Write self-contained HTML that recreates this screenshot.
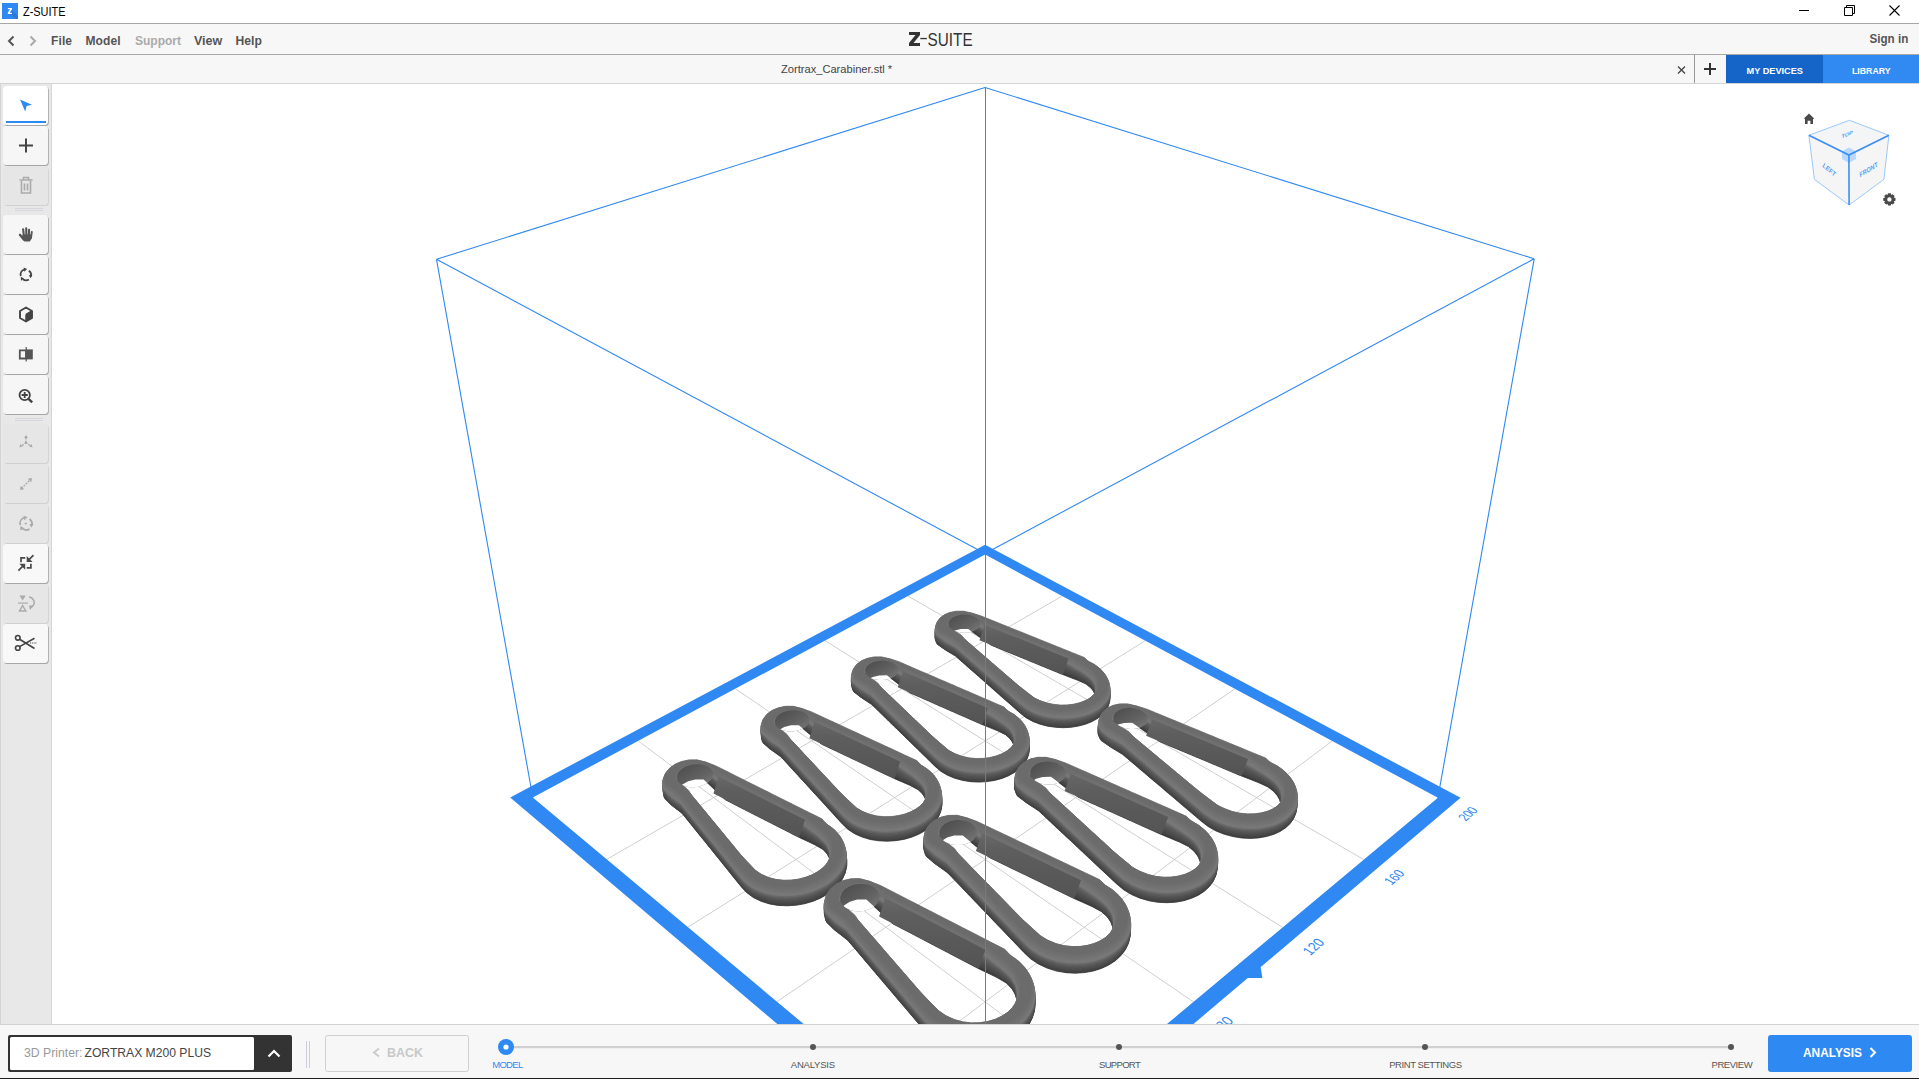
<!DOCTYPE html>
<html><head><meta charset="utf-8"><title>Z-SUITE</title>
<style>
html,body{margin:0;padding:0;width:1919px;height:1079px;overflow:hidden;background:#fff;}
svg{display:block;position:absolute;left:0;top:0;}
text{font-family:"Liberation Sans",sans-serif;}
</style></head><body>
<svg width="1919" height="1079" viewBox="0 0 1919 1079">
<defs>
<linearGradient id="holeg" x1="0" y1="0" x2="1" y2="1"><stop offset="0" stop-color="#4a4a4a"/><stop offset="0.6" stop-color="#626262"/><stop offset="1" stop-color="#7c7c7c"/></linearGradient>
<linearGradient id="gateg" x1="0" y1="0" x2="0" y2="1"><stop offset="0" stop-color="#686868"/><stop offset="0.25" stop-color="#5e5e5e"/><stop offset="1" stop-color="#545454"/></linearGradient>
<clipPath id="vp"><rect x="52" y="84" width="1867" height="940"/></clipPath>
</defs>
<!-- viewport scene -->
<g clip-path="url(#vp)">
<path d="M985,87.5L1534.2,258.8 M1534.2,258.8L985,553.5 M985,553.5L436.5,259.3 M436.5,259.3L985,87.5 M1534.2,258.8L1437.9,797.8 M436.5,259.3L532.8,797.5" stroke="#3088f2" stroke-width="1.1" fill="none"/>
<path d="M1062.2,596L606.8,859.4 M908,596L1363.8,859.6 M1145.3,640.6L687.8,927.2 M825,640.6L1282.6,927.4 M1235,688.8L777,1001.7 M735.4,688.7L1193.4,1001.9 M1332.2,741L875.6,1084.1 M638.3,740.9L1094.7,1084.3" stroke="#cfcfcf" stroke-width="1" fill="none"/>
<path d="M985.1,544.7 1460.6,797.8 985.2,1200.3 510.2,797.5Z M985.1,554.6 532.8,797.5 985.2,1175.8 1437.9,797.8Z" fill="#3088f2" fill-rule="evenodd"/>
<path d="M1246.6,978.1L1262.4,978.1L1260.4,965.8Z" fill="#3088f2"/>
<text transform="matrix(1.7569 -1.5183 2.8362 1.5229 1472.03 816.06)" font-size="4.3" text-anchor="middle" fill="#3088f2">200</text>
<text transform="matrix(1.9223 -1.6611 2.8816 1.6667 1398.44 879.66)" font-size="4.3" text-anchor="middle" fill="#3088f2">160</text>
<text transform="matrix(2.1121 -1.8252 2.9229 1.8318 1317.74 949.39)" font-size="4.3" text-anchor="middle" fill="#3088f2">120</text>
<text transform="matrix(2.3315 -2.0148 2.9579 2.0227 1228.87 1026.19)" font-size="4.3" text-anchor="middle" fill="#3088f2">80</text>
<text transform="matrix(2.5869 -2.2355 2.9839 2.2451 1130.51 1111.19)" font-size="4.3" text-anchor="middle" fill="#3088f2">40</text>
<path d="M1097,718.8 1091.6,721.8 1085.3,724.3 1078.4,726.1 1071.1,727.3 1063.3,727.7 1055.5,727.3 1047.6,726.2 1040,724.2 1032.7,721.4 1026,717.7 1020.1,713 1015.3,708.8 1011.4,705.3 1008.1,702.4 1005.2,699.9 1002.7,697.7 1000.5,695.8 998.5,694 996.7,692.4 995,690.9 993.4,689.5 991.9,688.2 990.5,686.9 989.1,685.7 987.7,684.5 986.4,683.4 985.1,682.2 983.8,681 982.5,679.9 981.2,678.7 979.8,677.5 978.4,676.2 976.9,674.9 975.3,673.5 973.6,672.1 971.8,670.5 969.9,668.8 967.7,666.9 965.3,664.7 962.5,662.3 959.3,659.5 955.5,656.1 946.9,650.9 937.2,644.3 935.5,639.5 936.3,635.3 938.9,631.7 943,628.8 948.2,626.5 954.5,625.1 961.7,624.7 969.8,625.8 980.3,630.7 987.8,633.8 994,636.3 999.1,638.3 1003.5,640.1 1007.3,641.7 1010.7,643.1 1013.8,644.3 1016.6,645.5 1019.1,646.5 1021.6,647.5 1023.8,648.4 1026,649.3 1028.1,650.2 1030.1,651 1032.1,651.8 1034.1,652.6 1036.1,653.4 1038.1,654.2 1040.1,655.1 1042.1,655.9 1044.3,656.8 1046.5,657.7 1048.8,658.6 1051.3,659.6 1054,660.7 1056.9,661.9 1060.1,663.2 1063.7,664.7 1067.7,666.3 1072.4,668.2 1077.9,670.5 1084.6,673.2 1091.6,676.5 1097.8,680.3 1102.6,684.5 1106.1,688.9 1108.3,693.4 1109.3,698.1 1109.1,702.7 1107.7,707.1 1105.2,711.4 1101.6,715.3Z M1090.6,710 1093.4,706.7 1095.2,703.2 1095.9,699.4 1095.4,695.6 1093.8,691.6 1090.7,687.8 1086,684 1078.2,680.4 1070.4,677.5 1064.5,675.2 1060,673.5 1056.5,672 1053.5,670.8 1051,669.7 1048.7,668.8 1046.6,668 1044.8,667.2 1043.1,666.5 1041.5,665.9 1040,665.2 1038.6,664.7 1037.2,664.1 1035.9,663.6 1034.6,663 1033.3,662.5 1032.1,662 1030.8,661.5 1029.5,660.9 1028.2,660.4 1026.9,659.8 1025.5,659.3 1024,658.7 1022.5,658 1020.8,657.4 1019,656.6 1017,655.8 1014.9,654.9 1012.4,653.9 1009.5,652.7 1006.2,651.4 1002.3,649.7 997.4,647.7 991.2,645.2 968.2,629 960.9,629 954.9,630.5 950.2,633 947.3,636.4 946.9,640.8 964.5,651.9 970,656.6 974.1,660.3 977.5,663.2 980.2,665.6 982.5,667.6 984.5,669.4 986.3,670.9 987.8,672.2 989.2,673.5 990.5,674.6 991.7,675.6 992.9,676.6 993.9,677.6 995,678.4 995.9,679.3 996.9,680.1 997.8,681 998.8,681.8 999.7,682.6 1000.7,683.4 1001.6,684.3 1002.6,685.1 1003.6,686 1004.7,687 1005.8,687.9 1007,689 1008.3,690.1 1009.8,691.4 1011.3,692.7 1013.1,694.3 1015.1,696 1017.5,698.1 1020.2,700.5 1023.6,703 1027.6,706.1 1032.8,710.1 1038.8,713.7 1045.3,716.5 1051.9,718.2 1058.6,719.1 1065.1,719.1 1071.4,718.5 1077.2,717.2 1082.4,715.3 1086.9,712.9Z" fill="#343434" stroke="#343434" stroke-width="0.8" fill-rule="evenodd"/>
<path d="M1097.5,717.8 1092,720.9 1085.7,723.3 1078.8,725.2 1071.4,726.4 1063.7,726.8 1055.8,726.5 1047.9,725.4 1040.2,723.4 1032.9,720.7 1026.2,717 1020.2,712.4 1015.3,708.1 1011.3,704.6 1008,701.6 1005.1,699.1 1002.6,696.9 1000.3,694.9 998.3,693.1 996.5,691.5 994.8,690 993.1,688.5 991.6,687.2 990.2,685.9 988.8,684.7 987.4,683.5 986.1,682.3 984.7,681.1 983.4,680 982.1,678.8 980.7,677.6 979.3,676.4 977.9,675.1 976.4,673.8 974.8,672.4 973.1,670.9 971.3,669.3 969.3,667.6 967.1,665.6 964.7,663.5 961.9,661 958.6,658.1 954.8,654.8 943.9,648.9 936.5,642.9 934.9,638.2 935.8,634 938.5,630.4 942.6,627.4 947.9,625.1 954.2,623.7 961.4,623.3 969.4,624.3 979.5,628.6 987.7,632.4 993.9,634.9 999,637 1003.4,638.8 1007.3,640.4 1010.7,641.8 1013.8,643 1016.6,644.2 1019.2,645.2 1021.6,646.2 1023.9,647.1 1026.1,648 1028.2,648.9 1030.2,649.7 1032.2,650.5 1034.2,651.4 1036.2,652.2 1038.2,653 1040.2,653.8 1042.3,654.6 1044.4,655.5 1046.7,656.4 1049,657.4 1051.5,658.4 1054.2,659.5 1057.1,660.7 1060.3,662 1063.9,663.5 1068,665.1 1072.7,667 1078.3,669.3 1085,672 1092.5,675.4 1098.6,679.2 1103.3,683.4 1106.8,687.8 1109,692.4 1109.9,697 1109.7,701.6 1108.3,706.1 1105.7,710.4 1102.1,714.3Z M1090.2,708.6 1093,705.3 1094.8,701.8 1095.4,698.1 1094.9,694.2 1093.2,690.3 1090,686.4 1085.1,682.7 1077.8,679.1 1071,676.3 1065.6,674.1 1061.3,672.3 1057.7,670.8 1054.6,669.5 1051.9,668.4 1049.6,667.5 1047.5,666.6 1045.6,665.8 1043.8,665.1 1042.2,664.4 1040.6,663.8 1039.2,663.2 1037.8,662.6 1036.4,662.1 1035.1,661.5 1033.8,661 1032.5,660.5 1031.2,659.9 1029.9,659.4 1028.5,658.8 1027.1,658.3 1025.7,657.7 1024.2,657 1022.6,656.4 1020.9,655.7 1019,654.9 1017,654.1 1014.7,653.2 1012.2,652.1 1009.3,650.9 1005.8,649.5 1001.8,647.8 996.7,645.8 990.4,643.2 968.2,627.8 960.9,627.9 954.9,629.3 950.3,631.8 947.4,635.3 946.9,639.6 965.5,651.1 970.8,655.8 974.9,659.3 978.2,662.2 980.9,664.5 983.2,666.5 985.1,668.2 986.9,669.7 988.4,671.1 989.8,672.3 991.1,673.4 992.2,674.4 993.3,675.4 994.4,676.3 995.4,677.2 996.4,678 997.3,678.8 998.2,679.6 999.2,680.4 1000.1,681.2 1001,682.1 1001.9,682.9 1002.9,683.7 1003.9,684.6 1005,685.5 1006.1,686.5 1007.3,687.5 1008.5,688.6 1009.9,689.8 1011.5,691.2 1013.2,692.7 1015.2,694.4 1017.5,696.4 1020.2,698.8 1023.5,701.3 1027.5,704.3 1032.5,708.2 1038.5,712 1045,714.8 1051.7,716.6 1058.3,717.5 1064.9,717.6 1071.1,717 1076.9,715.7 1082.1,713.8 1086.5,711.4Z" fill="#434343" stroke="#434343" stroke-width="0.8" fill-rule="evenodd"/>
<path d="M1097.5,716.6 1092,719.6 1085.8,722.1 1078.8,724 1071.4,725.1 1063.7,725.6 1055.8,725.3 1047.9,724.1 1040.2,722.2 1032.9,719.5 1026.2,715.8 1020.2,711.2 1015.3,706.9 1011.4,703.4 1008,700.4 1005.1,697.9 1002.6,695.7 1000.4,693.7 998.3,691.9 996.5,690.3 994.8,688.8 993.1,687.3 991.6,686 990.2,684.7 988.8,683.5 987.4,682.3 986.1,681.1 984.7,680 983.4,678.8 982.1,677.6 980.7,676.4 979.3,675.2 977.9,673.9 976.4,672.6 974.8,671.2 973.1,669.7 971.3,668.1 969.3,666.4 967.1,664.4 964.6,662.3 961.8,659.8 958.6,657 954.8,653.6 943.9,647.7 936.5,641.7 934.9,637 935.8,632.8 938.5,629.2 942.6,626.2 947.9,623.9 954.2,622.5 961.3,622.1 969.4,623.1 979.5,627.4 987.7,631.2 993.9,633.7 999,635.8 1003.4,637.6 1007.3,639.2 1010.7,640.6 1013.8,641.8 1016.6,643 1019.2,644 1021.6,645 1023.9,646 1026.1,646.9 1028.2,647.7 1030.3,648.5 1032.3,649.4 1034.3,650.2 1036.2,651 1038.2,651.8 1040.3,652.6 1042.3,653.5 1044.5,654.3 1046.7,655.2 1049,656.2 1051.5,657.2 1054.2,658.3 1057.2,659.5 1060.4,660.8 1064,662.3 1068.1,663.9 1072.8,665.9 1078.4,668.1 1085.1,670.9 1092.6,674.2 1098.7,678 1103.4,682.2 1106.8,686.6 1109,691.2 1110,695.8 1109.7,700.4 1108.3,704.9 1105.8,709.1 1102.2,713.1Z M1090.3,707.4 1093,704.1 1094.8,700.6 1095.5,696.8 1095,693 1093.2,689.1 1090,685.2 1085.1,681.5 1078.3,678 1071.9,675.2 1066.7,672.9 1062.5,671.1 1058.8,669.6 1055.7,668.3 1052.9,667.1 1050.5,666.1 1048.3,665.3 1046.4,664.4 1044.5,663.7 1042.9,663 1041.3,662.4 1039.8,661.8 1038.3,661.2 1036.9,660.6 1035.6,660 1034.2,659.5 1032.9,658.9 1031.5,658.4 1030.2,657.8 1028.8,657.2 1027.4,656.7 1025.9,656.1 1024.3,655.4 1022.7,654.7 1020.9,654 1019,653.2 1016.9,652.4 1014.6,651.4 1012,650.4 1009,649.1 1005.5,647.7 1001.3,646 996.1,643.8 989.5,641.1 968.2,626.7 960.9,626.7 954.9,628.2 950.2,630.7 947.3,634.1 946.9,638.5 965.5,649.9 970.8,654.6 974.9,658.2 978.2,661 980.9,663.4 983.2,665.3 985.2,667 986.9,668.5 988.4,669.9 989.8,671.1 991.1,672.2 992.2,673.2 993.4,674.2 994.4,675.1 995.4,676 996.4,676.8 997.3,677.6 998.2,678.4 999.2,679.2 1000.1,680 1001,680.8 1002,681.7 1002.9,682.5 1003.9,683.4 1005,684.3 1006.1,685.3 1007.3,686.3 1008.6,687.4 1010,688.6 1011.5,690 1013.2,691.5 1015.2,693.2 1017.5,695.2 1020.3,697.6 1023.5,700.1 1027.5,703.1 1032.5,706.9 1038.5,710.7 1045.1,713.6 1051.7,715.4 1058.4,716.3 1064.9,716.4 1071.1,715.8 1076.9,714.5 1082.1,712.6 1086.6,710.2Z" fill="#484848" stroke="#484848" stroke-width="0.8" fill-rule="evenodd"/>
<path d="M1097.6,715.4 1092.1,718.4 1085.8,720.9 1078.9,722.8 1071.5,723.9 1063.7,724.4 1055.8,724 1047.9,722.9 1040.2,721 1032.9,718.2 1026.2,714.6 1020.2,710 1015.4,705.7 1011.4,702.2 1008,699.2 1005.1,696.7 1002.6,694.5 1000.4,692.5 998.3,690.7 996.5,689.1 994.8,687.6 993.2,686.1 991.6,684.8 990.2,683.5 988.8,682.3 987.4,681.1 986.1,679.9 984.7,678.8 983.4,677.6 982.1,676.4 980.7,675.2 979.3,674 977.9,672.7 976.4,671.4 974.8,670 973.1,668.5 971.3,666.9 969.3,665.2 967.1,663.2 964.6,661.1 961.8,658.6 958.6,655.8 954.8,652.4 943.9,646.5 936.5,640.5 934.9,635.8 935.8,631.6 938.5,628 942.6,625 947.9,622.8 954.2,621.3 961.3,620.9 969.4,621.9 979.5,626.2 987.7,630.1 993.9,632.6 999,634.7 1003.5,636.5 1007.3,638 1010.7,639.4 1013.8,640.7 1016.6,641.8 1019.2,642.9 1021.6,643.8 1023.9,644.8 1026.1,645.7 1028.2,646.5 1030.3,647.4 1032.3,648.2 1034.3,649 1036.3,649.8 1038.3,650.6 1040.3,651.4 1042.4,652.3 1044.5,653.1 1046.7,654 1049.1,655 1051.6,656 1054.3,657.1 1057.2,658.3 1060.4,659.6 1064,661.1 1068.1,662.7 1072.8,664.7 1078.4,666.9 1085.1,669.7 1092.6,673 1098.7,676.8 1103.4,681 1106.9,685.4 1109.1,690 1110,694.6 1109.8,699.2 1108.4,703.7 1105.8,707.9 1102.2,711.9Z M1090.3,706.1 1093.1,702.9 1094.8,699.4 1095.5,695.6 1095,691.8 1093.3,687.9 1090.1,684 1085.2,680.3 1078.8,676.9 1072.7,674 1067.8,671.8 1063.7,669.9 1060,668.3 1056.7,667 1053.9,665.8 1051.4,664.8 1049.2,663.9 1047.1,663.1 1045.3,662.3 1043.5,661.6 1041.9,660.9 1040.4,660.3 1038.9,659.7 1037.4,659.1 1036,658.5 1034.7,658 1033.3,657.4 1031.9,656.8 1030.5,656.3 1029.1,655.7 1027.6,655.1 1026.1,654.4 1024.5,653.8 1022.8,653.1 1021,652.4 1019,651.6 1016.9,650.7 1014.5,649.7 1011.8,648.6 1008.7,647.3 1005.1,645.8 1000.8,644.1 995.5,641.9 988.7,639.1 968.2,625.5 960.9,625.5 954.8,627 950.2,629.5 947.3,632.9 946.9,637.3 965.5,648.7 970.8,653.4 974.9,657 978.2,659.8 980.9,662.2 983.2,664.1 985.2,665.8 986.9,667.3 988.4,668.7 989.8,669.9 991.1,671 992.3,672 993.4,673 994.4,673.9 995.4,674.8 996.4,675.6 997.3,676.4 998.3,677.2 999.2,678 1000.1,678.8 1001,679.6 1002,680.5 1002.9,681.3 1003.9,682.2 1005,683.1 1006.1,684.1 1007.3,685.1 1008.6,686.2 1010,687.4 1011.5,688.8 1013.3,690.3 1015.2,692 1017.5,694 1020.3,696.4 1023.6,698.9 1027.5,701.9 1032.6,705.7 1038.6,709.5 1045.1,712.4 1051.7,714.2 1058.4,715.1 1064.9,715.2 1071.2,714.5 1076.9,713.3 1082.1,711.4 1086.6,709Z" fill="#4d4d4d" stroke="#4d4d4d" stroke-width="0.8" fill-rule="evenodd"/>
<path d="M1097.6,714.2 1092.1,717.2 1085.9,719.7 1078.9,721.5 1071.5,722.7 1063.8,723.1 1055.9,722.8 1048,721.7 1040.3,719.8 1033,717 1026.2,713.4 1020.3,708.7 1015.4,704.5 1011.4,700.9 1008,698 1005.1,695.5 1002.6,693.2 1000.4,691.3 998.3,689.5 996.5,687.9 994.8,686.4 993.2,684.9 991.6,683.6 990.2,682.3 988.8,681.1 987.4,679.9 986.1,678.7 984.7,677.5 983.4,676.4 982.1,675.2 980.7,674 979.3,672.8 977.9,671.5 976.4,670.2 974.8,668.8 973.1,667.3 971.3,665.7 969.3,664 967.1,662 964.6,659.9 961.8,657.4 958.6,654.6 954.7,651.2 943.8,645.3 936.4,639.3 934.9,634.6 935.8,630.5 938.5,626.8 942.6,623.9 947.9,621.6 954.1,620.2 961.3,619.7 969.4,620.7 979.5,625 987.7,628.9 993.9,631.4 999,633.5 1003.5,635.3 1007.3,636.8 1010.7,638.2 1013.8,639.5 1016.6,640.6 1019.2,641.7 1021.7,642.7 1024,643.6 1026.1,644.5 1028.3,645.3 1030.3,646.2 1032.3,647 1034.3,647.8 1036.3,648.6 1038.3,649.4 1040.3,650.2 1042.4,651.1 1044.5,651.9 1046.8,652.9 1049.1,653.8 1051.6,654.8 1054.3,655.9 1057.2,657.1 1060.4,658.4 1064.1,659.9 1068.1,661.5 1072.9,663.5 1078.4,665.7 1085.2,668.5 1092.7,671.8 1098.8,675.6 1103.5,679.8 1106.9,684.2 1109.1,688.7 1110.1,693.4 1109.9,698 1108.4,702.5 1105.9,706.7 1102.3,710.6Z M1090.4,704.9 1093.1,701.7 1094.9,698.2 1095.6,694.4 1095.1,690.6 1093.3,686.7 1090.1,682.8 1085.2,679.1 1079.3,675.7 1073.5,672.9 1068.8,670.6 1064.9,668.7 1061.1,667.1 1057.8,665.7 1054.9,664.5 1052.3,663.5 1050,662.5 1047.9,661.7 1046,660.9 1044.2,660.2 1042.6,659.5 1041,658.8 1039.4,658.2 1038,657.6 1036.5,657 1035.1,656.4 1033.7,655.9 1032.3,655.3 1030.8,654.7 1029.4,654.1 1027.8,653.5 1026.3,652.8 1024.6,652.2 1022.9,651.5 1021,650.7 1019,649.9 1016.8,649 1014.4,648 1011.6,646.8 1008.4,645.5 1004.7,644 1000.3,642.2 994.8,640 987.9,637.1 968.2,624.3 960.8,624.4 954.8,625.8 950.2,628.3 947.3,631.7 946.9,636.1 965.4,647.5 970.8,652.2 974.9,655.8 978.2,658.6 980.9,661 983.2,662.9 985.2,664.7 986.9,666.1 988.4,667.5 989.8,668.7 991.1,669.8 992.3,670.8 993.4,671.8 994.4,672.7 995.4,673.6 996.4,674.4 997.3,675.2 998.3,676 999.2,676.8 1000.1,677.6 1001,678.4 1002,679.3 1002.9,680.1 1004,681 1005,681.9 1006.1,682.9 1007.3,683.9 1008.6,685 1010,686.2 1011.5,687.6 1013.3,689.1 1015.2,690.8 1017.6,692.8 1020.3,695.2 1023.6,697.7 1027.6,700.7 1032.6,704.5 1038.6,708.3 1045.1,711.2 1051.8,713 1058.4,713.9 1065,714 1071.2,713.3 1077,712 1082.2,710.2 1086.7,707.8Z" fill="#525252" stroke="#525252" stroke-width="0.8" fill-rule="evenodd"/>
<path d="M1097.7,712.9 1092.2,716 1085.9,718.5 1079,720.3 1071.6,721.5 1063.8,721.9 1055.9,721.6 1048,720.5 1040.3,718.6 1033,715.8 1026.2,712.1 1020.3,707.5 1015.4,703.2 1011.4,699.7 1008,696.8 1005.1,694.3 1002.6,692 1000.4,690.1 998.3,688.3 996.5,686.7 994.8,685.1 993.2,683.7 991.6,682.4 990.2,681.1 988.8,679.9 987.4,678.7 986.1,677.5 984.7,676.3 983.4,675.2 982.1,674 980.7,672.8 979.3,671.6 977.9,670.3 976.4,669 974.8,667.6 973.1,666.1 971.3,664.5 969.3,662.8 967.1,660.8 964.6,658.7 961.8,656.2 958.6,653.4 954.7,650 943.8,644.1 936.4,638.2 934.8,633.4 935.7,629.3 938.4,625.7 942.5,622.7 947.8,620.4 954.1,619 961.3,618.6 969.4,619.6 979.5,623.8 987.7,627.7 993.9,630.2 999,632.3 1003.5,634.1 1007.3,635.7 1010.7,637 1013.8,638.3 1016.6,639.4 1019.2,640.5 1021.7,641.5 1024,642.4 1026.2,643.3 1028.3,644.2 1030.3,645 1032.3,645.8 1034.3,646.6 1036.3,647.4 1038.3,648.2 1040.3,649 1042.4,649.9 1044.5,650.8 1046.8,651.7 1049.1,652.6 1051.6,653.6 1054.3,654.7 1057.3,655.9 1060.5,657.2 1064.1,658.7 1068.2,660.3 1072.9,662.3 1078.5,664.5 1085.2,667.3 1092.7,670.6 1098.8,674.4 1103.5,678.6 1107,683 1109.2,687.5 1110.2,692.2 1109.9,696.8 1108.5,701.2 1105.9,705.5 1102.3,709.4Z M1090.4,703.7 1093.2,700.5 1094.9,697 1095.6,693.2 1095.1,689.4 1093.4,685.4 1090.2,681.6 1085.3,677.9 1079.7,674.5 1074.2,671.7 1069.7,669.4 1065.9,667.5 1062.3,665.8 1058.8,664.4 1055.8,663.2 1053.2,662.1 1050.9,661.2 1048.7,660.3 1046.7,659.5 1044.9,658.8 1043.2,658.1 1041.6,657.4 1040,656.7 1038.5,656.1 1037,655.5 1035.5,654.9 1034.1,654.3 1032.6,653.7 1031.1,653.1 1029.6,652.5 1028.1,651.9 1026.5,651.2 1024.8,650.5 1023,649.8 1021.1,649 1019,648.2 1016.8,647.3 1014.2,646.2 1011.4,645.1 1008.1,643.7 1004.3,642.2 999.8,640.3 994.2,638 987.1,635.1 968.2,623.2 960.8,623.2 954.8,624.6 950.2,627.1 947.3,630.6 946.9,634.9 965.4,646.3 970.8,651 974.9,654.6 978.2,657.4 980.9,659.8 983.2,661.8 985.2,663.5 986.9,665 988.4,666.3 989.8,667.5 991.1,668.6 992.3,669.6 993.4,670.6 994.4,671.5 995.4,672.4 996.4,673.2 997.3,674 998.3,674.8 999.2,675.6 1000.1,676.4 1001,677.2 1002,678.1 1003,678.9 1004,679.8 1005,680.7 1006.1,681.7 1007.3,682.7 1008.6,683.8 1010,685 1011.5,686.4 1013.3,687.9 1015.3,689.6 1017.6,691.6 1020.3,693.9 1023.6,696.4 1027.6,699.5 1032.6,703.3 1038.6,707.1 1045.1,710 1051.8,711.7 1058.5,712.6 1065,712.7 1071.2,712.1 1077,710.8 1082.2,709 1086.7,706.6Z" fill="#585858" stroke="#585858" stroke-width="0.8" fill-rule="evenodd"/>
<path d="M1097.7,711.7 1092.2,714.8 1086,717.2 1079,719.1 1071.6,720.2 1063.8,720.7 1055.9,720.4 1048,719.2 1040.3,717.3 1033,714.6 1026.2,710.9 1020.3,706.3 1015.4,702 1011.4,698.5 1008,695.6 1005.2,693 1002.6,690.8 1000.4,688.9 998.3,687.1 996.5,685.4 994.8,683.9 993.2,682.5 991.6,681.2 990.2,679.9 988.8,678.7 987.4,677.5 986.1,676.3 984.7,675.1 983.4,674 982.1,672.8 980.7,671.6 979.3,670.4 977.9,669.1 976.4,667.8 974.8,666.4 973.1,664.9 971.3,663.3 969.3,661.6 967.1,659.7 964.6,657.5 961.8,655 958.6,652.2 954.7,648.8 943.8,642.9 936.4,637 934.8,632.3 935.7,628.1 938.4,624.5 942.5,621.5 947.8,619.2 954.1,617.8 961.3,617.4 969.4,618.4 979.5,622.7 987.7,626.5 993.9,629 999.1,631.1 1003.5,632.9 1007.3,634.5 1010.8,635.9 1013.8,637.1 1016.7,638.3 1019.3,639.3 1021.7,640.3 1024,641.2 1026.2,642.1 1028.3,643 1030.3,643.8 1032.4,644.6 1034.3,645.4 1036.3,646.2 1038.3,647 1040.4,647.9 1042.4,648.7 1044.6,649.6 1046.8,650.5 1049.2,651.4 1051.7,652.4 1054.4,653.5 1057.3,654.7 1060.5,656 1064.1,657.5 1068.2,659.2 1072.9,661.1 1078.5,663.3 1085.3,666.1 1092.8,669.4 1098.9,673.2 1103.6,677.3 1107,681.8 1109.2,686.3 1110.2,691 1110,695.6 1108.6,700 1106,704.3 1102.4,708.2Z M1090.5,702.5 1093.2,699.3 1095,695.7 1095.7,692 1095.2,688.1 1093.4,684.2 1090.2,680.4 1085.3,676.7 1080,673.4 1074.9,670.6 1070.6,668.3 1066.9,666.3 1063.4,664.6 1059.9,663.2 1056.8,661.9 1054.1,660.8 1051.7,659.8 1049.5,658.9 1047.5,658.1 1045.6,657.3 1043.8,656.6 1042.2,655.9 1040.5,655.3 1039,654.6 1037.5,654 1036,653.4 1034.5,652.8 1033,652.2 1031.5,651.6 1029.9,650.9 1028.3,650.3 1026.7,649.6 1024.9,648.9 1023.1,648.2 1021.1,647.4 1019,646.5 1016.7,645.5 1014.1,644.5 1011.2,643.3 1007.8,641.9 1003.9,640.3 999.3,638.4 993.5,636.1 986.2,633.1 968.2,622 960.8,622 954.8,623.5 950.2,626 947.3,629.4 946.8,633.7 965.4,645.2 970.8,649.8 974.9,653.4 978.2,656.2 980.9,658.6 983.2,660.6 985.2,662.3 986.9,663.8 988.4,665.1 989.8,666.3 991.1,667.4 992.3,668.4 993.4,669.4 994.4,670.3 995.4,671.2 996.4,672 997.3,672.8 998.3,673.6 999.2,674.4 1000.1,675.2 1001,676 1002,676.9 1003,677.7 1004,678.6 1005,679.5 1006.1,680.5 1007.3,681.5 1008.6,682.6 1010,683.8 1011.6,685.2 1013.3,686.7 1015.3,688.4 1017.6,690.4 1020.3,692.7 1023.6,695.2 1027.6,698.3 1032.6,702.1 1038.6,705.9 1045.2,708.7 1051.8,710.5 1058.5,711.4 1065,711.5 1071.3,710.9 1077.1,709.6 1082.3,707.7 1086.8,705.3Z" fill="#5f5f5f" stroke="#5f5f5f" stroke-width="0.8" fill-rule="evenodd"/>
<path d="M1097.8,710.5 1092.2,713.5 1086,716 1079,717.8 1071.6,719 1063.9,719.4 1055.9,719.1 1048,718 1040.3,716 1033,713.3 1026.3,709.6 1020.3,705 1015.4,700.7 1011.4,697.2 1008.1,694.3 1005.2,691.8 1002.7,689.6 1000.4,687.6 998.4,685.8 996.5,684.2 994.8,682.7 993.2,681.3 991.7,680 990.2,678.7 988.8,677.4 987.5,676.3 986.1,675.1 984.8,673.9 983.5,672.8 982.1,671.6 980.8,670.4 979.4,669.2 977.9,667.9 976.4,666.6 974.8,665.2 973.1,663.7 971.3,662.1 969.3,660.4 967.1,658.5 964.7,656.3 961.9,653.9 958.6,651 954.8,647.7 944,641.8 936.5,635.8 934.9,631.1 935.8,626.9 938.4,623.3 942.5,620.4 947.8,618.1 954.1,616.7 961.3,616.3 969.4,617.3 979.6,621.6 987.7,625.3 993.9,627.8 999.1,629.9 1003.5,631.7 1007.3,633.3 1010.8,634.7 1013.9,635.9 1016.7,637.1 1019.3,638.1 1021.7,639.1 1024,640 1026.2,640.9 1028.3,641.8 1030.4,642.6 1032.4,643.4 1034.4,644.2 1036.3,645 1038.3,645.8 1040.4,646.7 1042.5,647.5 1044.6,648.4 1046.8,649.3 1049.2,650.2 1051.7,651.3 1054.4,652.3 1057.3,653.5 1060.5,654.8 1064.2,656.3 1068.3,658 1073,659.9 1078.6,662.1 1085.3,664.9 1092.7,668.2 1098.8,672 1103.6,676.1 1107,680.5 1109.2,685.1 1110.2,689.7 1110,694.3 1108.6,698.8 1106,703 1102.4,706.9Z M1090.6,701.3 1093.3,698.1 1095.1,694.5 1095.8,690.8 1095.3,686.9 1093.5,683 1090.4,679.2 1085.5,675.5 1080.5,672.2 1075.5,669.4 1071.4,667.1 1067.9,665.1 1064.6,663.4 1060.9,661.9 1057.8,660.6 1055,659.5 1052.5,658.5 1050.3,657.5 1048.2,656.7 1046.3,655.9 1044.5,655.2 1042.8,654.5 1041.1,653.8 1039.5,653.1 1037.9,652.5 1036.4,651.9 1034.9,651.3 1033.3,650.6 1031.8,650 1030.2,649.4 1028.6,648.7 1026.9,648 1025.1,647.3 1023.2,646.5 1021.2,645.7 1019,644.8 1016.6,643.8 1014,642.8 1011,641.5 1007.6,640.1 1003.6,638.5 998.8,636.6 992.9,634.2 985.4,631.1 968.2,620.8 960.8,620.8 954.8,622.3 950.2,624.8 947.3,628.2 946.8,632.5 965.3,643.9 970.7,648.6 974.8,652.2 978.1,655 980.8,657.4 983.1,659.3 985.1,661.1 986.8,662.5 988.3,663.9 989.7,665.1 991,666.2 992.2,667.2 993.3,668.2 994.4,669.1 995.4,670 996.3,670.8 997.3,671.6 998.2,672.4 999.1,673.2 1000.1,674 1001,674.9 1002,675.7 1002.9,676.5 1003.9,677.4 1005,678.3 1006.1,679.3 1007.3,680.3 1008.6,681.4 1010,682.6 1011.5,684 1013.3,685.5 1015.3,687.2 1017.6,689.2 1020.3,691.6 1023.6,694.1 1027.6,697.1 1032.7,700.9 1038.7,704.7 1045.2,707.6 1051.9,709.3 1058.6,710.2 1065.1,710.3 1071.4,709.7 1077.1,708.4 1082.4,706.5 1086.9,704.1Z" fill="#6b6b6b" stroke="#6b6b6b" stroke-width="0.8" fill-rule="evenodd"/>
<path d="M1097.7,709.2 1092.2,712.2 1085.9,714.7 1079,716.5 1071.6,717.7 1063.8,718.1 1055.9,717.8 1048,716.6 1040.3,714.7 1033,711.9 1026.2,708.2 1020.3,703.6 1015.4,699.4 1011.4,695.9 1008.1,693 1005.2,690.4 1002.7,688.2 1000.5,686.3 998.4,684.5 996.6,682.9 994.9,681.4 993.3,680 991.8,678.7 990.3,677.4 988.9,676.2 987.6,675 986.2,673.8 984.9,672.7 983.6,671.5 982.2,670.3 980.9,669.2 979.5,667.9 978.1,666.7 976.6,665.4 975,664 973.3,662.5 971.5,660.9 969.5,659.2 967.3,657.3 964.9,655.1 962.1,652.7 958.8,649.9 955,646.5 944.7,640.8 936.7,634.7 935,630 935.9,625.8 938.5,622.2 942.6,619.2 947.9,617 954.2,615.6 961.4,615.2 969.5,616.2 979.9,620.9 987.7,624.2 993.9,626.7 999.1,628.8 1003.5,630.5 1007.4,632.1 1010.8,633.5 1013.9,634.7 1016.7,635.9 1019.3,636.9 1021.7,637.9 1024,638.9 1026.2,639.7 1028.3,640.6 1030.4,641.4 1032.4,642.2 1034.4,643 1036.4,643.8 1038.4,644.7 1040.4,645.5 1042.5,646.3 1044.6,647.2 1046.9,648.1 1049.2,649 1051.7,650.1 1054.4,651.1 1057.4,652.3 1060.6,653.6 1064.2,655.1 1068.3,656.8 1073,658.7 1078.6,660.9 1085.4,663.7 1092.5,667 1098.6,670.7 1103.4,674.9 1106.9,679.3 1109.1,683.8 1110.1,688.5 1109.9,693.1 1108.5,697.5 1105.9,701.7 1102.3,705.7Z M1090.7,700.1 1093.5,696.9 1095.3,693.4 1096,689.6 1095.5,685.8 1093.8,681.9 1090.6,678 1085.8,674.3 1081,671.1 1076.3,668.3 1072.3,665.9 1068.8,663.9 1065.7,662.1 1062,660.6 1058.8,659.3 1055.9,658.1 1053.4,657.1 1051.1,656.2 1049,655.3 1047,654.5 1045.1,653.7 1043.4,653 1041.7,652.3 1040,651.7 1038.4,651 1036.8,650.4 1035.3,649.7 1033.7,649.1 1032.1,648.4 1030.5,647.8 1028.8,647.1 1027.1,646.4 1025.2,645.7 1023.3,644.9 1021.3,644 1019,643.1 1016.6,642.1 1013.9,641 1010.8,639.8 1007.3,638.3 1003.2,636.7 998.3,634.7 992.2,632.2 984.6,629.1 968.2,619.6 960.8,619.7 954.8,621.1 950.1,623.6 947.2,627 946.8,631.4 965,642.6 970.4,647.3 974.6,650.9 977.9,653.8 980.6,656.1 982.9,658.1 984.9,659.8 986.6,661.3 988.2,662.7 989.6,663.9 990.9,665 992.1,666 993.2,667 994.2,667.9 995.2,668.8 996.2,669.6 997.2,670.5 998.1,671.3 999,672.1 1000,672.9 1000.9,673.7 1001.9,674.5 1002.8,675.4 1003.9,676.3 1004.9,677.2 1006,678.1 1007.2,679.2 1008.5,680.3 1010,681.5 1011.5,682.9 1013.3,684.4 1015.3,686.1 1017.6,688.1 1020.4,690.5 1023.7,693 1027.7,696.1 1032.8,699.9 1038.8,703.7 1045.3,706.5 1052,708.2 1058.7,709.1 1065.2,709.2 1071.5,708.6 1077.3,707.3 1082.5,705.4 1087,703Z" fill="#787878" stroke="#787878" stroke-width="0.8" fill-rule="evenodd"/>
<path d="M1097.5,707.8 1092,710.8 1085.8,713.3 1078.9,715.1 1071.4,716.3 1063.7,716.7 1055.8,716.3 1047.9,715.2 1040.2,713.2 1032.9,710.4 1026.2,706.7 1020.3,702.1 1015.4,697.9 1011.5,694.4 1008.1,691.5 1005.3,689 1002.8,686.9 1000.6,684.9 998.6,683.2 996.7,681.5 995,680.1 993.4,678.7 991.9,677.4 990.5,676.1 989.1,674.9 987.7,673.7 986.4,672.5 985.1,671.4 983.8,670.2 982.4,669.1 981.1,667.9 979.7,666.7 978.3,665.4 976.8,664.1 975.2,662.8 973.5,661.3 971.7,659.7 969.8,658 967.6,656.1 965.2,654 962.4,651.5 959.2,648.7 955.4,645.4 946.4,640.1 937,633.6 935.2,628.9 936.1,624.7 938.7,621.1 942.8,618.2 948.1,615.9 954.4,614.5 961.6,614.1 969.7,615.2 980.1,619.9 987.7,623 993.9,625.5 999.1,627.6 1003.5,629.4 1007.4,630.9 1010.8,632.3 1013.9,633.6 1016.7,634.7 1019.3,635.7 1021.7,636.7 1024,637.7 1026.2,638.5 1028.3,639.4 1030.4,640.2 1032.4,641 1034.4,641.9 1036.4,642.7 1038.4,643.5 1040.4,644.3 1042.5,645.1 1044.6,646 1046.9,646.9 1049.2,647.8 1051.8,648.9 1054.4,650 1057.4,651.1 1060.6,652.4 1064.2,653.9 1068.3,655.6 1073.1,657.5 1078.6,659.7 1085.4,662.5 1092.1,665.7 1098.3,669.5 1103.1,673.6 1106.6,678 1108.9,682.6 1109.9,687.2 1109.7,691.8 1108.3,696.2 1105.8,700.4 1102.1,704.3Z M1091,699 1093.8,695.8 1095.6,692.3 1096.3,688.5 1095.9,684.7 1094.2,680.7 1091.1,676.9 1086.3,673.2 1081.6,669.9 1077,667.1 1073.1,664.8 1069.7,662.7 1066.7,660.9 1063.1,659.3 1059.8,658 1056.8,656.8 1054.2,655.7 1051.9,654.8 1049.7,653.9 1047.7,653.1 1045.8,652.3 1043.9,651.6 1042.2,650.9 1040.5,650.2 1038.9,649.5 1037.3,648.8 1035.7,648.2 1034.1,647.5 1032.4,646.9 1030.8,646.2 1029,645.5 1027.3,644.8 1025.4,644 1023.4,643.2 1021.3,642.4 1019,641.4 1016.5,640.4 1013.7,639.3 1010.6,638 1007,636.5 1002.8,634.8 997.8,632.8 991.6,630.3 983.8,627.2 968.2,618.4 960.8,618.5 954.7,619.9 950.1,622.4 947.2,625.8 946.7,630.2 964.5,641.2 970,646 974.2,649.6 977.5,652.5 980.3,654.9 982.6,656.9 984.6,658.6 986.3,660.1 987.9,661.5 989.3,662.7 990.6,663.8 991.8,664.8 992.9,665.8 994,666.7 995,667.6 996,668.5 997,669.3 997.9,670.1 998.9,670.9 999.8,671.8 1000.7,672.6 1001.7,673.4 1002.7,674.3 1003.7,675.2 1004.8,676.1 1005.9,677.1 1007.1,678.1 1008.4,679.2 1009.9,680.5 1011.5,681.8 1013.2,683.4 1015.2,685.1 1017.6,687.2 1020.4,689.5 1023.7,692 1027.8,695.1 1032.9,699 1039,702.7 1045.5,705.5 1052.2,707.2 1058.9,708.1 1065.4,708.1 1071.7,707.5 1077.5,706.2 1082.7,704.3 1087.3,701.9Z" fill="#777777" stroke="#777777" stroke-width="0.8" fill-rule="evenodd"/>
<path d="M1097.3,706.4 1091.8,709.4 1085.6,711.9 1078.7,713.7 1071.3,714.8 1063.5,715.2 1055.6,714.9 1047.8,713.7 1040.1,711.7 1032.8,708.9 1026.1,705.1 1020.2,700.5 1015.4,696.3 1011.5,692.9 1008.2,690 1005.4,687.5 1002.9,685.4 1000.7,683.5 998.7,681.7 996.9,680.1 995.2,678.7 993.6,677.3 992.1,676 990.7,674.7 989.3,673.5 988,672.4 986.7,671.2 985.4,670.1 984.1,668.9 982.7,667.8 981.4,666.6 980,665.4 978.6,664.2 977.1,662.9 975.6,661.5 973.9,660.1 972.1,658.5 970.2,656.8 968,654.9 965.6,652.8 962.8,650.4 959.7,647.6 955.9,644.3 951.3,640.3 937.5,632.6 935.6,627.9 936.4,623.7 939,620.1 943,617.1 948.3,614.9 954.6,613.5 961.8,613.2 970,614.4 980.1,618.7 987.7,621.8 993.9,624.3 999.1,626.4 1003.5,628.2 1007.4,629.7 1010.8,631.1 1013.9,632.4 1016.7,633.5 1019.3,634.6 1021.8,635.5 1024.1,636.5 1026.3,637.4 1028.4,638.2 1030.4,639 1032.4,639.9 1034.4,640.7 1036.4,641.5 1038.4,642.3 1040.4,643.1 1042.5,643.9 1044.7,644.8 1046.9,645.7 1049.3,646.7 1051.8,647.7 1054.5,648.8 1057.4,649.9 1060.6,651.2 1064.3,652.7 1068.4,654.4 1073.1,656.3 1078.7,658.5 1085.4,661.3 1091.5,664.5 1097.8,668.2 1102.7,672.3 1106.2,676.7 1108.5,681.2 1109.6,685.8 1109.4,690.4 1108,694.8 1105.5,699.1 1101.9,702.9Z M1091.3,698 1094.2,694.7 1096,691.2 1096.7,687.4 1096.3,683.6 1094.7,679.6 1091.6,675.8 1087,672.1 1082.4,668.8 1077.9,666 1074,663.6 1070.7,661.5 1067.7,659.6 1064.1,658 1060.7,656.7 1057.8,655.5 1055.1,654.4 1052.7,653.4 1050.4,652.5 1048.3,651.6 1046.4,650.8 1044.5,650.1 1042.8,649.4 1041,648.7 1039.4,648 1037.7,647.3 1036.1,646.7 1034.4,646 1032.7,645.3 1031,644.6 1029.3,643.9 1027.5,643.2 1025.6,642.4 1023.5,641.6 1021.4,640.7 1019,639.7 1016.5,638.7 1013.6,637.6 1010.4,636.2 1006.7,634.8 1002.4,633 997.3,630.9 990.9,628.4 983.8,626 968.1,617.2 960.7,617.3 954.7,618.7 950.1,621.2 947.2,624.6 946.7,629 963.8,639.8 969.3,644.6 973.6,648.2 977,651.2 979.7,653.6 982.1,655.6 984.1,657.3 985.9,658.9 987.5,660.2 988.9,661.5 990.2,662.6 991.4,663.7 992.6,664.7 993.7,665.6 994.7,666.5 995.7,667.4 996.7,668.2 997.6,669 998.6,669.8 999.5,670.7 1000.5,671.5 1001.5,672.3 1002.5,673.2 1003.5,674.1 1004.6,675.1 1005.8,676 1007,677.1 1008.3,678.2 1009.8,679.5 1011.4,680.9 1013.2,682.4 1015.2,684.2 1017.6,686.3 1020.4,688.6 1023.8,691.2 1027.9,694.4 1033.1,698.3 1039.2,701.9 1045.7,704.6 1052.4,706.3 1059.1,707.1 1065.7,707.1 1072,706.5 1077.8,705.1 1083.1,703.2 1087.6,700.8Z" fill="#747474" stroke="#747474" stroke-width="0.8" fill-rule="evenodd"/>
<path d="M1097,705 1091.5,708 1085.2,710.4 1078.4,712.2 1071,713.3 1063.3,713.7 1055.4,713.3 1047.6,712.1 1039.9,710 1032.6,707.1 1026,703.3 1020.2,698.7 1015.4,694.6 1011.6,691.2 1008.3,688.4 1005.5,685.9 1003.1,683.8 1000.9,681.9 998.9,680.2 997.1,678.6 995.5,677.2 993.9,675.8 992.4,674.5 991,673.3 989.7,672.1 988.3,671 987,669.8 985.7,668.7 984.5,667.6 983.2,666.5 981.8,665.3 980.5,664.1 979.1,662.9 977.6,661.6 976.1,660.3 974.4,658.9 972.7,657.3 970.7,655.6 968.6,653.8 966.2,651.7 963.5,649.3 960.4,646.6 956.6,643.3 952.1,639.4 938.3,631.7 936.1,626.9 936.8,622.7 939.3,619.1 943.4,616.2 948.6,613.9 954.9,612.6 962.2,612.3 970.5,613.6 980.1,617.6 987.7,620.6 993.9,623.1 999.1,625.2 1003.5,627 1007.4,628.5 1010.8,629.9 1013.9,631.2 1016.7,632.3 1019.3,633.4 1021.8,634.4 1024.1,635.3 1026.3,636.2 1028.4,637 1030.4,637.8 1032.5,638.7 1034.5,639.5 1036.4,640.3 1038.4,641.1 1040.5,641.9 1042.6,642.7 1044.7,643.6 1046.9,644.5 1049.3,645.5 1051.8,646.5 1054.5,647.6 1057.4,648.7 1060.7,650 1064.3,651.5 1068.4,653.2 1073.1,655.1 1078.7,657.3 1085.5,660 1090.6,663.2 1097,666.9 1102,671 1105.6,675.4 1108,679.9 1109.1,684.5 1108.9,689 1107.6,693.4 1105.1,697.6 1101.5,701.5Z M1091.8,696.9 1094.7,693.7 1096.5,690.1 1097.3,686.4 1096.9,682.5 1095.4,678.6 1092.4,674.7 1088,671 1083.4,667.7 1078.9,664.9 1075,662.4 1071.6,660.3 1068.6,658.4 1065.2,656.8 1061.7,655.3 1058.7,654.1 1055.9,653 1053.4,652 1051.2,651.1 1049,650.2 1047,649.4 1045.1,648.6 1043.3,647.9 1041.6,647.2 1039.8,646.5 1038.1,645.8 1036.5,645.1 1034.8,644.4 1033.1,643.7 1031.3,643 1029.5,642.3 1027.7,641.6 1025.7,640.8 1023.6,639.9 1021.4,639 1019,638.1 1016.4,637 1013.5,635.8 1010.2,634.5 1006.4,633 1002,631.2 996.8,629 990.3,626.4 983.8,624.8 968.1,616 960.7,616.1 954.7,617.5 950,620 947.1,623.4 946.6,627.8 962.8,638.2 968.4,643.1 972.7,646.8 976.2,649.8 979,652.2 981.4,654.3 983.5,656.1 985.3,657.6 986.9,659 988.4,660.3 989.7,661.4 990.9,662.5 992.1,663.5 993.2,664.5 994.3,665.4 995.3,666.3 996.3,667.1 997.2,668 998.2,668.8 999.2,669.6 1000.2,670.5 1001.2,671.3 1002.2,672.2 1003.2,673.1 1004.3,674.1 1005.5,675.1 1006.8,676.2 1008.1,677.3 1009.6,678.6 1011.2,680 1013,681.6 1015.1,683.4 1017.6,685.5 1020.4,687.9 1023.9,690.5 1028.1,693.7 1033.4,697.8 1039.5,701.2 1046,703.8 1052.8,705.4 1059.5,706.2 1066.1,706.2 1072.4,705.5 1078.2,704.2 1083.5,702.3 1088.1,699.8Z" fill="#717171" stroke="#717171" stroke-width="0.8" fill-rule="evenodd"/>
<path d="M1096.4,703.4 1091,706.4 1084.8,708.8 1077.9,710.5 1070.6,711.6 1062.9,711.9 1055.1,711.5 1047.2,710.3 1039.6,708.2 1032.4,705.2 1025.8,701.2 1020.1,696.7 1015.4,692.6 1011.6,689.3 1008.4,686.5 1005.7,684.2 1003.3,682.1 1001.2,680.2 999.2,678.5 997.5,677 995.8,675.6 994.3,674.2 992.9,673 991.5,671.8 990.1,670.6 988.8,669.5 987.6,668.4 986.3,667.3 985,666.2 983.8,665.1 982.5,663.9 981.1,662.8 979.8,661.6 978.3,660.3 976.8,659 975.2,657.6 973.5,656.1 971.6,654.5 969.5,652.6 967.1,650.6 964.5,648.3 961.4,645.6 957.7,642.4 953.3,638.5 939.5,630.9 936.9,626 937.4,621.8 939.9,618.2 943.9,615.3 949.1,613.1 955.4,611.8 962.7,611.6 971.1,613.1 980.2,616.4 987.8,619.5 993.9,622 999.1,624.1 1003.5,625.9 1007.4,627.4 1010.8,628.8 1013.9,630 1016.7,631.2 1019.3,632.2 1021.8,633.2 1024.1,634.1 1026.3,635 1028.4,635.9 1030.4,636.7 1032.4,637.5 1034.4,638.3 1036.4,639.1 1038.4,639.9 1040.5,640.7 1042.5,641.6 1044.7,642.4 1046.9,643.3 1049.3,644.3 1051.8,645.3 1054.5,646.4 1057.4,647.6 1060.6,648.9 1064.2,650.3 1068.3,652 1073.1,653.9 1078.7,656.1 1085.4,658.8 1089.2,661.9 1095.9,665.6 1101,669.6 1104.8,674 1107.2,678.5 1108.3,683 1108.2,687.5 1106.9,691.9 1104.5,696.1 1101,700Z M1092.5,696 1095.4,692.8 1097.3,689.2 1098.1,685.4 1097.8,681.5 1096.3,677.6 1093.5,673.7 1089.3,670 1084.7,666.6 1080.1,663.7 1076.1,661.2 1072.6,659.1 1069.6,657.2 1066.2,655.5 1062.7,654 1059.6,652.8 1056.8,651.6 1054.2,650.6 1051.9,649.7 1049.7,648.8 1047.7,648 1045.7,647.2 1043.9,646.4 1042.1,645.7 1040.3,645 1038.6,644.3 1036.9,643.6 1035.1,642.9 1033.4,642.2 1031.6,641.5 1029.8,640.7 1027.9,639.9 1025.9,639.1 1023.7,638.3 1021.5,637.4 1019,636.4 1016.3,635.3 1013.4,634.1 1010,632.7 1006.1,631.2 1001.6,629.3 996.3,627.2 989.7,624.5 983.8,623.6 968,614.8 960.6,614.9 954.6,616.3 950,618.8 947,622.2 946.5,626.5 961.4,636.4 967.1,641.4 971.6,645.2 975.1,648.3 978,650.8 980.4,652.9 982.6,654.7 984.4,656.3 986.1,657.8 987.6,659.1 988.9,660.3 990.2,661.4 991.4,662.4 992.5,663.4 993.6,664.3 994.7,665.2 995.7,666.1 996.7,666.9 997.7,667.8 998.7,668.7 999.7,669.5 1000.7,670.4 1001.7,671.3 1002.8,672.3 1004,673.2 1005.2,674.3 1006.4,675.4 1007.8,676.6 1009.3,677.9 1011,679.3 1012.9,680.9 1015,682.8 1017.5,684.9 1020.5,687.3 1024,690.1 1028.3,693.4 1033.8,697.6 1039.9,700.8 1046.5,703.2 1053.2,704.8 1059.9,705.5 1066.6,705.4 1072.9,704.7 1078.8,703.3 1084.1,701.4 1088.7,698.9Z" fill="#6e6e6e" stroke="#6e6e6e" stroke-width="0.8" fill-rule="evenodd"/>
<path d="M1095.5,701.6 1090.1,704.5 1084,706.9 1077.2,708.6 1069.9,709.6 1062.2,709.9 1054.4,709.4 1046.7,708.1 1039.1,705.8 1032,702.7 1025.4,698.4 1019.9,694.1 1015.4,690.2 1011.7,687 1008.7,684.3 1006,682 1003.7,680 1001.6,678.2 999.7,676.6 998,675.1 996.5,673.7 995,672.4 993.6,671.2 992.2,670.1 990.9,668.9 989.7,667.8 988.4,666.8 987.2,665.7 986,664.6 984.8,663.6 983.5,662.5 982.2,661.4 980.9,660.2 979.5,659 978,657.7 976.5,656.4 974.8,654.9 972.9,653.3 970.9,651.5 968.6,649.6 966.1,647.3 963.1,644.7 959.5,641.6 955.2,637.9 941.7,630.5 938.2,625.3 938.5,621.1 940.8,617.5 944.7,614.6 949.9,612.4 956.2,611.2 963.6,611.2 972.4,613.2 980.6,615.8 988.1,618.8 994.2,621.2 999.3,623.3 1003.7,625.1 1007.5,626.6 1010.9,628 1013.9,629.2 1016.7,630.3 1019.3,631.3 1021.7,632.3 1024,633.2 1026.1,634.1 1028.2,634.9 1030.2,635.7 1032.2,636.5 1034.2,637.3 1036.2,638.1 1038.1,638.9 1040.1,639.7 1042.2,640.6 1044.3,641.4 1046.5,642.3 1048.8,643.2 1051.3,644.2 1054,645.3 1056.9,646.5 1060.1,647.7 1063.6,649.2 1067.7,650.8 1072.3,652.7 1077.9,654.9 1084.5,657.6 1086.8,660.5 1093.9,664.1 1099.3,668.2 1103.3,672.4 1105.8,676.9 1107.1,681.4 1107.1,685.9 1105.8,690.3 1103.5,694.4 1100,698.2Z M1093.5,695.3 1096.5,692 1098.5,688.4 1099.4,684.6 1099.2,680.7 1097.9,676.7 1095.3,672.8 1091.3,669.1 1086.8,665.7 1081.8,662.7 1077.5,660.1 1073.8,657.9 1070.6,655.9 1067.3,654.2 1063.7,652.7 1060.5,651.4 1057.6,650.3 1055,649.2 1052.6,648.3 1050.4,647.4 1048.3,646.5 1046.3,645.7 1044.4,644.9 1042.6,644.2 1040.8,643.5 1039,642.8 1037.3,642 1035.5,641.3 1033.7,640.6 1031.9,639.9 1030,639.1 1028.1,638.3 1026,637.5 1023.8,636.6 1021.5,635.7 1019,634.7 1016.3,633.6 1013.2,632.3 1009.8,631 1005.9,629.4 1001.3,627.5 995.8,625.3 989,622.6 978.2,616.9 968,613.5 960.6,613.6 954.5,615.1 949.9,617.6 946.9,621 946.4,625.3 961.4,635.2 965,639.5 969.6,643.5 973.3,646.7 976.3,649.3 978.8,651.5 981,653.4 983,655 984.7,656.5 986.2,657.9 987.7,659.1 989,660.2 990.2,661.3 991.4,662.3 992.5,663.3 993.6,664.2 994.7,665.2 995.7,666.1 996.8,667 997.8,667.8 998.8,668.7 999.9,669.7 1001,670.6 1002.1,671.6 1003.3,672.6 1004.6,673.7 1005.9,674.8 1007.3,676.1 1008.9,677.4 1010.7,678.9 1012.6,680.6 1014.8,682.6 1017.4,684.8 1020.5,687.3 1024.2,690.1 1028.7,693.7 1034.5,698.2 1040.5,700.8 1047.1,703 1053.9,704.4 1060.7,705.1 1067.4,704.9 1073.7,704.2 1079.7,702.7 1085,700.8 1089.7,698.3Z" fill="#6b6b6b" stroke="#6b6b6b" stroke-width="0.8" fill-rule="evenodd"/>
<path d="M979.5,640.2 1063,674.5 1068.5,658.6 984.7,624.7Z" fill="url(#gateg)"/>
<clipPath id="hw377"><path d="M975.6,630 973.5,631 971.1,631.8 968.4,632.4 965.7,632.7 962.9,632.7 960.1,632.4 957.5,631.8 955.1,631 953,630 951.2,628.8 949.9,627.4 949,625.9 948.5,624.3 948.6,622.8 949.1,621.2 950.1,619.7 951.5,618.4 953.3,617.2 955.5,616.2 957.9,615.4 960.5,614.8 963.2,614.6 966,614.6 968.7,614.8 971.3,615.4 973.6,616.2 975.7,617.2 977.5,618.4 978.9,619.7 979.8,621.2 980.3,622.8 980.3,624.4 979.8,625.9 978.8,627.4 977.4,628.8Z"/></clipPath>
<path d="M975.6,630 973.5,631 971.1,631.8 968.4,632.4 965.7,632.7 962.9,632.7 960.1,632.4 957.5,631.8 955.1,631 953,630 951.2,628.8 949.9,627.4 949,625.9 948.5,624.3 948.6,622.8 949.1,621.2 950.1,619.7 951.5,618.4 953.3,617.2 955.5,616.2 957.9,615.4 960.5,614.8 963.2,614.6 966,614.6 968.7,614.8 971.3,615.4 973.6,616.2 975.7,617.2 977.5,618.4 978.9,619.7 979.8,621.2 980.3,622.8 980.3,624.4 979.8,625.9 978.8,627.4 977.4,628.8Z" fill="url(#holeg)"/>
<path d="M1086.9,713 1082.4,715.4 1077.2,717.3 1071.4,718.6 1065.1,719.2 1058.6,719.2 1051.9,718.3 1045.3,716.6 1038.8,713.8 1032.8,710.2 1027.6,706.2 1023.6,703.1 1020.2,700.6 1017.5,698.2 1015.1,696.1 1013.1,694.4 1011.3,692.8 1009.8,691.5 1008.3,690.2 1007,689.1 1005.8,688 1004.7,687.1 1003.6,686.1 1002.6,685.2 1001.6,684.4 1000.7,683.5 999.7,682.7 998.8,681.9 997.8,681.1 996.9,680.2 995.9,679.4 995,678.5 993.9,677.7 992.9,676.7 991.7,675.7 990.5,674.7 989.2,673.6 987.8,672.3 986.3,671 984.5,669.4 982.5,667.7 980.2,665.7 977.5,663.3 974.1,660.4 970,656.7 964.5,652 946.9,640.9 947.3,636.5 950.3,633.1 954.9,630.6 960.9,629.1 968.2,629.1 991.2,645.3 997.4,647.8 1002.3,649.8 1006.2,651.4 1009.5,652.8 1012.4,654 1014.9,655 1017,655.9 1019,656.7 1020.8,657.4 1022.5,658.1 1024,658.8 1025.5,659.4 1026.9,659.9 1028.2,660.5 1029.5,661 1030.8,661.6 1032.1,662.1 1033.3,662.6 1034.6,663.1 1035.9,663.7 1037.2,664.2 1038.6,664.8 1040,665.3 1041.5,665.9 1043.1,666.6 1044.8,667.3 1046.6,668.1 1048.7,668.9 1051,669.8 1053.5,670.9 1056.5,672.1 1060,673.6 1064.5,675.3 1070.4,677.5 1078.2,680.5 1086,684.1 1090.7,687.9 1093.8,691.7 1095.4,695.7 1095.9,699.5 1095.2,703.3 1093.4,706.8 1090.6,710.1Z" fill="#fff" clip-path="url(#hw377)"/>
<path d="M1014.6,772.4 1008.7,775.7 1002.1,778.4 994.8,780.4 987,781.6 978.9,782.1 970.8,781.7 962.7,780.4 954.8,778.3 947.4,775.2 940.7,771.2 934.9,766.2 930.2,761.6 926.3,757.8 923.1,754.6 920.3,751.9 917.9,749.6 915.7,747.4 913.8,745.5 912,743.8 910.3,742.2 908.8,740.7 907.3,739.2 905.9,737.9 904.5,736.5 903.2,735.2 901.9,734 900.6,732.7 899.4,731.5 898.1,730.2 896.8,729 895.4,727.6 894,726.3 892.6,724.9 891.1,723.4 889.4,721.8 887.7,720.1 885.7,718.2 883.6,716.1 881.3,713.8 878.6,711.2 875.4,708.1 871.7,704.5 863.2,698.9 853.6,691.8 852.1,686.6 853.2,682.1 856.2,678.2 860.7,675 866.3,672.5 872.9,671 880.4,670.6 888.7,671.8 899.3,677.1 906.9,680.4 913.1,683.1 918.3,685.3 922.7,687.3 926.6,688.9 930,690.4 933.1,691.8 935.9,693 938.5,694.2 941,695.2 943.3,696.2 945.5,697.2 947.6,698.1 949.6,699 951.7,699.9 953.7,700.8 955.7,701.6 957.7,702.5 959.7,703.4 961.8,704.3 963.9,705.2 966.2,706.2 968.5,707.2 971,708.3 973.7,709.5 976.7,710.8 979.9,712.2 983.6,713.8 987.7,715.6 992.4,717.6 998,720.1 1004.8,723 1011.8,726.6 1018,730.7 1022.7,735.2 1026.1,740 1028.1,744.9 1028.8,749.9 1028.3,754.9 1026.6,759.8 1023.7,764.4 1019.7,768.6Z M1008.5,762.9 1011.6,759.3 1013.7,755.5 1014.7,751.4 1014.5,747.2 1013,743 1010.1,738.8 1005.5,734.7 997.6,730.8 989.7,727.6 983.7,725.2 979.2,723.3 975.6,721.7 972.6,720.4 970,719.3 967.7,718.2 965.6,717.3 963.8,716.5 962,715.8 960.4,715.1 958.9,714.4 957.5,713.8 956.1,713.2 954.8,712.6 953.5,712 952.2,711.4 950.9,710.9 949.6,710.3 948.3,709.7 947,709.2 945.7,708.6 944.2,707.9 942.8,707.3 941.2,706.6 939.5,705.9 937.7,705.1 935.7,704.2 933.5,703.2 931,702.1 928.1,700.8 924.8,699.4 920.8,697.6 915.8,695.4 909.6,692.7 886.9,675.2 879.2,675.3 872.9,676.8 867.9,679.6 864.6,683.2 863.8,688 881.4,699.9 886.7,705.1 890.8,709 894,712.2 896.7,714.8 899,717 900.9,718.8 902.7,720.5 904.2,722 905.6,723.3 906.8,724.5 908,725.6 909.1,726.7 910.1,727.7 911.1,728.7 912.1,729.6 913,730.5 914,731.4 914.9,732.3 915.8,733.2 916.7,734.1 917.7,735 918.6,735.9 919.6,736.9 920.7,737.9 921.8,739 923,740.1 924.3,741.3 925.6,742.7 927.2,744.2 928.9,745.8 930.9,747.7 933.2,750 935.9,752.5 939.2,755.3 943.2,758.7 948.3,762.9 954.3,766.9 960.9,769.9 967.7,771.8 974.6,772.7 981.4,772.8 987.9,772.1 994,770.7 999.6,768.6 1004.5,766Z" fill="#343434" stroke="#343434" stroke-width="0.8" fill-rule="evenodd"/>
<path d="M1015,771.4 1009.1,774.7 1002.4,777.4 995.1,779.4 987.3,780.7 979.2,781.2 971,780.8 962.9,779.6 955,777.5 947.6,774.5 940.8,770.5 934.9,765.5 930.2,760.9 926.2,757.1 923,753.9 920.1,751.1 917.7,748.7 915.5,746.6 913.5,744.6 911.7,742.9 910,741.2 908.4,739.7 906.9,738.2 905.5,736.9 904.2,735.5 902.8,734.2 901.5,732.9 900.2,731.7 898.9,730.4 897.6,729.1 896.3,727.8 894.9,726.5 893.5,725.1 892,723.7 890.5,722.2 888.8,720.6 887.1,718.8 885.1,717 883,714.9 880.6,712.5 877.9,709.9 874.7,706.8 870.9,703.1 860.1,696.7 852.8,690.3 851.5,685.2 852.7,680.7 855.8,676.8 860.3,673.6 865.9,671.1 872.5,669.6 880,669.1 888.3,670.2 898.5,674.8 906.7,679 913,681.7 918.2,684 922.6,685.9 926.5,687.6 930,689.1 933.1,690.4 935.9,691.7 938.5,692.8 941,693.9 943.3,694.9 945.5,695.9 947.6,696.8 949.7,697.7 951.7,698.6 953.8,699.4 955.8,700.3 957.8,701.2 959.8,702.1 961.9,703 964.1,703.9 966.3,704.9 968.7,706 971.2,707.1 974,708.2 976.9,709.5 980.2,710.9 983.8,712.5 987.9,714.3 992.7,716.4 998.4,718.9 1005.2,721.8 1012.7,725.4 1018.8,729.6 1023.4,734.1 1026.7,738.9 1028.7,743.8 1029.4,748.9 1028.8,753.9 1027.1,758.7 1024.1,763.3 1020.1,767.6Z M1008.1,761.4 1011.2,757.9 1013.3,754.1 1014.2,750 1014,745.8 1012.4,741.6 1009.4,737.4 1004.5,733.3 997.2,729.5 990.2,726.4 984.8,724 980.5,722.1 976.8,720.5 973.7,719.1 971,717.9 968.6,716.9 966.5,715.9 964.5,715.1 962.8,714.3 961.1,713.6 959.6,712.9 958.1,712.3 956.7,711.6 955.3,711 953.9,710.4 952.6,709.9 951.3,709.3 950,708.7 948.7,708.1 947.3,707.5 945.9,706.9 944.4,706.3 942.9,705.6 941.3,704.9 939.6,704.1 937.7,703.3 935.6,702.4 933.4,701.4 930.8,700.3 927.8,699 924.4,697.5 920.3,695.6 915.2,693.4 908.7,690.6 886.8,674.1 879.2,674.1 872.8,675.7 867.9,678.4 864.6,682.1 863.8,686.8 882.3,699.1 887.5,704.2 891.6,708.1 894.8,711.2 897.4,713.7 899.6,715.8 901.5,717.7 903.2,719.3 904.7,720.8 906.1,722.1 907.3,723.3 908.5,724.4 909.6,725.4 910.6,726.4 911.6,727.4 912.5,728.3 913.4,729.2 914.3,730 915.2,730.9 916.1,731.8 917.1,732.7 918,733.5 918.9,734.5 919.9,735.4 920.9,736.4 922,737.4 923.2,738.6 924.5,739.8 925.8,741.1 927.3,742.6 929,744.2 931,746.1 933.2,748.2 935.9,750.8 939.1,753.5 943.1,756.8 948.1,761 954,765.1 960.6,768.2 967.4,770.1 974.3,771.1 981.1,771.2 987.6,770.5 993.7,769.1 999.2,767.1 1004.1,764.5Z" fill="#434343" stroke="#434343" stroke-width="0.8" fill-rule="evenodd"/>
<path d="M1015.1,770.2 1009.1,773.5 1002.4,776.2 995.1,778.2 987.3,779.5 979.2,779.9 971,779.6 962.9,778.4 955,776.3 947.5,773.3 940.8,769.3 934.9,764.3 930.1,759.6 926.2,755.8 922.9,752.6 920.1,749.9 917.6,747.5 915.4,745.3 913.5,743.4 911.6,741.6 910,740 908.4,738.5 906.9,737 905.5,735.6 904.1,734.3 902.8,733 901.5,731.7 900.2,730.5 898.9,729.2 897.6,727.9 896.2,726.6 894.9,725.3 893.5,723.9 892,722.5 890.4,721 888.8,719.4 887,717.6 885.1,715.7 882.9,713.6 880.5,711.3 877.8,708.6 874.6,705.6 870.9,701.9 860,695.5 852.7,689.1 851.4,684 852.7,679.5 855.7,675.6 860.2,672.4 865.8,669.9 872.5,668.4 880,667.9 888.3,669 898.4,673.6 906.7,677.8 912.9,680.5 918.1,682.8 922.6,684.7 926.5,686.4 929.9,687.9 933,689.2 935.9,690.5 938.5,691.6 941,692.7 943.3,693.7 945.5,694.7 947.6,695.6 949.7,696.5 951.7,697.4 953.7,698.2 955.7,699.1 957.8,700 959.8,700.9 961.9,701.8 964.1,702.7 966.3,703.7 968.7,704.7 971.2,705.8 973.9,707 976.9,708.3 980.2,709.7 983.8,711.3 987.9,713.1 992.7,715.2 998.4,717.6 1005.2,720.6 1012.7,724.2 1018.8,728.3 1023.5,732.9 1026.7,737.6 1028.7,742.6 1029.4,747.6 1028.9,752.6 1027.1,757.5 1024.1,762.1 1020.1,766.4Z M1008.1,760.2 1011.2,756.6 1013.3,752.8 1014.2,748.8 1014,744.6 1012.4,740.3 1009.4,736.1 1004.5,732.1 997.7,728.3 991.1,725.3 986,722.8 981.7,720.9 977.9,719.2 974.7,717.8 972,716.6 969.5,715.5 967.3,714.5 965.3,713.7 963.5,712.9 961.8,712.1 960.2,711.4 958.7,710.8 957.2,710.1 955.8,709.5 954.4,708.9 953.1,708.3 951.7,707.7 950.3,707.1 949,706.5 947.6,705.9 946.1,705.3 944.6,704.6 943.1,703.9 941.4,703.2 939.6,702.4 937.7,701.6 935.6,700.6 933.2,699.6 930.6,698.4 927.5,697.1 924,695.5 919.7,693.7 914.5,691.4 907.9,688.5 886.8,672.9 879.1,672.9 872.8,674.5 867.8,677.2 864.6,680.9 863.8,685.6 882.3,697.9 887.5,703 891.5,706.9 894.7,710 897.4,712.5 899.6,714.6 901.5,716.5 903.2,718.1 904.7,719.5 906.1,720.8 907.3,722 908.5,723.2 909.5,724.2 910.6,725.2 911.5,726.1 912.5,727 913.4,727.9 914.3,728.8 915.2,729.7 916.1,730.5 917,731.4 918,732.3 918.9,733.2 919.9,734.2 920.9,735.2 922,736.2 923.2,737.3 924.4,738.5 925.8,739.9 927.3,741.3 929,743 931,744.8 933.2,747 935.9,749.6 939.1,752.3 943.1,755.6 948,759.7 954,763.8 960.6,766.9 967.4,768.9 974.3,769.9 981.1,770 987.6,769.3 993.7,767.9 999.2,765.9 1004.1,763.3Z" fill="#484848" stroke="#484848" stroke-width="0.8" fill-rule="evenodd"/>
<path d="M1015.1,768.9 1009.1,772.2 1002.4,774.9 995.1,776.9 987.3,778.2 979.2,778.7 971,778.3 962.8,777.1 955,775 947.5,772 940.8,768.1 934.9,763.1 930.1,758.4 926.2,754.6 922.9,751.4 920.1,748.6 917.6,746.2 915.4,744.1 913.4,742.2 911.6,740.4 909.9,738.8 908.4,737.2 906.9,735.8 905.4,734.4 904.1,733.1 902.7,731.8 901.4,730.5 900.1,729.2 898.8,728 897.5,726.7 896.2,725.4 894.8,724.1 893.4,722.7 891.9,721.3 890.4,719.8 888.7,718.1 887,716.4 885,714.5 882.9,712.4 880.5,710.1 877.7,707.4 874.6,704.3 870.8,700.7 859.9,694.3 852.7,687.9 851.4,682.8 852.6,678.3 855.7,674.4 860.1,671.2 865.8,668.7 872.4,667.2 879.9,666.7 888.2,667.8 898.4,672.4 906.7,676.6 912.9,679.3 918.1,681.5 922.6,683.5 926.5,685.2 929.9,686.7 933,688 935.9,689.3 938.5,690.4 940.9,691.5 943.3,692.5 945.5,693.4 947.6,694.4 949.7,695.3 951.7,696.2 953.7,697 955.7,697.9 957.7,698.8 959.8,699.7 961.9,700.6 964.1,701.5 966.3,702.5 968.7,703.5 971.2,704.6 973.9,705.8 976.9,707.1 980.2,708.5 983.8,710.1 987.9,711.9 992.7,714 998.4,716.4 1005.2,719.4 1012.7,723 1018.8,727.1 1023.5,731.6 1026.8,736.4 1028.7,741.4 1029.4,746.4 1028.9,751.4 1027.1,756.2 1024.2,760.9 1020.1,765.1Z M1008.1,758.9 1011.2,755.4 1013.3,751.6 1014.3,747.5 1014,743.3 1012.4,739.1 1009.4,734.9 1004.5,730.9 998.1,727.2 992,724.1 987,721.7 982.9,719.6 979.1,717.9 975.8,716.5 973,715.2 970.4,714.1 968.2,713.2 966.1,712.3 964.2,711.4 962.5,710.7 960.8,709.9 959.3,709.3 957.8,708.6 956.3,708 954.9,707.3 953.5,706.7 952.1,706.1 950.7,705.5 949.3,704.9 947.9,704.3 946.4,703.6 944.8,702.9 943.2,702.2 941.5,701.5 939.7,700.7 937.7,699.8 935.5,698.9 933.1,697.8 930.4,696.6 927.2,695.2 923.6,693.6 919.2,691.7 913.9,689.4 907.1,686.4 886.7,671.7 879.1,671.7 872.7,673.3 867.8,676 864.5,679.7 863.7,684.4 882.2,696.7 887.5,701.8 891.5,705.6 894.7,708.7 897.3,711.3 899.6,713.4 901.5,715.3 903.2,716.9 904.7,718.3 906,719.6 907.3,720.8 908.4,721.9 909.5,723 910.5,724 911.5,724.9 912.5,725.8 913.4,726.7 914.3,727.6 915.2,728.5 916.1,729.3 917,730.2 917.9,731.1 918.9,732 919.9,732.9 920.9,733.9 922,735 923.1,736.1 924.4,737.3 925.8,738.6 927.3,740.1 929,741.7 930.9,743.6 933.2,745.8 935.9,748.3 939.1,751 943.1,754.3 948,758.5 954,762.6 960.6,765.7 967.4,767.6 974.3,768.6 981.1,768.7 987.6,768 993.7,766.7 999.2,764.6 1004.1,762Z" fill="#4d4d4d" stroke="#4d4d4d" stroke-width="0.8" fill-rule="evenodd"/>
<path d="M1015.1,767.7 1009.2,771 1002.4,773.7 995.1,775.7 987.3,777 979.2,777.4 971,777.1 962.8,775.9 954.9,773.8 947.5,770.8 940.7,766.8 934.9,761.8 930.1,757.2 926.2,753.4 922.9,750.2 920,747.4 917.6,745 915.4,742.9 913.4,740.9 911.6,739.2 909.9,737.5 908.3,736 906.8,734.6 905.4,733.2 904,731.8 902.7,730.5 901.4,729.3 900.1,728 898.8,726.7 897.5,725.5 896.1,724.2 894.8,722.8 893.4,721.5 891.9,720 890.3,718.5 888.7,716.9 886.9,715.2 885,713.3 882.8,711.2 880.4,708.9 877.7,706.2 874.5,703.1 870.8,699.5 859.9,693.1 852.6,686.7 851.3,681.6 852.5,677.1 855.6,673.2 860.1,670 865.7,667.5 872.4,666 879.9,665.5 888.2,666.6 898.3,671.2 906.6,675.4 912.9,678.1 918.1,680.3 922.5,682.3 926.4,684 929.9,685.5 933,686.8 935.8,688.1 938.5,689.2 940.9,690.3 943.2,691.3 945.5,692.2 947.6,693.2 949.7,694.1 951.7,694.9 953.7,695.8 955.7,696.7 957.7,697.6 959.8,698.5 961.9,699.4 964,700.3 966.3,701.3 968.7,702.3 971.2,703.4 973.9,704.6 976.9,705.9 980.2,707.3 983.8,708.9 988,710.7 992.7,712.8 998.4,715.2 1005.2,718.2 1012.8,721.8 1018.8,725.9 1023.5,730.4 1026.8,735.2 1028.8,740.1 1029.5,745.2 1028.9,750.2 1027.1,755 1024.2,759.6 1020.1,763.9Z M1008.1,757.7 1011.2,754.2 1013.3,750.3 1014.3,746.3 1014,742.1 1012.4,737.9 1009.4,733.7 1004.5,729.6 998.5,726 992.7,723 988,720.5 984,718.4 980.3,716.7 976.9,715.2 973.9,713.9 971.3,712.8 969,711.8 966.9,710.8 965,710 963.2,709.2 961.5,708.5 959.9,707.8 958.3,707.1 956.8,706.4 955.4,705.8 953.9,705.2 952.5,704.5 951.1,703.9 949.6,703.3 948.1,702.6 946.6,702 945,701.3 943.4,700.5 941.6,699.8 939.7,698.9 937.7,698.1 935.4,697.1 933,696 930.2,694.8 927,693.4 923.2,691.7 918.7,689.8 913.2,687.4 906.2,684.3 886.7,670.5 879,670.5 872.7,672.1 867.7,674.8 864.4,678.5 863.7,683.2 882.2,695.5 887.4,700.6 891.4,704.4 894.6,707.5 897.3,710.1 899.5,712.2 901.4,714 903.1,715.7 904.6,717.1 906,718.4 907.2,719.6 908.4,720.7 909.5,721.8 910.5,722.7 911.5,723.7 912.4,724.6 913.3,725.5 914.3,726.4 915.2,727.2 916.1,728.1 917,729 917.9,729.9 918.8,730.8 919.8,731.7 920.9,732.7 922,733.8 923.1,734.9 924.4,736.1 925.7,737.4 927.3,738.9 929,740.5 930.9,742.4 933.2,744.5 935.8,747.1 939.1,749.8 943,753.1 948,757.2 954,761.3 960.6,764.5 967.4,766.4 974.3,767.4 981.1,767.5 987.6,766.8 993.7,765.4 999.3,763.4 1004.1,760.8Z" fill="#525252" stroke="#525252" stroke-width="0.8" fill-rule="evenodd"/>
<path d="M1015.1,766.5 1009.2,769.8 1002.5,772.4 995.1,774.4 987.3,775.7 979.2,776.2 971,775.8 962.8,774.6 954.9,772.5 947.5,769.5 940.7,765.6 934.8,760.6 930,755.9 926.1,752.1 922.8,748.9 920,746.2 917.5,743.8 915.3,741.6 913.4,739.7 911.5,737.9 909.9,736.3 908.3,734.8 906.8,733.3 905.4,731.9 904,730.6 902.7,729.3 901.3,728 900,726.8 898.7,725.5 897.4,724.2 896.1,722.9 894.7,721.6 893.3,720.2 891.9,718.8 890.3,717.3 888.6,715.7 886.9,714 884.9,712.1 882.8,710 880.4,707.7 877.6,705 874.5,701.9 870.7,698.3 859.8,691.9 852.5,685.5 851.2,680.4 852.5,675.9 855.5,672 860,668.8 865.7,666.3 872.3,664.8 879.8,664.3 888.1,665.4 898.3,670 906.6,674.2 912.8,676.9 918,679.1 922.5,681.1 926.4,682.8 929.9,684.3 933,685.6 935.8,686.9 938.5,688 940.9,689.1 943.2,690.1 945.4,691 947.6,692 949.7,692.9 951.7,693.7 953.7,694.6 955.7,695.5 957.7,696.4 959.8,697.2 961.9,698.1 964,699.1 966.3,700.1 968.7,701.1 971.2,702.2 973.9,703.4 976.9,704.7 980.2,706.1 983.8,707.7 988,709.5 992.7,711.5 998.4,714 1005.2,716.9 1012.8,720.5 1018.9,724.7 1023.5,729.2 1026.8,734 1028.8,738.9 1029.5,743.9 1028.9,748.9 1027.1,753.8 1024.2,758.4 1020.2,762.6Z M1008.1,756.4 1011.3,752.9 1013.3,749.1 1014.3,745.1 1014,740.9 1012.5,736.6 1009.4,732.5 1004.5,728.4 998.9,724.8 993.4,721.8 988.9,719.3 985.1,717.2 981.4,715.4 977.9,713.9 974.9,712.6 972.3,711.4 969.9,710.4 967.7,709.4 965.7,708.5 963.9,707.7 962.1,707 960.5,706.3 958.9,705.6 957.4,704.9 955.9,704.2 954.4,703.6 952.9,702.9 951.4,702.3 949.9,701.7 948.4,701 946.8,700.3 945.2,699.6 943.5,698.8 941.7,698.1 939.8,697.2 937.7,696.3 935.4,695.3 932.8,694.2 930,692.9 926.7,691.5 922.8,689.8 918.2,687.8 912.6,685.3 905.4,682.2 886.7,669.3 879,669.3 872.6,670.9 867.7,673.6 864.4,677.3 863.6,682 882.1,694.3 887.4,699.4 891.4,703.2 894.6,706.3 897.2,708.8 899.5,711 901.4,712.8 903.1,714.4 904.6,715.9 905.9,717.2 907.2,718.4 908.3,719.5 909.4,720.5 910.5,721.5 911.4,722.5 912.4,723.4 913.3,724.3 914.2,725.1 915.1,726 916,726.9 916.9,727.7 917.9,728.6 918.8,729.5 919.8,730.5 920.8,731.5 921.9,732.5 923.1,733.6 924.3,734.8 925.7,736.2 927.2,737.6 928.9,739.3 930.9,741.1 933.1,743.3 935.8,745.8 939.1,748.5 943,751.8 948,756 954,760.1 960.6,763.2 967.4,765.2 974.3,766.1 981.1,766.2 987.6,765.5 993.7,764.2 999.3,762.1 1004.1,759.5Z" fill="#585858" stroke="#585858" stroke-width="0.8" fill-rule="evenodd"/>
<path d="M1015.1,765.2 1009.2,768.5 1002.5,771.2 995.1,773.2 987.3,774.5 979.2,774.9 971,774.6 962.8,773.4 954.9,771.3 947.5,768.3 940.7,764.3 934.8,759.3 930,754.7 926.1,750.9 922.8,747.7 920,744.9 917.5,742.5 915.3,740.4 913.3,738.5 911.5,736.7 909.8,735.1 908.2,733.5 906.8,732.1 905.3,730.7 904,729.4 902.6,728.1 901.3,726.8 900,725.5 898.7,724.3 897.4,723 896.1,721.7 894.7,720.4 893.3,719 891.8,717.6 890.3,716.1 888.6,714.5 886.8,712.7 884.9,710.9 882.7,708.8 880.3,706.4 877.6,703.8 874.4,700.7 870.7,697.1 859.7,690.7 852.5,684.3 851.2,679.2 852.4,674.7 855.5,670.8 860,667.6 865.6,665.1 872.3,663.6 879.8,663.1 888.1,664.2 898.3,668.8 906.6,673 912.8,675.7 918,677.9 922.5,679.9 926.4,681.6 929.8,683.1 933,684.4 935.8,685.6 938.4,686.8 940.9,687.8 943.2,688.9 945.4,689.8 947.6,690.7 949.6,691.6 951.7,692.5 953.7,693.4 955.7,694.3 957.7,695.1 959.8,696 961.9,696.9 964,697.9 966.3,698.9 968.7,699.9 971.2,701 973.9,702.2 976.9,703.4 980.2,704.9 983.8,706.4 988,708.2 992.7,710.3 998.4,712.8 1005.2,715.7 1012.8,719.3 1018.9,723.4 1023.5,727.9 1026.8,732.7 1028.8,737.7 1029.5,742.7 1028.9,747.7 1027.2,752.5 1024.2,757.1 1020.2,761.4Z M1008.2,755.2 1011.3,751.7 1013.3,747.9 1014.3,743.8 1014,739.6 1012.5,735.4 1009.4,731.2 1004.6,727.2 999.3,723.6 994.1,720.6 989.8,718.1 986.1,716 982.6,714.1 979,712.6 975.9,711.2 973.2,710 970.7,709 968.5,708 966.5,707.1 964.6,706.3 962.8,705.5 961.1,704.8 959.4,704 957.9,703.4 956.3,702.7 954.8,702 953.3,701.4 951.8,700.7 950.3,700 948.7,699.4 947.1,698.7 945.4,697.9 943.7,697.2 941.8,696.3 939.8,695.5 937.7,694.5 935.3,693.5 932.7,692.4 929.8,691.1 926.4,689.6 922.4,687.9 917.7,685.8 911.9,683.3 904.5,680.1 886.6,668.1 878.9,668.1 872.6,669.7 867.6,672.4 864.3,676 863.6,680.8 882.1,693.1 887.3,698.1 891.3,702 894.6,705.1 897.2,707.6 899.4,709.8 901.4,711.6 903,713.2 904.5,714.7 905.9,716 907.1,717.2 908.3,718.3 909.4,719.3 910.4,720.3 911.4,721.2 912.3,722.1 913.3,723 914.2,723.9 915.1,724.8 916,725.6 916.9,726.5 917.8,727.4 918.8,728.3 919.8,729.3 920.8,730.3 921.9,731.3 923.1,732.4 924.3,733.6 925.7,734.9 927.2,736.4 928.9,738 930.8,739.9 933.1,742.1 935.8,744.6 939,747.3 943,750.6 948,754.7 954,758.9 960.6,762 967.4,763.9 974.3,764.9 981.1,765 987.6,764.3 993.7,762.9 999.3,760.9 1004.1,758.3Z" fill="#5f5f5f" stroke="#5f5f5f" stroke-width="0.8" fill-rule="evenodd"/>
<path d="M1015.1,763.9 1009.1,767.2 1002.4,769.9 995.1,771.9 987.3,773.2 979.2,773.6 970.9,773.3 962.8,772.1 954.9,770 947.4,767 940.7,763 934.8,758 930,753.4 926.1,749.6 922.8,746.4 920,743.6 917.5,741.2 915.3,739.1 913.3,737.2 911.5,735.4 909.8,733.8 908.2,732.3 906.8,730.8 905.3,729.4 904,728.1 902.6,726.8 901.3,725.5 900,724.3 898.7,723 897.4,721.8 896.1,720.5 894.7,719.2 893.3,717.8 891.8,716.4 890.3,714.9 888.6,713.2 886.8,711.5 884.9,709.6 882.8,707.6 880.4,705.2 877.6,702.6 874.5,699.5 870.7,695.9 860,689.6 852.5,683.1 851.2,678 852.4,673.5 855.5,669.6 860,666.4 865.6,663.9 872.3,662.4 879.8,662 888.1,663.1 898.3,667.8 906.5,671.8 912.8,674.5 918,676.7 922.4,678.7 926.3,680.4 929.8,681.9 932.9,683.2 935.8,684.4 938.4,685.6 940.9,686.6 943.2,687.6 945.4,688.6 947.5,689.5 949.6,690.4 951.7,691.3 953.7,692.2 955.7,693 957.7,693.9 959.7,694.8 961.8,695.7 964,696.7 966.3,697.6 968.7,698.7 971.2,699.8 973.9,700.9 976.9,702.2 980.2,703.6 983.8,705.2 988,707 992.7,709.1 998.4,711.5 1005.2,714.5 1012.7,718.1 1018.8,722.2 1023.5,726.7 1026.8,731.5 1028.8,736.4 1029.5,741.4 1028.9,746.4 1027.1,751.3 1024.2,755.9 1020.1,760.1Z M1008.2,754 1011.3,750.5 1013.4,746.7 1014.4,742.6 1014.1,738.4 1012.6,734.2 1009.5,730 1004.7,726 999.7,722.5 994.8,719.4 990.6,716.9 987.1,714.7 983.8,712.9 980.1,711.3 976.9,709.9 974.1,708.7 971.6,707.6 969.3,706.6 967.2,705.7 965.3,704.8 963.4,704 961.7,703.2 960,702.5 958.4,701.8 956.8,701.1 955.2,700.4 953.7,699.8 952.1,699.1 950.6,698.4 949,697.7 947.3,697 945.6,696.3 943.8,695.5 941.9,694.6 939.9,693.8 937.7,692.8 935.3,691.7 932.6,690.6 929.6,689.3 926.1,687.8 922,686 917.2,683.9 911.2,681.3 903.7,678 886.6,666.9 878.9,666.9 872.5,668.5 867.5,671.2 864.3,674.8 863.5,679.5 881.9,691.8 887.2,696.9 891.2,700.7 894.4,703.8 897.1,706.4 899.3,708.5 901.2,710.4 902.9,712 904.4,713.4 905.8,714.7 907,715.9 908.2,717 909.3,718.1 910.3,719.1 911.3,720 912.3,720.9 913.2,721.8 914.1,722.7 915,723.6 915.9,724.4 916.8,725.3 917.8,726.2 918.7,727.1 919.7,728.1 920.7,729 921.8,730.1 923,731.2 924.3,732.4 925.6,733.7 927.1,735.2 928.9,736.8 930.8,738.7 933.1,740.9 935.8,743.4 939,746.1 943,749.4 948,753.6 954,757.7 960.6,760.8 967.4,762.7 974.3,763.7 981.1,763.8 987.6,763.1 993.8,761.7 999.3,759.7 1004.2,757.1Z" fill="#6b6b6b" stroke="#6b6b6b" stroke-width="0.8" fill-rule="evenodd"/>
<path d="M1015,762.6 1009,765.9 1002.3,768.6 995,770.6 987.2,771.8 979.1,772.3 970.8,771.9 962.7,770.7 954.8,768.6 947.4,765.6 940.6,761.6 934.7,756.6 930,752 926.1,748.2 922.8,745 920,742.3 917.5,739.9 915.3,737.8 913.4,735.9 911.5,734.1 909.9,732.5 908.3,731 906.8,729.5 905.4,728.1 904,726.8 902.7,725.5 901.4,724.3 900.1,723 898.8,721.8 897.5,720.5 896.2,719.2 894.8,717.9 893.4,716.5 891.9,715.1 890.4,713.6 888.7,712 887,710.3 885,708.4 882.9,706.3 880.5,704 877.8,701.4 874.6,698.3 870.9,694.7 860.6,688.6 852.7,681.9 851.3,676.8 852.5,672.3 855.5,668.5 860,665.3 865.7,662.8 872.3,661.3 879.8,660.9 888.2,662 898.6,667 906.5,670.6 912.7,673.3 917.9,675.5 922.4,677.5 926.3,679.1 929.8,680.6 932.9,682 935.8,683.2 938.4,684.4 940.8,685.4 943.2,686.4 945.4,687.4 947.5,688.3 949.6,689.2 951.6,690.1 953.7,691 955.7,691.8 957.7,692.7 959.7,693.6 961.8,694.5 964,695.4 966.3,696.4 968.7,697.4 971.2,698.5 973.9,699.7 976.9,701 980.2,702.4 983.8,704 988,705.8 992.7,707.9 998.4,710.3 1005.2,713.3 1012.4,716.8 1018.6,720.9 1023.3,725.4 1026.6,730.2 1028.6,735.1 1029.3,740.1 1028.8,745.1 1027,749.9 1024.1,754.5 1020,758.8Z M1008.4,752.8 1011.5,749.3 1013.6,745.5 1014.5,741.4 1014.3,737.2 1012.8,733 1009.8,728.8 1005,724.8 1000.2,721.3 995.5,718.3 991.5,715.7 988,713.5 984.9,711.6 981.1,709.9 977.9,708.5 975,707.3 972.4,706.2 970.1,705.1 967.9,704.2 965.9,703.3 964.1,702.5 962.3,701.7 960.6,701 958.9,700.3 957.3,699.6 955.7,698.9 954.1,698.2 952.5,697.5 950.9,696.8 949.3,696.1 947.6,695.3 945.8,694.6 944,693.8 942,692.9 939.9,692 937.7,691 935.2,690 932.5,688.8 929.4,687.4 925.8,685.9 921.7,684.1 916.7,681.9 910.6,679.3 902.9,675.9 886.5,665.7 878.8,665.7 872.5,667.3 867.5,670 864.2,673.6 863.4,678.3 881.6,690.5 886.9,695.6 890.9,699.5 894.2,702.6 896.8,705.1 899.1,707.3 901,709.1 902.7,710.7 904.2,712.2 905.6,713.5 906.8,714.7 908,715.8 909.1,716.9 910.1,717.9 911.1,718.8 912.1,719.7 913,720.6 913.9,721.5 914.9,722.4 915.8,723.2 916.7,724.1 917.6,725 918.6,725.9 919.6,726.9 920.6,727.9 921.7,728.9 922.9,730.1 924.2,731.3 925.5,732.6 927.1,734.1 928.8,735.7 930.7,737.6 933,739.8 935.7,742.3 939,745.1 943,748.4 948,752.6 954,756.6 960.6,759.7 967.5,761.6 974.4,762.5 981.2,762.6 987.7,761.9 993.9,760.5 999.4,758.5 1004.3,755.9Z" fill="#787878" stroke="#787878" stroke-width="0.8" fill-rule="evenodd"/>
<path d="M1014.8,761.2 1008.9,764.5 1002.2,767.2 994.8,769.2 987,770.4 978.9,770.8 970.7,770.5 962.6,769.2 954.7,767.1 947.3,764.1 940.5,760 934.7,755 930,750.4 926.1,746.7 922.8,743.5 920,740.8 917.6,738.5 915.4,736.4 913.4,734.5 911.6,732.7 910,731.1 908.4,729.6 906.9,728.2 905.5,726.8 904.2,725.5 902.8,724.2 901.5,722.9 900.3,721.7 899,720.5 897.7,719.2 896.4,717.9 895,716.6 893.6,715.3 892.1,713.9 890.6,712.4 889,710.8 887.2,709.1 885.3,707.2 883.1,705.1 880.8,702.8 878.1,700.2 874.9,697.2 871.2,693.6 862.2,687.9 853,680.9 851.5,675.7 852.6,671.2 855.7,667.4 860.1,664.2 865.8,661.7 872.4,660.2 879.9,659.8 888.3,661 898.8,666.1 906.5,669.4 912.7,672.1 917.9,674.3 922.4,676.2 926.3,677.9 929.8,679.4 932.9,680.8 935.7,682 938.4,683.1 940.8,684.2 943.2,685.2 945.4,686.2 947.5,687.1 949.6,688 951.6,688.9 953.6,689.7 955.6,690.6 957.7,691.5 959.7,692.4 961.8,693.3 964,694.2 966.3,695.2 968.6,696.2 971.2,697.3 973.9,698.5 976.9,699.8 980.2,701.2 983.8,702.8 988,704.6 992.8,706.6 998.4,709.1 1005.2,712 1012,715.6 1018.2,719.7 1022.9,724.1 1026.3,728.9 1028.3,733.8 1029.1,738.8 1028.5,743.8 1026.8,748.6 1023.9,753.2 1019.8,757.4Z M1008.6,751.7 1011.7,748.2 1013.8,744.3 1014.8,740.3 1014.6,736.1 1013.1,731.9 1010.2,727.7 1005.5,723.6 1000.8,720.1 996.2,717.1 992.3,714.5 988.9,712.3 985.9,710.3 982.2,708.6 978.9,707.2 975.9,705.9 973.3,704.8 970.9,703.7 968.7,702.8 966.6,701.9 964.7,701 962.9,700.2 961.1,699.5 959.4,698.7 957.8,698 956.1,697.3 954.5,696.6 952.9,695.9 951.2,695.2 949.5,694.4 947.8,693.7 946,692.9 944.1,692.1 942.1,691.2 940,690.3 937.7,689.3 935.1,688.2 932.3,687 929.2,685.6 925.5,684 921.3,682.2 916.2,680 909.9,677.3 902.1,673.9 886.5,664.4 878.8,664.5 872.4,666 867.4,668.7 864.1,672.4 863.4,677.1 881,689.1 886.4,694.2 890.5,698.1 893.7,701.2 896.4,703.8 898.7,706 900.6,707.8 902.4,709.5 903.9,711 905.3,712.3 906.5,713.5 907.7,714.6 908.8,715.7 909.9,716.7 910.9,717.6 911.8,718.6 912.8,719.5 913.7,720.3 914.6,721.2 915.5,722.1 916.5,723 917.4,723.9 918.4,724.8 919.4,725.8 920.4,726.8 921.5,727.9 922.7,729 924,730.2 925.4,731.5 927,733 928.7,734.7 930.7,736.6 933,738.8 935.7,741.3 939,744.1 943,747.5 948.1,751.7 954.1,755.7 960.7,758.7 967.6,760.5 974.5,761.5 981.3,761.5 987.9,760.8 994,759.4 999.6,757.4 1004.5,754.8Z" fill="#777777" stroke="#777777" stroke-width="0.8" fill-rule="evenodd"/>
<path d="M1014.5,759.8 1008.6,763.1 1001.9,765.7 994.6,767.7 986.8,768.9 978.7,769.3 970.5,768.9 962.4,767.7 954.5,765.5 947.2,762.4 940.4,758.3 934.6,753.3 929.9,748.8 926.1,745.1 922.9,742 920.1,739.3 917.7,736.9 915.5,734.9 913.6,733 911.8,731.2 910.1,729.7 908.6,728.2 907.1,726.7 905.7,725.4 904.4,724.1 903.1,722.8 901.8,721.6 900.5,720.3 899.2,719.1 897.9,717.9 896.6,716.6 895.3,715.3 893.9,714 892.5,712.6 890.9,711.1 889.3,709.5 887.6,707.8 885.7,706 883.5,704 881.2,701.7 878.5,699.1 875.4,696.1 871.7,692.5 867.2,688.2 853.5,679.8 851.8,674.7 852.9,670.2 855.9,666.3 860.3,663.1 866,660.7 872.6,659.2 880.1,658.9 888.6,660.1 898.8,664.8 906.4,668.2 912.7,670.8 917.9,673.1 922.4,675 926.3,676.7 929.7,678.2 932.9,679.6 935.7,680.8 938.3,681.9 940.8,683 943.1,684 945.4,685 947.5,685.9 949.6,686.8 951.6,687.7 953.6,688.5 955.6,689.4 957.7,690.3 959.7,691.2 961.8,692.1 964,693 966.3,694 968.6,695 971.2,696.1 973.9,697.3 976.9,698.6 980.1,700 983.8,701.6 988,703.3 992.8,705.4 998.4,707.9 1005.3,710.8 1011.3,714.3 1017.6,718.4 1022.4,722.8 1025.8,727.6 1027.9,732.5 1028.7,737.5 1028.2,742.4 1026.5,747.2 1023.6,751.8 1019.5,756Z M1008.9,750.6 1012.1,747.1 1014.2,743.2 1015.2,739.2 1015.1,735 1013.6,730.7 1010.7,726.6 1006.2,722.5 1001.6,719 997.1,715.9 993.2,713.3 989.8,711.1 986.9,709.1 983.3,707.3 979.9,705.8 976.8,704.5 974.1,703.4 971.7,702.3 969.4,701.3 967.3,700.4 965.4,699.5 963.5,698.7 961.7,698 959.9,697.2 958.2,696.5 956.6,695.7 954.9,695 953.2,694.3 951.5,693.6 949.8,692.8 948,692 946.2,691.2 944.3,690.4 942.2,689.5 940,688.6 937.7,687.5 935.1,686.4 932.2,685.2 928.9,683.8 925.2,682.1 920.9,680.3 915.7,678 909.3,675.2 902.1,672.7 886.4,663.2 878.7,663.3 872.3,664.8 867.3,667.5 864.1,671.2 863.3,675.9 880.3,687.6 885.7,692.7 889.8,696.7 893.1,699.9 895.9,702.5 898.1,704.7 900.1,706.6 901.9,708.2 903.4,709.7 904.8,711 906.1,712.3 907.3,713.4 908.4,714.5 909.5,715.5 910.5,716.5 911.5,717.4 912.4,718.3 913.4,719.2 914.3,720.1 915.2,721 916.2,721.9 917.1,722.8 918.1,723.8 919.1,724.7 920.2,725.7 921.3,726.8 922.5,728 923.8,729.2 925.2,730.6 926.8,732.1 928.6,733.7 930.6,735.7 932.9,737.9 935.7,740.5 939,743.3 943.1,746.7 948.2,751 954.3,754.9 960.9,757.8 967.8,759.6 974.7,760.5 981.6,760.5 988.1,759.8 994.3,758.4 999.9,756.3 1004.8,753.7Z" fill="#747474" stroke="#747474" stroke-width="0.8" fill-rule="evenodd"/>
<path d="M1014.1,758.3 1008.2,761.5 1001.6,764.2 994.3,766.1 986.5,767.3 978.4,767.7 970.3,767.3 962.2,766 954.3,763.8 947,760.6 940.3,756.4 934.6,751.5 929.9,747 926.2,743.3 923,740.3 920.2,737.6 917.8,735.3 915.7,733.3 913.8,731.4 912,729.7 910.4,728.1 908.9,726.6 907.4,725.3 906,723.9 904.7,722.6 903.4,721.4 902.1,720.2 900.9,718.9 899.6,717.7 898.4,716.5 897.1,715.3 895.7,714 894.4,712.7 892.9,711.3 891.4,709.8 889.8,708.3 888.1,706.6 886.2,704.8 884.1,702.8 881.8,700.5 879.1,698 876.1,695 872.4,691.5 868,687.2 854.2,678.9 852.3,673.7 853.3,669.2 856.2,665.3 860.6,662.1 866.2,659.7 872.9,658.3 880.4,658 889,659.4 898.7,663.6 906.4,666.9 912.6,669.6 917.9,671.9 922.3,673.8 926.2,675.5 929.7,677 932.8,678.4 935.7,679.6 938.3,680.7 940.8,681.8 943.1,682.8 945.3,683.7 947.5,684.7 949.6,685.6 951.6,686.4 953.6,687.3 955.6,688.2 957.6,689 959.7,689.9 961.8,690.8 964,691.8 966.2,692.8 968.6,693.8 971.2,694.9 973.9,696.1 976.9,697.3 980.1,698.7 983.8,700.3 988,702.1 992.8,704.2 998.4,706.6 1005.3,709.6 1010.3,713 1016.8,717 1021.7,721.5 1025.2,726.2 1027.3,731.1 1028.1,736 1027.7,741 1026,745.8 1023.1,750.3 1019.1,754.5Z M1009.3,749.6 1012.5,746 1014.7,742.2 1015.8,738.1 1015.7,733.9 1014.3,729.7 1011.5,725.5 1007.1,721.4 1002.6,717.9 998,714.8 994.2,712.1 990.8,709.8 987.8,707.8 984.4,706 980.9,704.5 977.8,703.1 975,702 972.5,700.9 970.2,699.9 968,698.9 966,698.1 964.1,697.2 962.2,696.4 960.5,695.7 958.7,694.9 957,694.2 955.3,693.4 953.6,692.7 951.9,691.9 950.1,691.2 948.3,690.4 946.4,689.6 944.4,688.7 942.3,687.8 940.1,686.8 937.7,685.8 935,684.6 932.1,683.4 928.7,681.9 924.9,680.3 920.5,678.3 915.2,676 908.6,673.2 902,671.5 886.3,662 878.6,662 872.3,663.6 867.3,666.3 864,670 863.2,674.6 879.2,685.9 884.7,691.2 888.9,695.2 892.3,698.4 895.1,701.1 897.4,703.3 899.4,705.3 901.2,706.9 902.8,708.5 904.2,709.8 905.5,711.1 906.7,712.2 907.9,713.3 908.9,714.3 910,715.3 911,716.3 911.9,717.2 912.9,718.1 913.8,719 914.8,719.9 915.8,720.9 916.7,721.8 917.7,722.7 918.8,723.7 919.9,724.8 921,725.9 922.2,727 923.5,728.3 925,729.7 926.6,731.2 928.4,732.9 930.4,734.9 932.8,737.1 935.6,739.7 939,742.6 943.2,746.1 948.4,750.5 954.5,754.2 961.2,757 968.1,758.8 975,759.6 981.9,759.6 988.5,758.9 994.7,757.4 1000.3,755.3 1005.2,752.7Z" fill="#717171" stroke="#717171" stroke-width="0.8" fill-rule="evenodd"/>
<path d="M1013.6,756.7 1007.7,759.9 1001.1,762.5 993.8,764.4 986.1,765.6 978,765.9 969.9,765.4 961.8,764.1 954,761.8 946.7,758.6 940.1,754.2 934.5,749.3 930,745 926.2,741.4 923.1,738.4 920.4,735.8 918.1,733.5 916,731.5 914.1,729.7 912.4,728 910.8,726.5 909.3,725 907.8,723.7 906.5,722.4 905.2,721.1 903.9,719.9 902.7,718.7 901.4,717.5 900.2,716.3 899,715.1 897.7,713.9 896.4,712.6 895,711.3 893.6,710 892.2,708.5 890.6,707 888.9,705.4 887,703.6 885,701.6 882.7,699.4 880.1,696.9 877.1,694 873.5,690.5 869.1,686.4 855.4,678.1 853,672.8 853.9,668.3 856.7,664.4 861.1,661.2 866.7,658.9 873.3,657.5 880.9,657.3 889.6,658.9 898.7,662.5 906.4,665.8 912.6,668.5 917.8,670.7 922.3,672.7 926.2,674.3 929.7,675.8 932.8,677.2 935.7,678.4 938.3,679.5 940.7,680.6 943.1,681.6 945.3,682.6 947.4,683.5 949.5,684.4 951.5,685.3 953.6,686.1 955.6,687 957.6,687.9 959.6,688.7 961.7,689.6 963.9,690.6 966.2,691.6 968.6,692.6 971.1,693.7 973.8,694.9 976.8,696.1 980.1,697.5 983.7,699.1 987.9,700.9 992.7,703 998.3,705.4 1005.1,708.3 1008.9,711.6 1015.6,715.6 1020.7,720 1024.3,724.7 1026.5,729.6 1027.4,734.5 1026.9,739.5 1025.3,744.2 1022.5,748.7 1018.5,752.9Z M1010,748.7 1013.2,745.1 1015.4,741.2 1016.6,737.1 1016.5,732.9 1015.2,728.7 1012.6,724.5 1008.4,720.4 1003.9,716.8 999.2,713.6 995.3,710.9 991.8,708.6 988.8,706.5 985.4,704.7 981.8,703.1 978.7,701.8 975.9,700.5 973.3,699.4 970.9,698.4 968.7,697.5 966.7,696.6 964.7,695.7 962.8,694.9 961,694.1 959.2,693.3 957.4,692.6 955.7,691.8 954,691.1 952.2,690.3 950.4,689.5 948.5,688.7 946.6,687.9 944.6,687 942.4,686.1 940.1,685.1 937.7,684 935,682.9 931.9,681.6 928.5,680.1 924.6,678.4 920.1,676.4 914.7,674.1 908,671.2 902,670.3 886.2,660.7 878.5,660.8 872.2,662.4 867.2,665.1 863.9,668.7 863,673.4 877.7,684.1 883.3,689.5 887.7,693.6 891.1,696.9 894,699.6 896.4,701.9 898.4,703.9 900.2,705.6 901.9,707.2 903.3,708.6 904.7,709.9 905.9,711.1 907.1,712.2 908.2,713.2 909.2,714.2 910.3,715.2 911.3,716.2 912.3,717.1 913.2,718 914.2,719 915.2,719.9 916.2,720.9 917.2,721.8 918.3,722.9 919.4,723.9 920.6,725.1 921.8,726.2 923.2,727.5 924.6,729 926.3,730.5 928.1,732.3 930.2,734.3 932.7,736.6 935.6,739.2 939.1,742.2 943.3,745.8 948.8,750.4 954.8,753.8 961.5,756.5 968.4,758.1 975.4,758.9 982.3,758.9 989,758.1 995.2,756.6 1000.8,754.5 1005.8,751.8Z" fill="#6e6e6e" stroke="#6e6e6e" stroke-width="0.8" fill-rule="evenodd"/>
<path d="M1012.6,754.8 1006.8,758 1000.2,760.5 993,762.4 985.3,763.5 977.4,763.8 969.3,763.2 961.3,761.8 953.6,759.4 946.3,755.9 939.8,751.3 934.4,746.6 930,742.4 926.4,738.9 923.4,736 920.8,733.5 918.5,731.3 916.5,729.4 914.6,727.6 913,726 911.4,724.5 910,723.1 908.6,721.8 907.3,720.6 906,719.3 904.8,718.2 903.6,717 902.4,715.8 901.2,714.7 900,713.5 898.7,712.4 897.5,711.1 896.2,709.9 894.8,708.6 893.4,707.2 891.9,705.7 890.2,704.2 888.4,702.4 886.4,700.5 884.2,698.4 881.7,696 878.8,693.1 875.3,689.8 871.1,685.7 857.6,677.7 854.4,672.2 854.9,667.6 857.6,663.7 861.9,660.6 867.4,658.3 874.1,656.9 881.7,656.9 890.8,659.1 899.1,661.8 906.7,665.1 912.8,667.8 918,670 922.4,671.9 926.3,673.5 929.7,675 932.8,676.3 935.6,677.5 938.2,678.7 940.6,679.7 942.9,680.7 945.1,681.6 947.2,682.5 949.3,683.4 951.3,684.3 953.3,685.1 955.2,686 957.2,686.9 959.3,687.7 961.3,688.6 963.5,689.6 965.7,690.5 968.1,691.5 970.6,692.6 973.3,693.8 976.2,695 979.4,696.4 983,698 987.1,699.7 991.9,701.8 997.4,704.2 1004.2,707.1 1006.3,710.2 1013.5,714.1 1018.9,718.5 1022.7,723.2 1025,728 1026,732.9 1025.7,737.8 1024.1,742.5 1021.4,747 1017.5,751.1Z M1011,748 1014.3,744.4 1016.6,740.5 1017.8,736.4 1017.9,732.1 1016.8,727.8 1014.3,723.6 1010.5,719.5 1006,715.8 1001,712.5 996.7,709.8 993,707.4 989.8,705.2 986.5,703.4 982.8,701.8 979.6,700.4 976.7,699.1 974.1,698 971.7,697 969.4,696 967.3,695.1 965.3,694.2 963.4,693.4 961.5,692.6 959.7,691.8 957.9,691 956.1,690.2 954.3,689.5 952.5,688.7 950.7,687.9 948.8,687.1 946.8,686.2 944.7,685.3 942.5,684.4 940.2,683.4 937.7,682.3 934.9,681.1 931.8,679.8 928.3,678.3 924.4,676.5 919.7,674.5 914.2,672.1 907.3,669.2 896.5,663.1 886.1,659.4 878.4,659.5 872,661.1 867,663.8 863.7,667.5 862.9,672.1 877.7,682.9 881.1,687.5 885.6,691.8 889.2,695.2 892.2,698 894.7,700.4 896.8,702.5 898.7,704.3 900.4,705.9 901.9,707.4 903.3,708.7 904.6,709.9 905.8,711.1 907,712.2 908.1,713.2 909.1,714.3 910.2,715.3 911.2,716.2 912.2,717.2 913.2,718.2 914.2,719.1 915.3,720.1 916.4,721.2 917.5,722.2 918.6,723.3 919.9,724.5 921.2,725.7 922.6,727.1 924.1,728.6 925.8,730.2 927.7,732 929.9,734.1 932.5,736.6 935.5,739.2 939.1,742.3 943.6,746.2 949.3,751 955.4,753.9 962.1,756.3 969.1,757.9 976.1,758.5 983.1,758.4 989.7,757.6 996,756 1001.7,753.9 1006.8,751.2Z" fill="#6b6b6b" stroke="#6b6b6b" stroke-width="0.8" fill-rule="evenodd"/>
<path d="M897.8,687.3 982.2,724.4 987.8,708 903,671.3Z" fill="url(#gateg)"/>
<clipPath id="hw416"><path d="M892.9,677.2 890.6,678.4 888,679.2 885.2,679.8 882.3,680.1 879.4,680.1 876.6,679.8 873.9,679.2 871.5,678.4 869.3,677.2 867.6,675.9 866.3,674.4 865.5,672.8 865.1,671.1 865.3,669.4 866,667.7 867.1,666.1 868.7,664.7 870.6,663.4 872.9,662.3 875.5,661.4 878.2,660.9 881.1,660.6 883.9,660.6 886.7,660.9 889.4,661.4 891.8,662.3 893.9,663.4 895.7,664.7 897,666.1 897.9,667.7 898.3,669.4 898.1,671.1 897.5,672.8 896.4,674.4 894.9,675.9Z"/></clipPath>
<path d="M892.9,677.2 890.6,678.4 888,679.2 885.2,679.8 882.3,680.1 879.4,680.1 876.6,679.8 873.9,679.2 871.5,678.4 869.3,677.2 867.6,675.9 866.3,674.4 865.5,672.8 865.1,671.1 865.3,669.4 866,667.7 867.1,666.1 868.7,664.7 870.6,663.4 872.9,662.3 875.5,661.4 878.2,660.9 881.1,660.6 883.9,660.6 886.7,660.9 889.4,661.4 891.8,662.3 893.9,663.4 895.7,664.7 897,666.1 897.9,667.7 898.3,669.4 898.1,671.1 897.5,672.8 896.4,674.4 894.9,675.9Z" fill="url(#holeg)"/>
<path d="M1004.5,766.1 999.6,768.7 994,770.8 987.9,772.2 981.4,772.9 974.6,772.8 967.7,771.9 960.9,770 954.3,767 948.3,763 943.2,758.8 939.2,755.4 935.9,752.6 933.2,750 930.9,747.8 928.9,745.9 927.2,744.3 925.6,742.8 924.3,741.4 923,740.2 921.8,739.1 920.7,738 919.6,737 918.6,736 917.7,735.1 916.7,734.2 915.8,733.3 914.9,732.4 914,731.5 913,730.6 912.1,729.7 911.1,728.8 910.1,727.8 909.1,726.8 908,725.7 906.8,724.6 905.6,723.4 904.2,722.1 902.7,720.6 900.9,718.9 899,717 896.7,714.9 894.1,712.3 890.8,709.1 886.7,705.2 881.4,700 863.9,688.1 864.6,683.3 867.9,679.6 872.9,676.9 879.2,675.4 886.9,675.3 909.6,692.8 915.8,695.5 920.8,697.7 924.8,699.5 928.1,700.9 931,702.2 933.5,703.3 935.7,704.3 937.7,705.2 939.5,706 941.2,706.7 942.8,707.4 944.2,708 945.7,708.7 947,709.3 948.3,709.8 949.6,710.4 950.9,711 952.2,711.5 953.5,712.1 954.8,712.7 956.1,713.2 957.5,713.9 958.9,714.5 960.4,715.1 962,715.9 963.8,716.6 965.6,717.4 967.7,718.3 970,719.4 972.6,720.5 975.6,721.8 979.2,723.4 983.7,725.3 989.7,727.7 997.6,730.9 1005.5,734.8 1010.1,738.9 1013,743.1 1014.5,747.3 1014.7,751.5 1013.7,755.6 1011.6,759.4 1008.5,763Z" fill="#fff" clip-path="url(#hw416)"/>
<path d="M1285.5,827.9 1280,831.5 1273.6,834.4 1266.5,836.5 1258.6,837.9 1250.3,838.4 1241.7,838 1233,836.6 1224.4,834.3 1216,831 1208.2,826.6 1201.1,821.1 1195.2,816.1 1190.4,812 1186.4,808.6 1182.9,805.7 1179.9,803.1 1177.2,800.8 1174.8,798.7 1172.5,796.8 1170.5,795.1 1168.6,793.5 1166.7,791.9 1165,790.4 1163.3,789 1161.7,787.6 1160.1,786.2 1158.5,784.9 1156.9,783.5 1155.3,782.2 1153.6,780.8 1152,779.4 1150.2,777.9 1148.4,776.4 1146.5,774.7 1144.5,773 1142.3,771.2 1139.9,769.2 1137.3,766.9 1134.4,764.4 1131,761.6 1127.2,758.3 1122.6,754.4 1112.5,748.3 1101.1,740.6 1098.4,735 1098.7,730.1 1101,725.9 1105,722.5 1110.3,719.8 1116.9,718.2 1124.6,717.8 1133.5,719.1 1145.6,724.7 1154.1,728.3 1161.1,731.2 1167,733.6 1172,735.7 1176.3,737.5 1180.2,739.2 1183.7,740.6 1186.9,741.9 1189.9,743.2 1192.6,744.3 1195.2,745.4 1197.7,746.4 1200.1,747.4 1202.4,748.4 1204.7,749.4 1207,750.3 1209.2,751.2 1211.5,752.2 1213.8,753.1 1216.1,754.1 1218.6,755.1 1221.1,756.2 1223.8,757.3 1226.6,758.5 1229.7,759.8 1233,761.1 1236.7,762.7 1240.8,764.4 1245.4,766.3 1250.8,768.6 1257.1,771.2 1264.8,774.4 1272.8,778.2 1280.2,782.7 1286,787.5 1290.5,792.7 1293.7,798.1 1295.5,803.5 1296,808.9 1295.2,814.2 1293.2,819.2 1289.9,823.8Z M1277.1,817.5 1279.6,813.7 1281,809.5 1281.2,805.1 1280.1,800.6 1277.6,796 1273.7,791.4 1268,787 1258.9,782.8 1250.1,779.3 1243.4,776.7 1238.2,774.7 1234.2,773 1230.8,771.6 1227.8,770.3 1225.2,769.2 1222.9,768.2 1220.8,767.3 1218.8,766.5 1217,765.8 1215.3,765 1213.7,764.4 1212.1,763.7 1210.6,763.1 1209.1,762.4 1207.7,761.8 1206.2,761.2 1204.8,760.6 1203.3,760 1201.8,759.4 1200.3,758.7 1198.7,758.1 1197,757.4 1195.2,756.6 1193.3,755.8 1191.3,754.9 1189,754 1186.5,752.9 1183.7,751.8 1180.4,750.4 1176.6,748.8 1172.1,746.9 1166.5,744.6 1159.5,741.6 1132.2,722.7 1124.3,722.8 1118,724.5 1113.4,727.4 1110.8,731.4 1111,736.5 1131.6,749.4 1138.2,755 1143.3,759.2 1147.3,762.6 1150.7,765.4 1153.5,767.8 1155.9,769.8 1158,771.6 1159.9,773.2 1161.6,774.7 1163.2,776 1164.6,777.2 1166,778.4 1167.3,779.4 1168.5,780.5 1169.7,781.5 1170.9,782.5 1172.1,783.4 1173.2,784.4 1174.3,785.4 1175.5,786.3 1176.6,787.3 1177.8,788.3 1179.1,789.4 1180.4,790.5 1181.8,791.6 1183.2,792.9 1184.8,794.2 1186.5,795.6 1188.5,797.3 1190.6,799.1 1193.1,801.1 1195.9,803.5 1199.3,806.3 1203.3,809.3 1208.2,813 1214.4,817.6 1221.5,821.9 1228.9,825.2 1236.4,827.2 1243.8,828.2 1250.9,828.3 1257.6,827.5 1263.6,826 1269,823.8 1273.5,820.9Z" fill="#343434" stroke="#343434" stroke-width="0.8" fill-rule="evenodd"/>
<path d="M1286.1,826.9 1280.6,830.5 1274.2,833.4 1267,835.6 1259.1,837 1250.8,837.5 1242.2,837.1 1233.4,835.8 1224.8,833.5 1216.4,830.3 1208.5,825.9 1201.4,820.5 1195.4,815.4 1190.6,811.3 1186.5,807.8 1183,804.9 1179.9,802.3 1177.2,799.9 1174.7,797.8 1172.4,795.9 1170.3,794.1 1168.4,792.5 1166.5,790.9 1164.8,789.4 1163.1,788 1161.4,786.6 1159.8,785.2 1158.2,783.8 1156.6,782.4 1154.9,781.1 1153.3,779.7 1151.6,778.2 1149.8,776.7 1148,775.2 1146.1,773.6 1144,771.8 1141.8,769.9 1139.4,767.9 1136.8,765.6 1133.8,763.1 1130.4,760.2 1126.5,756.9 1121.8,752.9 1109.2,746 1100.3,739.1 1097.9,733.5 1098.3,728.7 1100.6,724.5 1104.6,721 1110,718.4 1116.6,716.7 1124.2,716.2 1133.1,717.4 1144.6,722.4 1154,726.9 1161.1,729.8 1166.9,732.2 1172,734.3 1176.4,736.2 1180.3,737.8 1183.8,739.2 1187,740.6 1190,741.8 1192.7,743 1195.4,744.1 1197.9,745.1 1200.3,746.1 1202.6,747.1 1204.9,748 1207.2,749 1209.4,749.9 1211.7,750.9 1214,751.8 1216.4,752.8 1218.8,753.8 1221.4,754.9 1224.1,756 1226.9,757.2 1230,758.5 1233.4,759.9 1237,761.4 1241.2,763.1 1245.8,765.1 1251.2,767.3 1257.6,770 1265.3,773.2 1273.9,777.1 1281.1,781.5 1286.9,786.4 1291.4,791.6 1294.5,797 1296.3,802.4 1296.7,807.9 1295.9,813.1 1293.8,818.1 1290.5,822.8Z M1276.8,816 1279.2,812.2 1280.6,808.1 1280.7,803.7 1279.6,799.1 1277,794.5 1273,790 1267.1,785.6 1258.7,781.5 1250.8,778.1 1244.6,775.5 1239.7,773.4 1235.5,771.7 1232,770.2 1228.9,768.9 1226.3,767.8 1223.8,766.8 1221.7,765.9 1219.6,765 1217.8,764.2 1216,763.5 1214.3,762.8 1212.7,762.1 1211.2,761.5 1209.7,760.8 1208.2,760.2 1206.7,759.6 1205.2,759 1203.7,758.3 1202.1,757.7 1200.5,757 1198.9,756.3 1197.2,755.6 1195.3,754.8 1193.4,754 1191.3,753.1 1188.9,752.2 1186.4,751.1 1183.4,749.9 1180.1,748.5 1176.2,746.8 1171.5,744.9 1165.8,742.5 1158.5,739.4 1132.3,721.6 1124.4,721.6 1118.1,723.3 1113.5,726.2 1110.9,730.2 1111.1,735.3 1132.8,748.6 1139.3,754.1 1144.3,758.3 1148.2,761.6 1151.5,764.4 1154.3,766.7 1156.7,768.7 1158.7,770.4 1160.6,772 1162.3,773.4 1163.8,774.7 1165.3,775.9 1166.6,777 1167.9,778.1 1169.1,779.1 1170.3,780.1 1171.4,781.1 1172.5,782 1173.7,783 1174.8,783.9 1175.9,784.9 1177.1,785.8 1178.2,786.8 1179.5,787.9 1180.7,788.9 1182.1,790.1 1183.5,791.3 1185.1,792.6 1186.8,794 1188.7,795.6 1190.8,797.4 1193.2,799.4 1196,801.8 1199.3,804.5 1203.3,807.5 1208.1,811 1214.1,815.5 1221.2,820 1228.7,823.4 1236.2,825.5 1243.6,826.5 1250.7,826.7 1257.3,825.9 1263.4,824.4 1268.7,822.2 1273.2,819.4Z" fill="#434343" stroke="#434343" stroke-width="0.8" fill-rule="evenodd"/>
<path d="M1286.3,825.6 1280.8,829.2 1274.4,832.1 1267.1,834.3 1259.3,835.7 1250.9,836.2 1242.3,835.8 1233.6,834.5 1224.9,832.3 1216.5,829 1208.7,824.7 1201.5,819.2 1195.5,814.2 1190.7,810.1 1186.6,806.6 1183.1,803.6 1180,801 1177.2,798.7 1174.8,796.6 1172.5,794.7 1170.4,792.9 1168.5,791.2 1166.6,789.7 1164.9,788.2 1163.1,786.7 1161.5,785.3 1159.9,783.9 1158.2,782.6 1156.6,781.2 1155,779.8 1153.4,778.4 1151.7,777 1149.9,775.5 1148.1,773.9 1146.2,772.3 1144.1,770.6 1141.9,768.7 1139.5,766.6 1136.8,764.4 1133.8,761.9 1130.4,759 1126.5,755.6 1121.9,751.7 1109.2,744.8 1100.3,737.8 1098,732.3 1098.3,727.5 1100.7,723.3 1104.7,719.8 1110,717.1 1116.6,715.5 1124.3,715 1133.1,716.2 1144.6,721.1 1154.1,725.6 1161.1,728.6 1167,731 1172.1,733.1 1176.5,734.9 1180.4,736.5 1183.9,738 1187.1,739.3 1190.1,740.6 1192.8,741.7 1195.5,742.8 1198,743.9 1200.4,744.9 1202.7,745.8 1205,746.8 1207.3,747.7 1209.5,748.7 1211.8,749.6 1214.1,750.6 1216.5,751.6 1219,752.6 1221.5,753.6 1224.2,754.8 1227.1,756 1230.1,757.2 1233.5,758.6 1237.2,760.2 1241.3,761.9 1246,763.8 1251.4,766.1 1257.8,768.7 1265.5,771.9 1274.1,775.8 1281.3,780.3 1287.1,785.2 1291.5,790.4 1294.6,795.7 1296.4,801.2 1296.9,806.6 1296.1,811.9 1294,816.9 1290.7,821.5Z M1276.9,814.8 1279.4,811 1280.7,806.8 1280.9,802.4 1279.7,797.9 1277.2,793.3 1273.1,788.7 1267.2,784.4 1259.3,780.3 1251.8,777 1245.9,774.3 1241.1,772.2 1236.8,770.4 1233.2,768.9 1230.1,767.6 1227.3,766.4 1224.8,765.4 1222.6,764.4 1220.5,763.6 1218.6,762.7 1216.8,762 1215,761.3 1213.4,760.6 1211.8,759.9 1210.2,759.2 1208.7,758.6 1207.1,758 1205.6,757.3 1204,756.7 1202.5,756 1200.8,755.3 1199.1,754.6 1197.4,753.9 1195.5,753.1 1193.5,752.2 1191.3,751.3 1188.9,750.3 1186.2,749.2 1183.2,747.9 1179.8,746.5 1175.8,744.8 1171,742.8 1165.1,740.3 1157.6,737.2 1132.4,720.3 1124.5,720.4 1118.2,722.1 1113.6,725 1111,729 1111.1,734 1132.9,747.4 1139.4,752.9 1144.4,757 1148.3,760.4 1151.6,763.1 1154.4,765.4 1156.7,767.4 1158.8,769.2 1160.7,770.8 1162.4,772.2 1163.9,773.5 1165.4,774.7 1166.7,775.8 1168,776.9 1169.2,777.9 1170.4,778.9 1171.5,779.8 1172.6,780.8 1173.8,781.7 1174.9,782.7 1176,783.6 1177.2,784.6 1178.3,785.6 1179.6,786.6 1180.8,787.7 1182.2,788.8 1183.6,790 1185.2,791.3 1186.9,792.8 1188.8,794.3 1190.9,796.1 1193.3,798.1 1196.1,800.5 1199.4,803.3 1203.4,806.2 1208.2,809.8 1214.2,814.3 1221.3,818.7 1228.8,822.1 1236.3,824.2 1243.7,825.3 1250.8,825.4 1257.4,824.7 1263.5,823.2 1268.9,820.9 1273.4,818.1Z" fill="#484848" stroke="#484848" stroke-width="0.8" fill-rule="evenodd"/>
<path d="M1286.4,824.4 1280.9,828 1274.5,830.9 1267.3,833.1 1259.4,834.4 1251.1,835 1242.4,834.6 1233.7,833.3 1225,831 1216.7,827.7 1208.8,823.4 1201.6,818 1195.6,812.9 1190.8,808.8 1186.7,805.3 1183.2,802.4 1180.1,799.7 1177.3,797.4 1174.9,795.3 1172.6,793.4 1170.5,791.6 1168.6,790 1166.7,788.4 1164.9,786.9 1163.2,785.5 1161.6,784.1 1159.9,782.7 1158.3,781.3 1156.7,779.9 1155.1,778.6 1153.4,777.2 1151.7,775.7 1150,774.2 1148.2,772.7 1146.2,771.1 1144.2,769.3 1142,767.4 1139.6,765.4 1136.9,763.1 1133.9,760.6 1130.5,757.7 1126.6,754.4 1121.9,750.5 1109.3,743.6 1100.4,736.6 1098,731.1 1098.4,726.2 1100.7,722 1104.7,718.6 1110.1,715.9 1116.7,714.3 1124.4,713.8 1133.2,714.9 1144.7,719.9 1154.2,724.4 1161.2,727.3 1167.1,729.8 1172.2,731.9 1176.6,733.7 1180.5,735.3 1184,736.8 1187.2,738.1 1190.2,739.3 1192.9,740.5 1195.6,741.6 1198.1,742.6 1200.5,743.6 1202.8,744.6 1205.1,745.6 1207.4,746.5 1209.6,747.4 1211.9,748.4 1214.2,749.3 1216.6,750.3 1219.1,751.3 1221.6,752.4 1224.3,753.5 1227.2,754.7 1230.2,756 1233.6,757.4 1237.3,758.9 1241.4,760.6 1246.1,762.6 1251.5,764.8 1257.9,767.5 1265.6,770.7 1274.2,774.6 1281.4,779 1287.2,783.9 1291.7,789.1 1294.8,794.5 1296.6,799.9 1297.1,805.3 1296.2,810.6 1294.2,815.6 1290.9,820.2Z M1277,813.5 1279.5,809.7 1280.9,805.5 1281,801.1 1279.9,796.6 1277.3,792 1273.3,787.5 1267.4,783.1 1259.9,779.1 1252.8,775.8 1247.2,773.1 1242.5,770.9 1238.2,769.1 1234.4,767.5 1231.2,766.2 1228.3,765 1225.8,763.9 1223.5,763 1221.3,762.1 1219.4,761.2 1217.5,760.5 1215.7,759.7 1214,759 1212.4,758.3 1210.8,757.6 1209.2,757 1207.6,756.3 1206,755.7 1204.4,755 1202.8,754.3 1201.1,753.6 1199.4,752.9 1197.5,752.1 1195.6,751.3 1193.5,750.4 1191.3,749.5 1188.8,748.5 1186.1,747.3 1183,746 1179.5,744.6 1175.3,742.8 1170.4,740.8 1164.3,738.2 1156.6,735 1132.5,719.1 1124.5,719.2 1118.3,720.8 1113.6,723.8 1111,727.7 1111.2,732.8 1133,746.2 1139.5,751.6 1144.4,755.8 1148.4,759.1 1151.7,761.9 1154.5,764.2 1156.8,766.2 1158.9,768 1160.8,769.5 1162.5,770.9 1164,772.2 1165.4,773.4 1166.8,774.6 1168.1,775.6 1169.3,776.6 1170.5,777.6 1171.6,778.6 1172.7,779.5 1173.9,780.5 1175,781.4 1176.1,782.4 1177.2,783.3 1178.4,784.3 1179.7,785.3 1180.9,786.4 1182.3,787.6 1183.7,788.8 1185.3,790.1 1187,791.5 1188.9,793.1 1191,794.9 1193.4,796.9 1196.2,799.2 1199.5,802 1203.5,804.9 1208.3,808.5 1214.3,813 1221.4,817.5 1228.9,820.9 1236.4,823 1243.8,824 1250.9,824.1 1257.6,823.4 1263.6,821.9 1269,819.7 1273.5,816.9Z" fill="#4d4d4d" stroke="#4d4d4d" stroke-width="0.8" fill-rule="evenodd"/>
<path d="M1286.6,823.1 1281.1,826.7 1274.6,829.6 1267.4,831.8 1259.6,833.2 1251.2,833.7 1242.6,833.3 1233.8,832 1225.2,829.7 1216.8,826.5 1208.9,822.2 1201.7,816.7 1195.7,811.7 1190.9,807.5 1186.8,804.1 1183.3,801.1 1180.2,798.5 1177.4,796.2 1175,794.1 1172.7,792.2 1170.6,790.4 1168.7,788.7 1166.8,787.2 1165,785.7 1163.3,784.2 1161.7,782.8 1160,781.4 1158.4,780.1 1156.8,778.7 1155.2,777.3 1153.5,775.9 1151.8,774.5 1150.1,773 1148.2,771.5 1146.3,769.8 1144.3,768.1 1142,766.2 1139.6,764.2 1137,761.9 1134,759.4 1130.6,756.5 1126.6,753.2 1122,749.2 1109.3,742.3 1100.5,735.4 1098.1,729.9 1098.4,725 1100.8,720.8 1104.8,717.3 1110.2,714.7 1116.7,713 1124.4,712.6 1133.3,713.7 1144.8,718.7 1154.3,723.2 1161.3,726.1 1167.2,728.6 1172.2,730.6 1176.6,732.5 1180.6,734.1 1184.1,735.5 1187.3,736.9 1190.3,738.1 1193,739.3 1195.7,740.4 1198.2,741.4 1200.6,742.4 1202.9,743.4 1205.2,744.3 1207.5,745.3 1209.8,746.2 1212,747.1 1214.4,748.1 1216.7,749.1 1219.2,750.1 1221.7,751.2 1224.4,752.3 1227.3,753.5 1230.4,754.8 1233.7,756.1 1237.4,757.7 1241.5,759.4 1246.2,761.3 1251.6,763.6 1258,766.2 1265.7,769.4 1274.4,773.3 1281.6,777.8 1287.4,782.7 1291.8,787.9 1294.9,793.2 1296.7,798.7 1297.2,804.1 1296.4,809.3 1294.3,814.3 1291,819Z M1277.2,812.2 1279.7,808.4 1281,804.3 1281.2,799.9 1280,795.3 1277.5,790.8 1273.4,786.2 1267.5,781.9 1260.5,777.9 1253.8,774.6 1248.3,771.9 1243.8,769.7 1239.5,767.8 1235.6,766.2 1232.3,764.8 1229.4,763.6 1226.8,762.5 1224.4,761.5 1222.2,760.6 1220.1,759.7 1218.2,758.9 1216.4,758.2 1214.7,757.4 1213,756.7 1211.3,756 1209.7,755.4 1208.1,754.7 1206.4,754 1204.8,753.3 1203.1,752.6 1201.4,751.9 1199.6,751.1 1197.7,750.4 1195.7,749.5 1193.6,748.6 1191.3,747.7 1188.8,746.6 1185.9,745.4 1182.8,744.1 1179.2,742.6 1174.9,740.8 1169.8,738.7 1163.6,736.1 1155.7,732.8 1132.6,717.9 1124.6,717.9 1118.3,719.6 1113.7,722.5 1111.1,726.5 1111.2,731.6 1133,744.9 1139.5,750.4 1144.5,754.6 1148.5,757.9 1151.8,760.6 1154.5,763 1156.9,765 1159,766.7 1160.9,768.3 1162.6,769.7 1164.1,771 1165.5,772.2 1166.9,773.3 1168.1,774.4 1169.4,775.4 1170.5,776.4 1171.7,777.3 1172.8,778.3 1173.9,779.2 1175.1,780.2 1176.2,781.1 1177.3,782.1 1178.5,783.1 1179.7,784.1 1181,785.2 1182.4,786.3 1183.8,787.5 1185.4,788.8 1187.1,790.2 1189,791.8 1191.1,793.6 1193.5,795.6 1196.3,798 1199.6,800.7 1203.6,803.7 1208.4,807.2 1214.4,811.7 1221.5,816.2 1229.1,819.6 1236.6,821.7 1244,822.7 1251.1,822.9 1257.7,822.1 1263.8,820.6 1269.1,818.4 1273.6,815.6Z" fill="#525252" stroke="#525252" stroke-width="0.8" fill-rule="evenodd"/>
<path d="M1286.7,821.8 1281.2,825.4 1274.8,828.3 1267.6,830.5 1259.7,831.9 1251.3,832.4 1242.7,832 1233.9,830.7 1225.3,828.4 1216.9,825.2 1209,820.9 1201.8,815.4 1195.8,810.4 1191,806.3 1186.9,802.8 1183.4,799.8 1180.3,797.2 1177.5,794.9 1175.1,792.8 1172.8,790.9 1170.7,789.1 1168.7,787.5 1166.9,785.9 1165.1,784.4 1163.4,783 1161.7,781.6 1160.1,780.2 1158.5,778.8 1156.9,777.4 1155.3,776.1 1153.6,774.7 1151.9,773.2 1150.2,771.8 1148.3,770.2 1146.4,768.6 1144.3,766.8 1142.1,765 1139.7,762.9 1137,760.7 1134.1,758.1 1130.7,755.3 1126.7,751.9 1122.1,748 1109.4,741.1 1100.5,734.1 1098.1,728.6 1098.5,723.8 1100.8,719.6 1104.8,716.1 1110.2,713.5 1116.8,711.8 1124.5,711.3 1133.3,712.5 1144.9,717.5 1154.4,722 1161.4,724.9 1167.3,727.3 1172.3,729.4 1176.7,731.2 1180.6,732.9 1184.2,734.3 1187.4,735.7 1190.4,736.9 1193.1,738 1195.8,739.1 1198.3,740.2 1200.7,741.2 1203,742.1 1205.3,743.1 1207.6,744 1209.9,745 1212.1,745.9 1214.5,746.9 1216.8,747.9 1219.3,748.9 1221.8,749.9 1224.5,751 1227.4,752.2 1230.5,753.5 1233.8,754.9 1237.5,756.4 1241.7,758.1 1246.4,760.1 1251.8,762.3 1258.2,765 1265.9,768.2 1274.5,772.1 1281.7,776.5 1287.5,781.4 1292,786.6 1295.1,792 1296.9,797.4 1297.4,802.8 1296.6,808.1 1294.5,813.1 1291.2,817.7Z M1277.3,811 1279.8,807.2 1281.2,803 1281.3,798.6 1280.1,794.1 1277.6,789.5 1273.5,785 1267.6,780.6 1261,776.7 1254.7,773.4 1249.4,770.7 1245,768.5 1240.8,766.5 1236.9,764.9 1233.4,763.4 1230.4,762.2 1227.7,761.1 1225.3,760 1223,759.1 1220.9,758.2 1219,757.4 1217.1,756.6 1215.3,755.9 1213.6,755.1 1211.9,754.4 1210.2,753.7 1208.5,753 1206.8,752.3 1205.2,751.6 1203.4,750.9 1201.7,750.2 1199.8,749.4 1197.9,748.6 1195.8,747.8 1193.7,746.8 1191.3,745.9 1188.7,744.8 1185.8,743.6 1182.6,742.2 1178.8,740.7 1174.5,738.8 1169.3,736.7 1162.9,734 1154.8,730.6 1132.6,716.7 1124.7,716.7 1118.4,718.4 1113.8,721.3 1111.1,725.3 1111.3,730.4 1133.1,743.7 1139.6,749.1 1144.6,753.3 1148.6,756.7 1151.9,759.4 1154.6,761.7 1157,763.7 1159.1,765.5 1161,767 1162.6,768.4 1164.2,769.7 1165.6,770.9 1167,772.1 1168.2,773.1 1169.5,774.1 1170.6,775.1 1171.8,776.1 1172.9,777 1174,778 1175.2,778.9 1176.3,779.9 1177.4,780.8 1178.6,781.8 1179.8,782.8 1181.1,783.9 1182.5,785 1183.9,786.3 1185.5,787.6 1187.2,789 1189.1,790.6 1191.2,792.3 1193.6,794.4 1196.4,796.7 1199.7,799.5 1203.7,802.4 1208.5,806 1214.5,810.5 1221.7,814.9 1229.2,818.3 1236.7,820.4 1244.1,821.5 1251.2,821.6 1257.9,820.9 1263.9,819.3 1269.3,817.1 1273.8,814.3Z" fill="#585858" stroke="#585858" stroke-width="0.8" fill-rule="evenodd"/>
<path d="M1286.9,820.6 1281.4,824.1 1274.9,827.1 1267.7,829.2 1259.8,830.6 1251.5,831.1 1242.8,830.7 1234.1,829.4 1225.4,827.2 1217,823.9 1209.1,819.6 1201.9,814.2 1196,809.1 1191.1,805 1187,801.5 1183.5,798.6 1180.4,796 1177.6,793.6 1175.2,791.6 1172.9,789.6 1170.8,787.9 1168.8,786.2 1167,784.6 1165.2,783.2 1163.5,781.7 1161.8,780.3 1160.2,778.9 1158.6,777.6 1157,776.2 1155.3,774.8 1153.7,773.4 1152,772 1150.2,770.5 1148.4,769 1146.5,767.3 1144.4,765.6 1142.2,763.7 1139.8,761.7 1137.1,759.4 1134.1,756.9 1130.7,754 1126.8,750.7 1122.1,746.7 1109.5,739.9 1100.6,732.9 1098.2,727.4 1098.5,722.6 1100.9,718.4 1104.9,714.9 1110.3,712.3 1116.9,710.6 1124.5,710.1 1133.4,711.3 1144.9,716.2 1154.4,720.7 1161.5,723.7 1167.4,726.1 1172.4,728.2 1176.8,730 1180.7,731.6 1184.3,733.1 1187.5,734.4 1190.5,735.6 1193.2,736.8 1195.9,737.9 1198.4,738.9 1200.8,739.9 1203.1,740.9 1205.4,741.8 1207.7,742.8 1210,743.7 1212.3,744.7 1214.6,745.6 1216.9,746.6 1219.4,747.6 1222,748.7 1224.7,749.8 1227.5,751 1230.6,752.3 1234,753.7 1237.7,755.2 1241.8,756.9 1246.5,758.8 1251.9,761.1 1258.3,763.7 1266,766.9 1274.7,770.8 1281.9,775.3 1287.7,780.2 1292.1,785.3 1295.3,790.7 1297.1,796.1 1297.5,801.5 1296.7,806.8 1294.6,811.8 1291.3,816.4Z M1277.5,809.7 1280,805.9 1281.3,801.8 1281.5,797.4 1280.3,792.8 1277.8,788.2 1273.7,783.7 1267.8,779.3 1261.5,775.5 1255.5,772.2 1250.5,769.5 1246.2,767.2 1242.1,765.2 1238.1,763.5 1234.6,762.1 1231.5,760.8 1228.7,759.6 1226.2,758.6 1223.9,757.6 1221.7,756.7 1219.7,755.9 1217.8,755.1 1215.9,754.3 1214.2,753.6 1212.4,752.8 1210.7,752.1 1209,751.4 1207.3,750.7 1205.5,750 1203.8,749.2 1201.9,748.5 1200.1,747.7 1198.1,746.9 1196,746 1193.7,745 1191.3,744 1188.6,742.9 1185.7,741.7 1182.3,740.3 1178.5,738.7 1174.1,736.8 1168.7,734.6 1162.1,731.9 1153.8,728.4 1132.7,715.4 1124.7,715.5 1118.4,717.2 1113.8,720.1 1111.2,724.1 1111.4,729.1 1133.2,742.5 1139.7,747.9 1144.7,752.1 1148.7,755.4 1151.9,758.2 1154.7,760.5 1157.1,762.5 1159.2,764.2 1161,765.8 1162.7,767.2 1164.3,768.5 1165.7,769.7 1167.1,770.8 1168.3,771.9 1169.5,772.9 1170.7,773.9 1171.9,774.8 1173,775.8 1174.1,776.7 1175.2,777.7 1176.4,778.6 1177.5,779.6 1178.7,780.6 1179.9,781.6 1181.2,782.7 1182.6,783.8 1184,785 1185.6,786.3 1187.3,787.7 1189.2,789.3 1191.3,791.1 1193.7,793.1 1196.5,795.4 1199.9,798.2 1203.8,801.1 1208.6,804.7 1214.7,809.2 1221.8,813.7 1229.3,817 1236.8,819.1 1244.2,820.2 1251.3,820.3 1258,819.6 1264.1,818.1 1269.4,815.9 1273.9,813.1Z" fill="#5f5f5f" stroke="#5f5f5f" stroke-width="0.8" fill-rule="evenodd"/>
<path d="M1287,819.3 1281.5,822.8 1275,825.7 1267.8,827.9 1259.9,829.3 1251.6,829.8 1242.9,829.4 1234.2,828.1 1225.5,825.8 1217.1,822.6 1209.2,818.3 1202,812.8 1196,807.8 1191.2,803.7 1187.1,800.2 1183.6,797.2 1180.5,794.7 1177.7,792.3 1175.3,790.3 1173,788.3 1170.9,786.6 1169,784.9 1167.1,783.4 1165.3,781.9 1163.6,780.4 1162,779 1160.3,777.6 1158.7,776.3 1157.1,774.9 1155.5,773.5 1153.8,772.1 1152.1,770.7 1150.4,769.2 1148.5,767.7 1146.6,766.1 1144.6,764.3 1142.3,762.5 1139.9,760.4 1137.3,758.2 1134.3,755.6 1130.9,752.8 1126.9,749.5 1122.3,745.5 1109.8,738.7 1100.7,731.7 1098.3,726.2 1098.6,721.4 1101,717.2 1105,713.7 1110.4,711.1 1117,709.4 1124.7,708.9 1133.5,710.1 1145.2,715.2 1154.5,719.5 1161.6,722.4 1167.5,724.9 1172.5,727 1176.9,728.8 1180.8,730.4 1184.4,731.8 1187.6,733.2 1190.5,734.4 1193.3,735.6 1196,736.6 1198.5,737.7 1200.9,738.7 1203.2,739.7 1205.5,740.6 1207.8,741.5 1210.1,742.5 1212.4,743.4 1214.7,744.4 1217.1,745.4 1219.5,746.4 1222.1,747.4 1224.8,748.6 1227.6,749.7 1230.7,751 1234.1,752.4 1237.8,753.9 1241.9,755.7 1246.6,757.6 1252,759.8 1258.4,762.5 1266.2,765.7 1274.7,769.6 1281.9,774 1287.7,778.9 1292.2,784.1 1295.3,789.4 1297.1,794.9 1297.6,800.3 1296.8,805.5 1294.7,810.5 1291.4,815.1Z M1277.7,808.5 1280.2,804.7 1281.5,800.5 1281.7,796.1 1280.5,791.6 1278,787 1273.9,782.5 1268,778.1 1262.1,774.3 1256.3,771 1251.5,768.3 1247.3,766 1243.5,763.9 1239.3,762.2 1235.7,760.7 1232.5,759.4 1229.7,758.2 1227.1,757.1 1224.7,756.1 1222.5,755.2 1220.4,754.3 1218.5,753.5 1216.6,752.7 1214.7,752 1213,751.2 1211.2,750.5 1209.4,749.8 1207.7,749 1205.9,748.3 1204.1,747.5 1202.2,746.8 1200.3,746 1198.3,745.1 1196.1,744.2 1193.8,743.3 1191.3,742.2 1188.6,741.1 1185.5,739.8 1182.1,738.4 1178.2,736.8 1173.6,734.9 1168.1,732.6 1161.4,729.8 1152.9,726.2 1132.8,714.2 1124.8,714.3 1118.5,715.9 1113.9,718.9 1111.2,722.8 1111.4,727.9 1133.1,741.2 1139.6,746.6 1144.6,750.8 1148.6,754.1 1151.9,756.9 1154.7,759.2 1157.1,761.2 1159.2,763 1161,764.5 1162.7,765.9 1164.3,767.2 1165.7,768.4 1167.1,769.6 1168.4,770.6 1169.6,771.7 1170.8,772.6 1171.9,773.6 1173,774.6 1174.2,775.5 1175.3,776.4 1176.4,777.4 1177.6,778.3 1178.8,779.3 1180,780.4 1181.3,781.4 1182.6,782.6 1184.1,783.8 1185.7,785.1 1187.4,786.5 1189.3,788.1 1191.4,789.9 1193.8,791.9 1196.6,794.2 1200,797 1203.9,800 1208.8,803.5 1214.8,808 1221.9,812.5 1229.5,815.8 1237,817.9 1244.4,819 1251.5,819.1 1258.2,818.3 1264.3,816.8 1269.6,814.6 1274.1,811.8Z" fill="#6b6b6b" stroke="#6b6b6b" stroke-width="0.8" fill-rule="evenodd"/>
<path d="M1287,817.9 1281.5,821.5 1275.1,824.4 1267.8,826.5 1260,827.9 1251.6,828.4 1243,828 1234.2,826.7 1225.5,824.4 1217.1,821.1 1209.2,816.8 1202.1,811.4 1196.1,806.3 1191.3,802.2 1187.2,798.8 1183.7,795.8 1180.6,793.3 1177.9,791 1175.4,788.9 1173.2,787 1171.1,785.2 1169.1,783.6 1167.3,782 1165.5,780.5 1163.8,779.1 1162.2,777.7 1160.5,776.3 1158.9,775 1157.3,773.6 1155.7,772.2 1154,770.9 1152.4,769.4 1150.6,768 1148.8,766.4 1146.9,764.8 1144.8,763.1 1142.6,761.2 1140.2,759.2 1137.5,756.9 1134.6,754.4 1131.2,751.6 1127.2,748.3 1122.6,744.3 1110.7,737.7 1101,730.6 1098.5,725 1098.8,720.2 1101.2,716 1105.2,712.5 1110.6,709.9 1117.1,708.3 1124.9,707.8 1133.8,709 1145.7,714.4 1154.6,718.3 1161.6,721.2 1167.5,723.6 1172.6,725.7 1177,727.5 1180.9,729.2 1184.4,730.6 1187.7,731.9 1190.6,733.2 1193.4,734.3 1196.1,735.4 1198.6,736.4 1201,737.4 1203.3,738.4 1205.6,739.4 1207.9,740.3 1210.2,741.2 1212.5,742.2 1214.8,743.1 1217.2,744.1 1219.6,745.1 1222.2,746.2 1224.9,747.3 1227.8,748.5 1230.8,749.8 1234.2,751.2 1237.9,752.7 1242,754.4 1246.7,756.3 1252.2,758.6 1258.6,761.2 1266.3,764.4 1274.5,768.3 1281.8,772.7 1287.7,777.6 1292.1,782.8 1295.3,788.1 1297.1,793.5 1297.6,798.9 1296.8,804.2 1294.7,809.2 1291.4,813.8Z M1278,807.3 1280.5,803.5 1281.8,799.3 1282,794.9 1280.9,790.4 1278.4,785.8 1274.3,781.3 1268.5,776.9 1262.8,773.1 1257.2,769.8 1252.5,767.1 1248.4,764.7 1244.8,762.6 1240.5,760.8 1236.8,759.3 1233.6,757.9 1230.7,756.7 1228,755.6 1225.6,754.6 1223.3,753.7 1221.2,752.8 1219.2,752 1217.2,751.2 1215.3,750.4 1213.5,749.6 1211.7,748.9 1209.9,748.1 1208.1,747.4 1206.3,746.6 1204.4,745.8 1202.5,745 1200.5,744.2 1198.4,743.4 1196.2,742.4 1193.9,741.5 1191.3,740.4 1188.5,739.2 1185.4,737.9 1181.9,736.5 1177.9,734.8 1173.2,732.9 1167.6,730.5 1160.7,727.7 1151.9,724 1132.8,713 1124.8,713 1118.6,714.7 1113.9,717.6 1111.3,721.6 1111.5,726.7 1132.8,739.8 1139.4,745.3 1144.4,749.5 1148.5,752.8 1151.8,755.6 1154.6,757.9 1157,759.9 1159.1,761.7 1160.9,763.3 1162.6,764.7 1164.2,766 1165.7,767.2 1167,768.3 1168.3,769.4 1169.5,770.4 1170.7,771.4 1171.9,772.4 1173,773.3 1174.2,774.3 1175.3,775.2 1176.4,776.2 1177.6,777.2 1178.8,778.1 1180,779.2 1181.3,780.3 1182.7,781.4 1184.1,782.6 1185.7,783.9 1187.4,785.4 1189.3,787 1191.5,788.7 1193.9,790.8 1196.7,793.1 1200.1,795.9 1204.1,798.9 1208.9,802.5 1215.1,807 1222.2,811.4 1229.7,814.7 1237.2,816.8 1244.6,817.8 1251.8,817.9 1258.4,817.2 1264.5,815.7 1269.9,813.4 1274.4,810.6Z" fill="#787878" stroke="#787878" stroke-width="0.8" fill-rule="evenodd"/>
<path d="M1286.9,816.5 1281.4,820 1275,822.9 1267.8,825.1 1259.9,826.4 1251.6,826.9 1242.9,826.5 1234.2,825.2 1225.5,822.9 1217.1,819.6 1209.2,815.2 1202.1,809.8 1196.2,804.8 1191.4,800.7 1187.3,797.3 1183.8,794.4 1180.8,791.8 1178,789.5 1175.6,787.4 1173.4,785.6 1171.3,783.8 1169.3,782.2 1167.5,780.6 1165.8,779.1 1164.1,777.7 1162.4,776.3 1160.8,775 1159.2,773.6 1157.6,772.3 1156,770.9 1154.3,769.5 1152.7,768.1 1150.9,766.7 1149.1,765.1 1147.2,763.5 1145.2,761.8 1143,760 1140.6,757.9 1137.9,755.7 1135,753.2 1131.6,750.4 1127.7,747.1 1123.1,743.2 1112.6,737 1101.5,729.5 1098.9,723.9 1099.1,719.1 1101.5,714.9 1105.4,711.4 1110.8,708.8 1117.4,707.2 1125.1,706.8 1134.1,708 1146,713.5 1154.7,717.1 1161.7,720 1167.6,722.4 1172.7,724.5 1177.1,726.3 1181,727.9 1184.5,729.4 1187.8,730.7 1190.7,731.9 1193.5,733.1 1196.2,734.2 1198.7,735.2 1201.1,736.2 1203.4,737.2 1205.7,738.1 1208,739.1 1210.3,740 1212.6,740.9 1214.9,741.9 1217.3,742.9 1219.7,743.9 1222.3,745 1225,746.1 1227.9,747.3 1231,748.5 1234.3,749.9 1238,751.4 1242.2,753.2 1246.9,755.1 1252.3,757.3 1258.7,760 1266.4,763.2 1274.2,767 1281.5,771.4 1287.4,776.3 1291.9,781.4 1295.1,786.8 1297,792.2 1297.5,797.6 1296.7,802.8 1294.6,807.8 1291.3,812.4Z M1278.4,806.1 1280.9,802.3 1282.3,798.2 1282.4,793.8 1281.3,789.2 1278.9,784.6 1274.9,780.1 1269.1,775.7 1263.6,771.9 1258.1,768.7 1253.5,765.9 1249.5,763.4 1246,761.3 1241.8,759.5 1238,757.9 1234.6,756.5 1231.6,755.3 1228.9,754.2 1226.4,753.1 1224.1,752.2 1221.9,751.3 1219.9,750.4 1217.9,749.6 1215.9,748.8 1214.1,748 1212.2,747.2 1210.4,746.5 1208.5,745.7 1206.6,744.9 1204.7,744.1 1202.8,743.3 1200.8,742.5 1198.6,741.6 1196.4,740.7 1193.9,739.7 1191.3,738.6 1188.5,737.4 1185.3,736.1 1181.7,734.6 1177.6,732.9 1172.8,730.9 1167,728.5 1160,725.6 1151.1,722 1132.9,711.7 1124.9,711.8 1118.6,713.5 1114,716.4 1111.3,720.3 1111.5,725.4 1132.4,738.3 1139,743.9 1144.1,748.1 1148.1,751.5 1151.5,754.3 1154.3,756.6 1156.7,758.6 1158.8,760.4 1160.7,762 1162.4,763.4 1164,764.7 1165.5,766 1166.8,767.1 1168.1,768.2 1169.4,769.2 1170.6,770.2 1171.8,771.2 1172.9,772.2 1174.1,773.1 1175.2,774.1 1176.3,775 1177.5,776 1178.7,777 1180,778.1 1181.3,779.1 1182.7,780.3 1184.1,781.5 1185.7,782.8 1187.5,784.3 1189.4,785.9 1191.5,787.7 1194,789.8 1196.9,792.1 1200.3,794.9 1204.3,797.9 1209.2,801.5 1215.4,806.1 1222.5,810.5 1230,813.7 1237.6,815.7 1245,816.7 1252.1,816.8 1258.8,816.1 1264.9,814.5 1270.3,812.3 1274.8,809.5Z" fill="#777777" stroke="#777777" stroke-width="0.8" fill-rule="evenodd"/>
<path d="M1286.7,815 1281.2,818.6 1274.8,821.4 1267.6,823.6 1259.8,824.9 1251.4,825.4 1242.8,824.9 1234.1,823.6 1225.4,821.2 1217,817.9 1209.2,813.4 1202.1,808 1196.2,803.1 1191.4,799.1 1187.4,795.7 1184,792.8 1180.9,790.2 1178.3,788 1175.8,785.9 1173.6,784.1 1171.5,782.3 1169.6,780.7 1167.8,779.2 1166.1,777.7 1164.4,776.3 1162.8,774.9 1161.1,773.6 1159.6,772.2 1158,770.9 1156.4,769.6 1154.8,768.2 1153.1,766.8 1151.4,765.3 1149.6,763.8 1147.7,762.2 1145.6,760.5 1143.5,758.7 1141.1,756.7 1138.5,754.5 1135.5,752 1132.2,749.2 1128.3,746 1123.8,742.1 1118.2,737.4 1102.1,728.4 1099.4,722.9 1099.6,718 1101.8,713.8 1105.8,710.4 1111.2,707.8 1117.8,706.2 1125.5,705.8 1134.5,707.2 1146.1,712.3 1154.8,715.8 1161.8,718.7 1167.7,721.2 1172.8,723.2 1177.2,725.1 1181.1,726.7 1184.6,728.1 1187.9,729.5 1190.8,730.7 1193.6,731.8 1196.3,732.9 1198.8,734 1201.2,735 1203.5,735.9 1205.8,736.9 1208.1,737.8 1210.4,738.8 1212.7,739.7 1215,740.7 1217.4,741.6 1219.8,742.7 1222.4,743.7 1225.1,744.8 1228,746 1231.1,747.3 1234.4,748.7 1238.1,750.2 1242.3,751.9 1247,753.8 1252.4,756.1 1258.8,758.7 1266.6,761.9 1273.6,765.7 1281.1,770.1 1287,774.9 1291.6,780.1 1294.8,785.4 1296.7,790.8 1297.2,796.2 1296.4,801.4 1294.4,806.3 1291.1,810.9Z M1278.9,805 1281.4,801.2 1282.8,797 1283,792.6 1281.9,788.1 1279.5,783.5 1275.6,779 1270,774.6 1264.5,770.8 1259.1,767.5 1254.6,764.6 1250.6,762.2 1247.1,760 1243,758.1 1239.1,756.5 1235.7,755.1 1232.6,753.9 1229.8,752.7 1227.3,751.6 1224.9,750.7 1222.7,749.7 1220.5,748.9 1218.5,748 1216.5,747.2 1214.6,746.4 1212.7,745.6 1210.8,744.8 1208.9,744 1207,743.3 1205.1,742.4 1203.1,741.6 1201,740.8 1198.8,739.8 1196.5,738.9 1194,737.9 1191.3,736.8 1188.4,735.5 1185.1,734.2 1181.5,732.7 1177.2,730.9 1172.3,728.9 1166.4,726.5 1159.2,723.5 1151.2,720.7 1132.9,710.5 1124.9,710.5 1118.6,712.2 1114,715.1 1111.4,719.1 1111.5,724.2 1131.6,736.8 1138.3,742.4 1143.5,746.7 1147.6,750.1 1151,752.9 1153.8,755.3 1156.3,757.3 1158.4,759.1 1160.4,760.7 1162.1,762.2 1163.7,763.5 1165.2,764.7 1166.6,765.9 1167.9,767 1169.1,768 1170.4,769.1 1171.5,770 1172.7,771 1173.9,772 1175,772.9 1176.2,773.9 1177.4,774.9 1178.6,775.9 1179.9,777 1181.2,778.1 1182.6,779.3 1184.1,780.5 1185.7,781.8 1187.5,783.3 1189.4,784.9 1191.6,786.8 1194.1,788.8 1197,791.3 1200.4,794 1204.5,797.1 1209.5,800.8 1215.8,805.5 1222.9,809.7 1230.4,812.8 1238,814.8 1245.4,815.8 1252.5,815.8 1259.2,815 1265.3,813.5 1270.7,811.3 1275.3,808.4Z" fill="#747474" stroke="#747474" stroke-width="0.8" fill-rule="evenodd"/>
<path d="M1286.4,813.5 1280.9,817 1274.6,819.8 1267.4,821.9 1259.5,823.3 1251.2,823.7 1242.6,823.2 1233.9,821.8 1225.2,819.4 1216.9,816 1209,811.4 1202,806.1 1196.2,801.2 1191.5,797.2 1187.5,793.9 1184.1,791 1181.2,788.5 1178.5,786.3 1176.1,784.3 1173.9,782.4 1171.9,780.7 1170,779.1 1168.2,777.6 1166.5,776.2 1164.8,774.8 1163.2,773.4 1161.6,772.1 1160,770.8 1158.5,769.5 1156.9,768.2 1155.3,766.8 1153.6,765.4 1151.9,764 1150.2,762.5 1148.3,760.9 1146.3,759.3 1144.2,757.5 1141.8,755.5 1139.2,753.3 1136.3,750.9 1133,748.1 1129.2,744.9 1124.7,741.1 1119.2,736.5 1103.1,727.5 1100,721.9 1100.1,717 1102.3,712.8 1106.3,709.4 1111.6,706.8 1118.2,705.2 1126,704.9 1135.1,706.4 1146.2,711 1154.8,714.6 1161.9,717.5 1167.8,719.9 1172.9,722 1177.3,723.8 1181.2,725.4 1184.7,726.9 1188,728.2 1190.9,729.5 1193.7,730.6 1196.4,731.7 1198.9,732.7 1201.3,733.7 1203.6,734.7 1205.9,735.6 1208.2,736.6 1210.5,737.5 1212.8,738.5 1215.1,739.4 1217.5,740.4 1220,741.4 1222.5,742.5 1225.2,743.6 1228.1,744.8 1231.2,746 1234.6,747.4 1238.3,749 1242.4,750.7 1247.1,752.6 1252.5,754.8 1259,757.5 1266.7,760.7 1272.7,764.3 1280.3,768.7 1286.4,773.5 1291,778.6 1294.3,783.9 1296.2,789.3 1296.8,794.7 1296,799.9 1294,804.8 1290.8,809.4Z M1279.5,804 1282.1,800.2 1283.5,796 1283.8,791.6 1282.7,787 1280.4,782.4 1276.6,777.9 1271.2,773.5 1265.7,769.6 1260.3,766.3 1255.7,763.4 1251.7,760.9 1248.2,758.7 1244.2,756.8 1240.2,755.2 1236.7,753.7 1233.6,752.4 1230.7,751.2 1228.1,750.2 1225.7,749.1 1223.4,748.2 1221.2,747.3 1219.1,746.4 1217.1,745.6 1215.2,744.8 1213.2,744 1211.3,743.2 1209.4,742.4 1207.4,741.6 1205.4,740.8 1203.3,739.9 1201.2,739 1199,738.1 1196.6,737.1 1194.1,736.1 1191.3,734.9 1188.3,733.7 1185,732.3 1181.2,730.8 1176.9,729 1171.9,726.9 1165.9,724.4 1158.5,721.4 1151.3,719.5 1132.9,709.2 1125,709.3 1118.7,711 1114,713.9 1111.4,717.8 1111.5,722.9 1130.6,735.1 1137.4,740.8 1142.6,745.1 1146.8,748.6 1150.2,751.5 1153.1,753.9 1155.7,756 1157.8,757.8 1159.8,759.4 1161.6,760.9 1163.2,762.3 1164.7,763.5 1166.1,764.7 1167.5,765.8 1168.8,766.9 1170,767.9 1171.2,768.9 1172.4,769.9 1173.6,770.9 1174.7,771.9 1175.9,772.9 1177.1,773.9 1178.4,774.9 1179.7,776 1181,777.1 1182.5,778.3 1184,779.6 1185.6,780.9 1187.4,782.4 1189.4,784.1 1191.6,785.9 1194.2,788.1 1197.1,790.5 1200.6,793.3 1204.8,796.4 1209.8,800.2 1216.3,805 1223.4,809.1 1230.9,812.1 1238.5,814 1245.9,814.9 1253,814.9 1259.8,814.1 1265.9,812.5 1271.3,810.3 1275.9,807.4Z" fill="#717171" stroke="#717171" stroke-width="0.8" fill-rule="evenodd"/>
<path d="M1285.9,811.8 1280.4,815.3 1274.1,818.1 1266.9,820.2 1259.1,821.4 1250.8,821.8 1242.2,821.3 1233.5,819.8 1224.9,817.4 1216.6,813.8 1208.8,809.1 1201.9,803.8 1196.2,799.1 1191.6,795.2 1187.7,791.9 1184.3,789.1 1181.4,786.7 1178.8,784.5 1176.5,782.5 1174.3,780.7 1172.3,779 1170.4,777.5 1168.7,776 1167,774.6 1165.4,773.2 1163.8,771.9 1162.2,770.6 1160.7,769.3 1159.2,768 1157.6,766.7 1156,765.4 1154.4,764 1152.8,762.6 1151,761.2 1149.2,759.6 1147.2,758 1145.1,756.2 1142.8,754.3 1140.2,752.1 1137.4,749.7 1134.2,747 1130.4,743.9 1126,740.2 1120.6,735.6 1104.5,726.7 1101,721 1100.9,716.1 1103.1,711.9 1106.9,708.5 1112.3,706 1118.9,704.4 1126.7,704.2 1136.1,706 1146.3,709.9 1155,713.4 1162,716.3 1167.9,718.8 1173,720.8 1177.4,722.6 1181.3,724.3 1184.8,725.7 1188.1,727 1191,728.3 1193.8,729.4 1196.4,730.5 1199,731.5 1201.4,732.5 1203.7,733.5 1206,734.4 1208.3,735.4 1210.6,736.3 1212.9,737.2 1215.2,738.2 1217.6,739.2 1220,740.2 1222.6,741.2 1225.3,742.4 1228.2,743.5 1231.2,744.8 1234.6,746.2 1238.3,747.7 1242.4,749.4 1247.1,751.4 1252.6,753.6 1259,756.2 1266.7,759.4 1271.3,763 1279.2,767.3 1285.4,772.1 1290.1,777.2 1293.5,782.4 1295.5,787.8 1296.1,793.1 1295.4,798.3 1293.4,803.2 1290.2,807.7Z M1280.4,803.1 1283,799.2 1284.5,795 1284.8,790.6 1283.8,786 1281.6,781.4 1277.9,776.9 1272.7,772.5 1267.2,768.6 1261.7,765.1 1257,762.2 1252.9,759.7 1249.3,757.4 1245.4,755.5 1241.4,753.8 1237.8,752.3 1234.6,751 1231.7,749.8 1229,748.7 1226.5,747.6 1224.1,746.7 1221.9,745.7 1219.8,744.9 1217.7,744 1215.7,743.2 1213.7,742.4 1211.7,741.5 1209.8,740.7 1207.8,739.9 1205.7,739.1 1203.6,738.2 1201.4,737.3 1199.2,736.3 1196.7,735.3 1194.1,734.3 1191.3,733.1 1188.3,731.8 1184.9,730.4 1181,728.9 1176.6,727 1171.5,724.9 1165.3,722.4 1157.8,719.2 1151.3,718.3 1132.9,707.9 1125,708 1118.7,709.7 1114.1,712.6 1111.4,716.6 1111.5,721.6 1129,733.2 1136,739 1141.4,743.5 1145.6,747.1 1149.2,750 1152.2,752.5 1154.7,754.6 1157,756.5 1159,758.2 1160.8,759.7 1162.5,761.1 1164,762.3 1165.5,763.5 1166.8,764.7 1168.2,765.8 1169.4,766.8 1170.7,767.9 1171.9,768.9 1173.1,769.9 1174.3,770.9 1175.5,771.9 1176.8,773 1178,774 1179.4,775.1 1180.7,776.3 1182.2,777.5 1183.8,778.8 1185.5,780.2 1187.3,781.7 1189.3,783.4 1191.6,785.3 1194.2,787.5 1197.3,790 1200.9,792.9 1205.1,796.1 1210.3,800 1217,805 1224,808.7 1231.6,811.6 1239.1,813.4 1246.6,814.2 1253.8,814.2 1260.5,813.3 1266.7,811.7 1272.1,809.4 1276.7,806.5Z" fill="#6e6e6e" stroke="#6e6e6e" stroke-width="0.8" fill-rule="evenodd"/>
<path d="M1284.9,809.8 1279.5,813.3 1273.2,816.1 1266.1,818.1 1258.3,819.3 1250.1,819.6 1241.5,819 1232.9,817.4 1224.3,814.8 1216,811.1 1208.2,806 1201.6,801 1196.1,796.4 1191.6,792.6 1187.8,789.5 1184.6,786.8 1181.8,784.4 1179.3,782.3 1177,780.4 1174.9,778.6 1173,777 1171.2,775.5 1169.5,774.1 1167.8,772.7 1166.2,771.4 1164.7,770.1 1163.2,768.8 1161.7,767.6 1160.2,766.4 1158.7,765.1 1157.2,763.8 1155.6,762.5 1154,761.2 1152.3,759.7 1150.5,758.2 1148.6,756.7 1146.6,754.9 1144.4,753.1 1141.9,751 1139.1,748.7 1136,746.1 1132.4,743 1128.1,739.4 1122.8,735 1107.1,726.4 1102.6,720.4 1102.2,715.4 1104.2,711.2 1108,707.8 1113.3,705.3 1119.9,703.9 1127.8,703.9 1137.7,706.3 1147,709.2 1155.5,712.7 1162.5,715.6 1168.3,718 1173.3,720 1177.6,721.8 1181.5,723.4 1185,724.9 1188.2,726.2 1191.1,727.4 1193.9,728.5 1196.5,729.6 1198.9,730.6 1201.3,731.6 1203.6,732.5 1205.9,733.5 1208.2,734.4 1210.4,735.3 1212.7,736.2 1215,737.2 1217.3,738.2 1219.7,739.2 1222.3,740.2 1224.9,741.3 1227.8,742.5 1230.8,743.7 1234.1,745.1 1237.8,746.6 1241.9,748.3 1246.5,750.2 1251.9,752.4 1258.2,755 1265.8,758.1 1268.7,761.5 1277.1,765.8 1283.6,770.5 1288.5,775.5 1292,780.8 1294.1,786.1 1294.9,791.4 1294.2,796.5 1292.3,801.3 1289.2,805.8Z M1281.7,802.4 1284.4,798.5 1286,794.3 1286.3,789.8 1285.5,785.2 1283.4,780.6 1279.9,776 1275,771.6 1269.6,767.6 1263.7,764 1258.7,761 1254.3,758.4 1250.5,756.1 1246.7,754.1 1242.5,752.4 1238.8,750.9 1235.5,749.5 1232.6,748.3 1229.8,747.2 1227.3,746.1 1224.9,745.1 1222.6,744.2 1220.4,743.3 1218.3,742.4 1216.3,741.6 1214.2,740.7 1212.2,739.9 1210.2,739.1 1208.1,738.2 1206.1,737.4 1203.9,736.5 1201.7,735.6 1199.3,734.6 1196.9,733.6 1194.2,732.5 1191.3,731.3 1188.2,730 1184.7,728.6 1180.8,726.9 1176.3,725.1 1171,722.9 1164.8,720.3 1157,717.1 1144.5,710.5 1132.9,706.6 1125,706.7 1118.7,708.4 1114,711.3 1111.4,715.3 1111.4,720.3 1129.1,731.9 1133.6,736.9 1139.2,741.6 1143.7,745.3 1147.4,748.3 1150.5,750.9 1153.1,753.1 1155.5,755.1 1157.6,756.8 1159.4,758.4 1161.2,759.9 1162.8,761.2 1164.3,762.4 1165.7,763.6 1167.1,764.8 1168.4,765.9 1169.7,767 1171,768 1172.3,769.1 1173.5,770.1 1174.8,771.2 1176.1,772.2 1177.4,773.4 1178.8,774.5 1180.2,775.7 1181.8,777 1183.4,778.3 1185.1,779.8 1187.1,781.4 1189.2,783.2 1191.6,785.1 1194.3,787.4 1197.5,790 1201.2,792.9 1205.6,796.3 1211.1,800.5 1218.1,805.7 1225,808.8 1232.5,811.5 1240.1,813.2 1247.6,813.9 1254.8,813.8 1261.6,812.8 1267.8,811.2 1273.3,808.8 1278,805.9Z" fill="#6b6b6b" stroke="#6b6b6b" stroke-width="0.8" fill-rule="evenodd"/>
<path d="M1146.1,735.8 1241.6,775.9 1248.1,759 1152.1,719.3Z" fill="url(#gateg)"/>
<clipPath id="hw1145"><path d="M1143.7,725.8 1141.6,727.1 1139.1,728 1136.3,728.6 1133.4,729 1130.3,729 1127.3,728.6 1124.4,728 1121.7,727 1119.3,725.8 1117.2,724.4 1115.5,722.8 1114.3,721.1 1113.6,719.2 1113.4,717.4 1113.8,715.6 1114.6,713.8 1115.9,712.3 1117.7,710.9 1119.9,709.7 1122.3,708.8 1125.1,708.2 1128,707.8 1130.9,707.8 1133.9,708.2 1136.8,708.8 1139.5,709.7 1141.9,710.9 1144,712.3 1145.7,713.9 1146.9,715.6 1147.7,717.4 1147.9,719.2 1147.6,721.1 1146.8,722.8 1145.5,724.4Z"/></clipPath>
<path d="M1143.7,725.8 1141.6,727.1 1139.1,728 1136.3,728.6 1133.4,729 1130.3,729 1127.3,728.6 1124.4,728 1121.7,727 1119.3,725.8 1117.2,724.4 1115.5,722.8 1114.3,721.1 1113.6,719.2 1113.4,717.4 1113.8,715.6 1114.6,713.8 1115.9,712.3 1117.7,710.9 1119.9,709.7 1122.3,708.8 1125.1,708.2 1128,707.8 1130.9,707.8 1133.9,708.2 1136.8,708.8 1139.5,709.7 1141.9,710.9 1144,712.3 1145.7,713.9 1146.9,715.6 1147.7,717.4 1147.9,719.2 1147.6,721.1 1146.8,722.8 1145.5,724.4Z" fill="url(#holeg)"/>
<path d="M1273.5,821 1269,823.9 1263.6,826.1 1257.6,827.6 1250.9,828.4 1243.8,828.3 1236.4,827.3 1228.9,825.3 1221.4,822 1214.3,817.7 1208.2,813.1 1203.3,809.4 1199.3,806.4 1195.9,803.6 1193.1,801.2 1190.6,799.2 1188.5,797.4 1186.5,795.7 1184.8,794.3 1183.2,793 1181.8,791.7 1180.4,790.6 1179.1,789.5 1177.8,788.4 1176.6,787.4 1175.5,786.4 1174.3,785.5 1173.2,784.5 1172,783.5 1170.9,782.6 1169.7,781.6 1168.5,780.6 1167.3,779.5 1166,778.5 1164.6,777.3 1163.2,776.1 1161.6,774.8 1159.9,773.3 1158,771.7 1155.9,769.9 1153.5,767.9 1150.7,765.5 1147.3,762.7 1143.3,759.3 1138.2,755.1 1131.6,749.5 1110.9,736.6 1110.8,731.5 1113.4,727.5 1118,724.6 1124.3,722.9 1132.2,722.8 1159.5,741.7 1166.5,744.7 1172.1,747 1176.6,748.9 1180.4,750.5 1183.7,751.9 1186.5,753 1189,754.1 1191.2,755 1193.3,755.9 1195.2,756.7 1197,757.5 1198.7,758.2 1200.3,758.8 1201.8,759.5 1203.3,760.1 1204.8,760.7 1206.2,761.3 1207.7,761.9 1209.1,762.5 1210.6,763.2 1212.1,763.8 1213.6,764.5 1215.3,765.1 1217,765.9 1218.8,766.6 1220.7,767.4 1222.9,768.3 1225.2,769.3 1227.8,770.4 1230.8,771.7 1234.2,773.1 1238.2,774.8 1243.3,776.8 1250.1,779.4 1258.9,782.9 1268,787.1 1273.7,791.5 1277.6,796.1 1280,800.7 1281.1,805.2 1281,809.6 1279.6,813.8 1277.1,817.6Z" fill="#fff" clip-path="url(#hw1145)"/>
<path d="M925.1,830.7 918.7,834.3 911.5,837.2 903.8,839.4 895.6,840.7 887.1,841.2 878.6,840.8 870.2,839.5 862.2,837.1 854.7,833.8 848,829.4 842.3,823.9 837.7,818.9 834,814.8 830.9,811.4 828.1,808.4 825.8,805.8 823.7,803.5 821.8,801.4 820,799.5 818.4,797.8 816.9,796.1 815.5,794.6 814.1,793.1 812.8,791.7 811.5,790.3 810.3,788.9 809,787.5 807.8,786.2 806.6,784.8 805.3,783.4 804,782 802.6,780.5 801.2,779 799.7,777.4 798.2,775.6 796.5,773.8 794.6,771.8 792.5,769.5 790.2,767 787.6,764.1 784.6,760.8 781,756.9 772.5,750.8 763.1,743.1 761.9,737.5 763.4,732.6 766.8,728.4 771.7,724.9 777.7,722.3 784.7,720.6 792.5,720.2 801.1,721.5 811.7,727.2 819.4,730.8 825.6,733.7 830.9,736.1 835.3,738.2 839.2,740 842.7,741.7 845.8,743.1 848.7,744.5 851.3,745.7 853.8,746.8 856.1,747.9 858.3,749 860.5,750 862.5,750.9 864.6,751.9 866.6,752.8 868.6,753.8 870.6,754.7 872.7,755.7 874.8,756.7 877,757.7 879.2,758.7 881.6,759.9 884.1,761.1 886.9,762.3 889.8,763.7 893.1,765.3 896.8,767 900.9,768.9 905.7,771.2 911.4,773.8 918.2,777 925.3,780.9 931.5,785.3 936.1,790.2 939.2,795.4 941,800.8 941.4,806.2 940.5,811.7 938.4,816.9 935,821.9 930.6,826.6Z M919.3,820.3 922.8,816.5 925.3,812.3 926.6,807.9 926.7,803.3 925.5,798.7 922.7,794.1 918.1,789.7 910.2,785.4 902.2,782 896.2,779.4 891.6,777.3 888,775.6 884.9,774.2 882.3,772.9 879.9,771.8 877.9,770.8 876,769.9 874.2,769.1 872.6,768.3 871.1,767.6 869.6,766.9 868.2,766.3 866.9,765.6 865.6,765 864.3,764.4 863,763.8 861.7,763.2 860.4,762.6 859.1,761.9 857.7,761.3 856.3,760.6 854.8,759.9 853.2,759.2 851.5,758.4 849.7,757.5 847.6,756.5 845.4,755.5 842.9,754.3 840,752.9 836.6,751.3 832.6,749.4 827.6,747.1 821.3,744.1 798.9,725.2 791,725.2 784.3,726.9 778.9,729.9 775.2,733.9 774.1,739 791.4,752 796.6,757.5 800.5,761.8 803.7,765.2 806.3,768 808.5,770.4 810.4,772.4 812,774.2 813.5,775.8 814.9,777.3 816.1,778.6 817.2,779.8 818.3,781 819.3,782.1 820.3,783.1 821.2,784.1 822.1,785.1 823,786.1 823.9,787.1 824.8,788 825.7,789 826.6,790 827.6,791 828.5,792 829.6,793.1 830.6,794.3 831.8,795.5 833,796.9 834.4,798.3 835.9,800 837.6,801.8 839.5,803.8 841.7,806.3 844.4,809 847.6,812.1 851.5,815.7 856.5,820.4 862.5,824.7 869.1,828 876.1,830 883.3,831 890.3,831.1 897.2,830.3 903.7,828.8 909.6,826.6 914.9,823.7Z" fill="#343434" stroke="#343434" stroke-width="0.8" fill-rule="evenodd"/>
<path d="M925.4,829.7 919,833.3 911.8,836.2 904,838.4 895.8,839.8 887.3,840.3 878.8,840 870.4,838.6 862.3,836.4 854.8,833.1 848,828.8 842.3,823.3 837.6,818.2 833.8,814.1 830.6,810.6 827.9,807.6 825.5,805 823.4,802.6 821.4,800.5 819.7,798.6 818,796.8 816.5,795.2 815.1,793.6 813.7,792.1 812.4,790.6 811.1,789.2 809.8,787.8 808.5,786.5 807.3,785.1 806,783.7 804.7,782.3 803.4,780.9 802,779.4 800.6,777.8 799.1,776.2 797.5,774.4 795.8,772.5 793.9,770.5 791.8,768.2 789.5,765.7 786.9,762.8 783.8,759.4 780.2,755.5 769.3,748.6 762.2,741.6 761.3,736 762.9,731.2 766.4,726.9 771.3,723.4 777.3,720.8 784.3,719.1 792.1,718.6 800.7,719.8 810.9,724.8 819.2,729.3 825.5,732.3 830.7,734.7 835.2,736.8 839.2,738.6 842.6,740.3 845.8,741.7 848.6,743.1 851.3,744.3 853.8,745.5 856.1,746.6 858.3,747.6 860.5,748.6 862.6,749.6 864.6,750.6 866.6,751.5 868.7,752.4 870.7,753.4 872.8,754.4 874.9,755.3 877.1,756.4 879.4,757.4 881.8,758.6 884.3,759.8 887.1,761 890,762.4 893.3,764 897,765.7 901.2,767.6 906,769.9 911.7,772.6 918.6,775.8 926.2,779.7 932.2,784.2 936.8,789.1 939.9,794.3 941.6,799.7 942,805.2 941,810.6 938.8,815.9 935.5,820.9 930.9,825.5Z M918.9,818.8 922.4,815 924.8,810.8 926.1,806.4 926.1,801.8 924.8,797.2 921.9,792.7 917.1,788.3 909.7,784.1 902.7,780.8 897.3,778.2 892.8,776.1 889.1,774.3 886,772.8 883.3,771.5 880.9,770.4 878.7,769.4 876.8,768.5 875,767.6 873.3,766.8 871.7,766.1 870.2,765.4 868.8,764.7 867.4,764.1 866.1,763.4 864.7,762.8 863.4,762.2 862.1,761.5 860.7,760.9 859.3,760.3 857.9,759.6 856.5,758.9 854.9,758.2 853.3,757.4 851.5,756.6 849.6,755.7 847.6,754.7 845.3,753.6 842.7,752.4 839.7,751 836.2,749.3 832.1,747.4 826.9,745 820.4,741.9 798.9,724 790.9,724 784.2,725.7 778.8,728.7 775.2,732.6 774,737.8 792.3,751.2 797.4,756.6 801.3,760.8 804.4,764.2 806.9,767 809.1,769.3 810.9,771.3 812.6,773 814,774.6 815.4,776 816.6,777.3 817.7,778.5 818.7,779.7 819.7,780.8 820.7,781.8 821.6,782.8 822.5,783.7 823.4,784.7 824.3,785.6 825.1,786.6 826,787.5 826.9,788.5 827.8,789.5 828.8,790.5 829.8,791.6 830.9,792.7 832,794 833.2,795.3 834.5,796.7 836,798.3 837.7,800.1 839.5,802.1 841.7,804.5 844.4,807.3 847.5,810.2 851.4,813.8 856.3,818.3 862.2,822.8 868.9,826.2 875.8,828.3 882.9,829.4 890,829.5 896.8,828.7 903.3,827.2 909.2,825 914.5,822.2Z" fill="#434343" stroke="#434343" stroke-width="0.8" fill-rule="evenodd"/>
<path d="M925.4,828.5 919,832.1 911.8,835 904,837.2 895.8,838.6 887.3,839.1 878.7,838.7 870.3,837.4 862.2,835.1 854.7,831.8 847.9,827.5 842.2,822 837.5,817 833.7,812.8 830.5,809.3 827.8,806.3 825.4,803.7 823.3,801.4 821.3,799.3 819.6,797.4 817.9,795.6 816.4,793.9 815,792.4 813.6,790.8 812.3,789.4 811,788 809.7,786.6 808.4,785.2 807.2,783.8 805.9,782.5 804.6,781.1 803.3,779.6 801.9,778.1 800.5,776.6 799,774.9 797.4,773.2 795.7,771.3 793.8,769.2 791.7,767 789.4,764.4 786.7,761.5 783.7,758.2 780.1,754.2 769.2,747.3 762.1,740.3 761.2,734.8 762.8,729.9 766.3,725.7 771.2,722.2 777.2,719.6 784.2,717.9 792,717.4 800.6,718.6 810.8,723.6 819.1,728.1 825.4,731 830.7,733.5 835.2,735.6 839.1,737.4 842.6,739 845.7,740.5 848.6,741.8 851.2,743.1 853.7,744.2 856,745.3 858.3,746.4 860.4,747.4 862.5,748.4 864.6,749.3 866.6,750.3 868.6,751.2 870.7,752.2 872.7,753.1 874.8,754.1 877,755.1 879.3,756.2 881.7,757.3 884.3,758.5 887,759.8 890,761.2 893.3,762.7 897,764.4 901.2,766.4 906,768.7 911.7,771.3 918.6,774.5 926.2,778.5 932.2,782.9 936.8,787.8 939.9,793 941.6,798.4 942,803.9 941,809.3 938.8,814.6 935.4,819.6 930.9,824.3Z M918.9,817.5 922.3,813.7 924.8,809.5 926,805.1 926.1,800.6 924.7,796 921.9,791.4 917.1,787 910.2,782.9 903.6,779.6 898.4,777 894.1,774.8 890.3,773 887.1,771.5 884.3,770.2 881.8,769 879.6,768 877.6,767 875.7,766.1 874,765.3 872.4,764.6 870.8,763.8 869.4,763.1 867.9,762.5 866.5,761.8 865.2,761.2 863.8,760.5 862.4,759.9 861,759.2 859.6,758.6 858.2,757.9 856.7,757.2 855.1,756.4 853.4,755.6 851.6,754.8 849.6,753.9 847.5,752.9 845.1,751.7 842.5,750.5 839.4,749 835.8,747.3 831.5,745.3 826.3,742.8 819.6,739.7 798.8,722.8 790.8,722.8 784.1,724.5 778.7,727.4 775.1,731.4 773.9,736.5 792.2,749.9 797.3,755.4 801.2,759.6 804.3,763 806.9,765.7 809,768 810.9,770 812.5,771.8 814,773.4 815.3,774.8 816.5,776.1 817.6,777.3 818.7,778.4 819.7,779.5 820.6,780.5 821.5,781.5 822.4,782.5 823.3,783.4 824.2,784.4 825.1,785.3 825.9,786.3 826.8,787.2 827.8,788.2 828.7,789.3 829.7,790.3 830.8,791.5 831.9,792.7 833.1,794 834.5,795.4 835.9,797 837.6,798.8 839.5,800.8 841.7,803.2 844.3,806 847.5,808.9 851.3,812.5 856.2,817 862.2,821.5 868.8,824.9 875.8,827 882.9,828.1 889.9,828.2 896.8,827.5 903.3,826 909.2,823.7 914.4,820.9Z" fill="#484848" stroke="#484848" stroke-width="0.8" fill-rule="evenodd"/>
<path d="M925.4,827.2 918.9,830.8 911.7,833.7 904,835.9 895.7,837.3 887.2,837.8 878.7,837.4 870.3,836.1 862.2,833.8 854.7,830.5 847.9,826.2 842.1,820.8 837.5,815.7 833.7,811.6 830.5,808.1 827.7,805.1 825.3,802.5 823.2,800.1 821.3,798 819.5,796.1 817.9,794.3 816.3,792.7 814.9,791.1 813.5,789.6 812.2,788.1 810.9,786.7 809.6,785.3 808.4,784 807.1,782.6 805.8,781.2 804.5,779.8 803.2,778.4 801.9,776.9 800.4,775.3 798.9,773.7 797.3,771.9 795.6,770 793.7,768 791.6,765.7 789.3,763.2 786.7,760.3 783.6,757 780,753 769.1,746.1 762,739.1 761.1,733.6 762.7,728.7 766.1,724.5 771.1,721 777.1,718.3 784.1,716.7 791.9,716.2 800.5,717.4 810.7,722.3 819.1,726.9 825.3,729.8 830.6,732.3 835.1,734.4 839,736.2 842.5,737.8 845.6,739.3 848.5,740.6 851.2,741.9 853.6,743 856,744.1 858.2,745.1 860.4,746.1 862.5,747.1 864.5,748.1 866.5,749 868.6,750 870.6,750.9 872.7,751.9 874.8,752.9 877,753.9 879.3,755 881.7,756.1 884.2,757.3 887,758.6 890,760 893.2,761.5 896.9,763.2 901.1,765.2 905.9,767.4 911.6,770.1 918.5,773.3 926.2,777.2 932.2,781.7 936.7,786.6 939.8,791.8 941.6,797.2 941.9,802.6 941,808.1 938.8,813.4 935.4,818.4 930.9,823Z M918.8,816.3 922.3,812.4 924.7,808.3 926,803.9 926,799.3 924.7,794.7 921.8,790.2 917,785.8 910.6,781.8 904.4,778.4 899.4,775.8 895.3,773.6 891.5,771.7 888.1,770.1 885.3,768.8 882.7,767.6 880.4,766.5 878.4,765.5 876.5,764.7 874.7,763.8 873,763 871.4,762.3 869.9,761.6 868.5,760.9 867,760.2 865.6,759.5 864.2,758.9 862.8,758.2 861.4,757.5 859.9,756.9 858.4,756.2 856.8,755.4 855.2,754.7 853.5,753.8 851.6,753 849.6,752 847.4,751 845,749.9 842.3,748.6 839.1,747.1 835.4,745.3 831,743.3 825.6,740.7 818.7,737.5 798.7,721.6 790.7,721.6 784,723.3 778.6,726.2 775,730.2 773.8,735.3 792.1,748.7 797.2,754.2 801.1,758.4 804.2,761.7 806.8,764.5 808.9,766.8 810.8,768.8 812.4,770.6 813.9,772.1 815.2,773.5 816.4,774.8 817.5,776.1 818.6,777.2 819.6,778.3 820.5,779.3 821.5,780.3 822.4,781.2 823.2,782.2 824.1,783.1 825,784.1 825.9,785 826.8,786 827.7,787 828.7,788 829.7,789.1 830.7,790.2 831.8,791.4 833.1,792.8 834.4,794.2 835.9,795.8 837.5,797.6 839.4,799.6 841.6,801.9 844.2,804.7 847.4,807.7 851.3,811.3 856.1,815.8 862.1,820.2 868.7,823.7 875.7,825.8 882.8,826.8 889.9,826.9 896.8,826.2 903.2,824.7 909.2,822.5 914.4,819.6Z" fill="#4d4d4d" stroke="#4d4d4d" stroke-width="0.8" fill-rule="evenodd"/>
<path d="M925.3,825.9 918.9,829.5 911.7,832.4 903.9,834.6 895.7,836 887.2,836.5 878.6,836.1 870.2,834.8 862.1,832.5 854.6,829.3 847.8,825 842,819.5 837.4,814.4 833.6,810.3 830.4,806.8 827.6,803.8 825.2,801.2 823.1,798.9 821.2,796.8 819.4,794.9 817.8,793.1 816.3,791.4 814.8,789.8 813.4,788.3 812.1,786.9 810.8,785.5 809.5,784.1 808.3,782.7 807,781.3 805.7,780 804.4,778.6 803.1,777.1 801.8,775.6 800.3,774.1 798.8,772.4 797.2,770.7 795.5,768.8 793.6,766.8 791.5,764.5 789.2,762 786.6,759.1 783.5,755.7 779.9,751.8 769,744.8 761.9,737.9 760.9,732.3 762.6,727.5 766,723.3 771,719.8 777,717.1 784,715.5 791.9,715 800.4,716.1 810.6,721.1 819,725.6 825.3,728.6 830.5,731 835,733.1 838.9,735 842.4,736.6 845.6,738 848.4,739.4 851.1,740.6 853.6,741.8 855.9,742.9 858.2,743.9 860.3,744.9 862.4,745.9 864.5,746.8 866.5,747.8 868.5,748.7 870.5,749.7 872.6,750.6 874.7,751.6 876.9,752.7 879.2,753.7 881.6,754.8 884.2,756 886.9,757.3 889.9,758.7 893.2,760.2 896.9,762 901.1,763.9 905.9,766.2 911.6,768.8 918.5,772 926.1,776 932.2,780.4 936.7,785.3 939.8,790.5 941.5,795.9 941.9,801.4 941,806.8 938.8,812.1 935.4,817.1 930.9,821.8Z M918.8,815 922.3,811.2 924.7,807 926,802.6 926,798.1 924.7,793.5 921.8,788.9 917,784.5 911,780.6 905.2,777.2 900.4,774.6 896.5,772.3 892.6,770.4 889.2,768.8 886.2,767.4 883.6,766.2 881.3,765.1 879.2,764.1 877.2,763.2 875.4,762.3 873.7,761.5 872,760.7 870.5,760 869,759.3 867.5,758.6 866,757.9 864.6,757.2 863.1,756.6 861.7,755.9 860.2,755.2 858.6,754.4 857,753.7 855.4,752.9 853.6,752.1 851.7,751.2 849.6,750.2 847.4,749.2 844.9,748 842,746.6 838.8,745.1 835,743.3 830.5,741.2 824.9,738.6 817.9,735.3 798.6,720.3 790.6,720.4 783.9,722.1 778.5,725 774.9,729 773.7,734.1 792,747.5 797.1,752.9 801,757.1 804.1,760.5 806.7,763.2 808.8,765.6 810.7,767.6 812.3,769.3 813.8,770.9 815.1,772.3 816.3,773.6 817.4,774.8 818.5,775.9 819.5,777 820.5,778 821.4,779 822.3,780 823.2,780.9 824,781.9 824.9,782.8 825.8,783.8 826.7,784.7 827.6,785.7 828.6,786.8 829.6,787.8 830.6,789 831.8,790.2 833,791.5 834.3,792.9 835.8,794.5 837.4,796.3 839.3,798.3 841.5,800.7 844.1,803.5 847.3,806.4 851.2,810 856.1,814.5 862,819 868.7,822.4 875.7,824.5 882.8,825.5 889.8,825.7 896.7,824.9 903.2,823.4 909.1,821.2 914.4,818.4Z" fill="#525252" stroke="#525252" stroke-width="0.8" fill-rule="evenodd"/>
<path d="M925.3,824.6 918.9,828.2 911.7,831.2 903.9,833.4 895.6,834.7 887.1,835.3 878.6,834.9 870.1,833.6 862.1,831.3 854.5,828 847.7,823.7 842,818.2 837.3,813.2 833.5,809 830.3,805.5 827.6,802.6 825.2,799.9 823,797.6 821.1,795.5 819.3,793.6 817.7,791.8 816.2,790.2 814.7,788.6 813.3,787.1 812,785.6 810.7,784.2 809.4,782.8 808.2,781.5 806.9,780.1 805.7,778.7 804.4,777.3 803,775.9 801.7,774.4 800.2,772.8 798.7,771.2 797.1,769.4 795.4,767.6 793.5,765.5 791.4,763.2 789.1,760.7 786.5,757.8 783.4,754.5 779.8,750.5 768.9,743.6 761.8,736.6 760.8,731.1 762.5,726.2 765.9,722 770.8,718.6 776.9,715.9 783.9,714.2 791.8,713.8 800.3,714.9 810.6,719.9 818.9,724.4 825.2,727.3 830.4,729.8 834.9,731.9 838.9,733.7 842.4,735.3 845.5,736.8 848.4,738.2 851,739.4 853.5,740.5 855.9,741.6 858.1,742.7 860.2,743.7 862.3,744.7 864.4,745.6 866.4,746.6 868.4,747.5 870.5,748.4 872.6,749.4 874.7,750.4 876.9,751.4 879.1,752.5 881.6,753.6 884.1,754.8 886.9,756.1 889.9,757.5 893.2,759 896.8,760.7 901,762.7 905.9,764.9 911.6,767.6 918.5,770.8 926.1,774.7 932.2,779.2 936.7,784.1 939.8,789.3 941.5,794.7 941.9,800.1 941,805.6 938.8,810.8 935.4,815.8 930.8,820.5Z M918.8,813.7 922.2,809.9 924.7,805.8 926,801.3 926,796.8 924.6,792.2 921.8,787.7 917,783.3 911.4,779.4 905.9,776.1 901.3,773.3 897.5,771.1 893.8,769.1 890.3,767.5 887.2,766 884.5,764.8 882.1,763.6 880,762.6 877.9,761.7 876.1,760.8 874.3,760 872.6,759.2 871,758.4 869.5,757.7 868,757 866.5,756.3 865,755.6 863.5,754.9 862,754.2 860.5,753.5 858.9,752.7 857.2,752 855.5,751.2 853.7,750.3 851.7,749.4 849.6,748.4 847.3,747.3 844.7,746.1 841.8,744.7 838.5,743.2 834.6,741.4 830,739.2 824.3,736.5 817,733.1 798.5,719.1 790.5,719.1 783.8,720.8 778.4,723.8 774.8,727.7 773.6,732.8 791.9,746.2 797,751.7 800.9,755.9 804,759.2 806.6,762 808.8,764.3 810.6,766.3 812.3,768.1 813.7,769.6 815,771 816.2,772.3 817.4,773.6 818.4,774.7 819.4,775.8 820.4,776.8 821.3,777.8 822.2,778.7 823.1,779.7 824,780.6 824.8,781.6 825.7,782.5 826.6,783.5 827.5,784.5 828.5,785.5 829.5,786.6 830.6,787.7 831.7,788.9 832.9,790.2 834.2,791.7 835.7,793.3 837.4,795 839.3,797.1 841.5,799.4 844.1,802.2 847.3,805.1 851.1,808.7 856,813.2 862,817.7 868.6,821.1 875.6,823.2 882.7,824.3 889.8,824.4 896.7,823.7 903.1,822.1 909.1,819.9 914.3,817.1Z" fill="#585858" stroke="#585858" stroke-width="0.8" fill-rule="evenodd"/>
<path d="M925.3,823.4 918.8,827 911.6,829.9 903.8,832.1 895.6,833.5 887.1,834 878.5,833.6 870.1,832.3 862,830 854.5,826.7 847.7,822.4 841.9,817 837.2,811.9 833.4,807.8 830.2,804.3 827.5,801.3 825.1,798.7 822.9,796.4 821,794.3 819.3,792.3 817.6,790.6 816.1,788.9 814.6,787.3 813.3,785.8 811.9,784.4 810.6,783 809.4,781.6 808.1,780.2 806.8,778.8 805.6,777.5 804.3,776.1 803,774.6 801.6,773.1 800.2,771.6 798.6,769.9 797,768.2 795.3,766.3 793.4,764.3 791.3,762 789,759.5 786.4,756.6 783.3,753.2 779.7,749.3 768.8,742.4 761.7,735.4 760.7,729.9 762.4,725 765.8,720.8 770.7,717.3 776.8,714.7 783.9,713 791.7,712.5 800.2,713.7 810.5,718.7 818.8,723.2 825.1,726.1 830.4,728.6 834.9,730.7 838.8,732.5 842.3,734.1 845.4,735.6 848.3,736.9 851,738.2 853.5,739.3 855.8,740.4 858,741.4 860.2,742.4 862.3,743.4 864.3,744.4 866.4,745.3 868.4,746.3 870.4,747.2 872.5,748.2 874.6,749.2 876.8,750.2 879.1,751.2 881.5,752.4 884.1,753.5 886.8,754.8 889.8,756.2 893.1,757.8 896.8,759.5 901,761.4 905.8,763.7 911.5,766.3 918.4,769.5 926.1,773.5 932.1,777.9 936.7,782.8 939.8,788 941.5,793.4 941.9,798.9 940.9,804.3 938.7,809.6 935.3,814.6 930.8,819.2Z M918.7,812.5 922.2,808.7 924.6,804.5 925.9,800.1 926,795.5 924.6,790.9 921.7,786.4 916.9,782 911.7,778.1 906.5,774.9 902.2,772.1 898.5,769.8 895,767.8 891.4,766.1 888.2,764.7 885.5,763.4 883,762.2 880.8,761.2 878.7,760.2 876.8,759.3 875,758.4 873.2,757.6 871.6,756.9 870,756.1 868.5,755.4 866.9,754.7 865.4,754 863.9,753.2 862.3,752.5 860.7,751.8 859.1,751 857.4,750.2 855.7,749.4 853.8,748.5 851.8,747.6 849.6,746.6 847.2,745.5 844.6,744.2 841.6,742.8 838.2,741.2 834.2,739.4 829.5,737.1 823.6,734.4 816.2,730.9 798.4,717.9 790.4,717.9 783.7,719.6 778.3,722.5 774.7,726.5 773.5,731.6 791.8,745 796.9,750.5 800.8,754.6 803.9,758 806.5,760.7 808.7,763.1 810.5,765.1 812.2,766.8 813.6,768.4 814.9,769.8 816.2,771.1 817.3,772.3 818.3,773.4 819.3,774.5 820.3,775.5 821.2,776.5 822.1,777.5 823,778.4 823.9,779.4 824.7,780.3 825.6,781.3 826.5,782.2 827.5,783.2 828.4,784.3 829.4,785.3 830.5,786.5 831.6,787.7 832.8,789 834.2,790.4 835.6,792 837.3,793.8 839.2,795.8 841.4,798.2 844,800.9 847.2,803.9 851.1,807.5 856,812 861.9,816.4 868.6,819.8 875.5,822 882.7,823 889.8,823.1 896.6,822.4 903.1,820.9 909,818.7 914.3,815.8Z" fill="#5f5f5f" stroke="#5f5f5f" stroke-width="0.8" fill-rule="evenodd"/>
<path d="M925.2,822.1 918.8,825.6 911.6,828.6 903.7,830.8 895.5,832.1 887,832.6 878.4,832.3 870,830.9 861.9,828.7 854.4,825.4 847.6,821.1 841.8,815.6 837.2,810.6 833.4,806.4 830.2,803 827.4,800 825,797.4 822.9,795 821,793 819.2,791 817.6,789.3 816,787.6 814.6,786 813.2,784.5 811.9,783.1 810.6,781.7 809.3,780.3 808.1,778.9 806.8,777.6 805.5,776.2 804.2,774.8 802.9,773.3 801.6,771.9 800.1,770.3 798.6,768.7 797,766.9 795.3,765.1 793.4,763 791.3,760.8 789,758.2 786.4,755.4 783.3,752 779.7,748.1 768.9,741.2 761.7,734.2 760.7,728.7 762.3,723.8 765.8,719.6 770.7,716.1 776.8,713.5 783.8,711.8 791.6,711.3 800.2,712.5 810.5,717.6 818.7,722 825,724.9 830.3,727.3 834.8,729.4 838.7,731.3 842.2,732.9 845.4,734.3 848.2,735.7 850.9,736.9 853.4,738.1 855.7,739.2 858,740.2 860.1,741.2 862.2,742.2 864.3,743.1 866.3,744.1 868.3,745 870.4,746 872.4,746.9 874.6,747.9 876.8,748.9 879,750 881.5,751.1 884,752.3 886.8,753.6 889.8,755 893.1,756.5 896.8,758.2 900.9,760.2 905.8,762.4 911.5,765.1 918.4,768.3 925.9,772.2 932,776.7 936.5,781.6 939.7,786.7 941.4,792.1 941.8,797.6 940.8,803 938.7,808.3 935.3,813.3 930.7,817.9Z M918.7,811.2 922.2,807.4 924.7,803.3 926,798.8 926,794.3 924.7,789.7 921.8,785.2 917,780.8 912.1,776.9 907.1,773.7 903,770.9 899.5,768.6 896.2,766.5 892.4,764.8 889.2,763.3 886.4,762 883.9,760.8 881.6,759.7 879.4,758.7 877.5,757.8 875.6,756.9 873.9,756.1 872.2,755.3 870.5,754.5 868.9,753.8 867.4,753 865.8,752.3 864.2,751.6 862.6,750.8 861,750.1 859.4,749.3 857.6,748.5 855.8,747.6 853.9,746.7 851.8,745.8 849.6,744.7 847.2,743.6 844.5,742.3 841.4,740.9 837.9,739.3 833.8,737.4 829,735.1 823,732.3 815.3,728.7 798.3,716.6 790.3,716.7 783.6,718.4 778.2,721.3 774.6,725.3 773.4,730.4 791.6,743.7 796.7,749.2 800.6,753.4 803.8,756.7 806.3,759.5 808.5,761.8 810.4,763.8 812,765.6 813.5,767.1 814.8,768.5 816,769.8 817.1,771.1 818.2,772.2 819.2,773.3 820.1,774.3 821.1,775.3 822,776.2 822.9,777.2 823.7,778.1 824.6,779.1 825.5,780 826.4,781 827.3,782 828.3,783 829.3,784.1 830.4,785.2 831.5,786.5 832.7,787.8 834.1,789.2 835.5,790.8 837.2,792.6 839.1,794.6 841.3,797 843.9,799.7 847.1,802.7 851,806.3 855.9,810.8 861.9,815.3 868.5,818.6 875.5,820.7 882.6,821.8 889.7,821.9 896.6,821.2 903.1,819.6 909,817.4 914.3,814.6Z" fill="#6b6b6b" stroke="#6b6b6b" stroke-width="0.8" fill-rule="evenodd"/>
<path d="M925,820.7 918.6,824.3 911.4,827.2 903.6,829.4 895.4,830.7 886.9,831.3 878.3,830.9 869.9,829.5 861.8,827.2 854.3,823.9 847.5,819.6 841.7,814.1 837.1,809.1 833.3,805 830.1,801.5 827.4,798.6 825,796 822.9,793.7 821,791.6 819.2,789.7 817.6,787.9 816.1,786.3 814.6,784.7 813.2,783.2 811.9,781.8 810.6,780.4 809.4,779 808.1,777.6 806.8,776.3 805.6,774.9 804.3,773.5 803,772.1 801.6,770.6 800.2,769 798.7,767.4 797.1,765.7 795.4,763.8 793.5,761.8 791.4,759.5 789.1,757 786.5,754.1 783.4,750.8 779.8,746.9 769.6,740.2 761.8,733.1 760.7,727.5 762.3,722.7 765.8,718.5 770.7,715 776.8,712.3 783.8,710.7 791.6,710.2 800.2,711.4 810.8,716.9 818.7,720.7 824.9,723.7 830.2,726.1 834.7,728.2 838.7,730 842.2,731.6 845.3,733.1 848.2,734.4 850.8,735.7 853.3,736.8 855.7,737.9 857.9,739 860.1,740 862.2,740.9 864.2,741.9 866.3,742.8 868.3,743.8 870.3,744.7 872.4,745.7 874.5,746.7 876.7,747.7 879,748.8 881.4,749.9 884,751.1 886.7,752.3 889.7,753.7 893,755.3 896.7,757 900.9,758.9 905.8,761.2 911.5,763.8 918.4,767 925.6,770.9 931.7,775.4 936.3,780.3 939.4,785.4 941.2,790.8 941.6,796.3 940.7,801.7 938.5,806.9 935.1,811.9 930.6,816.6Z M918.8,810 922.3,806.2 924.8,802.1 926.1,797.6 926.1,793.1 924.8,788.5 922,784 917.3,779.6 912.6,775.8 907.8,772.5 903.8,769.7 900.4,767.3 897.3,765.2 893.5,763.4 890.2,761.9 887.3,760.5 884.7,759.3 882.4,758.2 880.2,757.2 878.2,756.3 876.3,755.4 874.5,754.5 872.7,753.7 871,752.9 869.4,752.2 867.8,751.4 866.2,750.7 864.6,749.9 863,749.2 861.3,748.4 859.6,747.6 857.8,746.8 856,745.9 854,745 851.9,744 849.6,742.9 847.1,741.8 844.3,740.5 841.2,739 837.6,737.3 833.4,735.4 828.4,733 822.3,730.2 814.5,726.5 798.2,715.4 790.2,715.5 783.5,717.2 778.1,720.1 774.4,724 773.3,729.1 791.2,742.3 796.4,747.8 800.3,752 803.4,755.4 806,758.2 808.2,760.5 810.1,762.5 811.7,764.3 813.2,765.9 814.5,767.3 815.8,768.6 816.9,769.8 817.9,771 819,772 819.9,773.1 820.8,774.1 821.8,775 822.6,776 823.5,776.9 824.4,777.9 825.3,778.8 826.2,779.8 827.1,780.8 828.1,781.8 829.1,782.9 830.2,784.1 831.3,785.3 832.6,786.6 833.9,788.1 835.4,789.7 837.1,791.4 839,793.5 841.2,795.9 843.8,798.6 847,801.6 851,805.2 855.9,809.8 861.9,814.2 868.5,817.5 875.5,819.6 882.7,820.6 889.8,820.7 896.7,820 903.2,818.5 909.1,816.2 914.4,813.4Z" fill="#787878" stroke="#787878" stroke-width="0.8" fill-rule="evenodd"/>
<path d="M924.8,819.3 918.4,822.9 911.2,825.8 903.4,827.9 895.2,829.3 886.7,829.8 878.1,829.4 869.7,828 861.7,825.7 854.1,822.4 847.4,818 841.7,812.5 837.1,807.5 833.3,803.5 830.1,800 827.4,797.1 825,794.5 822.9,792.2 821,790.1 819.3,788.2 817.7,786.5 816.1,784.9 814.7,783.3 813.3,781.8 812,780.4 810.7,779 809.5,777.6 808.2,776.3 807,774.9 805.7,773.6 804.4,772.2 803.1,770.8 801.8,769.3 800.4,767.8 798.9,766.1 797.3,764.4 795.6,762.6 793.7,760.5 791.6,758.3 789.3,755.8 786.7,753 783.7,749.7 780.1,745.8 771.2,739.5 762.1,732 760.9,726.4 762.5,721.5 765.9,717.3 770.8,713.9 776.8,711.2 783.9,709.6 791.7,709.2 800.3,710.4 810.9,715.9 818.6,719.5 824.9,722.4 830.1,724.9 834.7,727 838.6,728.8 842.1,730.4 845.2,731.9 848.1,733.2 850.8,734.4 853.3,735.6 855.6,736.7 857.8,737.7 860,738.7 862.1,739.7 864.2,740.6 866.2,741.6 868.2,742.5 870.3,743.5 872.3,744.4 874.5,745.4 876.7,746.4 878.9,747.5 881.4,748.6 883.9,749.8 886.7,751.1 889.7,752.5 893,754 896.7,755.7 900.9,757.7 905.7,759.9 911.4,762.6 918.3,765.8 925.1,769.6 931.3,774.1 935.9,778.9 939.1,784.1 940.9,789.5 941.3,794.9 940.4,800.3 938.2,805.6 934.8,810.5 930.3,815.2Z M919,808.9 922.5,805.1 925,800.9 926.3,796.5 926.4,791.9 925.1,787.3 922.4,782.8 917.8,778.4 913.2,774.6 908.6,771.3 904.7,768.5 901.3,766.1 898.3,763.9 894.6,762.1 891.2,760.5 888.2,759.1 885.6,757.9 883.2,756.8 880.9,755.7 878.9,754.7 876.9,753.8 875.1,753 873.3,752.1 871.6,751.3 869.9,750.6 868.2,749.8 866.6,749 864.9,748.3 863.3,747.5 861.6,746.7 859.8,745.9 858,745 856.1,744.1 854.1,743.2 851.9,742.2 849.6,741.1 847,739.9 844.2,738.6 841,737.1 837.3,735.4 833,733.4 827.9,731 821.6,728 813.7,724.4 798.1,714.2 790.1,714.2 783.4,715.9 778,718.8 774.3,722.8 773.1,727.9 790.6,740.9 795.8,746.4 799.8,750.7 803,754.1 805.6,756.8 807.8,759.2 809.7,761.2 811.3,763 812.8,764.6 814.2,766 815.4,767.4 816.5,768.6 817.6,769.7 818.6,770.8 819.6,771.9 820.5,772.9 821.4,773.8 822.3,774.8 823.2,775.8 824.1,776.7 825,777.7 825.9,778.7 826.9,779.7 827.9,780.7 828.9,781.8 830,783 831.1,784.2 832.4,785.5 833.7,787 835.2,788.6 836.9,790.4 838.8,792.5 841.1,794.9 843.7,797.6 847,800.6 850.9,804.3 855.9,808.9 861.9,813.3 868.6,816.5 875.6,818.6 882.8,819.6 889.9,819.6 896.8,818.9 903.3,817.3 909.3,815.1 914.5,812.3Z" fill="#777777" stroke="#777777" stroke-width="0.8" fill-rule="evenodd"/>
<path d="M924.5,817.8 918.1,821.4 910.9,824.3 903.1,826.4 894.9,827.7 886.5,828.2 877.9,827.8 869.5,826.4 861.5,824 854,820.7 847.3,816.2 841.6,810.8 837,805.8 833.3,801.8 830.2,798.4 827.5,795.5 825.1,792.9 823,790.7 821.1,788.6 819.4,786.7 817.8,785 816.3,783.4 814.9,781.8 813.5,780.4 812.2,779 810.9,777.6 809.7,776.2 808.5,774.9 807.2,773.5 806,772.2 804.7,770.8 803.4,769.4 802.1,768 800.7,766.5 799.2,764.8 797.6,763.1 795.9,761.3 794.1,759.3 792,757.1 789.7,754.6 787.1,751.8 784.1,748.5 780.5,744.7 776.2,740 762.5,730.9 761.2,725.3 762.7,720.5 766.1,716.3 770.9,712.8 777,710.2 784,708.6 791.8,708.2 800.5,709.6 810.8,714.7 818.5,718.3 824.8,721.2 830.1,723.6 834.6,725.7 838.5,727.5 842,729.2 845.2,730.6 848.1,732 850.7,733.2 853.2,734.4 855.5,735.4 857.8,736.5 859.9,737.5 862,738.5 864.1,739.4 866.1,740.3 868.2,741.3 870.2,742.2 872.3,743.2 874.4,744.2 876.6,745.2 878.9,746.3 881.3,747.4 883.9,748.6 886.6,749.8 889.6,751.2 892.9,752.8 896.6,754.5 900.8,756.4 905.7,758.7 911.4,761.3 918.3,764.5 924.4,768.3 930.7,772.7 935.4,777.6 938.6,782.7 940.4,788.1 940.9,793.5 940,798.9 937.8,804.1 934.5,809.1 930,813.7Z M919.3,807.8 922.8,804 925.3,799.8 926.7,795.4 926.8,790.8 925.6,786.2 922.9,781.6 918.4,777.3 913.9,773.4 909.4,770.1 905.6,767.3 902.2,764.8 899.3,762.6 895.7,760.7 892.2,759.1 889.2,757.7 886.4,756.4 884,755.3 881.7,754.2 879.6,753.2 877.6,752.3 875.7,751.4 873.8,750.6 872.1,749.8 870.4,749 868.7,748.2 867,747.4 865.3,746.6 863.6,745.8 861.9,745 860.1,744.2 858.2,743.3 856.3,742.4 854.2,741.4 852,740.4 849.6,739.3 847,738.1 844.1,736.7 840.8,735.2 837,733.4 832.7,731.4 827.4,728.9 821,725.9 813.6,723.2 798,712.9 790,713 783.3,714.7 777.9,717.6 774.2,721.6 773,726.6 789.8,739.3 795.1,744.9 799.1,749.2 802.3,752.7 804.9,755.5 807.2,757.9 809.1,759.9 810.8,761.7 812.3,763.3 813.6,764.8 814.9,766.1 816,767.4 817.1,768.5 818.2,769.6 819.1,770.7 820.1,771.7 821,772.7 821.9,773.7 822.8,774.6 823.7,775.6 824.7,776.6 825.6,777.6 826.5,778.6 827.5,779.7 828.6,780.8 829.7,781.9 830.8,783.2 832.1,784.5 833.5,786 835,787.6 836.7,789.5 838.6,791.5 840.9,794 843.6,796.8 846.9,799.8 850.9,803.5 856,808.2 862,812.5 868.7,815.6 875.7,817.6 882.9,818.6 890,818.6 897,817.8 903.5,816.3 909.5,814 914.8,811.2Z" fill="#747474" stroke="#747474" stroke-width="0.8" fill-rule="evenodd"/>
<path d="M924.1,816.3 917.7,819.8 910.5,822.7 902.8,824.8 894.6,826.1 886.1,826.5 877.6,826.1 869.3,824.6 861.3,822.2 853.8,818.8 847.1,814.2 841.5,808.8 837,804 833.3,800 830.3,796.6 827.6,793.8 825.3,791.2 823.2,789 821.3,787 819.6,785.1 818,783.4 816.6,781.8 815.2,780.3 813.8,778.9 812.5,777.5 811.3,776.1 810,774.8 808.8,773.4 807.6,772.1 806.4,770.8 805.1,769.4 803.8,768.1 802.5,766.6 801.1,765.1 799.7,763.5 798.1,761.9 796.4,760.1 794.6,758.1 792.6,755.9 790.3,753.4 787.7,750.7 784.8,747.4 781.2,743.6 777,739 763.2,730 761.6,724.3 763,719.5 766.3,715.3 771.2,711.8 777.2,709.2 784.2,707.6 792.1,707.3 800.9,708.9 810.7,713.5 818.4,717 824.7,720 830,722.4 834.5,724.5 838.5,726.3 842,727.9 845.1,729.4 848,730.7 850.6,732 853.1,733.1 855.5,734.2 857.7,735.2 859.9,736.2 862,737.2 864,738.2 866.1,739.1 868.1,740 870.2,741 872.2,742 874.4,742.9 876.6,744 878.8,745 881.3,746.1 883.8,747.3 886.6,748.6 889.6,750 892.9,751.5 896.6,753.2 900.8,755.2 905.6,757.4 911.4,760.1 918.3,763.3 923.3,767 929.8,771.4 934.6,776.2 937.9,781.3 939.8,786.6 940.3,792 939.4,797.4 937.3,802.6 934,807.6 929.5,812.2Z M919.7,806.8 923.3,802.9 925.8,798.7 927.2,794.3 927.4,789.7 926.2,785.1 923.6,780.6 919.4,776.2 914.9,772.3 910.4,768.9 906.5,766.1 903.2,763.6 900.2,761.3 896.8,759.4 893.2,757.7 890.1,756.3 887.3,755 884.8,753.8 882.4,752.7 880.2,751.7 878.2,750.8 876.3,749.9 874.4,749 872.6,748.2 870.9,747.3 869.1,746.5 867.4,745.7 865.7,744.9 863.9,744.1 862.1,743.3 860.3,742.4 858.4,741.6 856.4,740.6 854.3,739.6 852,738.6 849.6,737.5 846.9,736.2 843.9,734.8 840.6,733.3 836.7,731.5 832.3,729.4 826.9,726.9 820.3,723.8 813.6,722 797.9,711.7 789.9,711.7 783.2,713.4 777.8,716.3 774.1,720.3 772.9,725.4 788.7,737.6 794,743.3 798.1,747.7 801.4,751.2 804.1,754.1 806.4,756.5 808.3,758.6 810,760.4 811.6,762 813,763.5 814.2,764.9 815.4,766.2 816.5,767.3 817.6,768.5 818.6,769.5 819.5,770.6 820.5,771.6 821.4,772.6 822.3,773.6 823.2,774.5 824.2,775.5 825.1,776.5 826.1,777.6 827.1,778.7 828.2,779.8 829.3,781 830.5,782.3 831.7,783.6 833.1,785.1 834.7,786.8 836.4,788.6 838.4,790.8 840.7,793.2 843.5,796.1 846.8,799.2 850.9,803 856.1,807.8 862.1,811.8 868.9,814.9 875.9,816.8 883.1,817.7 890.3,817.7 897.2,816.9 903.8,815.3 909.8,813.1 915.2,810.2Z" fill="#717171" stroke="#717171" stroke-width="0.8" fill-rule="evenodd"/>
<path d="M923.4,814.6 917.1,818.1 910,820.9 902.3,823 894.1,824.3 885.7,824.7 877.2,824.2 868.9,822.7 861,820.2 853.6,816.7 847,811.9 841.5,806.6 837.1,801.8 833.4,797.9 830.4,794.6 827.8,791.8 825.5,789.4 823.5,787.2 821.6,785.2 820,783.4 818.4,781.7 817,780.1 815.6,778.7 814.3,777.2 813,775.9 811.8,774.5 810.6,773.2 809.4,771.9 808.2,770.6 807,769.3 805.7,768 804.5,766.6 803.2,765.2 801.8,763.8 800.4,762.2 798.8,760.6 797.2,758.8 795.4,756.9 793.4,754.7 791.2,752.3 788.7,749.6 785.7,746.4 782.3,742.7 778.1,738.2 764.3,729.2 762.3,723.5 763.6,718.6 766.8,714.4 771.6,710.9 777.6,708.4 784.6,706.8 792.5,706.6 801.4,708.4 810.7,712.3 818.4,715.9 824.7,718.8 829.9,721.2 834.5,723.3 838.4,725.1 841.9,726.7 845,728.2 847.9,729.5 850.6,730.8 853.1,731.9 855.4,733 857.6,734 859.8,735 861.9,736 863.9,737 866,737.9 868,738.8 870,739.8 872.1,740.7 874.2,741.7 876.4,742.7 878.7,743.8 881.1,744.9 883.7,746.1 886.5,747.4 889.4,748.8 892.8,750.3 896.4,752 900.6,753.9 905.5,756.2 911.2,758.8 918.1,762 921.8,765.6 928.5,769.9 933.5,774.7 936.9,779.8 938.8,785.1 939.4,790.5 938.6,795.8 936.6,801 933.3,806 928.9,810.5Z M920.3,805.9 923.9,802 926.5,797.8 928,793.3 928.2,788.7 927.2,784.1 924.7,779.5 920.7,775.1 916.2,771.2 911.6,767.8 907.6,764.8 904.2,762.3 901.2,760 897.8,758.1 894.2,756.4 891,754.9 888.2,753.5 885.6,752.3 883.2,751.2 880.9,750.2 878.9,749.2 876.9,748.3 875,747.4 873.1,746.6 871.3,745.7 869.6,744.9 867.8,744.1 866,743.3 864.2,742.4 862.4,741.6 860.6,740.7 858.6,739.8 856.6,738.9 854.4,737.9 852.1,736.8 849.6,735.6 846.9,734.4 843.8,732.9 840.4,731.4 836.5,729.5 831.9,727.4 826.4,724.8 819.6,721.7 813.5,720.7 797.8,710.4 789.8,710.4 783,712.1 777.6,715.1 773.9,719 772.7,724.1 787.2,735.7 792.6,741.5 796.8,746 800.2,749.6 802.9,752.6 805.2,755.1 807.3,757.2 809,759.1 810.6,760.8 812,762.3 813.3,763.7 814.5,765 815.6,766.2 816.7,767.3 817.7,768.4 818.7,769.5 819.7,770.5 820.7,771.5 821.6,772.5 822.6,773.6 823.5,774.6 824.5,775.6 825.5,776.7 826.5,777.8 827.6,778.9 828.7,780.2 830,781.5 831.3,782.9 832.7,784.4 834.3,786.1 836.1,788 838.1,790.2 840.5,792.8 843.3,795.6 846.8,798.8 851,802.8 856.3,807.7 862.4,811.5 869.1,814.4 876.2,816.2 883.5,817 890.7,817 897.7,816.1 904.3,814.5 910.3,812.2 915.7,809.3Z" fill="#6e6e6e" stroke="#6e6e6e" stroke-width="0.8" fill-rule="evenodd"/>
<path d="M922.5,812.6 916.2,816.1 909.1,818.9 901.5,820.9 893.4,822.1 885,822.4 876.6,821.8 868.4,820.2 860.5,817.6 853.2,813.9 846.7,808.8 841.4,803.7 837.1,799.1 833.6,795.4 830.7,792.2 828.2,789.5 826,787.1 824,785 822.2,783.1 820.6,781.3 819.1,779.7 817.7,778.2 816.4,776.7 815.1,775.4 813.9,774 812.7,772.8 811.5,771.5 810.3,770.2 809.2,769 808,767.7 806.8,766.4 805.6,765.1 804.3,763.8 803,762.4 801.6,760.9 800.1,759.3 798.5,757.5 796.8,755.7 794.9,753.6 792.7,751.3 790.3,748.6 787.4,745.6 784.1,742 780,737.6 766.6,728.9 763.6,722.8 764.5,717.9 767.6,713.7 772.3,710.3 778.3,707.8 785.3,706.3 793.3,706.3 802.5,708.7 811,711.7 818.6,715.2 824.8,718.1 830,720.5 834.5,722.5 838.4,724.3 841.8,725.9 844.9,727.4 847.8,728.7 850.4,729.9 852.8,731 855.2,732.1 857.4,733.1 859.5,734.1 861.6,735.1 863.6,736 865.6,736.9 867.6,737.8 869.6,738.8 871.7,739.7 873.8,740.7 875.9,741.7 878.2,742.7 880.6,743.8 883.1,745 885.8,746.3 888.8,747.6 892,749.1 895.7,750.8 899.8,752.7 904.6,755 910.2,757.6 917.1,760.7 919.1,764.1 926.3,768.4 931.6,773.1 935.2,778.2 937.3,783.5 938,788.8 937.3,794.1 935.4,799.2 932.2,804.1 927.8,808.6Z M921.3,805.2 925,801.3 927.7,797 929.2,792.6 929.6,787.9 928.7,783.3 926.5,778.7 922.7,774.2 918.4,770.2 913.4,766.7 909.1,763.6 905.4,761 902.2,758.7 898.9,756.7 895.2,755 891.9,753.5 889,752.1 886.4,750.9 883.9,749.7 881.6,748.7 879.5,747.7 877.5,746.8 875.5,745.8 873.7,745 871.8,744.1 870,743.3 868.2,742.4 866.4,741.6 864.6,740.8 862.7,739.9 860.8,739 858.8,738.1 856.7,737.1 854.5,736.1 852.1,735 849.6,733.8 846.8,732.5 843.7,731.1 840.2,729.4 836.2,727.6 831.5,725.4 825.9,722.8 819,719.6 808.2,713 797.6,709.1 789.6,709.2 782.9,710.9 777.5,713.8 773.7,717.7 772.5,722.8 787.1,734.5 790.3,739.5 794.7,744.1 798.2,747.8 801,750.9 803.5,753.5 805.5,755.7 807.4,757.7 809,759.4 810.5,761 811.8,762.5 813.1,763.8 814.3,765.1 815.4,766.3 816.5,767.4 817.5,768.5 818.5,769.6 819.5,770.7 820.5,771.7 821.5,772.8 822.5,773.8 823.5,774.9 824.5,776 825.6,777.2 826.7,778.4 827.9,779.6 829.2,781 830.5,782.5 832,784.1 833.7,785.9 835.6,787.8 837.7,790.1 840.2,792.8 843.1,795.7 846.7,799.1 851.1,803.2 856.6,808.5 862.8,811.6 869.6,814.3 876.8,816 884.1,816.7 891.3,816.6 898.4,815.6 905.1,814 911.2,811.6 916.6,808.7Z" fill="#6b6b6b" stroke="#6b6b6b" stroke-width="0.8" fill-rule="evenodd"/>
<path d="M809.4,738.3 894.6,778.6 900.2,761.6 814.6,721.7Z" fill="url(#gateg)"/>
<clipPath id="hw455"><path d="M803.3,728.3 800.8,729.6 798.1,730.5 795.2,731.1 792.1,731.5 789.1,731.5 786.2,731.1 783.4,730.5 780.9,729.5 778.8,728.3 777.1,726.9 775.9,725.3 775.1,723.5 774.9,721.7 775.2,719.9 776,718 777.3,716.3 779.1,714.7 781.2,713.3 783.7,712.1 786.4,711.2 789.3,710.6 792.3,710.3 795.3,710.3 798.2,710.6 800.9,711.2 803.3,712.1 805.4,713.3 807.2,714.7 808.4,716.3 809.2,718 809.5,719.9 809.3,721.7 808.5,723.5 807.2,725.3 805.5,726.9Z"/></clipPath>
<path d="M803.3,728.3 800.8,729.6 798.1,730.5 795.2,731.1 792.1,731.5 789.1,731.5 786.2,731.1 783.4,730.5 780.9,729.5 778.8,728.3 777.1,726.9 775.9,725.3 775.1,723.5 774.9,721.7 775.2,719.9 776,718 777.3,716.3 779.1,714.7 781.2,713.3 783.7,712.1 786.4,711.2 789.3,710.6 792.3,710.3 795.3,710.3 798.2,710.6 800.9,711.2 803.3,712.1 805.4,713.3 807.2,714.7 808.4,716.3 809.2,718 809.5,719.9 809.3,721.7 808.5,723.5 807.2,725.3 805.5,726.9Z" fill="url(#holeg)"/>
<path d="M914.9,823.8 909.6,826.7 903.7,828.9 897.2,830.4 890.3,831.2 883.3,831.1 876.1,830.1 869.2,828.1 862.5,824.8 856.5,820.5 851.5,815.8 847.6,812.2 844.4,809.1 841.7,806.4 839.5,803.9 837.6,801.9 835.9,800.1 834.4,798.4 833,797 831.8,795.6 830.6,794.4 829.6,793.2 828.5,792.1 827.6,791.1 826.6,790.1 825.7,789.1 824.8,788.1 823.9,787.2 823,786.2 822.1,785.2 821.2,784.2 820.3,783.2 819.3,782.2 818.3,781.1 817.2,779.9 816.1,778.7 814.9,777.4 813.5,775.9 812,774.3 810.4,772.5 808.5,770.5 806.3,768.1 803.7,765.3 800.5,761.9 796.6,757.6 791.4,752.1 774.1,739.1 775.2,734 778.9,730 784.3,727 791,725.3 798.9,725.3 821.3,744.2 827.6,747.2 832.6,749.5 836.6,751.4 840,753 842.9,754.4 845.4,755.6 847.6,756.6 849.7,757.6 851.5,758.5 853.2,759.3 854.8,760 856.3,760.7 857.7,761.4 859.1,762 860.4,762.7 861.7,763.3 863,763.9 864.3,764.5 865.6,765.1 866.9,765.7 868.2,766.4 869.6,767 871.1,767.7 872.6,768.4 874.2,769.2 876,770 877.9,770.9 880,771.9 882.3,773 884.9,774.3 888,775.7 891.6,777.4 896.2,779.5 902.2,782.1 910.2,785.5 918.1,789.8 922.7,794.2 925.5,798.8 926.7,803.4 926.6,808 925.3,812.4 922.9,816.6 919.3,820.4Z" fill="#fff" clip-path="url(#hw455)"/>
<path d="M1204.3,891.3 1198.4,895.2 1191.5,898.3 1183.9,900.7 1175.6,902.2 1166.9,902.7 1157.9,902.3 1148.9,900.8 1140,898.2 1131.5,894.6 1123.6,889.8 1116.5,883.8 1110.7,878.4 1106,873.9 1102,870.2 1098.5,867 1095.5,864.2 1092.9,861.7 1090.5,859.4 1088.2,857.3 1086.2,855.4 1084.3,853.6 1082.5,852 1080.8,850.3 1079.1,848.8 1077.5,847.3 1075.9,845.8 1074.3,844.3 1072.8,842.8 1071.2,841.3 1069.6,839.8 1067.9,838.3 1066.2,836.7 1064.4,835 1062.5,833.3 1060.5,831.4 1058.4,829.4 1056,827.2 1053.4,824.7 1050.5,822 1047.2,818.9 1043.4,815.3 1038.9,811.1 1028.8,804.4 1017.4,796.1 1015,790 1015.6,784.7 1018.3,780.2 1022.7,776.4 1028.4,773.5 1035.4,771.8 1043.4,771.3 1052.6,772.7 1064.8,778.9 1073.5,782.7 1080.6,785.9 1086.5,788.5 1091.6,790.8 1096,792.8 1100,794.5 1103.5,796.1 1106.8,797.6 1109.8,798.9 1112.6,800.2 1115.2,801.3 1117.7,802.5 1120.2,803.5 1122.5,804.6 1124.9,805.6 1127.2,806.6 1129.4,807.7 1131.7,808.7 1134.1,809.7 1136.5,810.8 1139,811.9 1141.5,813.1 1144.2,814.3 1147.1,815.6 1150.3,816.9 1153.6,818.5 1157.4,820.1 1161.5,822 1166.3,824.1 1171.7,826.5 1178.2,829.4 1186,832.9 1194.1,837.1 1201.5,841.9 1207.3,847.2 1211.7,852.8 1214.7,858.7 1216.3,864.6 1216.5,870.5 1215.3,876.3 1212.9,881.7 1209.2,886.7Z M1196.2,879.9 1199,875.8 1200.7,871.2 1201.2,866.4 1200.3,861.4 1198,856.4 1194.2,851.4 1188.5,846.6 1179.3,842 1170.3,838.3 1163.5,835.4 1158.2,833.2 1154.1,831.3 1150.7,829.8 1147.6,828.4 1145,827.2 1142.6,826.2 1140.5,825.2 1138.5,824.3 1136.6,823.5 1134.9,822.7 1133.2,821.9 1131.7,821.2 1130.1,820.5 1128.6,819.9 1127.1,819.2 1125.7,818.5 1124.2,817.9 1122.7,817.2 1121.2,816.5 1119.6,815.8 1118,815.1 1116.3,814.3 1114.5,813.5 1112.6,812.6 1110.5,811.7 1108.2,810.7 1105.6,809.5 1102.8,808.2 1099.5,806.8 1095.6,805 1091,803 1085.4,800.4 1078.2,797.2 1051,776.7 1042.8,776.8 1036.1,778.6 1031.1,781.8 1028.1,786.1 1028,791.6 1048.7,805.7 1055.2,811.7 1060.2,816.4 1064.2,820.1 1067.5,823.1 1070.2,825.7 1072.6,827.9 1074.7,829.9 1076.6,831.6 1078.3,833.2 1079.8,834.6 1081.3,835.9 1082.6,837.2 1083.9,838.4 1085.1,839.5 1086.3,840.6 1087.5,841.7 1088.6,842.7 1089.7,843.8 1090.9,844.8 1092,845.9 1093.2,846.9 1094.3,848 1095.6,849.2 1096.9,850.4 1098.2,851.6 1099.7,853 1101.2,854.4 1103,856 1104.8,857.8 1107,859.8 1109.4,862 1112.2,864.6 1115.6,867.7 1119.6,871 1124.5,875 1130.6,880 1137.7,884.7 1145.4,888.3 1153.1,890.5 1160.7,891.6 1168.1,891.7 1175.1,890.9 1181.6,889.2 1187.3,886.7 1192.2,883.6Z" fill="#343434" stroke="#343434" stroke-width="0.8" fill-rule="evenodd"/>
<path d="M1204.9,890.3 1198.9,894.2 1192,897.4 1184.4,899.8 1176.1,901.3 1167.3,901.8 1158.3,901.4 1149.3,900 1140.4,897.5 1131.8,893.9 1123.9,889.2 1116.7,883.3 1110.8,877.7 1106,873.2 1102,869.4 1098.5,866.2 1095.4,863.3 1092.7,860.8 1090.3,858.5 1088.1,856.4 1086,854.5 1084.1,852.7 1082.2,851 1080.5,849.3 1078.8,847.8 1077.2,846.2 1075.6,844.7 1074,843.2 1072.4,841.7 1070.8,840.2 1069.1,838.7 1067.5,837.1 1065.7,835.5 1063.9,833.8 1062,832 1060,830.1 1057.8,828.1 1055.4,825.9 1052.8,823.4 1049.9,820.7 1046.5,817.5 1042.6,813.9 1038.1,809.6 1025.4,802.1 1016.6,794.5 1014.4,788.5 1015.1,783.2 1017.9,778.7 1022.3,774.9 1028,772 1035,770.2 1043,769.7 1052.1,771 1063.8,776.4 1073.4,781.3 1080.5,784.4 1086.5,787.1 1091.6,789.4 1096,791.4 1100,793.1 1103.6,794.7 1106.8,796.2 1109.8,797.5 1112.7,798.8 1115.3,799.9 1117.9,801.1 1120.3,802.2 1122.7,803.2 1125,804.3 1127.3,805.3 1129.6,806.3 1131.9,807.3 1134.3,808.4 1136.7,809.5 1139.2,810.6 1141.8,811.7 1144.5,812.9 1147.4,814.2 1150.6,815.6 1154,817.1 1157.7,818.8 1161.9,820.7 1166.7,822.8 1172.2,825.2 1178.6,828.1 1186.5,831.6 1195.2,835.9 1202.5,840.7 1208.2,846.1 1212.5,851.7 1215.5,857.6 1217,863.5 1217.2,869.5 1216,875.2 1213.5,880.7 1209.8,885.7Z M1195.8,878.4 1198.6,874.2 1200.3,869.7 1200.7,864.9 1199.8,859.9 1197.4,854.9 1193.5,850 1187.6,845.2 1179,840.7 1171,837 1164.7,834.2 1159.7,831.9 1155.5,830 1151.9,828.4 1148.8,827 1146.1,825.8 1143.6,824.7 1141.4,823.7 1139.3,822.8 1137.4,821.9 1135.6,821.1 1133.9,820.3 1132.3,819.6 1130.7,818.9 1129.2,818.2 1127.7,817.5 1126.1,816.8 1124.6,816.2 1123.1,815.5 1121.5,814.8 1119.9,814 1118.2,813.3 1116.5,812.5 1114.6,811.7 1112.6,810.8 1110.5,809.8 1108.1,808.7 1105.5,807.6 1102.5,806.2 1099.1,804.7 1095.2,802.9 1090.4,800.8 1084.6,798.2 1077.2,794.9 1051.1,775.5 1042.8,775.5 1036.2,777.4 1031.2,780.5 1028.2,784.9 1028,790.4 1049.8,804.9 1056.2,810.9 1061.1,815.4 1065.1,819 1068.3,822 1071,824.6 1073.4,826.7 1075.4,828.6 1077.3,830.4 1078.9,831.9 1080.5,833.3 1081.9,834.6 1083.2,835.8 1084.5,837 1085.7,838.1 1086.8,839.2 1088,840.3 1089.1,841.3 1090.2,842.3 1091.3,843.3 1092.4,844.4 1093.5,845.4 1094.7,846.5 1095.9,847.6 1097.2,848.8 1098.5,850 1100,851.4 1101.5,852.8 1103.2,854.3 1105,856.1 1107.1,858 1109.5,860.2 1112.3,862.8 1115.6,865.8 1119.5,869 1124.3,872.9 1130.3,877.8 1137.5,882.7 1145.1,886.4 1152.8,888.7 1160.4,889.9 1167.9,890 1174.8,889.2 1181.3,887.6 1187,885.1 1191.9,882.1Z" fill="#434343" stroke="#434343" stroke-width="0.8" fill-rule="evenodd"/>
<path d="M1205,889 1199.1,892.9 1192.2,896.1 1184.5,898.5 1176.2,900 1167.4,900.6 1158.4,900.1 1149.4,898.7 1140.5,896.2 1131.9,892.6 1123.9,887.9 1116.8,882 1110.9,876.5 1106.1,872 1102,868.2 1098.5,864.9 1095.5,862.1 1092.8,859.5 1090.4,857.2 1088.1,855.2 1086,853.2 1084.1,851.4 1082.3,849.7 1080.5,848.1 1078.8,846.5 1077.2,844.9 1075.6,843.4 1074,841.9 1072.4,840.5 1070.8,839 1069.2,837.4 1067.5,835.9 1065.8,834.2 1064,832.6 1062.1,830.8 1060,828.9 1057.8,826.8 1055.5,824.6 1052.8,822.1 1049.9,819.4 1046.5,816.3 1042.7,812.6 1038.1,808.3 1025.3,800.8 1016.6,793.3 1014.4,787.3 1015.1,782 1017.9,777.4 1022.3,773.7 1028.1,770.8 1035,769 1043,768.4 1052.2,769.7 1063.8,775.1 1073.4,780 1080.5,783.2 1086.5,785.8 1091.6,788.1 1096.1,790.1 1100.1,791.9 1103.6,793.5 1106.9,794.9 1109.9,796.2 1112.7,797.5 1115.4,798.7 1117.9,799.8 1120.4,800.9 1122.8,802 1125.1,803 1127.4,804 1129.7,805 1132,806.1 1134.4,807.1 1136.8,808.2 1139.3,809.3 1141.9,810.5 1144.6,811.7 1147.5,813 1150.6,814.4 1154,815.9 1157.8,817.5 1162,819.4 1166.8,821.5 1172.3,824 1178.7,826.9 1186.6,830.4 1195.4,834.6 1202.6,839.5 1208.3,844.8 1212.7,850.5 1215.6,856.3 1217.1,862.3 1217.3,868.2 1216.1,873.9 1213.6,879.4 1209.9,884.4Z M1195.9,877.1 1198.7,872.9 1200.4,868.4 1200.8,863.6 1199.9,858.6 1197.5,853.6 1193.5,848.7 1187.7,843.9 1179.6,839.5 1172.1,835.9 1166.1,833 1161.2,830.6 1156.8,828.7 1153.1,827 1149.9,825.6 1147.1,824.3 1144.6,823.2 1142.3,822.2 1140.2,821.2 1138.2,820.4 1136.4,819.5 1134.6,818.7 1132.9,818 1131.3,817.3 1129.7,816.5 1128.2,815.8 1126.6,815.1 1125,814.4 1123.5,813.7 1121.9,813 1120.2,812.3 1118.5,811.5 1116.7,810.7 1114.8,809.8 1112.7,808.9 1110.5,807.9 1108.1,806.8 1105.4,805.6 1102.3,804.2 1098.8,802.7 1094.7,800.9 1089.9,798.7 1083.9,796 1076.3,792.6 1051.2,774.2 1042.9,774.3 1036.2,776.1 1031.2,779.3 1028.2,783.6 1028.1,789.1 1049.8,803.7 1056.3,809.6 1061.2,814.2 1065.1,817.8 1068.3,820.8 1071.1,823.3 1073.4,825.5 1075.5,827.4 1077.3,829.1 1079,830.6 1080.5,832 1081.9,833.3 1083.3,834.6 1084.5,835.7 1085.7,836.9 1086.9,837.9 1088,839 1089.1,840 1090.2,841 1091.4,842.1 1092.5,843.1 1093.6,844.1 1094.8,845.2 1096,846.3 1097.3,847.5 1098.6,848.8 1100,850.1 1101.6,851.5 1103.2,853.1 1105.1,854.8 1107.2,856.7 1109.6,858.9 1112.4,861.5 1115.7,864.5 1119.6,867.7 1124.4,871.6 1130.4,876.5 1137.5,881.4 1145.2,885.1 1152.9,887.4 1160.5,888.6 1167.9,888.7 1174.9,887.9 1181.4,886.3 1187.1,883.8 1192,880.8Z" fill="#484848" stroke="#484848" stroke-width="0.8" fill-rule="evenodd"/>
<path d="M1205.1,887.7 1199.2,891.6 1192.3,894.8 1184.6,897.2 1176.3,898.7 1167.5,899.3 1158.5,898.8 1149.4,897.4 1140.5,894.9 1132,891.4 1124,886.6 1116.9,880.7 1111,875.2 1106.1,870.7 1102.1,866.9 1098.6,863.6 1095.6,860.8 1092.8,858.2 1090.4,856 1088.2,853.9 1086.1,851.9 1084.2,850.1 1082.3,848.4 1080.6,846.8 1078.9,845.2 1077.3,843.7 1075.6,842.2 1074,840.7 1072.5,839.2 1070.8,837.7 1069.2,836.2 1067.5,834.6 1065.8,833 1064,831.3 1062.1,829.5 1060.1,827.6 1057.9,825.6 1055.5,823.3 1052.9,820.9 1049.9,818.1 1046.6,815 1042.7,811.4 1038.1,807.1 1025.4,799.6 1016.6,792 1014.5,786 1015.2,780.7 1017.9,776.2 1022.3,772.4 1028.1,769.5 1035,767.7 1043.1,767.2 1052.2,768.5 1063.9,773.9 1073.5,778.8 1080.6,781.9 1086.6,784.6 1091.7,786.9 1096.2,788.8 1100.1,790.6 1103.7,792.2 1107,793.6 1110,795 1112.8,796.2 1115.5,797.4 1118,798.6 1120.4,799.6 1122.8,800.7 1125.2,801.7 1127.5,802.8 1129.8,803.8 1132.1,804.8 1134.4,805.9 1136.9,806.9 1139.3,808 1141.9,809.2 1144.7,810.4 1147.6,811.7 1150.7,813.1 1154.1,814.6 1157.9,816.3 1162.1,818.1 1166.8,820.3 1172.4,822.7 1178.8,825.6 1186.7,829.1 1195.5,833.3 1202.7,838.2 1208.5,843.5 1212.8,849.2 1215.7,855 1217.3,861 1217.4,866.9 1216.2,872.6 1213.8,878.1 1210,883.2Z M1196,875.8 1198.8,871.6 1200.5,867.1 1200.9,862.3 1200,857.4 1197.6,852.4 1193.7,847.4 1187.8,842.6 1180.2,838.3 1173.1,834.7 1167.3,831.8 1162.6,829.4 1158.2,827.4 1154.4,825.7 1151.1,824.2 1148.2,822.9 1145.6,821.7 1143.2,820.7 1141,819.7 1139,818.8 1137.1,818 1135.3,817.1 1133.6,816.4 1131.9,815.6 1130.3,814.9 1128.7,814.2 1127.1,813.4 1125.5,812.7 1123.8,812 1122.2,811.3 1120.5,810.5 1118.7,809.7 1116.8,808.9 1114.9,808 1112.8,807 1110.5,806 1108,804.9 1105.2,803.7 1102.1,802.3 1098.5,800.6 1094.3,798.8 1089.3,796.5 1083.1,793.8 1075.3,790.3 1051.2,773 1042.9,773 1036.2,774.9 1031.2,778 1028.2,782.4 1028.1,787.9 1049.9,802.4 1056.3,808.3 1061.2,812.9 1065.2,816.5 1068.4,819.5 1071.1,822 1073.5,824.2 1075.5,826.1 1077.4,827.8 1079,829.4 1080.6,830.8 1082,832.1 1083.3,833.3 1084.6,834.5 1085.8,835.6 1086.9,836.7 1088.1,837.7 1089.2,838.7 1090.3,839.8 1091.4,840.8 1092.5,841.8 1093.7,842.9 1094.8,844 1096,845.1 1097.3,846.2 1098.7,847.5 1100.1,848.8 1101.6,850.2 1103.3,851.8 1105.2,853.5 1107.3,855.4 1109.7,857.6 1112.4,860.2 1115.7,863.2 1119.7,866.4 1124.4,870.3 1130.5,875.3 1137.6,880.1 1145.3,883.8 1153,886.1 1160.6,887.3 1168,887.4 1175,886.6 1181.5,885 1187.2,882.6 1192.1,879.5Z" fill="#4d4d4d" stroke="#4d4d4d" stroke-width="0.8" fill-rule="evenodd"/>
<path d="M1205.2,886.4 1199.3,890.3 1192.4,893.5 1184.7,895.9 1176.4,897.4 1167.6,898 1158.6,897.5 1149.5,896.1 1140.6,893.6 1132.1,890.1 1124.1,885.4 1116.9,879.4 1111,873.9 1106.2,869.4 1102.1,865.6 1098.7,862.3 1095.6,859.5 1092.9,857 1090.5,854.7 1088.2,852.6 1086.2,850.7 1084.2,848.9 1082.4,847.1 1080.6,845.5 1078.9,843.9 1077.3,842.4 1075.7,840.9 1074.1,839.4 1072.5,837.9 1070.9,836.4 1069.3,834.9 1067.6,833.3 1065.9,831.7 1064,830 1062.1,828.2 1060.1,826.3 1057.9,824.3 1055.5,822.1 1052.9,819.6 1050,816.9 1046.6,813.7 1042.7,810.1 1038.1,805.8 1025.4,798.3 1016.6,790.7 1014.5,784.8 1015.2,779.5 1017.9,774.9 1022.3,771.2 1028.1,768.3 1035.1,766.5 1043.1,766 1052.2,767.2 1063.9,772.6 1073.5,777.5 1080.6,780.7 1086.6,783.3 1091.7,785.6 1096.2,787.6 1100.2,789.4 1103.8,790.9 1107,792.4 1110,793.7 1112.9,795 1115.5,796.2 1118.1,797.3 1120.5,798.4 1122.9,799.4 1125.2,800.5 1127.5,801.5 1129.8,802.5 1132.2,803.6 1134.5,804.6 1136.9,805.7 1139.4,806.8 1142,807.9 1144.8,809.1 1147.7,810.4 1150.8,811.8 1154.2,813.3 1158,815 1162.2,816.9 1166.9,819 1172.4,821.4 1178.9,824.3 1186.8,827.8 1195.6,832.1 1202.8,836.9 1208.6,842.2 1212.9,847.9 1215.8,853.8 1217.4,859.7 1217.5,865.6 1216.4,871.3 1213.9,876.8 1210.1,881.9Z M1196.1,874.5 1198.9,870.4 1200.6,865.8 1201,861 1200.1,856.1 1197.7,851.1 1193.8,846.1 1187.9,841.4 1180.8,837.1 1174,833.5 1168.5,830.5 1163.9,828.1 1159.5,826 1155.6,824.3 1152.2,822.8 1149.2,821.5 1146.6,820.3 1144.1,819.2 1141.9,818.2 1139.8,817.2 1137.9,816.4 1136,815.5 1134.2,814.7 1132.5,814 1130.8,813.2 1129.2,812.5 1127.5,811.7 1125.9,811 1124.2,810.3 1122.5,809.5 1120.8,808.7 1118.9,807.9 1117,807 1115,806.1 1112.8,805.2 1110.5,804.1 1107.9,803 1105.1,801.7 1101.9,800.3 1098.2,798.6 1093.9,796.7 1088.7,794.4 1082.4,791.6 1074.3,788 1051.2,771.8 1042.9,771.8 1036.3,773.6 1031.3,776.8 1028.3,781.1 1028.1,786.6 1049.9,801.1 1056.3,807.1 1061.3,811.6 1065.2,815.3 1068.4,818.2 1071.2,820.8 1073.5,822.9 1075.6,824.8 1077.4,826.5 1079.1,828.1 1080.6,829.5 1082,830.8 1083.4,832 1084.6,833.2 1085.8,834.3 1087,835.4 1088.1,836.4 1089.2,837.5 1090.4,838.5 1091.5,839.5 1092.6,840.5 1093.7,841.6 1094.9,842.7 1096.1,843.8 1097.4,845 1098.7,846.2 1100.1,847.5 1101.7,848.9 1103.4,850.5 1105.2,852.2 1107.3,854.2 1109.7,856.4 1112.5,858.9 1115.8,862 1119.7,865.2 1124.5,869.1 1130.6,874 1137.7,878.8 1145.3,882.5 1153.1,884.8 1160.7,886 1168.1,886.1 1175.1,885.3 1181.6,883.7 1187.3,881.3 1192.2,878.2Z" fill="#525252" stroke="#525252" stroke-width="0.8" fill-rule="evenodd"/>
<path d="M1205.4,885.1 1199.4,889 1192.5,892.2 1184.8,894.6 1176.5,896.1 1167.7,896.7 1158.7,896.2 1149.6,894.8 1140.7,892.3 1132.1,888.8 1124.2,884.1 1117,878.1 1111.1,872.6 1106.3,868.1 1102.2,864.3 1098.7,861.1 1095.7,858.2 1093,855.7 1090.5,853.4 1088.3,851.3 1086.2,849.4 1084.3,847.6 1082.4,845.9 1080.7,844.2 1079,842.6 1077.3,841.1 1075.7,839.6 1074.1,838.1 1072.5,836.6 1070.9,835.1 1069.3,833.6 1067.6,832 1065.9,830.4 1064.1,828.7 1062.2,827 1060.1,825.1 1058,823 1055.6,820.8 1052.9,818.3 1050,815.6 1046.6,812.5 1042.7,808.8 1038.2,804.5 1025.4,797 1016.6,789.5 1014.5,783.5 1015.2,778.2 1017.9,773.7 1022.3,769.9 1028.1,767 1035.1,765.2 1043.1,764.7 1052.3,766 1063.9,771.4 1073.5,776.3 1080.7,779.4 1086.7,782.1 1091.8,784.4 1096.3,786.3 1100.2,788.1 1103.8,789.7 1107.1,791.1 1110.1,792.5 1112.9,793.7 1115.6,794.9 1118.1,796 1120.6,797.1 1123,798.2 1125.3,799.2 1127.6,800.2 1129.9,801.3 1132.2,802.3 1134.6,803.3 1137,804.4 1139.5,805.5 1142.1,806.7 1144.8,807.9 1147.8,809.2 1150.9,810.6 1154.3,812.1 1158.1,813.7 1162.3,815.6 1167,817.7 1172.5,820.2 1179,823.1 1186.9,826.5 1195.7,830.8 1202.9,835.7 1208.7,841 1213,846.6 1216,852.5 1217.5,858.4 1217.7,864.3 1216.5,870.1 1214,875.5 1210.3,880.6Z M1196.2,873.2 1199.1,869.1 1200.7,864.5 1201.1,859.7 1200.2,854.8 1197.8,849.8 1193.9,844.9 1188,840.1 1181.3,835.8 1174.9,832.3 1169.6,829.3 1165.1,826.8 1160.8,824.7 1156.8,822.9 1153.4,821.4 1150.3,820 1147.5,818.8 1145.1,817.7 1142.8,816.6 1140.6,815.7 1138.6,814.8 1136.7,813.9 1134.9,813.1 1133.1,812.3 1131.4,811.6 1129.7,810.8 1128,810 1126.3,809.3 1124.6,808.5 1122.8,807.7 1121,806.9 1119.2,806.1 1117.2,805.2 1115.1,804.3 1112.9,803.3 1110.5,802.2 1107.9,801.1 1104.9,799.7 1101.6,798.3 1097.8,796.6 1093.4,794.6 1088.1,792.2 1081.6,789.3 1073.4,785.7 1051.2,770.5 1042.9,770.5 1036.3,772.4 1031.3,775.5 1028.3,779.9 1028.1,785.4 1049.9,799.9 1056.4,805.8 1061.3,810.4 1065.2,814 1068.5,817 1071.2,819.5 1073.6,821.7 1075.6,823.6 1077.5,825.3 1079.1,826.8 1080.7,828.2 1082.1,829.5 1083.4,830.8 1084.7,831.9 1085.9,833 1087,834.1 1088.2,835.2 1089.3,836.2 1090.4,837.2 1091.5,838.2 1092.6,839.3 1093.8,840.3 1094.9,841.4 1096.2,842.5 1097.4,843.7 1098.8,844.9 1100.2,846.2 1101.7,847.7 1103.4,849.2 1105.3,850.9 1107.4,852.9 1109.8,855.1 1112.6,857.6 1115.9,860.7 1119.8,863.9 1124.6,867.8 1130.6,872.7 1137.8,877.5 1145.4,881.3 1153.2,883.5 1160.8,884.7 1168.2,884.8 1175.2,884 1181.7,882.4 1187.4,880 1192.3,876.9Z" fill="#585858" stroke="#585858" stroke-width="0.8" fill-rule="evenodd"/>
<path d="M1205.5,883.8 1199.5,887.7 1192.6,890.9 1184.9,893.3 1176.6,894.8 1167.8,895.4 1158.8,894.9 1149.7,893.5 1140.8,891 1132.2,887.5 1124.2,882.8 1117.1,876.8 1111.2,871.3 1106.3,866.8 1102.3,863 1098.8,859.8 1095.7,856.9 1093,854.4 1090.6,852.1 1088.3,850 1086.3,848.1 1084.3,846.3 1082.5,844.6 1080.7,842.9 1079,841.4 1077.4,839.8 1075.8,838.3 1074.2,836.8 1072.6,835.4 1071,833.9 1069.3,832.3 1067.7,830.8 1065.9,829.1 1064.1,827.5 1062.2,825.7 1060.2,823.8 1058,821.7 1055.6,819.5 1053,817.1 1050,814.3 1046.7,811.2 1042.8,807.6 1038.2,803.3 1025.4,795.8 1016.6,788.2 1014.5,782.2 1015.2,777 1018,772.4 1022.4,768.7 1028.1,765.8 1035.1,764 1043.1,763.5 1052.3,764.7 1064,770.1 1073.6,775 1080.7,778.2 1086.7,780.8 1091.8,783.1 1096.3,785.1 1100.3,786.8 1103.9,788.4 1107.1,789.9 1110.2,791.2 1113,792.5 1115.7,793.6 1118.2,794.8 1120.6,795.9 1123,796.9 1125.4,798 1127.7,799 1130,800 1132.3,801 1134.7,802.1 1137.1,803.1 1139.6,804.2 1142.2,805.4 1144.9,806.6 1147.8,807.9 1151,809.3 1154.4,810.8 1158.1,812.5 1162.3,814.3 1167.1,816.5 1172.6,818.9 1179.1,821.8 1187,825.3 1195.8,829.5 1203,834.4 1208.8,839.7 1213.1,845.3 1216.1,851.2 1217.6,857.1 1217.8,863 1216.6,868.8 1214.1,874.2 1210.4,879.3Z M1196.3,871.9 1199.2,867.8 1200.8,863.3 1201.2,858.5 1200.3,853.5 1197.9,848.5 1194,843.6 1188.1,838.8 1181.8,834.6 1175.7,831 1170.6,828.1 1166.3,825.6 1162.2,823.4 1158.1,821.6 1154.5,820 1151.4,818.6 1148.5,817.3 1146,816.2 1143.6,815.1 1141.4,814.1 1139.4,813.2 1137.4,812.3 1135.5,811.5 1133.7,810.7 1132,809.9 1130.2,809.1 1128.5,808.3 1126.7,807.6 1125,806.8 1123.2,806 1121.3,805.2 1119.4,804.3 1117.4,803.4 1115.3,802.5 1113,801.4 1110.5,800.3 1107.8,799.1 1104.8,797.8 1101.4,796.3 1097.5,794.5 1093,792.5 1087.6,790.1 1080.9,787.1 1072.4,783.4 1051.3,769.3 1043,769.3 1036.3,771.1 1031.3,774.3 1028.3,778.6 1028.1,784.1 1050,798.6 1056.4,804.5 1061.3,809.1 1065.3,812.7 1068.5,815.7 1071.2,818.2 1073.6,820.4 1075.7,822.3 1077.5,824 1079.2,825.5 1080.7,826.9 1082.1,828.3 1083.5,829.5 1084.7,830.6 1085.9,831.8 1087.1,832.8 1088.2,833.9 1089.4,834.9 1090.5,835.9 1091.6,837 1092.7,838 1093.8,839 1095,840.1 1096.2,841.2 1097.5,842.4 1098.8,843.6 1100.3,845 1101.8,846.4 1103.5,847.9 1105.4,849.7 1107.5,851.6 1109.8,853.8 1112.6,856.4 1115.9,859.4 1119.9,862.6 1124.7,866.5 1130.7,871.4 1137.9,876.3 1145.5,880 1153.2,882.3 1160.9,883.4 1168.3,883.5 1175.3,882.7 1181.8,881.1 1187.5,878.7 1192.4,875.6Z" fill="#5f5f5f" stroke="#5f5f5f" stroke-width="0.8" fill-rule="evenodd"/>
<path d="M1205.5,882.5 1199.6,886.4 1192.7,889.6 1185,891.9 1176.6,893.4 1167.9,894 1158.8,893.6 1149.8,892.1 1140.8,889.7 1132.3,886.1 1124.3,881.4 1117.1,875.4 1111.2,869.9 1106.4,865.4 1102.3,861.7 1098.9,858.4 1095.8,855.6 1093.1,853.1 1090.6,850.8 1088.4,848.7 1086.3,846.8 1084.4,845 1082.6,843.3 1080.8,841.6 1079.1,840.1 1077.5,838.5 1075.9,837 1074.3,835.5 1072.7,834.1 1071.1,832.6 1069.4,831 1067.8,829.5 1066,827.9 1064.2,826.2 1062.3,824.4 1060.3,822.5 1058.1,820.5 1055.7,818.3 1053.1,815.8 1050.1,813.1 1046.8,809.9 1042.9,806.3 1038.3,802 1025.7,794.6 1016.7,787 1014.6,781 1015.3,775.8 1018,771.2 1022.4,767.4 1028.2,764.6 1035.2,762.8 1043.2,762.3 1052.4,763.5 1064.2,769.1 1073.6,773.8 1080.8,776.9 1086.8,779.6 1091.9,781.8 1096.4,783.8 1100.3,785.6 1103.9,787.2 1107.2,788.6 1110.2,790 1113,791.2 1115.7,792.4 1118.3,793.5 1120.7,794.6 1123.1,795.7 1125.4,796.7 1127.8,797.7 1130.1,798.7 1132.4,799.8 1134.7,800.8 1137.2,801.9 1139.7,803 1142.3,804.1 1145,805.3 1147.9,806.6 1151.1,808 1154.5,809.5 1158.2,811.2 1162.4,813.1 1167.2,815.2 1172.7,817.6 1179.2,820.5 1187.1,824 1195.8,828.2 1203.1,833.1 1208.8,838.4 1213.2,844 1216.1,849.9 1217.7,855.8 1217.8,861.7 1216.7,867.4 1214.2,872.9 1210.4,877.9Z M1196.5,870.7 1199.3,866.5 1201,862 1201.4,857.2 1200.5,852.2 1198.1,847.2 1194.2,842.3 1188.3,837.5 1182.3,833.4 1176.5,829.8 1171.6,826.8 1167.4,824.3 1163.5,822.1 1159.3,820.2 1155.6,818.5 1152.4,817.1 1149.5,815.8 1146.9,814.6 1144.5,813.6 1142.2,812.6 1140.1,811.6 1138.1,810.7 1136.2,809.9 1134.3,809 1132.5,808.2 1130.7,807.4 1128.9,806.6 1127.1,805.9 1125.3,805 1123.5,804.2 1121.6,803.4 1119.6,802.5 1117.6,801.6 1115.4,800.6 1113,799.6 1110.5,798.4 1107.7,797.2 1104.6,795.8 1101.2,794.3 1097.2,792.5 1092.5,790.4 1087,788 1080.1,784.9 1071.5,781.1 1051.3,768 1043,768 1036.3,769.9 1031.3,773 1028.3,777.3 1028.2,782.9 1049.9,797.3 1056.3,803.2 1061.3,807.8 1065.2,811.4 1068.5,814.4 1071.2,816.9 1073.6,819.1 1075.6,821 1077.5,822.7 1079.2,824.3 1080.7,825.7 1082.1,827 1083.4,828.2 1084.7,829.4 1085.9,830.5 1087.1,831.6 1088.2,832.6 1089.4,833.7 1090.5,834.7 1091.6,835.7 1092.7,836.7 1093.8,837.8 1095,838.9 1096.2,840 1097.5,841.2 1098.9,842.4 1100.3,843.7 1101.8,845.1 1103.5,846.7 1105.4,848.4 1107.5,850.4 1109.9,852.6 1112.7,855.1 1116,858.2 1120,861.4 1124.8,865.3 1130.8,870.2 1138,875.1 1145.6,878.7 1153.4,881 1161,882.2 1168.5,882.3 1175.5,881.5 1181.9,879.8 1187.7,877.4 1192.6,874.3Z" fill="#6b6b6b" stroke="#6b6b6b" stroke-width="0.8" fill-rule="evenodd"/>
<path d="M1205.5,881.1 1199.5,885 1192.6,888.2 1185,890.5 1176.6,892 1167.9,892.6 1158.8,892.1 1149.8,890.7 1140.8,888.2 1132.3,884.6 1124.3,879.9 1117.1,873.9 1111.3,868.4 1106.5,864 1102.4,860.2 1098.9,857 1095.9,854.2 1093.2,851.6 1090.8,849.4 1088.5,847.3 1086.5,845.4 1084.5,843.6 1082.7,841.9 1081,840.3 1079.3,838.7 1077.6,837.2 1076,835.7 1074.4,834.2 1072.9,832.7 1071.3,831.2 1069.6,829.7 1068,828.2 1066.2,826.6 1064.4,824.9 1062.5,823.1 1060.5,821.2 1058.3,819.2 1055.9,817 1053.3,814.5 1050.4,811.8 1047,808.7 1043.2,805.1 1038.6,800.8 1026.6,793.6 1017,785.8 1014.8,779.8 1015.4,774.6 1018.2,770 1022.6,766.3 1028.3,763.4 1035.3,761.6 1043.4,761.1 1052.6,762.4 1064.6,768.3 1073.7,772.5 1080.8,775.7 1086.8,778.3 1091.9,780.6 1096.4,782.6 1100.4,784.3 1104,785.9 1107.3,787.4 1110.3,788.7 1113.1,789.9 1115.8,791.1 1118.3,792.2 1120.8,793.3 1123.2,794.4 1125.5,795.4 1127.8,796.4 1130.1,797.5 1132.5,798.5 1134.8,799.5 1137.2,800.6 1139.7,801.7 1142.3,802.9 1145.1,804.1 1148,805.4 1151.1,806.8 1154.6,808.3 1158.3,809.9 1162.5,811.8 1167.3,813.9 1172.8,816.3 1179.3,819.2 1187.2,822.7 1195.6,826.9 1202.9,831.8 1208.7,837.1 1213.1,842.7 1216,848.5 1217.6,854.5 1217.8,860.4 1216.6,866.1 1214.1,871.5 1210.4,876.6Z M1196.8,869.5 1199.6,865.3 1201.3,860.8 1201.7,856 1200.8,851 1198.5,846 1194.6,841.1 1188.7,836.3 1183,832.2 1177.4,828.6 1172.6,825.6 1168.5,823 1164.9,820.7 1160.5,818.8 1156.8,817.1 1153.5,815.7 1150.5,814.3 1147.8,813.1 1145.3,812 1143,811 1140.9,810 1138.8,809.1 1136.8,808.3 1134.9,807.4 1133.1,806.6 1131.2,805.8 1129.4,804.9 1127.6,804.1 1125.7,803.3 1123.8,802.5 1121.9,801.6 1119.9,800.7 1117.7,799.8 1115.5,798.8 1113.1,797.7 1110.5,796.5 1107.7,795.3 1104.5,793.9 1100.9,792.3 1096.9,790.5 1092.1,788.4 1086.4,785.8 1079.4,782.7 1070.5,778.8 1051.3,766.7 1043,766.8 1036.4,768.6 1031.3,771.8 1028.3,776.1 1028.2,781.6 1049.6,795.9 1056,801.9 1061,806.4 1065,810.1 1068.3,813.1 1071,815.6 1073.4,817.8 1075.5,819.7 1077.3,821.4 1079,823 1080.6,824.4 1082,825.7 1083.3,827 1084.6,828.1 1085.8,829.2 1087,830.3 1088.2,831.4 1089.3,832.4 1090.4,833.5 1091.5,834.5 1092.6,835.5 1093.8,836.6 1095,837.7 1096.2,838.8 1097.5,840 1098.8,841.2 1100.3,842.5 1101.8,844 1103.5,845.5 1105.4,847.3 1107.5,849.2 1110,851.4 1112.8,854 1116.1,857.1 1120.1,860.3 1124.9,864.2 1131,869.2 1138.2,874 1145.8,877.6 1153.6,879.9 1161.2,881 1168.7,881.1 1175.7,880.3 1182.2,878.6 1187.9,876.2 1192.8,873.1Z" fill="#787878" stroke="#787878" stroke-width="0.8" fill-rule="evenodd"/>
<path d="M1205.4,879.6 1199.4,883.5 1192.5,886.7 1184.9,889 1176.5,890.5 1167.8,891.1 1158.8,890.6 1149.7,889.1 1140.8,886.6 1132.2,883 1124.3,878.2 1117.2,872.3 1111.3,866.8 1106.5,862.4 1102.5,858.7 1099.1,855.4 1096,852.6 1093.3,850.1 1090.9,847.9 1088.7,845.8 1086.7,843.9 1084.7,842.1 1082.9,840.5 1081.2,838.8 1079.5,837.3 1077.9,835.8 1076.3,834.3 1074.7,832.8 1073.1,831.4 1071.5,829.9 1069.9,828.4 1068.2,826.8 1066.5,825.2 1064.7,823.6 1062.8,821.8 1060.8,819.9 1058.7,817.9 1056.3,815.7 1053.7,813.3 1050.8,810.6 1047.4,807.5 1043.6,803.9 1039,799.7 1028.5,793 1017.4,784.7 1015.1,778.7 1015.7,773.4 1018.4,768.9 1022.8,765.1 1028.6,762.3 1035.5,760.5 1043.6,760.1 1052.8,761.4 1064.9,767.4 1073.7,771.2 1080.9,774.4 1086.9,777.1 1092,779.3 1096.5,781.3 1100.5,783.1 1104,784.6 1107.3,786.1 1110.3,787.4 1113.2,788.7 1115.8,789.9 1118.4,791 1120.9,792.1 1123.2,793.1 1125.6,794.2 1127.9,795.2 1130.2,796.2 1132.5,797.2 1134.9,798.3 1137.3,799.3 1139.8,800.4 1142.4,801.6 1145.2,802.8 1148.1,804.1 1151.2,805.5 1154.6,807 1158.4,808.7 1162.6,810.5 1167.4,812.6 1172.9,815.1 1179.4,818 1187.3,821.4 1195.2,825.6 1202.6,830.4 1208.4,835.7 1212.8,841.3 1215.8,847.2 1217.4,853.1 1217.6,859 1216.5,864.7 1214,870.1 1210.3,875.1Z M1197.1,868.3 1200,864.1 1201.7,859.6 1202.1,854.8 1201.3,849.8 1199,844.8 1195.1,839.9 1189.4,835.1 1183.8,831 1178.3,827.4 1173.7,824.4 1169.6,821.7 1166.1,819.4 1161.8,817.4 1157.9,815.7 1154.5,814.2 1151.5,812.9 1148.7,811.6 1146.2,810.5 1143.8,809.4 1141.6,808.5 1139.5,807.5 1137.5,806.6 1135.5,805.8 1133.6,804.9 1131.7,804.1 1129.9,803.2 1128,802.4 1126.1,801.6 1124.2,800.7 1122.2,799.8 1120.1,798.9 1117.9,797.9 1115.6,796.9 1113.2,795.8 1110.5,794.6 1107.6,793.4 1104.4,791.9 1100.7,790.3 1096.5,788.4 1091.7,786.3 1085.8,783.7 1078.7,780.5 1069.7,776.6 1051.3,765.5 1043,765.5 1036.4,767.4 1031.3,770.5 1028.3,774.8 1028.2,780.3 1049,794.4 1055.6,800.4 1060.6,805 1064.6,808.7 1067.9,811.7 1070.7,814.3 1073.1,816.5 1075.2,818.4 1077.1,820.1 1078.8,821.7 1080.3,823.1 1081.8,824.5 1083.1,825.7 1084.4,826.9 1085.6,828 1086.8,829.1 1088,830.2 1089.1,831.2 1090.2,832.3 1091.4,833.3 1092.5,834.4 1093.7,835.4 1094.9,836.5 1096.1,837.7 1097.4,838.8 1098.8,840.1 1100.2,841.4 1101.8,842.9 1103.5,844.5 1105.4,846.2 1107.6,848.2 1110,850.4 1112.8,853 1116.2,856.1 1120.2,859.3 1125.1,863.3 1131.3,868.3 1138.4,873 1146.1,876.6 1153.8,878.8 1161.5,879.9 1169,880 1176,879.2 1182.5,877.5 1188.3,875.1 1193.2,872Z" fill="#777777" stroke="#777777" stroke-width="0.8" fill-rule="evenodd"/>
<path d="M1205.2,878.1 1199.2,882 1192.3,885.1 1184.7,887.5 1176.4,888.9 1167.6,889.4 1158.6,889 1149.6,887.5 1140.7,884.9 1132.1,881.2 1124.2,876.4 1117.1,870.4 1111.3,865.1 1106.6,860.7 1102.6,857 1099.2,853.8 1096.2,851 1093.5,848.6 1091.1,846.3 1088.9,844.3 1086.9,842.4 1085,840.6 1083.2,839 1081.5,837.4 1079.8,835.8 1078.2,834.3 1076.6,832.9 1075,831.4 1073.5,829.9 1071.9,828.5 1070.3,827 1068.7,825.5 1066.9,823.9 1065.2,822.2 1063.3,820.5 1061.3,818.6 1059.1,816.6 1056.8,814.5 1054.2,812.1 1051.3,809.4 1048,806.3 1044.2,802.8 1039.7,798.6 1034.2,793.5 1018.1,783.7 1015.5,777.6 1016.1,772.4 1018.8,767.8 1023.1,764.1 1028.9,761.2 1035.8,759.5 1043.9,759.1 1053.3,760.6 1065,766.1 1073.8,770 1080.9,773.1 1086.9,775.8 1092.1,778.1 1096.5,780 1100.5,781.8 1104.1,783.4 1107.4,784.8 1110.4,786.2 1113.2,787.4 1115.9,788.6 1118.5,789.7 1120.9,790.8 1123.3,791.9 1125.6,792.9 1128,793.9 1130.3,794.9 1132.6,796 1135,797 1137.4,798.1 1139.9,799.2 1142.5,800.3 1145.2,801.5 1148.2,802.8 1151.3,804.2 1154.7,805.7 1158.5,807.4 1162.7,809.2 1167.5,811.4 1173,813.8 1179.5,816.7 1187.4,820.2 1194.5,824.3 1202,829.1 1208,834.3 1212.4,839.9 1215.5,845.7 1217.1,851.6 1217.3,857.5 1216.2,863.2 1213.7,868.6 1210,873.6Z M1197.6,867.2 1200.5,863 1202.2,858.5 1202.7,853.7 1201.8,848.7 1199.6,843.7 1195.8,838.7 1190.2,834 1184.7,829.8 1179.3,826.2 1174.7,823.1 1170.7,820.5 1167.2,818.1 1163,816 1159.1,814.3 1155.6,812.7 1152.5,811.4 1149.7,810.1 1147.1,809 1144.6,807.9 1142.4,806.9 1140.2,805.9 1138.1,805 1136.1,804.1 1134.2,803.2 1132.3,802.4 1130.3,801.5 1128.4,800.7 1126.5,799.8 1124.5,798.9 1122.4,798 1120.3,797.1 1118.1,796.1 1115.8,795.1 1113.2,794 1110.5,792.8 1107.5,791.4 1104.2,790 1100.5,788.3 1096.2,786.4 1091.2,784.2 1085.2,781.5 1077.9,778.3 1069.7,775.3 1051.3,764.2 1043,764.2 1036.4,766.1 1031.3,769.2 1028.3,773.5 1028.1,779 1048.2,792.8 1054.9,798.9 1060,803.5 1064,807.3 1067.4,810.3 1070.2,812.9 1072.6,815.1 1074.7,817.1 1076.6,818.8 1078.4,820.4 1079.9,821.9 1081.4,823.2 1082.8,824.5 1084.1,825.7 1085.3,826.8 1086.5,827.9 1087.7,829 1088.9,830.1 1090,831.1 1091.1,832.2 1092.3,833.2 1093.5,834.3 1094.7,835.4 1095.9,836.6 1097.2,837.8 1098.6,839.1 1100.1,840.4 1101.7,841.9 1103.4,843.5 1105.4,845.2 1107.5,847.2 1110,849.5 1112.9,852.1 1116.3,855.2 1120.4,858.5 1125.3,862.6 1131.6,867.7 1138.8,872.3 1146.4,875.7 1154.2,877.9 1161.9,878.9 1169.4,879 1176.4,878.1 1182.9,876.4 1188.7,874 1193.6,870.9Z" fill="#747474" stroke="#747474" stroke-width="0.8" fill-rule="evenodd"/>
<path d="M1204.8,876.5 1198.9,880.4 1192,883.5 1184.4,885.8 1176.1,887.2 1167.4,887.7 1158.4,887.2 1149.3,885.6 1140.5,883 1132,879.3 1124,874.3 1117.1,868.4 1111.3,863.1 1106.7,858.8 1102.7,855.1 1099.4,852 1096.4,849.3 1093.8,846.8 1091.4,844.6 1089.2,842.6 1087.2,840.8 1085.3,839 1083.6,837.4 1081.9,835.8 1080.2,834.3 1078.6,832.8 1077.1,831.4 1075.5,829.9 1074,828.5 1072.4,827 1070.8,825.6 1069.2,824.1 1067.5,822.5 1065.8,820.9 1063.9,819.2 1061.9,817.3 1059.8,815.4 1057.5,813.2 1054.9,810.8 1052.1,808.2 1048.8,805.2 1045.1,801.7 1040.6,797.5 1035.2,792.5 1019,782.8 1016.2,776.6 1016.6,771.4 1019.2,766.8 1023.5,763.1 1029.3,760.3 1036.3,758.6 1044.4,758.2 1053.8,759.9 1065,764.9 1073.8,768.7 1081,771.9 1087,774.5 1092.1,776.8 1096.6,778.8 1100.6,780.5 1104.2,782.1 1107.4,783.6 1110.5,784.9 1113.3,786.1 1116,787.3 1118.5,788.4 1121,789.5 1123.4,790.6 1125.7,791.6 1128,792.6 1130.4,793.7 1132.7,794.7 1135,795.7 1137.5,796.8 1140,797.9 1142.6,799.1 1145.3,800.3 1148.2,801.6 1151.4,802.9 1154.8,804.4 1158.6,806.1 1162.8,808 1167.6,810.1 1173.1,812.5 1179.6,815.4 1187.5,818.9 1193.6,822.9 1201.2,827.7 1207.3,832.9 1211.8,838.5 1214.9,844.3 1216.6,850.1 1216.8,856 1215.7,861.7 1213.3,867.1 1209.7,872Z M1198.2,866.2 1201.1,862 1202.9,857.4 1203.4,852.6 1202.6,847.6 1200.5,842.6 1196.8,837.6 1191.4,832.9 1185.9,828.7 1180.5,825 1175.9,821.9 1171.9,819.2 1168.3,816.8 1164.3,814.7 1160.2,812.9 1156.7,811.3 1153.5,809.9 1150.6,808.6 1147.9,807.4 1145.4,806.3 1143.1,805.3 1140.9,804.3 1138.8,803.4 1136.7,802.5 1134.7,801.6 1132.8,800.7 1130.8,799.8 1128.8,799 1126.8,798.1 1124.8,797.2 1122.7,796.3 1120.6,795.3 1118.3,794.3 1115.9,793.2 1113.3,792.1 1110.5,790.9 1107.5,789.5 1104.1,788 1100.3,786.3 1095.9,784.4 1090.8,782.1 1084.7,779.4 1077.2,776.1 1069.8,774.1 1051.3,762.9 1043,763 1036.4,764.8 1031.3,768 1028.3,772.3 1028.1,777.8 1047.1,791 1053.9,797.2 1059,801.9 1063.2,805.7 1066.6,808.9 1069.4,811.5 1071.9,813.8 1074.1,815.8 1076,817.5 1077.8,819.1 1079.4,820.6 1080.9,822 1082.3,823.3 1083.6,824.5 1084.9,825.7 1086.1,826.8 1087.3,827.9 1088.5,829 1089.6,830 1090.8,831.1 1092,832.2 1093.2,833.3 1094.4,834.4 1095.7,835.6 1097,836.8 1098.4,838.1 1099.9,839.5 1101.6,841 1103.3,842.6 1105.3,844.4 1107.5,846.4 1110,848.8 1113,851.4 1116.4,854.5 1120.6,857.9 1125.6,862 1132,867.3 1139.2,871.7 1146.9,875 1154.6,877.1 1162.4,878.1 1169.8,878.1 1176.9,877.2 1183.4,875.5 1189.2,873 1194.2,869.9Z" fill="#717171" stroke="#717171" stroke-width="0.8" fill-rule="evenodd"/>
<path d="M1204.2,874.8 1198.3,878.6 1191.5,881.7 1183.9,883.9 1175.6,885.3 1166.9,885.8 1158,885.2 1149,883.6 1140.1,880.9 1131.7,877 1123.8,871.9 1116.9,866.1 1111.3,860.9 1106.7,856.6 1102.9,853.1 1099.6,850 1096.7,847.3 1094.1,844.9 1091.8,842.8 1089.6,840.8 1087.7,839 1085.8,837.3 1084.1,835.7 1082.4,834.1 1080.8,832.6 1079.2,831.2 1077.7,829.8 1076.2,828.4 1074.7,826.9 1073.1,825.5 1071.6,824.1 1070,822.6 1068.3,821.1 1066.6,819.5 1064.8,817.8 1062.8,816 1060.8,814.1 1058.5,812 1056,809.7 1053.2,807.1 1050,804.1 1046.3,800.7 1041.9,796.6 1036.5,791.7 1020.4,782 1017.1,775.8 1017.4,770.5 1019.9,765.9 1024.2,762.2 1029.9,759.4 1036.9,757.8 1045,757.5 1054.7,759.5 1065.1,763.7 1073.9,767.5 1081.1,770.7 1087.1,773.3 1092.2,775.6 1096.7,777.6 1100.6,779.3 1104.2,780.9 1107.5,782.3 1110.5,783.7 1113.4,784.9 1116,786.1 1118.6,787.2 1121,788.3 1123.4,789.4 1125.8,790.4 1128.1,791.4 1130.4,792.4 1132.7,793.5 1135.1,794.5 1137.5,795.6 1140,796.7 1142.6,797.8 1145.3,799 1148.3,800.3 1151.4,801.7 1154.8,803.2 1158.6,804.9 1162.8,806.7 1167.6,808.8 1173.1,811.2 1179.6,814.1 1187.5,817.6 1192.1,821.5 1200,826.2 1206.2,831.4 1210.8,837 1214,842.7 1215.8,848.6 1216.1,854.4 1215,860 1212.7,865.4 1209,870.3Z M1199,865.3 1202,861.1 1203.8,856.5 1204.4,851.6 1203.7,846.6 1201.6,841.6 1198.1,836.6 1192.9,831.8 1187.4,827.6 1181.9,823.8 1177.2,820.7 1173.1,817.9 1169.4,815.4 1165.5,813.3 1161.4,811.5 1157.7,809.8 1154.5,808.4 1151.5,807.1 1148.8,805.9 1146.3,804.8 1143.9,803.7 1141.6,802.7 1139.4,801.7 1137.3,800.8 1135.3,799.9 1133.3,799 1131.3,798.1 1129.3,797.2 1127.2,796.3 1125.1,795.4 1123,794.5 1120.8,793.5 1118.5,792.5 1116,791.4 1113.4,790.2 1110.5,789 1107.4,787.6 1103.9,786 1100,784.3 1095.6,782.3 1090.3,780 1084.1,777.3 1076.4,773.9 1069.8,772.8 1051.3,761.6 1043,761.7 1036.3,763.5 1031.3,766.7 1028.3,771 1028,776.4 1045.5,789 1052.4,795.4 1057.7,800.2 1061.9,804.1 1065.4,807.3 1068.4,810 1070.9,812.3 1073.1,814.4 1075.1,816.2 1076.9,817.9 1078.6,819.4 1080.1,820.8 1081.5,822.1 1082.9,823.3 1084.2,824.5 1085.4,825.7 1086.7,826.8 1087.9,827.9 1089.1,829 1090.3,830.1 1091.5,831.2 1092.7,832.4 1094,833.5 1095.3,834.7 1096.7,836 1098.1,837.3 1099.6,838.7 1101.3,840.3 1103.1,841.9 1105.2,843.8 1107.4,845.9 1110,848.2 1113,851 1116.6,854.1 1120.8,857.6 1126,861.9 1132.6,867.3 1139.8,871.4 1147.5,874.5 1155.3,876.5 1163,877.4 1170.5,877.4 1177.6,876.4 1184.2,874.7 1190,872.2 1195,869Z" fill="#6e6e6e" stroke="#6e6e6e" stroke-width="0.8" fill-rule="evenodd"/>
<path d="M1203.2,872.8 1197.4,876.5 1190.6,879.5 1183,881.8 1174.8,883.1 1166.2,883.4 1157.3,882.8 1148.3,881 1139.5,878.2 1131.1,874.1 1123.3,868.6 1116.7,863 1111.2,858 1106.8,853.9 1103.1,850.5 1099.9,847.5 1097.1,844.9 1094.6,842.6 1092.3,840.5 1090.3,838.6 1088.4,836.9 1086.6,835.2 1084.9,833.7 1083.3,832.2 1081.7,830.7 1080.2,829.3 1078.7,828 1077.2,826.6 1075.8,825.2 1074.3,823.9 1072.8,822.5 1071.2,821.1 1069.6,819.6 1067.9,818 1066.2,816.4 1064.3,814.7 1062.3,812.8 1060.1,810.8 1057.7,808.5 1054.9,806 1051.8,803.1 1048.2,799.8 1044,795.9 1038.8,791.1 1023,781.7 1018.7,775.2 1018.6,769.8 1021,765.3 1025.2,761.6 1030.9,758.8 1037.9,757.3 1046.1,757.3 1056.3,759.8 1065.7,763.1 1074.4,766.9 1081.4,770 1087.4,772.6 1092.4,774.8 1096.9,776.8 1100.8,778.5 1104.3,780.1 1107.6,781.5 1110.5,782.8 1113.3,784 1116,785.2 1118.5,786.3 1120.9,787.4 1123.3,788.4 1125.6,789.4 1127.9,790.4 1130.2,791.4 1132.4,792.5 1134.8,793.5 1137.2,794.5 1139.6,795.6 1142.2,796.7 1144.9,797.9 1147.8,799.2 1150.9,800.6 1154.3,802.1 1158,803.7 1162.1,805.5 1166.9,807.6 1172.3,810 1178.7,812.8 1186.5,816.3 1189.3,819.9 1197.8,824.6 1204.3,829.8 1209.2,835.3 1212.5,841 1214.3,846.8 1214.8,852.5 1213.8,858.1 1211.5,863.5 1207.9,868.4Z M1200.4,864.6 1203.4,860.4 1205.3,855.8 1206,850.9 1205.4,845.8 1203.5,840.8 1200.2,835.8 1195.3,830.9 1189.9,826.6 1183.9,822.7 1178.9,819.4 1174.5,816.6 1170.6,814.1 1166.8,811.9 1162.5,810 1158.8,808.4 1155.5,806.9 1152.4,805.6 1149.6,804.3 1147.1,803.2 1144.6,802.1 1142.3,801.1 1140.1,800.1 1137.9,799.2 1135.9,798.2 1133.8,797.3 1131.7,796.4 1129.7,795.5 1127.6,794.6 1125.5,793.7 1123.3,792.7 1121,791.7 1118.7,790.6 1116.1,789.5 1113.4,788.3 1110.5,787.1 1107.3,785.7 1103.8,784.1 1099.8,782.3 1095.2,780.3 1089.9,777.9 1083.5,775.1 1075.7,771.7 1063.1,764.5 1051.3,760.2 1043,760.3 1036.3,762.2 1031.3,765.4 1028.2,769.6 1027.9,775.1 1045.6,787.8 1050,793.2 1055.5,798.2 1059.9,802.3 1063.5,805.6 1066.6,808.4 1069.2,810.8 1071.5,813 1073.6,814.9 1075.5,816.6 1077.2,818.2 1078.8,819.6 1080.3,821 1081.7,822.3 1083,823.5 1084.3,824.7 1085.6,825.9 1086.9,827.1 1088.1,828.2 1089.4,829.3 1090.6,830.5 1091.9,831.7 1093.2,832.9 1094.6,834.1 1096,835.4 1097.5,836.8 1099.1,838.3 1100.9,839.9 1102.8,841.6 1104.9,843.6 1107.2,845.7 1109.9,848.2 1113.1,851.1 1116.8,854.3 1121.2,858 1126.7,862.5 1133.6,868.3 1140.7,871.6 1148.4,874.6 1156.2,876.4 1164,877.2 1171.5,877 1178.7,876 1185.3,874.2 1191.2,871.6 1196.3,868.4Z" fill="#6b6b6b" stroke="#6b6b6b" stroke-width="0.8" fill-rule="evenodd"/>
<path d="M1064.6,790.9 1161.7,834.6 1168.2,817 1070.7,773.8Z" fill="url(#gateg)"/>
<clipPath id="hw1184"><path d="M1061.2,781.1 1058.9,782.4 1056.2,783.5 1053.3,784.2 1050.2,784.5 1047.1,784.5 1043.9,784.2 1040.9,783.5 1038.2,782.4 1035.7,781.1 1033.6,779.6 1032,777.8 1030.9,775.9 1030.3,773.9 1030.2,771.9 1030.7,770 1031.7,768.1 1033.2,766.4 1035.1,764.8 1037.4,763.6 1040.1,762.6 1043,761.9 1046,761.6 1049.1,761.6 1052.2,761.9 1055.1,762.6 1057.9,763.6 1060.3,764.9 1062.4,766.4 1064.1,768.1 1065.2,770 1065.9,771.9 1066,774 1065.6,775.9 1064.6,777.8 1063.2,779.6Z"/></clipPath>
<path d="M1061.2,781.1 1058.9,782.4 1056.2,783.5 1053.3,784.2 1050.2,784.5 1047.1,784.5 1043.9,784.2 1040.9,783.5 1038.2,782.4 1035.7,781.1 1033.6,779.6 1032,777.8 1030.9,775.9 1030.3,773.9 1030.2,771.9 1030.7,770 1031.7,768.1 1033.2,766.4 1035.1,764.8 1037.4,763.6 1040.1,762.6 1043,761.9 1046,761.6 1049.1,761.6 1052.2,761.9 1055.1,762.6 1057.9,763.6 1060.3,764.9 1062.4,766.4 1064.1,768.1 1065.2,770 1065.9,771.9 1066,774 1065.6,775.9 1064.6,777.8 1063.2,779.6Z" fill="url(#holeg)"/>
<path d="M1192.2,883.7 1187.3,886.8 1181.6,889.3 1175.1,891 1168.1,891.8 1160.7,891.7 1153.1,890.6 1145.4,888.4 1137.7,884.8 1130.6,880.1 1124.4,875.1 1119.6,871.1 1115.6,867.8 1112.2,864.7 1109.4,862.1 1107,859.9 1104.8,857.9 1102.9,856.1 1101.2,854.5 1099.7,853.1 1098.2,851.7 1096.9,850.5 1095.6,849.3 1094.3,848.1 1093.1,847 1092,846 1090.9,844.9 1089.7,843.9 1088.6,842.8 1087.5,841.8 1086.3,840.7 1085.1,839.6 1083.9,838.5 1082.6,837.3 1081.3,836 1079.8,834.7 1078.3,833.3 1076.6,831.7 1074.7,830 1072.6,828 1070.2,825.8 1067.5,823.2 1064.2,820.2 1060.2,816.5 1055.2,811.8 1048.7,805.8 1028,791.7 1028.1,786.2 1031.1,781.9 1036.1,778.7 1042.8,776.9 1051,776.8 1078.2,797.3 1085.4,800.5 1091,803.1 1095.6,805.1 1099.5,806.9 1102.8,808.3 1105.6,809.6 1108.2,810.8 1110.5,811.8 1112.6,812.7 1114.5,813.6 1116.3,814.4 1118,815.2 1119.6,815.9 1121.2,816.6 1122.7,817.3 1124.2,818 1125.7,818.6 1127.1,819.3 1128.6,820 1130.1,820.6 1131.6,821.3 1133.2,822 1134.9,822.8 1136.6,823.6 1138.5,824.4 1140.5,825.3 1142.6,826.3 1145,827.3 1147.6,828.5 1150.7,829.9 1154.1,831.4 1158.2,833.3 1163.4,835.5 1170.3,838.4 1179.3,842.1 1188.5,846.7 1194.2,851.5 1198,856.5 1200.3,861.5 1201.2,866.5 1200.7,871.3 1199,875.9 1196.1,880Z" fill="#fff" clip-path="url(#hw1184)"/>
<path d="M827.3,894.3 820.4,898.2 812.7,901.4 804.4,903.8 795.7,905.3 786.9,905.8 778,905.4 769.4,903.9 761.1,901.3 753.6,897.7 746.9,892.8 741.4,886.9 736.9,881.4 733.3,876.9 730.3,873.2 727.7,869.9 725.4,867.1 723.4,864.6 721.6,862.3 719.9,860.3 718.4,858.3 716.9,856.6 715.6,854.9 714.3,853.2 713,851.7 711.8,850.1 710.6,848.6 709.4,847.2 708.2,845.7 707,844.2 705.8,842.7 704.5,841.1 703.2,839.5 701.9,837.9 700.4,836.1 698.9,834.2 697.3,832.2 695.5,830 693.5,827.5 691.3,824.8 688.8,821.7 685.9,818.1 682.5,813.8 674.1,807.2 664.9,798.8 664.1,792.7 666.1,787.4 669.9,782.8 675.3,779 681.8,776.2 689.2,774.4 697.4,773.9 706.2,775.3 716.8,781.5 724.5,785.4 730.8,788.6 736.1,791.2 740.6,793.5 744.5,795.5 748,797.2 751.1,798.8 754,800.3 756.7,801.6 759.1,802.9 761.5,804 763.7,805.2 765.9,806.3 768,807.3 770,808.4 772,809.4 774.1,810.4 776.1,811.4 778.2,812.5 780.3,813.6 782.5,814.7 784.8,815.8 787.2,817 789.7,818.3 792.5,819.7 795.5,821.2 798.8,822.9 802.5,824.8 806.7,826.9 811.5,829.3 817.2,832.2 824.1,835.7 831.2,839.9 837.3,844.8 841.8,850.1 844.7,855.8 846.2,861.6 846.2,867.6 844.9,873.5 842.3,879.2 838.4,884.7 833.4,889.8Z M822.1,882.9 826.1,878.7 828.9,874.2 830.6,869.3 831.1,864.3 830.1,859.3 827.5,854.3 823.1,849.5 815.1,844.9 807,841.1 800.9,838.3 796.3,836 792.7,834.2 789.6,832.6 786.9,831.2 784.6,830 782.5,829 780.6,828 778.8,827.1 777.2,826.3 775.6,825.5 774.2,824.7 772.8,824 771.4,823.3 770.1,822.6 768.8,822 767.5,821.3 766.2,820.7 764.9,820 763.5,819.3 762.1,818.6 760.7,817.9 759.2,817.1 757.6,816.3 755.9,815.4 754,814.5 752,813.4 749.8,812.3 747.2,811 744.3,809.5 740.9,807.8 736.8,805.7 731.8,803.1 725.5,799.9 703.6,779.3 695.3,779.4 688.2,781.2 682.4,784.4 678.3,788.7 676.6,794.3 693.7,808.4 698.7,814.5 702.5,819.1 705.5,822.9 708,825.9 710.1,828.5 711.9,830.7 713.5,832.7 714.9,834.4 716.2,836 717.4,837.4 718.5,838.8 719.5,840 720.5,841.2 721.4,842.4 722.3,843.5 723.2,844.5 724.1,845.6 724.9,846.6 725.8,847.7 726.7,848.7 727.5,849.8 728.4,850.9 729.4,852.1 730.4,853.3 731.4,854.5 732.5,855.9 733.7,857.4 735,858.9 736.4,860.7 738,862.7 739.9,865 742,867.6 744.6,870.6 747.8,873.9 751.6,877.9 756.4,883 762.4,887.8 769.1,891.3 776.2,893.6 783.6,894.7 791,894.7 798.2,893.9 805.1,892.2 811.5,889.8 817.2,886.6Z" fill="#343434" stroke="#343434" stroke-width="0.8" fill-rule="evenodd"/>
<path d="M827.6,893.3 820.7,897.3 812.9,900.5 804.6,902.9 795.9,904.4 787,904.9 778.1,904.5 769.4,903.1 761.1,900.6 753.5,897 746.8,892.3 741.2,886.3 736.7,880.7 733.1,876.2 730,872.4 727.4,869.1 725.1,866.3 723,863.7 721.2,861.4 719.5,859.3 717.9,857.4 716.4,855.6 715,853.9 713.7,852.2 712.4,850.6 711.2,849.1 710,847.6 708.8,846.1 707.6,844.6 706.4,843.1 705.1,841.5 703.9,840 702.5,838.4 701.2,836.7 699.7,834.9 698.2,833 696.5,830.9 694.7,828.7 692.8,826.2 690.5,823.4 688,820.3 685.1,816.7 681.6,812.3 670.8,804.8 664,797.2 663.4,791.2 665.5,785.9 669.4,781.3 674.8,777.5 681.3,774.6 688.8,772.8 696.9,772.3 705.7,773.6 716,779 724.3,783.9 730.6,787.1 735.9,789.8 740.4,792 744.4,794 747.9,795.8 751,797.4 753.9,798.9 756.6,800.2 759.1,801.5 761.4,802.7 763.7,803.8 765.9,804.9 768,805.9 770,807 772.1,808 774.1,809 776.2,810.1 778.2,811.1 780.4,812.2 782.6,813.3 784.9,814.5 787.3,815.7 789.9,817 792.6,818.4 795.7,819.9 799,821.6 802.7,823.5 806.9,825.6 811.8,828 817.5,830.9 824.5,834.5 832.1,838.7 838.1,843.6 842.5,849 845.3,854.6 846.7,860.5 846.7,866.5 845.3,872.4 842.7,878.2 838.8,883.7 833.7,888.8Z M821.6,881.4 825.5,877.2 828.4,872.7 830,867.8 830.4,862.9 829.3,857.8 826.7,852.9 822,848.1 814.6,843.5 807.5,839.9 802,837 797.6,834.7 793.8,832.8 790.7,831.2 787.9,829.8 785.5,828.6 783.3,827.5 781.4,826.5 779.5,825.6 777.9,824.7 776.3,823.9 774.8,823.1 773.3,822.4 771.9,821.7 770.6,821 769.2,820.3 767.9,819.6 766.5,818.9 765.2,818.2 763.8,817.5 762.4,816.8 760.9,816.1 759.3,815.3 757.7,814.4 755.9,813.5 754,812.6 751.9,811.5 749.6,810.3 747,809 744,807.5 740.5,805.7 736.3,803.5 731.2,800.9 724.6,797.6 703.5,778.1 695.2,778.2 688.1,780 682.3,783.2 678.1,787.5 676.5,793.1 694.5,807.6 699.4,813.6 703.2,818.2 706.1,821.8 708.6,824.8 710.7,827.4 712.5,829.5 714,831.5 715.4,833.2 716.7,834.7 717.9,836.1 718.9,837.5 719.9,838.7 720.9,839.9 721.8,841 722.7,842.1 723.6,843.1 724.4,844.2 725.3,845.2 726.1,846.2 726.9,847.2 727.8,848.3 728.7,849.4 729.6,850.5 730.6,851.7 731.6,852.9 732.7,854.3 733.9,855.7 735.1,857.3 736.6,859 738.1,860.9 740,863.2 742.1,865.7 744.6,868.8 747.7,872 751.5,875.9 756.2,880.9 762.1,885.7 768.8,889.5 775.9,891.8 783.2,892.9 790.6,893.1 797.8,892.2 804.7,890.6 811.1,888.2 816.7,885.1Z" fill="#434343" stroke="#434343" stroke-width="0.8" fill-rule="evenodd"/>
<path d="M827.6,892 820.6,896 812.8,899.2 804.5,901.6 795.8,903.1 786.9,903.6 778,903.2 769.3,901.8 761,899.3 753.4,895.7 746.7,891 741,885 736.6,879.5 732.9,874.9 729.9,871.1 727.2,867.9 724.9,865 722.9,862.5 721,860.2 719.3,858.1 717.8,856.1 716.3,854.3 714.9,852.6 713.6,851 712.3,849.4 711.1,847.8 709.8,846.3 708.6,844.8 707.4,843.3 706.2,841.8 705,840.3 703.7,838.7 702.4,837.1 701,835.4 699.6,833.6 698,831.7 696.4,829.6 694.6,827.4 692.6,824.9 690.4,822.2 687.8,819 684.9,815.4 681.4,811.1 670.6,803.5 663.8,795.9 663.2,789.9 665.3,784.6 669.3,780.1 674.6,776.3 681.2,773.4 688.6,771.6 696.8,771.1 705.6,772.3 715.9,777.7 724.2,782.7 730.5,785.8 735.8,788.5 740.3,790.8 744.3,792.8 747.8,794.5 750.9,796.1 753.8,797.6 756.5,798.9 759,800.2 761.3,801.4 763.6,802.5 765.8,803.6 767.9,804.7 769.9,805.7 772,806.8 774,807.8 776.1,808.8 778.1,809.9 780.3,810.9 782.5,812.1 784.8,813.2 787.2,814.4 789.8,815.7 792.5,817.1 795.6,818.6 798.9,820.3 802.6,822.2 806.8,824.3 811.7,826.8 817.4,829.7 824.4,833.2 832.1,837.5 838,842.3 842.4,847.7 845.3,853.4 846.7,859.2 846.7,865.2 845.3,871.1 842.6,876.9 838.7,882.4 833.6,887.5Z M821.5,880.1 825.4,875.9 828.3,871.4 829.9,866.6 830.3,861.6 829.2,856.5 826.6,851.6 821.9,846.8 815,842.3 808.4,838.7 803.1,835.8 798.8,833.5 795,831.5 791.7,829.9 788.9,828.4 786.4,827.1 784.2,826 782.2,825 780.3,824 778.6,823.1 776.9,822.3 775.4,821.5 773.9,820.8 772.4,820 771,819.3 769.7,818.6 768.3,817.9 766.9,817.2 765.5,816.5 764.1,815.8 762.6,815 761.1,814.3 759.5,813.4 757.8,812.6 756,811.7 754,810.7 751.9,809.6 749.5,808.4 746.8,807 743.7,805.4 740.1,803.6 735.8,801.4 730.5,798.7 723.8,795.3 703.4,776.9 695.1,776.9 687.9,778.8 682.1,781.9 678,786.3 676.4,791.8 694.4,806.4 699.3,812.3 703,816.9 706,820.6 708.5,823.6 710.6,826.1 712.3,828.3 713.9,830.2 715.3,831.9 716.6,833.5 717.7,834.9 718.8,836.2 719.8,837.4 720.8,838.6 721.7,839.7 722.6,840.8 723.4,841.8 724.3,842.9 725.1,843.9 726,844.9 726.8,846 727.7,847 728.6,848.1 729.5,849.2 730.5,850.4 731.5,851.7 732.6,853 733.7,854.4 735,856 736.4,857.7 738,859.6 739.8,861.9 741.9,864.4 744.5,867.5 747.6,870.7 751.3,874.6 756.1,879.5 762,884.4 768.6,888.2 775.8,890.5 783.1,891.6 790.5,891.8 797.7,890.9 804.6,889.3 811,886.9 816.6,883.8Z" fill="#484848" stroke="#484848" stroke-width="0.8" fill-rule="evenodd"/>
<path d="M827.5,890.7 820.5,894.7 812.7,897.9 804.4,900.3 795.7,901.8 786.8,902.3 777.9,901.9 769.2,900.5 760.9,898 753.3,894.4 746.5,889.7 740.9,883.7 736.4,878.2 732.8,873.7 729.7,869.8 727.1,866.6 724.8,863.7 722.7,861.2 720.9,858.9 719.2,856.8 717.6,854.9 716.1,853 714.8,851.3 713.4,849.7 712.2,848.1 710.9,846.6 709.7,845 708.5,843.5 707.3,842 706.1,840.5 704.8,839 703.6,837.4 702.2,835.8 700.9,834.1 699.4,832.3 697.9,830.4 696.2,828.4 694.4,826.1 692.4,823.7 690.2,820.9 687.7,817.8 684.7,814.1 681.3,809.8 670.5,802.3 663.6,794.7 663.1,788.7 665.2,783.4 669.1,778.8 674.5,775 681,772.1 688.5,770.3 696.6,769.8 705.4,771.1 715.7,776.5 724,781.4 730.4,784.6 735.6,787.3 740.2,789.5 744.1,791.5 747.6,793.3 750.8,794.9 753.7,796.3 756.4,797.7 758.9,798.9 761.2,800.1 763.5,801.3 765.6,802.4 767.8,803.4 769.8,804.5 771.9,805.5 773.9,806.5 776,807.6 778,808.6 780.2,809.7 782.4,810.8 784.7,811.9 787.1,813.2 789.7,814.5 792.4,815.9 795.5,817.4 798.8,819.1 802.5,820.9 806.7,823.1 811.6,825.5 817.4,828.4 824.3,831.9 832,836.2 838,841.1 842.3,846.4 845.2,852.1 846.6,858 846.6,863.9 845.2,869.9 842.5,875.6 838.6,881.1 833.6,886.2Z M821.4,878.8 825.3,874.6 828.2,870.1 829.9,865.3 830.2,860.3 829.2,855.3 826.5,850.3 821.8,845.5 815.4,841.1 809.2,837.5 804.2,834.6 800.1,832.2 796.2,830.2 792.8,828.5 789.9,827 787.3,825.7 785,824.5 783,823.5 781,822.5 779.2,821.6 777.6,820.7 776,819.9 774.4,819.2 773,818.4 771.5,817.7 770.1,816.9 768.7,816.2 767.3,815.5 765.8,814.8 764.4,814 762.8,813.3 761.3,812.5 759.6,811.6 757.9,810.7 756,809.8 754,808.8 751.8,807.6 749.3,806.4 746.6,805 743.4,803.4 739.7,801.5 735.3,799.2 729.8,796.5 722.9,792.9 703.2,775.6 694.9,775.7 687.8,777.5 682,780.7 677.8,785 676.2,790.6 694.3,805.1 699.1,811.1 702.9,815.7 705.9,819.3 708.3,822.3 710.4,824.8 712.2,827 713.8,828.9 715.2,830.6 716.4,832.2 717.6,833.6 718.7,834.9 719.7,836.1 720.6,837.3 721.6,838.4 722.4,839.5 723.3,840.6 724.2,841.6 725,842.6 725.8,843.7 726.7,844.7 727.6,845.7 728.4,846.8 729.4,848 730.3,849.1 731.3,850.4 732.4,851.7 733.6,853.1 734.9,854.7 736.3,856.4 737.9,858.4 739.7,860.6 741.8,863.2 744.3,866.2 747.4,869.4 751.2,873.3 756,878.3 761.8,883.2 768.5,886.9 775.7,889.2 783,890.3 790.4,890.5 797.6,889.7 804.5,888 810.9,885.6 816.6,882.5Z" fill="#4d4d4d" stroke="#4d4d4d" stroke-width="0.8" fill-rule="evenodd"/>
<path d="M827.4,889.4 820.4,893.4 812.7,896.6 804.3,899 795.6,900.5 786.7,901.1 777.8,900.6 769.1,899.2 760.8,896.7 753.2,893.1 746.4,888.4 740.8,882.4 736.3,876.9 732.7,872.4 729.6,868.6 726.9,865.3 724.6,862.4 722.6,859.9 720.7,857.6 719,855.5 717.5,853.6 716,851.8 714.6,850 713.3,848.4 712,846.8 710.8,845.3 709.5,843.8 708.3,842.3 707.1,840.8 705.9,839.3 704.7,837.7 703.4,836.2 702.1,834.5 700.7,832.8 699.3,831.1 697.7,829.2 696.1,827.1 694.3,824.9 692.3,822.4 690.1,819.6 687.5,816.5 684.6,812.9 681.1,808.6 670.3,801 663.5,793.4 662.9,787.4 665,782.1 668.9,777.6 674.3,773.8 680.9,770.9 688.3,769.1 696.5,768.6 705.3,769.8 715.6,775.2 723.9,780.2 730.2,783.3 735.5,786 740.1,788.3 744,790.3 747.5,792 750.7,793.6 753.6,795.1 756.3,796.4 758.8,797.7 761.1,798.9 763.4,800 765.5,801.1 767.6,802.2 769.7,803.2 771.8,804.2 773.8,805.3 775.8,806.3 777.9,807.3 780.1,808.4 782.3,809.5 784.6,810.7 787,811.9 789.6,813.2 792.4,814.6 795.4,816.1 798.7,817.8 802.4,819.7 806.6,821.8 811.5,824.2 817.3,827.1 824.2,830.6 831.9,834.9 837.9,839.8 842.3,845.1 845.1,850.8 846.5,856.7 846.5,862.6 845.1,868.6 842.5,874.3 838.5,879.8 833.5,884.9Z M821.3,877.5 825.3,873.3 828.1,868.8 829.8,864 830.1,859 829.1,854 826.4,849 821.7,844.2 815.8,839.9 809.9,836.3 805.2,833.4 801.2,830.9 797.3,828.9 793.9,827.1 790.9,825.6 788.3,824.3 785.9,823.1 783.8,822 781.8,821 779.9,820 778.2,819.2 776.6,818.3 775,817.5 773.5,816.8 772,816 770.5,815.3 769.1,814.5 767.6,813.8 766.1,813 764.6,812.3 763.1,811.5 761.5,810.7 759.8,809.8 758,808.9 756.1,807.9 754,806.9 751.7,805.7 749.2,804.4 746.4,803 743.1,801.3 739.3,799.4 734.7,797.1 729.1,794.2 722,790.6 703.1,774.4 694.8,774.4 687.6,776.3 681.8,779.4 677.7,783.8 676.1,789.3 694.1,803.9 699,809.8 702.8,814.4 705.7,818 708.2,821 710.3,823.6 712.1,825.7 713.6,827.7 715,829.4 716.3,830.9 717.5,832.3 718.5,833.6 719.5,834.9 720.5,836 721.4,837.2 722.3,838.2 723.2,839.3 724,840.3 724.9,841.4 725.7,842.4 726.6,843.4 727.4,844.5 728.3,845.6 729.2,846.7 730.2,847.9 731.2,849.1 732.3,850.4 733.5,851.8 734.8,853.4 736.2,855.1 737.8,857.1 739.6,859.3 741.7,861.9 744.2,864.9 747.3,868.1 751.1,872 755.8,877 761.7,881.9 768.4,885.6 775.5,887.9 782.9,889 790.3,889.2 797.5,888.4 804.4,886.7 810.8,884.3 816.5,881.2Z" fill="#525252" stroke="#525252" stroke-width="0.8" fill-rule="evenodd"/>
<path d="M827.3,888.1 820.3,892.1 812.6,895.3 804.2,897.7 795.5,899.2 786.6,899.8 777.7,899.3 769,897.9 760.7,895.4 753,891.8 746.3,887.1 740.7,881.1 736.2,875.6 732.5,871.1 729.4,867.3 726.8,864 724.5,861.2 722.5,858.6 720.6,856.3 718.9,854.2 717.3,852.3 715.9,850.5 714.5,848.8 713.2,847.1 711.9,845.5 710.6,844 709.4,842.5 708.2,841 707,839.5 705.8,838 704.5,836.5 703.3,834.9 702,833.3 700.6,831.6 699.1,829.8 697.6,827.9 695.9,825.8 694.1,823.6 692.1,821.1 689.9,818.4 687.4,815.2 684.4,811.6 681,807.3 670.1,799.8 663.3,792.2 662.8,786.2 664.8,780.9 668.8,776.3 674.2,772.5 680.7,769.7 688.2,767.8 696.3,767.3 705.2,768.6 715.5,774 723.8,778.9 730.1,782.1 735.4,784.7 739.9,787 743.9,789 747.4,790.8 750.6,792.4 753.5,793.8 756.1,795.2 758.6,796.4 761,797.6 763.3,798.7 765.4,799.8 767.5,800.9 769.6,801.9 771.6,803 773.7,804 775.7,805 777.8,806.1 780,807.2 782.2,808.3 784.5,809.4 786.9,810.6 789.5,811.9 792.3,813.3 795.3,814.8 798.6,816.5 802.3,818.4 806.5,820.5 811.4,823 817.2,825.9 824.1,829.4 831.8,833.6 837.8,838.5 842.2,843.8 845,849.5 846.4,855.4 846.4,861.4 845.1,867.3 842.4,873 838.5,878.5 833.4,883.6Z M821.3,876.2 825.2,872.1 828,867.5 829.7,862.7 830.1,857.7 829,852.7 826.3,847.7 821.7,843 816.1,838.7 810.6,835.1 806.1,832.1 802.2,829.7 798.5,827.5 795,825.7 791.9,824.2 789.2,822.8 786.8,821.6 784.6,820.5 782.5,819.4 780.6,818.5 778.9,817.6 777.2,816.7 775.6,815.9 774,815.1 772.5,814.3 771,813.6 769.5,812.8 768,812.1 766.5,811.3 764.9,810.5 763.3,809.7 761.7,808.9 759.9,808 758.1,807 756.1,806 754,805 751.7,803.8 749.1,802.5 746.1,801 742.8,799.3 738.9,797.3 734.2,794.9 728.5,792 721.2,788.3 703,773.1 694.6,773.2 687.5,775 681.7,778.2 677.5,782.5 675.9,788.1 694,802.6 698.9,808.6 702.6,813.1 705.6,816.8 708.1,819.8 710.1,822.3 711.9,824.5 713.5,826.4 714.9,828.1 716.2,829.6 717.3,831.1 718.4,832.4 719.4,833.6 720.4,834.8 721.3,835.9 722.2,837 723,838 723.9,839 724.7,840.1 725.6,841.1 726.4,842.1 727.3,843.2 728.2,844.3 729.1,845.4 730.1,846.6 731.1,847.8 732.2,849.1 733.3,850.6 734.6,852.1 736,853.9 737.6,855.8 739.5,858 741.6,860.6 744.1,863.6 747.2,866.8 751,870.7 755.7,875.7 761.6,880.6 768.3,884.3 775.4,886.6 782.8,887.7 790.2,887.9 797.4,887.1 804.3,885.4 810.7,883 816.4,879.9Z" fill="#585858" stroke="#585858" stroke-width="0.8" fill-rule="evenodd"/>
<path d="M827.2,886.9 820.2,890.8 812.5,894 804.1,896.4 795.4,897.9 786.5,898.4 777.6,898 768.8,896.6 760.5,894.1 752.9,890.5 746.1,885.8 740.5,879.8 736,874.3 732.4,869.8 729.3,866 726.7,862.7 724.4,859.9 722.3,857.3 720.5,855 718.8,852.9 717.2,851 715.7,849.2 714.3,847.5 713,845.8 711.7,844.3 710.5,842.7 709.3,841.2 708.1,839.7 706.8,838.2 705.6,836.7 704.4,835.2 703.1,833.6 701.8,832 700.4,830.3 699,828.5 697.5,826.6 695.8,824.6 694,822.3 692,819.9 689.8,817.1 687.2,814 684.3,810.3 680.8,806 670,798.5 663.2,790.9 662.6,784.9 664.7,779.6 668.6,775.1 674,771.3 680.6,768.4 688,766.6 696.2,766.1 705,767.3 715.3,772.7 723.7,777.7 730,780.8 735.3,783.5 739.8,785.8 743.8,787.8 747.3,789.5 750.5,791.1 753.4,792.6 756,793.9 758.5,795.2 760.9,796.4 763.1,797.5 765.3,798.6 767.4,799.6 769.5,800.7 771.5,801.7 773.6,802.7 775.6,803.8 777.7,804.8 779.9,805.9 782.1,807 784.4,808.2 786.8,809.4 789.4,810.7 792.2,812.1 795.2,813.6 798.5,815.3 802.2,817.1 806.5,819.2 811.3,821.7 817.1,824.6 824.1,828.1 831.7,832.4 837.7,837.2 842.1,842.6 845,848.2 846.4,854.1 846.4,860.1 845,866 842.3,871.8 838.4,877.2 833.3,882.3Z M821.2,874.9 825.1,870.8 827.9,866.2 829.6,861.4 830,856.4 828.9,851.4 826.2,846.5 821.6,841.7 816.4,837.5 811.2,833.9 806.9,830.9 803.2,828.4 799.7,826.2 796.1,824.4 792.9,822.8 790.1,821.4 787.6,820.1 785.4,818.9 783.3,817.9 781.3,816.9 779.5,816 777.8,815.1 776.1,814.3 774.5,813.5 773,812.7 771.4,811.9 769.9,811.1 768.3,810.3 766.8,809.5 765.2,808.7 763.6,807.9 761.9,807.1 760.1,806.1 758.2,805.2 756.2,804.2 754,803.1 751.6,801.9 748.9,800.5 745.9,799 742.5,797.3 738.5,795.2 733.7,792.8 727.8,789.8 720.3,786 702.8,771.9 694.5,771.9 687.4,773.8 681.5,776.9 677.4,781.3 675.8,786.8 693.8,801.3 698.7,807.3 702.5,811.9 705.5,815.5 707.9,818.5 710,821 711.8,823.2 713.4,825.1 714.8,826.8 716,828.4 717.2,829.8 718.3,831.1 719.3,832.3 720.2,833.5 721.2,834.6 722,835.7 722.9,836.7 723.8,837.8 724.6,838.8 725.4,839.8 726.3,840.9 727.2,841.9 728,843 729,844.1 729.9,845.3 730.9,846.5 732,847.9 733.2,849.3 734.5,850.8 735.9,852.6 737.5,854.5 739.3,856.7 741.4,859.3 744,862.3 747.1,865.5 750.8,869.5 755.6,874.4 761.5,879.3 768.2,883 775.3,885.3 782.7,886.4 790.1,886.6 797.3,885.8 804.2,884.1 810.6,881.7 816.3,878.6Z" fill="#5f5f5f" stroke="#5f5f5f" stroke-width="0.8" fill-rule="evenodd"/>
<path d="M827.1,885.5 820.1,889.4 812.3,892.6 804,895 795.3,896.5 786.3,897.1 777.4,896.7 768.7,895.2 760.4,892.7 752.8,889.1 746,884.4 740.4,878.5 735.9,872.9 732.3,868.4 729.2,864.6 726.6,861.4 724.3,858.5 722.2,856 720.4,853.7 718.7,851.6 717.1,849.7 715.6,847.9 714.2,846.2 712.9,844.5 711.6,842.9 710.4,841.4 709.2,839.9 708,838.4 706.8,836.9 705.5,835.4 704.3,833.9 703,832.3 701.7,830.7 700.4,829 698.9,827.2 697.4,825.3 695.7,823.3 693.9,821.1 691.9,818.6 689.7,815.8 687.2,812.7 684.2,809.1 680.7,804.8 670.1,797.3 663.1,789.7 662.5,783.7 664.6,778.4 668.5,773.8 673.9,770.1 680.5,767.2 687.9,765.4 696.1,764.9 704.9,766.1 715.3,771.7 723.5,776.4 729.9,779.6 735.2,782.2 739.7,784.5 743.7,786.5 747.2,788.3 750.3,789.9 753.2,791.3 755.9,792.7 758.4,793.9 760.8,795.1 763,796.2 765.2,797.3 767.3,798.4 769.4,799.4 771.4,800.4 773.5,801.5 775.5,802.5 777.6,803.5 779.8,804.6 782,805.7 784.3,806.9 786.7,808.1 789.3,809.4 792.1,810.8 795.1,812.3 798.4,814 802.1,815.9 806.4,818 811.2,820.4 817,823.3 824,826.8 831.5,831.1 837.6,835.9 841.9,841.3 844.8,846.9 846.2,852.8 846.2,858.8 844.8,864.7 842.2,870.4 838.3,875.9 833.2,881Z M821.1,873.7 825.1,869.5 827.9,865 829.6,860.1 830,855.2 828.9,850.2 826.3,845.2 821.6,840.4 816.7,836.2 811.8,832.7 807.7,829.7 804.2,827.1 800.9,824.9 797.1,823 793.9,821.3 791,819.9 788.5,818.6 786.2,817.4 784,816.4 782,815.4 780.2,814.4 778.4,813.5 776.7,812.7 775,811.8 773.4,811 771.8,810.2 770.3,809.4 768.7,808.6 767.1,807.8 765.5,807 763.8,806.1 762,805.2 760.2,804.3 758.3,803.3 756.2,802.3 754,801.2 751.5,799.9 748.8,798.6 745.7,797 742.2,795.2 738.1,793.1 733.2,790.7 727.1,787.6 719.5,783.7 702.7,770.6 694.4,770.7 687.2,772.5 681.4,775.7 677.2,780 675.6,785.5 693.6,800 698.5,806 702.2,810.6 705.2,814.2 707.7,817.2 709.8,819.7 711.6,821.9 713.1,823.8 714.5,825.5 715.8,827.1 717,828.5 718.1,829.8 719.1,831.1 720,832.2 721,833.3 721.8,834.4 722.7,835.5 723.6,836.5 724.4,837.5 725.2,838.6 726.1,839.6 727,840.7 727.9,841.7 728.8,842.9 729.8,844 730.8,845.3 731.9,846.6 733,848 734.3,849.6 735.8,851.3 737.3,853.3 739.2,855.5 741.3,858.1 743.8,861.1 746.9,864.3 750.7,868.3 755.5,873.2 761.4,878.1 768.1,881.8 775.2,884.1 782.6,885.2 790,885.3 797.3,884.5 804.2,882.9 810.5,880.4 816.2,877.3Z" fill="#6b6b6b" stroke="#6b6b6b" stroke-width="0.8" fill-rule="evenodd"/>
<path d="M826.9,884.1 819.9,888 812.1,891.2 803.8,893.6 795.1,895.1 786.2,895.7 777.2,895.2 768.5,893.8 760.3,891.3 752.6,887.7 745.9,882.9 740.3,876.9 735.8,871.4 732.2,866.9 729.1,863.2 726.5,859.9 724.2,857.1 722.2,854.6 720.3,852.3 718.6,850.2 717.1,848.3 715.6,846.5 714.2,844.8 712.9,843.2 711.6,841.6 710.4,840.1 709.2,838.6 708,837.1 706.8,835.6 705.6,834.1 704.3,832.6 703.1,831 701.7,829.4 700.4,827.7 698.9,825.9 697.4,824 695.8,822 694,819.8 692,817.3 689.8,814.6 687.2,811.5 684.3,807.9 680.8,803.6 670.7,796.3 663.2,788.5 662.5,782.5 664.6,777.2 668.5,772.7 673.9,768.9 680.4,766 687.9,764.2 696.1,763.7 704.9,765 715.5,770.9 723.4,775.1 729.7,778.3 735,781 739.6,783.3 743.5,785.2 747.1,787 750.2,788.6 753.1,790 755.8,791.4 758.3,792.6 760.7,793.8 762.9,795 765.1,796 767.2,797.1 769.3,798.1 771.3,799.2 773.4,800.2 775.4,801.2 777.5,802.3 779.7,803.4 781.9,804.5 784.2,805.6 786.6,806.8 789.2,808.1 792,809.5 795,811 798.3,812.7 802,814.6 806.3,816.7 811.2,819.1 816.9,822 823.9,825.5 831.2,829.8 837.2,834.6 841.6,839.9 844.5,845.6 846,851.5 846,857.4 844.6,863.3 841.9,869.1 838,874.5 833,879.6Z M821.2,872.5 825.1,868.3 828,863.7 829.7,858.9 830.1,854 829,848.9 826.4,844 821.8,839.2 817.2,835 812.5,831.5 808.5,828.4 805.1,825.8 802.1,823.5 798.2,821.6 794.9,819.9 792,818.5 789.3,817.1 787,815.9 784.8,814.8 782.7,813.8 780.8,812.8 779,811.9 777.3,811 775.6,810.2 773.9,809.3 772.3,808.5 770.7,807.7 769.1,806.9 767.4,806.1 765.7,805.2 764,804.3 762.2,803.4 760.4,802.5 758.4,801.5 756.3,800.4 754,799.3 751.4,798 748.7,796.6 745.5,795 741.9,793.2 737.7,791.1 732.6,788.5 726.5,785.4 718.6,781.4 702.5,769.4 694.2,769.4 687.1,771.2 681.2,774.4 677.1,778.7 675.4,784.3 693.1,798.6 698,804.6 701.8,809.2 704.8,812.9 707.3,815.9 709.4,818.4 711.2,820.6 712.8,822.5 714.2,824.3 715.5,825.8 716.7,827.2 717.7,828.6 718.8,829.8 719.7,831 720.7,832.1 721.6,833.2 722.4,834.2 723.3,835.3 724.1,836.3 725,837.3 725.8,838.4 726.7,839.5 727.6,840.5 728.5,841.7 729.5,842.9 730.5,844.1 731.6,845.4 732.8,846.9 734.1,848.5 735.5,850.2 737.2,852.1 739,854.4 741.1,857 743.7,860 746.8,863.2 750.6,867.2 755.4,872.2 761.3,877 768,880.6 775.2,882.9 782.6,884 790,884.1 797.3,883.3 804.2,881.7 810.6,879.2 816.3,876.1Z" fill="#787878" stroke="#787878" stroke-width="0.8" fill-rule="evenodd"/>
<path d="M826.6,882.7 819.6,886.6 811.9,889.8 803.6,892.1 794.9,893.6 785.9,894.1 777,893.7 768.3,892.2 760.1,889.7 752.5,886 745.7,881.2 740.2,875.3 735.8,869.8 732.1,865.4 729.1,861.6 726.5,858.4 724.2,855.6 722.2,853.1 720.3,850.8 718.7,848.7 717.1,846.8 715.6,845 714.3,843.4 713,841.7 711.7,840.2 710.5,838.7 709.3,837.2 708.1,835.7 706.9,834.2 705.7,832.7 704.4,831.2 703.2,829.7 701.9,828.1 700.5,826.4 699.1,824.6 697.6,822.8 695.9,820.7 694.1,818.5 692.2,816.1 689.9,813.4 687.4,810.3 684.5,806.7 681.1,802.4 672.3,795.7 663.4,787.4 662.6,781.4 664.6,776.1 668.5,771.5 673.9,767.8 680.4,764.9 687.9,763.1 696.1,762.7 705,764 715.5,770 723.3,773.9 729.6,777.1 734.9,779.7 739.5,782 743.4,784 746.9,785.7 750.1,787.3 753,788.8 755.7,790.1 758.2,791.4 760.6,792.6 762.8,793.7 765,794.8 767.1,795.8 769.2,796.9 771.2,797.9 773.3,798.9 775.3,800 777.4,801 779.6,802.1 781.8,803.2 784.1,804.3 786.5,805.6 789.1,806.9 791.9,808.3 794.9,809.8 798.2,811.4 801.9,813.3 806.2,815.4 811.1,817.9 816.8,820.8 823.8,824.3 830.6,828.4 836.7,833.3 841.2,838.6 844.1,844.2 845.6,850.1 845.6,856 844.3,861.9 841.6,867.7 837.7,873.1 832.7,878.2Z M821.3,871.3 825.3,867.1 828.2,862.6 829.9,857.7 830.3,852.8 829.3,847.7 826.7,842.8 822.3,838 817.8,833.8 813.2,830.3 809.4,827.2 806,824.6 803.1,822.2 799.3,820.2 795.9,818.5 792.9,817 790.2,815.6 787.8,814.4 785.5,813.3 783.4,812.2 781.5,811.2 779.6,810.3 777.8,809.4 776.1,808.5 774.4,807.7 772.7,806.8 771.1,806 769.4,805.2 767.7,804.3 766,803.5 764.3,802.6 762.4,801.6 760.5,800.7 758.5,799.7 756.3,798.6 754,797.4 751.4,796.1 748.5,794.6 745.3,793 741.6,791.1 737.3,789 732.1,786.4 725.8,783.2 717.8,779.2 702.4,768.1 694,768.1 686.9,770 681,773.1 676.9,777.5 675.3,783 692.5,797.1 697.4,803.1 701.3,807.8 704.3,811.5 706.8,814.5 708.9,817.1 710.7,819.3 712.3,821.2 713.8,823 715,824.5 716.2,826 717.3,827.3 718.4,828.6 719.3,829.7 720.3,830.9 721.2,832 722,833 722.9,834.1 723.8,835.1 724.6,836.2 725.5,837.2 726.4,838.3 727.3,839.4 728.2,840.5 729.2,841.7 730.2,843 731.3,844.3 732.5,845.8 733.8,847.4 735.3,849.1 736.9,851.1 738.8,853.3 740.9,856 743.5,859 746.6,862.3 750.5,866.3 755.3,871.3 761.3,876.1 768,879.6 775.2,881.9 782.6,883 790,883 797.3,882.2 804.2,880.5 810.6,878.1 816.4,875Z" fill="#777777" stroke="#777777" stroke-width="0.8" fill-rule="evenodd"/>
<path d="M826.2,881.2 819.3,885 811.5,888.2 803.2,890.6 794.6,892 785.7,892.5 776.8,892.1 768.1,890.5 759.9,888 752.3,884.3 745.6,879.4 740.1,873.5 735.7,868.1 732.1,863.6 729.1,859.9 726.5,856.7 724.3,854 722.2,851.5 720.4,849.2 718.8,847.2 717.2,845.3 715.8,843.5 714.4,841.9 713.1,840.2 711.9,838.7 710.6,837.2 709.4,835.7 708.2,834.3 707.1,832.8 705.9,831.3 704.7,829.8 703.4,828.3 702.1,826.7 700.8,825.1 699.4,823.3 697.8,821.5 696.2,819.5 694.4,817.3 692.5,814.9 690.3,812.2 687.8,809.1 684.9,805.5 681.5,801.3 677.3,796.2 663.8,786.4 662.8,780.3 664.8,775 668.6,770.4 674,766.7 680.5,763.9 687.9,762.1 696.2,761.7 705.1,763.2 715.4,768.7 723.1,772.6 729.5,775.8 734.8,778.5 739.3,780.7 743.3,782.7 746.8,784.5 750,786.1 752.9,787.5 755.6,788.9 758.1,790.1 760.4,791.3 762.7,792.4 764.9,793.5 767,794.6 769.1,795.6 771.1,796.6 773.2,797.7 775.2,798.7 777.3,799.7 779.4,800.8 781.7,801.9 784,803.1 786.4,804.3 789,805.6 791.8,807 794.8,808.5 798.1,810.2 801.9,812 806.1,814.1 811,816.6 816.7,819.5 823.7,823 829.8,827.1 836,831.9 840.6,837.2 843.6,842.8 845.1,848.7 845.1,854.6 843.8,860.5 841.2,866.2 837.3,871.6 832.3,876.6Z M821.5,870.2 825.5,866 828.4,861.4 830.2,856.6 830.7,851.6 829.7,846.6 827.2,841.6 822.9,836.8 818.5,832.7 814,829.1 810.2,826 806.9,823.3 804,820.9 800.4,818.9 796.9,817.1 793.8,815.5 791.1,814.2 788.6,812.9 786.3,811.7 784.1,810.7 782.1,809.7 780.2,808.7 778.4,807.8 776.6,806.9 774.9,806 773.2,805.1 771.5,804.3 769.8,803.4 768.1,802.6 766.3,801.7 764.5,800.8 762.6,799.8 760.7,798.9 758.6,797.8 756.4,796.7 753.9,795.5 751.3,794.1 748.4,792.7 745.1,791 741.3,789.1 736.9,786.9 731.6,784.2 725.1,781 717.7,778 702.2,766.8 693.9,766.9 686.7,768.7 680.9,771.9 676.7,776.2 675.1,781.7 691.6,795.5 696.6,801.6 700.5,806.3 703.6,810 706.1,813.1 708.2,815.7 710.1,817.9 711.7,819.9 713.2,821.7 714.5,823.3 715.7,824.7 716.8,826.1 717.8,827.3 718.8,828.5 719.7,829.7 720.7,830.8 721.5,831.9 722.4,832.9 723.3,834 724.2,835 725,836.1 725.9,837.2 726.9,838.3 727.8,839.5 728.8,840.7 729.8,841.9 731,843.3 732.2,844.8 733.5,846.4 735,848.2 736.6,850.2 738.5,852.4 740.7,855.1 743.3,858.1 746.5,861.5 750.4,865.5 755.3,870.7 761.3,875.3 768.1,878.8 775.3,880.9 782.7,882 790.1,882 797.4,881.2 804.4,879.5 810.8,877 816.6,873.9Z" fill="#747474" stroke="#747474" stroke-width="0.8" fill-rule="evenodd"/>
<path d="M825.7,879.6 818.8,883.4 811.1,886.5 802.8,888.9 794.2,890.3 785.3,890.8 776.4,890.3 767.8,888.7 759.6,886.1 752.1,882.3 745.5,877.3 740,871.4 735.7,866.1 732.1,861.7 729.2,858.1 726.6,855 724.4,852.2 722.4,849.8 720.6,847.6 719,845.5 717.4,843.7 716,841.9 714.7,840.3 713.4,838.7 712.1,837.2 710.9,835.7 709.8,834.2 708.6,832.8 707.4,831.3 706.2,829.9 705,828.4 703.8,826.9 702.5,825.3 701.2,823.7 699.8,822 698.3,820.1 696.7,818.2 694.9,816 693,813.6 690.8,811 688.4,808 685.5,804.4 682.2,800.3 678.1,795.3 664.4,785.5 663.2,779.3 665.1,774 668.9,769.4 674.2,765.7 680.7,762.9 688.1,761.2 696.3,760.8 705.3,762.5 715.2,767.5 723,771.4 729.4,774.5 734.7,777.2 739.2,779.5 743.2,781.5 746.7,783.2 749.9,784.8 752.8,786.3 755.5,787.6 758,788.8 760.3,790 762.6,791.2 764.8,792.2 766.9,793.3 769,794.3 771,795.4 773.1,796.4 775.1,797.4 777.2,798.5 779.3,799.5 781.6,800.6 783.9,801.8 786.3,803 788.9,804.3 791.7,805.7 794.7,807.2 798,808.9 801.8,810.8 806,812.9 810.9,815.3 816.7,818.2 823.6,821.7 828.6,825.7 835.1,830.5 839.7,835.8 842.8,841.4 844.3,847.2 844.5,853.1 843.2,858.9 840.6,864.6 836.8,870.1 831.8,875.1Z M821.9,869.2 825.9,865 828.9,860.4 830.7,855.5 831.2,850.5 830.3,845.5 828,840.5 823.8,835.7 819.4,831.5 815,827.9 811.2,824.7 807.9,822 804.9,819.6 801.5,817.5 797.9,815.7 794.8,814.1 791.9,812.7 789.4,811.4 787,810.2 784.8,809.1 782.8,808.1 780.8,807.1 778.9,806.1 777.1,805.2 775.4,804.3 773.6,803.5 771.9,802.6 770.1,801.7 768.4,800.8 766.6,799.9 764.7,799 762.8,798 760.8,797 758.7,796 756.4,794.8 753.9,793.6 751.2,792.2 748.2,790.7 744.9,789 741,787.1 736.5,784.8 731.1,782.1 724.4,778.7 717.6,776.7 702.1,765.5 693.7,765.6 686.6,767.4 680.7,770.6 676.5,774.9 674.9,780.4 690.4,793.7 695.5,799.9 699.5,804.7 702.6,808.5 705.2,811.6 707.4,814.3 709.2,816.6 710.9,818.6 712.4,820.4 713.7,822 714.9,823.5 716,824.8 717.1,826.1 718.1,827.3 719.1,828.5 720,829.6 720.9,830.7 721.8,831.8 722.7,832.9 723.6,834 724.5,835.1 725.4,836.2 726.3,837.3 727.3,838.5 728.3,839.7 729.4,841 730.5,842.4 731.7,843.9 733.1,845.5 734.6,847.3 736.3,849.4 738.2,851.7 740.4,854.4 743.1,857.5 746.3,860.9 750.3,865 755.3,870.3 761.3,874.7 768.1,878 775.4,880.1 782.8,881.1 790.3,881.1 797.6,880.2 804.6,878.5 811.1,876 816.9,872.9Z" fill="#717171" stroke="#717171" stroke-width="0.8" fill-rule="evenodd"/>
<path d="M825.1,877.8 818.2,881.6 810.5,884.7 802.3,887 793.7,888.4 784.8,888.8 776,888.3 767.4,886.7 759.3,883.9 751.8,880.1 745.3,874.9 740,869.1 735.7,863.9 732.3,859.6 729.3,856 726.8,852.9 724.6,850.2 722.7,847.8 720.9,845.7 719.3,843.7 717.8,841.9 716.4,840.2 715.1,838.5 713.8,837 712.6,835.5 711.4,834.1 710.3,832.6 709.1,831.2 708,829.8 706.8,828.4 705.6,826.9 704.4,825.5 703.2,823.9 701.9,822.3 700.5,820.6 699,818.8 697.5,816.9 695.7,814.8 693.8,812.4 691.7,809.8 689.3,806.9 686.5,803.4 683.2,799.4 679.1,794.4 665.5,784.7 663.9,778.4 665.6,773.1 669.3,768.5 674.5,764.8 681,762 688.4,760.4 696.7,760.1 705.8,762.1 715.2,766.3 722.9,770.2 729.2,773.3 734.6,776 739.1,778.3 743.1,780.2 746.6,782 749.7,783.6 752.6,785 755.3,786.4 757.8,787.6 760.2,788.8 762.4,789.9 764.6,791 766.7,792.1 768.8,793.1 770.8,794.1 772.9,795.2 775,796.2 777,797.2 779.2,798.3 781.4,799.4 783.7,800.6 786.1,801.8 788.7,803.1 791.5,804.4 794.5,806 797.8,807.6 801.6,809.5 805.8,811.6 810.7,814 816.4,816.9 823.4,820.4 827,824.3 833.7,829 838.5,834.3 841.7,839.8 843.3,845.6 843.5,851.5 842.3,857.3 839.8,863 836,868.4 831.1,873.4Z M822.4,868.3 826.5,864 829.5,859.4 831.4,854.6 832,849.6 831.2,844.5 829,839.5 825.1,834.7 820.7,830.4 816.2,826.7 812.3,823.5 808.9,820.7 805.9,818.2 802.6,816.1 798.9,814.3 795.7,812.6 792.8,811.2 790.2,809.9 787.8,808.7 785.5,807.5 783.4,806.5 781.4,805.5 779.5,804.5 777.6,803.6 775.8,802.7 774,801.8 772.3,800.9 770.5,800 768.7,799.1 766.9,798.2 765,797.2 763,796.2 761,795.2 758.8,794.1 756.4,792.9 753.9,791.7 751.2,790.3 748.1,788.8 744.7,787 740.7,785 736.1,782.7 730.6,779.9 723.8,776.5 717.4,775.5 701.9,764.2 693.5,764.3 686.4,766.1 680.5,769.3 676.3,773.6 674.6,779.1 688.8,791.8 694,798.1 698.1,803 701.3,806.9 703.9,810.1 706.2,812.8 708.1,815.1 709.8,817.2 711.3,819 712.6,820.7 713.9,822.2 715.1,823.6 716.1,824.9 717.2,826.2 718.2,827.4 719.1,828.5 720,829.7 721,830.8 721.9,831.9 722.8,833 723.7,834.1 724.6,835.2 725.6,836.4 726.6,837.6 727.6,838.9 728.7,840.2 729.9,841.6 731.2,843.2 732.5,844.8 734.1,846.7 735.8,848.8 737.7,851.2 740,853.9 742.8,857 746.1,860.6 750.2,864.9 755.4,870.3 761.5,874.4 768.3,877.6 775.6,879.5 783.1,880.5 790.6,880.4 798,879.5 805,877.7 811.5,875.2 817.4,872Z" fill="#6e6e6e" stroke="#6e6e6e" stroke-width="0.8" fill-rule="evenodd"/>
<path d="M824,875.8 817.2,879.6 809.6,882.6 801.5,884.8 792.9,886.1 784.1,886.5 775.4,885.8 766.9,884.1 758.9,881.2 751.5,877.1 745.1,871.6 740,866 735.9,861 732.5,856.9 729.7,853.4 727.3,850.5 725.1,847.9 723.2,845.5 721.5,843.4 720,841.5 718.5,839.8 717.2,838.1 715.9,836.5 714.7,835.1 713.5,833.6 712.4,832.2 711.2,830.8 710.1,829.5 709,828.1 707.9,826.7 706.7,825.3 705.6,823.9 704.4,822.4 703.1,820.9 701.8,819.2 700.3,817.5 698.8,815.6 697.1,813.6 695.3,811.3 693.2,808.8 690.9,805.9 688.2,802.6 684.9,798.6 681,793.8 667.7,784.4 665.1,777.8 666.5,772.4 670,767.9 675.2,764.2 681.6,761.5 689,759.9 697.3,759.9 706.8,762.5 715.4,765.7 723.1,769.5 729.3,772.6 734.5,775.3 739,777.5 742.9,779.5 746.4,781.2 749.6,782.8 752.4,784.2 755.1,785.5 757.5,786.7 759.9,787.9 762.1,789 764.2,790.1 766.3,791.1 768.4,792.1 770.4,793.2 772.4,794.2 774.4,795.2 776.5,796.2 778.6,797.3 780.8,798.4 783.1,799.5 785.5,800.7 788,802 790.8,803.3 793.7,804.8 797,806.5 800.7,808.3 804.9,810.4 809.7,812.8 815.4,815.6 822.3,819.1 824.1,822.8 831.4,827.5 836.5,832.6 839.9,838.2 841.7,843.9 842.1,849.7 841,855.5 838.5,861.1 834.8,866.5 830,871.4Z M823.3,867.6 827.5,863.4 830.6,858.7 832.6,853.8 833.4,848.8 832.8,843.7 830.8,838.7 827.2,833.8 822.9,829.4 818,825.6 813.8,822.3 810.1,819.4 806.9,816.9 803.7,814.7 799.9,812.8 796.6,811.2 793.7,809.7 791,808.4 788.5,807.1 786.2,806 784.1,804.9 782,803.9 780.1,802.9 778.2,801.9 776.3,801 774.5,800.1 772.7,799.2 770.9,798.3 769,797.3 767.1,796.4 765.2,795.4 763.2,794.4 761.1,793.4 758.9,792.3 756.5,791.1 753.9,789.8 751.1,788.4 748,786.8 744.4,785 740.4,783 735.7,780.6 730,777.8 723.1,774.3 712.4,767.1 701.7,762.9 693.3,763 686.2,764.8 680.3,768 676.1,772.3 674.4,777.8 688.7,790.5 691.7,795.9 695.9,801 699.2,805.1 701.9,808.4 704.3,811.2 706.3,813.6 708,815.8 709.6,817.7 711,819.4 712.3,821 713.5,822.4 714.6,823.8 715.7,825.1 716.7,826.4 717.7,827.6 718.7,828.8 719.7,829.9 720.6,831.1 721.5,832.2 722.5,833.4 723.5,834.6 724.5,835.8 725.5,837 726.6,838.3 727.7,839.7 729,841.2 730.3,842.8 731.7,844.6 733.3,846.5 735.1,848.7 737.1,851.2 739.5,854.1 742.4,857.2 745.9,860.9 750.1,865.5 755.5,871.3 761.7,874.7 768.6,877.6 776,879.4 783.6,880.2 791.2,880.1 798.6,879.1 805.7,877.2 812.3,874.7 818.2,871.4Z" fill="#6b6b6b" stroke="#6b6b6b" stroke-width="0.8" fill-rule="evenodd"/>
<path d="M713.5,793.6 799.3,837.4 805,819.8 718.7,776.4Z" fill="url(#gateg)"/>
<clipPath id="hw494"><path d="M706.1,783.8 703.4,785.1 700.5,786.2 697.4,786.9 694.2,787.2 691,787.2 688,786.9 685.2,786.2 682.7,785.1 680.5,783.8 678.9,782.3 677.7,780.5 677.1,778.6 677,776.6 677.4,774.6 678.4,772.6 679.9,770.7 681.9,769 684.2,767.5 686.9,766.2 689.8,765.2 692.9,764.5 696,764.2 699.1,764.2 702.1,764.5 704.9,765.2 707.4,766.2 709.5,767.5 711.2,769 712.4,770.7 713.1,772.6 713.2,774.6 712.8,776.6 711.8,778.6 710.4,780.5 708.4,782.3Z"/></clipPath>
<path d="M706.1,783.8 703.4,785.1 700.5,786.2 697.4,786.9 694.2,787.2 691,787.2 688,786.9 685.2,786.2 682.7,785.1 680.5,783.8 678.9,782.3 677.7,780.5 677.1,778.6 677,776.6 677.4,774.6 678.4,772.6 679.9,770.7 681.9,769 684.2,767.5 686.9,766.2 689.8,765.2 692.9,764.5 696,764.2 699.1,764.2 702.1,764.5 704.9,765.2 707.4,766.2 709.5,767.5 711.2,769 712.4,770.7 713.1,772.6 713.2,774.6 712.8,776.6 711.8,778.6 710.4,780.5 708.4,782.3Z" fill="url(#holeg)"/>
<path d="M817.2,886.8 811.5,889.9 805.1,892.3 798.2,894 791,894.8 783.6,894.8 776.2,893.7 769.1,891.4 762.4,887.9 756.5,883.1 751.6,878 747.8,874 744.6,870.7 742.1,867.7 739.9,865.1 738.1,862.8 736.4,860.8 735,859 733.7,857.5 732.5,856 731.4,854.6 730.4,853.4 729.4,852.2 728.4,851 727.5,849.9 726.7,848.9 725.8,847.8 724.9,846.7 724.1,845.7 723.2,844.6 722.4,843.6 721.5,842.5 720.5,841.3 719.5,840.1 718.5,838.9 717.4,837.5 716.2,836.1 715,834.5 713.5,832.8 711.9,830.8 710.1,828.6 708,826 705.5,823 702.5,819.2 698.7,814.6 693.7,808.5 676.6,794.4 678.3,788.8 682.4,784.5 688.2,781.3 695.3,779.5 703.6,779.4 725.5,800 731.8,803.2 736.8,805.8 740.9,807.9 744.3,809.6 747.2,811.1 749.8,812.4 752,813.5 754,814.6 755.9,815.5 757.6,816.4 759.2,817.2 760.7,818 762.1,818.7 763.5,819.4 764.9,820.1 766.2,820.8 767.5,821.4 768.8,822.1 770.1,822.7 771.4,823.4 772.8,824.1 774.2,824.8 775.6,825.6 777.2,826.4 778.8,827.2 780.6,828.1 782.5,829.1 784.6,830.1 786.9,831.3 789.6,832.7 792.7,834.3 796.3,836.1 800.9,838.4 807,841.2 815.1,845 823.1,849.6 827.6,854.4 830.1,859.4 831.1,864.4 830.7,869.4 828.9,874.3 826.1,878.9 822.1,883Z" fill="#fff" clip-path="url(#hw494)"/>
<path d="M1115.4,960.7 1108.9,964.9 1101.5,968.4 1093.4,971 1084.6,972.6 1075.4,973.2 1066.1,972.7 1056.7,971.1 1047.6,968.3 1038.9,964.3 1030.9,959 1023.9,952.5 1018.2,946.5 1013.5,941.6 1009.6,937.5 1006.2,934 1003.3,930.9 1000.7,928.2 998.3,925.7 996.1,923.5 994.1,921.4 992.2,919.4 990.5,917.6 988.8,915.8 987.1,914.1 985.6,912.4 984,910.8 982.4,909.2 980.9,907.6 979.3,905.9 977.8,904.3 976.1,902.6 974.5,900.9 972.7,899 970.9,897.1 968.9,895.1 966.8,892.8 964.5,890.4 962,887.8 959.1,884.8 955.9,881.4 952.1,877.5 947.7,872.9 937.6,865.6 926.3,856.5 924.2,849.9 925.2,844.1 928.3,839.1 933.2,835 939.3,831.9 946.7,830 955.1,829.5 964.7,831 977,837.7 985.8,842 993,845.4 999,848.3 1004.1,850.8 1008.6,852.9 1012.6,854.8 1016.2,856.6 1019.5,858.1 1022.6,859.6 1025.4,860.9 1028.1,862.2 1030.6,863.5 1033.1,864.6 1035.5,865.8 1037.9,866.9 1040.2,868 1042.5,869.2 1044.9,870.3 1047.2,871.4 1049.7,872.6 1052.2,873.8 1054.8,875 1057.6,876.4 1060.5,877.8 1063.7,879.3 1067.1,880.9 1070.9,882.7 1075.1,884.8 1079.9,887.1 1085.5,889.7 1092,892.9 1100,896.7 1108.2,901.3 1115.6,906.6 1121.4,912.4 1125.6,918.5 1128.3,925 1129.6,931.5 1129.5,937.9 1127.9,944.2 1125,950.2 1120.8,955.7Z M1107.6,948.2 1110.8,943.7 1112.9,938.7 1113.7,933.4 1113.1,927.9 1111.1,922.4 1107.4,917 1101.7,911.8 1092.4,906.7 1083.2,902.6 1076.2,899.5 1070.9,897 1066.8,895 1063.2,893.3 1060.2,891.8 1057.5,890.5 1055.1,889.4 1052.9,888.3 1050.9,887.3 1049,886.4 1047.2,885.6 1045.5,884.7 1043.9,884 1042.4,883.2 1040.9,882.5 1039.4,881.7 1037.9,881 1036.4,880.3 1034.9,879.6 1033.3,878.8 1031.7,878.1 1030.1,877.3 1028.4,876.4 1026.5,875.5 1024.6,874.6 1022.4,873.6 1020.1,872.4 1017.5,871.2 1014.6,869.8 1011.3,868.2 1007.4,866.3 1002.7,864 997,861.2 989.7,857.7 962.8,835.4 954.1,835.4 947.1,837.4 941.6,840.9 938.2,845.6 937.6,851.6 958.3,867 964.7,873.6 969.6,878.7 973.5,882.7 976.7,886 979.4,888.8 981.8,891.3 983.8,893.4 985.7,895.3 987.3,897 988.9,898.6 990.3,900 991.6,901.4 992.9,902.7 994.1,903.9 995.2,905.1 996.4,906.3 997.5,907.5 998.6,908.6 999.7,909.8 1000.8,910.9 1002,912.1 1003.1,913.3 1004.3,914.5 1005.6,915.8 1006.9,917.2 1008.4,918.7 1009.9,920.3 1011.6,922 1013.5,924 1015.6,926.1 1017.9,928.6 1020.7,931.5 1024,934.8 1028,938.4 1032.8,942.8 1038.9,948.3 1046.1,953.5 1053.8,957.4 1061.8,959.8 1069.7,961 1077.5,961.1 1084.9,960.2 1091.7,958.4 1097.9,955.7 1103.2,952.3Z" fill="#343434" stroke="#343434" stroke-width="0.8" fill-rule="evenodd"/>
<path d="M1115.9,959.7 1109.4,964 1102,967.5 1093.8,970.1 1085,971.8 1075.8,972.4 1066.4,971.9 1057,970.3 1047.9,967.6 1039.2,963.7 1031.1,958.5 1024,952 1018.2,945.9 1013.5,941 1009.5,936.8 1006.1,933.2 1003.1,930.1 1000.5,927.4 998.1,924.8 995.9,922.6 993.8,920.4 991.9,918.5 990.1,916.6 988.4,914.8 986.8,913.1 985.2,911.4 983.6,909.7 982,908.1 980.4,906.5 978.9,904.8 977.3,903.1 975.6,901.4 973.9,899.7 972.2,897.8 970.3,895.9 968.3,893.8 966.2,891.6 963.8,889.1 961.3,886.4 958.4,883.4 955.1,880 951.3,876 946.8,871.3 934.1,863.2 925.4,854.9 923.6,848.3 924.7,842.6 927.9,837.6 932.7,833.5 938.9,830.4 946.3,828.4 954.7,827.8 964.2,829.2 976,835.1 985.6,840.4 992.8,843.9 998.9,846.8 1004.1,849.3 1008.6,851.4 1012.6,853.4 1016.2,855.1 1019.5,856.7 1022.6,858.1 1025.5,859.5 1028.2,860.8 1030.7,862 1033.2,863.2 1035.6,864.4 1038,865.5 1040.3,866.6 1042.7,867.8 1045,868.9 1047.4,870 1049.9,871.2 1052.4,872.4 1055,873.7 1057.8,875 1060.7,876.4 1063.9,877.9 1067.4,879.6 1071.2,881.4 1075.5,883.4 1080.3,885.8 1085.9,888.4 1092.5,891.6 1100.5,895.4 1109.3,900.1 1116.6,905.4 1122.2,911.2 1126.4,917.4 1129.1,923.8 1130.3,930.4 1130.1,936.8 1128.5,943.1 1125.6,949.1 1121.3,954.7Z M1107.2,946.6 1110.4,942.1 1112.4,937.1 1113.2,931.8 1112.5,926.4 1110.4,920.9 1106.6,915.5 1100.7,910.3 1092,905.3 1083.9,901.3 1077.5,898.2 1072.4,895.7 1068.1,893.7 1064.5,891.9 1061.3,890.4 1058.6,889 1056.1,887.8 1053.8,886.7 1051.7,885.7 1049.8,884.8 1048,883.9 1046.2,883.1 1044.6,882.3 1043,881.5 1041.4,880.8 1039.9,880 1038.3,879.3 1036.8,878.5 1035.2,877.8 1033.6,877 1032,876.2 1030.3,875.4 1028.5,874.5 1026.6,873.6 1024.6,872.6 1022.4,871.6 1020,870.4 1017.4,869.1 1014.4,867.7 1010.9,866 1006.9,864.1 1002.1,861.8 996.2,858.9 988.7,855.3 962.8,834.1 954.1,834.2 947.1,836.2 941.6,839.6 938.2,844.4 937.7,850.4 959.4,866.2 965.7,872.7 970.5,877.7 974.4,881.7 977.5,884.9 980.2,887.7 982.5,890.1 984.5,892.2 986.3,894 988,895.7 989.5,897.3 990.9,898.7 992.2,900 993.4,901.3 994.6,902.5 995.7,903.7 996.9,904.9 997.9,906 999,907.1 1000.1,908.2 1001.2,909.4 1002.3,910.5 1003.5,911.7 1004.7,912.9 1005.9,914.2 1007.2,915.6 1008.6,917 1010.2,918.6 1011.8,920.3 1013.6,922.2 1015.7,924.3 1018.1,926.7 1020.8,929.5 1024,932.9 1027.9,936.4 1032.7,940.6 1038.7,946 1045.8,951.4 1053.6,955.5 1061.5,958 1069.4,959.2 1077.2,959.4 1084.5,958.5 1091.4,956.7 1097.5,954 1102.8,950.7Z" fill="#434343" stroke="#434343" stroke-width="0.8" fill-rule="evenodd"/>
<path d="M1116,958.4 1109.5,962.7 1102.1,966.2 1093.9,968.8 1085.1,970.4 1075.9,971.1 1066.5,970.6 1057.1,969 1047.9,966.3 1039.2,962.4 1031.2,957.2 1024.1,950.7 1018.3,944.6 1013.5,939.7 1009.5,935.5 1006.1,932 1003.1,928.8 1000.5,926.1 998.1,923.6 995.9,921.3 993.8,919.1 991.9,917.2 990.1,915.3 988.4,913.5 986.8,911.8 985.1,910.1 983.6,908.4 982,906.8 980.4,905.2 978.9,903.5 977.3,901.9 975.6,900.1 973.9,898.4 972.1,896.5 970.3,894.6 968.3,892.5 966.1,890.3 963.8,887.8 961.2,885.1 958.3,882.1 955.1,878.7 951.3,874.7 946.8,870 934,861.9 925.3,853.6 923.5,847.1 924.7,841.3 927.8,836.3 932.7,832.2 938.9,829.1 946.3,827.1 954.7,826.6 964.2,827.9 976,833.8 985.6,839.2 992.8,842.6 998.9,845.5 1004.1,848 1008.6,850.2 1012.6,852.1 1016.3,853.8 1019.6,855.4 1022.6,856.9 1025.5,858.2 1028.2,859.5 1030.8,860.8 1033.2,861.9 1035.7,863.1 1038,864.2 1040.4,865.4 1042.7,866.5 1045.1,867.6 1047.5,868.7 1049.9,869.9 1052.4,871.1 1055.1,872.4 1057.8,873.7 1060.8,875.1 1064,876.6 1067.4,878.3 1071.2,880.1 1075.5,882.2 1080.3,884.5 1085.9,887.1 1092.5,890.3 1100.5,894.1 1109.4,898.8 1116.7,904.1 1122.3,909.9 1126.5,916.1 1129.2,922.5 1130.4,929.1 1130.2,935.5 1128.6,941.8 1125.7,947.8 1121.4,953.4Z M1107.2,945.3 1110.5,940.8 1112.5,935.8 1113.2,930.5 1112.6,925.1 1110.4,919.6 1106.6,914.2 1100.7,909 1092.6,904.1 1085,900.1 1078.9,897 1073.9,894.4 1069.5,892.3 1065.7,890.5 1062.5,888.9 1059.6,887.6 1057.1,886.3 1054.7,885.2 1052.6,884.2 1050.6,883.2 1048.7,882.3 1046.9,881.4 1045.2,880.6 1043.6,879.8 1042,879 1040.4,878.3 1038.8,877.5 1037.2,876.7 1035.6,876 1034,875.2 1032.3,874.4 1030.5,873.5 1028.7,872.6 1026.8,871.7 1024.7,870.7 1022.4,869.6 1020,868.4 1017.2,867.1 1014.1,865.6 1010.6,863.9 1006.5,861.9 1001.5,859.5 995.5,856.6 987.7,852.8 962.8,832.9 954.1,832.9 947.1,834.9 941.6,838.4 938.2,843.1 937.6,849.1 959.4,865 965.7,871.4 970.5,876.4 974.4,880.4 977.5,883.6 980.2,886.4 982.5,888.8 984.5,890.9 986.4,892.7 988,894.4 989.5,896 990.9,897.4 992.2,898.7 993.4,900 994.6,901.2 995.8,902.4 996.9,903.6 998,904.7 999.1,905.8 1000.1,906.9 1001.2,908.1 1002.4,909.2 1003.5,910.4 1004.7,911.6 1005.9,912.9 1007.3,914.3 1008.7,915.7 1010.2,917.3 1011.8,919 1013.7,920.9 1015.7,923 1018.1,925.4 1020.8,928.2 1024.1,931.5 1028,935 1032.7,939.3 1038.7,944.7 1045.8,950.1 1053.6,954.1 1061.5,956.7 1069.4,957.9 1077.2,958.1 1084.6,957.2 1091.4,955.4 1097.6,952.7 1102.9,949.3Z" fill="#484848" stroke="#484848" stroke-width="0.8" fill-rule="evenodd"/>
<path d="M1116.1,957.1 1109.6,961.3 1102.2,964.9 1094,967.5 1085.1,969.1 1075.9,969.7 1066.5,969.3 1057.1,967.7 1047.9,965 1039.2,961.1 1031.2,955.9 1024.1,949.4 1018.3,943.3 1013.5,938.4 1009.5,934.2 1006.1,930.6 1003.1,927.5 1000.5,924.8 998.1,922.2 995.9,920 993.8,917.8 991.9,915.9 990.1,914 988.4,912.2 986.8,910.5 985.1,908.8 983.6,907.1 982,905.5 980.4,903.9 978.9,902.2 977.2,900.6 975.6,898.8 973.9,897.1 972.1,895.2 970.3,893.3 968.3,891.2 966.1,889 963.8,886.5 961.2,883.8 958.3,880.8 955,877.4 951.2,873.5 946.7,868.8 933.9,860.6 925.3,852.3 923.5,845.8 924.6,840 927.8,835.1 932.7,831 938.9,827.8 946.3,825.9 954.7,825.3 964.1,826.7 975.9,832.5 985.6,837.9 992.8,841.3 998.9,844.2 1004.1,846.7 1008.6,848.9 1012.6,850.8 1016.3,852.5 1019.6,854.1 1022.6,855.6 1025.5,856.9 1028.2,858.2 1030.8,859.5 1033.3,860.7 1035.7,861.8 1038.1,862.9 1040.4,864.1 1042.7,865.2 1045.1,866.3 1047.5,867.5 1049.9,868.6 1052.5,869.8 1055.1,871.1 1057.9,872.4 1060.8,873.8 1064,875.4 1067.5,877 1071.3,878.8 1075.6,880.9 1080.4,883.2 1086,885.9 1092.6,889 1100.6,892.8 1109.5,897.5 1116.7,902.8 1122.4,908.6 1126.6,914.8 1129.3,921.2 1130.5,927.8 1130.3,934.2 1128.7,940.5 1125.7,946.5 1121.5,952.1Z M1107.3,944 1110.5,939.4 1112.6,934.5 1113.3,929.2 1112.6,923.8 1110.5,918.3 1106.7,912.9 1100.8,907.7 1093.2,902.9 1086,898.9 1080.1,895.8 1075.3,893.2 1070.8,891 1067,889.1 1063.6,887.5 1060.7,886.1 1058.1,884.8 1055.7,883.6 1053.5,882.6 1051.4,881.6 1049.5,880.7 1047.7,879.8 1045.9,878.9 1044.2,878.1 1042.5,877.3 1040.9,876.5 1039.3,875.7 1037.6,875 1036,874.2 1034.3,873.3 1032.6,872.5 1030.8,871.6 1028.9,870.7 1026.9,869.8 1024.8,868.7 1022.4,867.6 1019.9,866.4 1017.1,865 1013.9,863.5 1010.3,861.8 1006,859.7 1000.9,857.3 994.7,854.2 986.8,850.4 962.8,831.6 954.1,831.7 947,833.7 941.6,837.1 938.2,841.8 937.6,847.8 959.4,863.7 965.7,870.2 970.5,875.1 974.4,879.1 977.5,882.4 980.2,885.1 982.5,887.5 984.5,889.6 986.4,891.4 988,893.1 989.5,894.7 990.9,896.1 992.2,897.4 993.4,898.7 994.6,899.9 995.8,901.1 996.9,902.3 998,903.4 999.1,904.5 1000.1,905.6 1001.2,906.8 1002.4,907.9 1003.5,909.1 1004.7,910.3 1006,911.6 1007.3,913 1008.7,914.4 1010.2,916 1011.8,917.7 1013.7,919.6 1015.7,921.7 1018.1,924.1 1020.8,926.9 1024.1,930.2 1028,933.7 1032.7,938 1038.7,943.4 1045.9,948.7 1053.6,952.8 1061.6,955.3 1069.5,956.6 1077.2,956.7 1084.6,955.9 1091.5,954.1 1097.6,951.4 1103,948Z" fill="#4d4d4d" stroke="#4d4d4d" stroke-width="0.8" fill-rule="evenodd"/>
<path d="M1116.2,955.7 1109.7,960 1102.2,963.5 1094,966.2 1085.2,967.8 1076,968.4 1066.6,968 1057.2,966.4 1048,963.7 1039.2,959.7 1031.2,954.6 1024.1,948.1 1018.3,942 1013.5,937.1 1009.6,932.9 1006.1,929.3 1003.1,926.2 1000.5,923.4 998.1,920.9 995.9,918.7 993.8,916.5 991.9,914.6 990.1,912.7 988.4,910.9 986.8,909.2 985.1,907.5 983.6,905.8 982,904.2 980.4,902.6 978.8,900.9 977.2,899.3 975.6,897.5 973.9,895.8 972.1,893.9 970.3,892 968.3,889.9 966.1,887.7 963.8,885.2 961.2,882.6 958.3,879.5 955,876.1 951.2,872.2 946.7,867.5 933.9,859.3 925.3,851 923.5,844.5 924.6,838.8 927.8,833.8 932.6,829.7 938.9,826.6 946.3,824.6 954.7,824 964.1,825.4 975.9,831.3 985.6,836.6 992.9,840.1 998.9,843 1004.1,845.4 1008.6,847.6 1012.7,849.5 1016.3,851.3 1019.6,852.8 1022.7,854.3 1025.5,855.7 1028.2,857 1030.8,858.2 1033.3,859.4 1035.7,860.5 1038.1,861.7 1040.4,862.8 1042.8,863.9 1045.1,865 1047.5,866.2 1050,867.3 1052.5,868.5 1055.1,869.8 1057.9,871.1 1060.9,872.5 1064.1,874.1 1067.5,875.7 1071.3,877.5 1075.6,879.6 1080.4,881.9 1086,884.6 1092.7,887.7 1100.6,891.5 1109.5,896.2 1116.8,901.5 1122.5,907.3 1126.6,913.5 1129.3,919.9 1130.6,926.4 1130.4,932.9 1128.8,939.2 1125.8,945.2 1121.6,950.8Z M1107.4,942.7 1110.6,938.1 1112.6,933.2 1113.4,927.9 1112.7,922.5 1110.6,917 1106.7,911.6 1100.9,906.4 1093.8,901.6 1086.9,897.7 1081.3,894.5 1076.7,891.9 1072.2,889.6 1068.2,887.7 1064.8,886 1061.8,884.6 1059.1,883.3 1056.6,882.1 1054.3,881 1052.2,880 1050.2,879 1048.4,878.1 1046.6,877.3 1044.8,876.4 1043.1,875.6 1041.4,874.8 1039.7,874 1038.1,873.2 1036.4,872.4 1034.6,871.5 1032.9,870.7 1031,869.8 1029.1,868.8 1027,867.8 1024.8,866.8 1022.4,865.6 1019.8,864.4 1016.9,863 1013.7,861.4 1009.9,859.6 1005.6,857.5 1000.3,855 993.9,851.9 985.8,848 962.8,830.3 954.1,830.4 947,832.4 941.6,835.8 938.1,840.5 937.6,846.6 959.4,862.4 965.7,868.9 970.5,873.8 974.4,877.8 977.5,881.1 980.2,883.8 982.5,886.2 984.5,888.3 986.4,890.1 988,891.8 989.5,893.4 990.9,894.8 992.2,896.1 993.4,897.4 994.6,898.6 995.8,899.8 996.9,901 998,902.1 999.1,903.2 1000.2,904.3 1001.3,905.5 1002.4,906.6 1003.5,907.8 1004.7,909 1006,910.3 1007.3,911.7 1008.7,913.1 1010.2,914.7 1011.9,916.4 1013.7,918.2 1015.8,920.4 1018.1,922.8 1020.8,925.6 1024.1,928.9 1028,932.4 1032.8,936.7 1038.7,942.1 1045.9,947.4 1053.7,951.5 1061.6,954 1069.5,955.3 1077.3,955.4 1084.7,954.5 1091.5,952.7 1097.7,950.1 1103,946.7Z" fill="#525252" stroke="#525252" stroke-width="0.8" fill-rule="evenodd"/>
<path d="M1116.2,954.4 1109.7,958.7 1102.3,962.2 1094.1,964.8 1085.3,966.5 1076,967.1 1066.6,966.6 1057.2,965.1 1048,962.3 1039.3,958.4 1031.2,953.3 1024.1,946.7 1018.3,940.7 1013.6,935.7 1009.6,931.6 1006.1,928 1003.1,924.9 1000.5,922.1 998.1,919.6 995.9,917.3 993.8,915.2 991.9,913.2 990.1,911.4 988.4,909.6 986.8,907.9 985.1,906.2 983.6,904.5 982,902.9 980.4,901.3 978.8,899.6 977.2,898 975.6,896.2 973.9,894.5 972.1,892.6 970.2,890.7 968.3,888.6 966.1,886.4 963.8,883.9 961.2,881.3 958.3,878.3 955,874.8 951.2,870.9 946.7,866.2 933.9,858 925.3,849.8 923.5,843.2 924.6,837.5 927.8,832.5 932.6,828.4 938.8,825.3 946.2,823.3 954.7,822.7 964.1,824.1 975.9,830 985.6,835.3 992.9,838.8 998.9,841.7 1004.1,844.2 1008.6,846.3 1012.7,848.2 1016.3,850 1019.6,851.6 1022.7,853 1025.5,854.4 1028.3,855.7 1030.8,856.9 1033.3,858.1 1035.7,859.2 1038.1,860.4 1040.5,861.5 1042.8,862.6 1045.2,863.7 1047.5,864.9 1050,866 1052.5,867.3 1055.2,868.5 1058,869.8 1060.9,871.3 1064.1,872.8 1067.6,874.4 1071.4,876.2 1075.6,878.3 1080.5,880.6 1086.1,883.3 1092.7,886.4 1100.7,890.2 1109.6,894.9 1116.9,900.2 1122.6,906 1126.7,912.2 1129.4,918.6 1130.7,925.1 1130.5,931.6 1128.9,937.9 1125.9,943.9 1121.7,949.4Z M1107.4,941.4 1110.7,936.8 1112.7,931.9 1113.4,926.6 1112.8,921.2 1110.6,915.7 1106.8,910.3 1100.9,905.1 1094.2,900.4 1087.7,896.5 1082.4,893.3 1077.9,890.6 1073.6,888.2 1069.5,886.3 1066,884.6 1062.8,883.1 1060.1,881.7 1057.5,880.5 1055.2,879.4 1053,878.4 1051,877.4 1049.1,876.5 1047.2,875.6 1045.4,874.7 1043.7,873.9 1041.9,873 1040.2,872.2 1038.5,871.4 1036.7,870.5 1035,869.7 1033.1,868.8 1031.2,867.9 1029.3,866.9 1027.1,865.9 1024.9,864.8 1022.4,863.7 1019.8,862.4 1016.8,861 1013.4,859.3 1009.6,857.5 1005.1,855.3 999.8,852.8 993.2,849.6 984.8,845.6 962.7,829.1 954.1,829.1 947,831.1 941.6,834.6 938.1,839.3 937.6,845.3 959.3,861.1 965.6,867.6 970.5,872.5 974.3,876.5 977.5,879.8 980.2,882.5 982.5,884.9 984.5,887 986.4,888.8 988,890.5 989.5,892.1 990.9,893.5 992.2,894.8 993.4,896.1 994.6,897.3 995.8,898.5 996.9,899.7 998,900.8 999.1,901.9 1000.2,903 1001.3,904.2 1002.4,905.3 1003.5,906.5 1004.7,907.7 1006,909 1007.3,910.3 1008.7,911.8 1010.2,913.4 1011.9,915.1 1013.7,916.9 1015.8,919.1 1018.1,921.5 1020.9,924.3 1024.1,927.6 1028,931.1 1032.8,935.4 1038.8,940.8 1045.9,946.1 1053.7,950.2 1061.6,952.7 1069.6,954 1077.3,954.1 1084.7,953.2 1091.6,951.4 1097.8,948.8 1103.1,945.4Z" fill="#585858" stroke="#585858" stroke-width="0.8" fill-rule="evenodd"/>
<path d="M1116.3,953.1 1109.8,957.4 1102.4,960.9 1094.1,963.5 1085.3,965.2 1076.1,965.8 1066.7,965.3 1057.2,963.7 1048,961 1039.3,957.1 1031.3,951.9 1024.1,945.4 1018.3,939.4 1013.6,934.4 1009.6,930.3 1006.2,926.7 1003.2,923.6 1000.5,920.8 998.1,918.3 995.9,916 993.8,913.9 991.9,911.9 990.1,910.1 988.4,908.3 986.8,906.6 985.1,904.9 983.6,903.2 982,901.6 980.4,900 978.8,898.3 977.2,896.7 975.6,894.9 973.9,893.2 972.1,891.3 970.2,889.4 968.2,887.3 966.1,885.1 963.8,882.7 961.2,880 958.3,877 955,873.5 951.2,869.6 946.7,864.9 933.9,856.7 925.2,848.5 923.4,841.9 924.5,836.2 927.7,831.2 932.6,827.1 938.8,824 946.2,822 954.6,821.5 964.1,822.8 975.9,828.7 985.6,834.1 992.9,837.5 998.9,840.4 1004.1,842.9 1008.7,845 1012.7,847 1016.3,848.7 1019.6,850.3 1022.7,851.7 1025.6,853.1 1028.3,854.4 1030.9,855.6 1033.3,856.8 1035.8,858 1038.1,859.1 1040.5,860.2 1042.8,861.3 1045.2,862.4 1047.6,863.6 1050,864.8 1052.6,866 1055.2,867.2 1058,868.6 1061,870 1064.1,871.5 1067.6,873.1 1071.4,875 1075.7,877 1080.5,879.3 1086.1,882 1092.8,885.1 1100.8,888.9 1109.7,893.6 1116.9,898.9 1122.6,904.7 1126.8,910.9 1129.5,917.3 1130.7,923.8 1130.5,930.3 1128.9,936.6 1126,942.6 1121.7,948.1Z M1107.5,940.1 1110.7,935.5 1112.8,930.5 1113.5,925.3 1112.9,919.9 1110.7,914.4 1106.9,909 1101,903.8 1094.7,899.2 1088.5,895.3 1083.4,892 1079.1,889.3 1074.9,886.9 1070.7,884.9 1067.1,883.1 1063.9,881.6 1061.1,880.2 1058.5,879 1056.1,877.8 1053.8,876.8 1051.8,875.8 1049.8,874.8 1047.9,873.9 1046,873 1044.2,872.1 1042.4,871.3 1040.7,870.4 1038.9,869.6 1037.1,868.7 1035.3,867.9 1033.4,867 1031.5,866 1029.4,865 1027.3,864 1025,862.9 1022.4,861.7 1019.7,860.4 1016.6,858.9 1013.2,857.3 1009.3,855.4 1004.7,853.2 999.2,850.5 992.4,847.3 983.8,843.2 962.7,827.8 954.1,827.8 947,829.8 941.5,833.3 938.1,838 937.5,844 959.3,859.8 965.6,866.3 970.5,871.3 974.3,875.2 977.5,878.5 980.2,881.2 982.5,883.6 984.5,885.7 986.4,887.5 988,889.2 989.5,890.8 990.9,892.2 992.2,893.5 993.4,894.8 994.6,896 995.8,897.2 996.9,898.4 998,899.5 999.1,900.6 1000.2,901.7 1001.3,902.9 1002.4,904 1003.5,905.2 1004.7,906.4 1006,907.7 1007.3,909 1008.7,910.5 1010.2,912 1011.9,913.8 1013.7,915.6 1015.8,917.8 1018.1,920.2 1020.9,923 1024.1,926.3 1028,929.8 1032.8,934.1 1038.8,939.5 1046,944.8 1053.7,948.9 1061.7,951.4 1069.6,952.6 1077.4,952.8 1084.8,951.9 1091.7,950.1 1097.8,947.5 1103.2,944.1Z" fill="#5f5f5f" stroke="#5f5f5f" stroke-width="0.8" fill-rule="evenodd"/>
<path d="M1116.3,951.7 1109.8,956 1102.4,959.5 1094.1,962.1 1085.3,963.8 1076.1,964.4 1066.7,963.9 1057.2,962.4 1048,959.6 1039.3,955.7 1031.3,950.5 1024.2,944 1018.3,938 1013.6,933 1009.6,928.9 1006.2,925.3 1003.2,922.2 1000.5,919.5 998.1,917 995.9,914.7 993.9,912.6 992,910.6 990.2,908.7 988.5,906.9 986.8,905.2 985.2,903.5 983.6,901.9 982,900.3 980.5,898.6 978.9,897 977.3,895.3 975.6,893.6 973.9,891.9 972.2,890 970.3,888.1 968.3,886 966.2,883.8 963.8,881.4 961.2,878.7 958.4,875.7 955.1,872.3 951.3,868.3 946.8,863.6 934.2,855.5 925.3,847.2 923.5,840.7 924.6,835 927.8,830 932.6,825.9 938.8,822.8 946.2,820.8 954.7,820.3 964.2,821.6 976.1,827.7 985.6,832.8 992.9,836.2 998.9,839.1 1004.1,841.6 1008.7,843.8 1012.7,845.7 1016.3,847.4 1019.7,849 1022.7,850.4 1025.6,851.8 1028.3,853.1 1030.9,854.3 1033.4,855.5 1035.8,856.7 1038.2,857.8 1040.5,858.9 1042.9,860 1045.2,861.2 1047.6,862.3 1050.1,863.5 1052.6,864.7 1055.2,865.9 1058,867.3 1061,868.7 1064.2,870.2 1067.6,871.8 1071.5,873.7 1075.7,875.7 1080.6,878 1086.2,880.7 1092.8,883.8 1100.8,887.6 1109.6,892.3 1116.9,897.6 1122.6,903.4 1126.8,909.6 1129.5,916 1130.7,922.5 1130.5,929 1128.9,935.2 1126,941.2 1121.7,946.8Z M1107.6,938.8 1110.9,934.2 1112.9,929.3 1113.6,924 1113,918.6 1110.9,913.1 1107,907.7 1101.2,902.5 1095.2,897.9 1089.3,894 1084.4,890.8 1080.2,888 1076.3,885.5 1072,883.5 1068.3,881.7 1065,880.1 1062.1,878.7 1059.4,877.4 1056.9,876.2 1054.7,875.2 1052.5,874.1 1050.5,873.1 1048.5,872.2 1046.6,871.3 1044.8,870.4 1043,869.5 1041.2,868.7 1039.3,867.8 1037.5,866.9 1035.6,866 1033.7,865.1 1031.7,864.2 1029.6,863.1 1027.4,862.1 1025,860.9 1022.4,859.7 1019.6,858.4 1016.5,856.9 1013,855.2 1008.9,853.2 1004.2,851 998.6,848.3 991.7,845 982.9,840.7 962.7,826.5 954,826.6 947,828.6 941.5,832 938.1,836.7 937.5,842.7 959.2,858.5 965.5,864.9 970.4,869.9 974.2,873.9 977.4,877.2 980.1,879.9 982.4,882.3 984.5,884.4 986.3,886.2 987.9,887.9 989.4,889.5 990.8,890.9 992.1,892.3 993.4,893.5 994.6,894.7 995.7,895.9 996.8,897.1 997.9,898.2 999,899.3 1000.1,900.4 1001.2,901.6 1002.4,902.7 1003.5,903.9 1004.7,905.1 1006,906.4 1007.3,907.8 1008.7,909.2 1010.2,910.8 1011.9,912.5 1013.7,914.4 1015.8,916.5 1018.2,918.9 1020.9,921.7 1024.2,925.1 1028.1,928.6 1032.9,932.9 1038.9,938.3 1046,943.6 1053.8,947.6 1061.8,950.1 1069.7,951.4 1077.5,951.5 1084.9,950.6 1091.8,948.8 1097.9,946.2 1103.3,942.8Z" fill="#6b6b6b" stroke="#6b6b6b" stroke-width="0.8" fill-rule="evenodd"/>
<path d="M1116.2,950.3 1109.7,954.6 1102.3,958.1 1094.1,960.7 1085.3,962.3 1076,962.9 1066.6,962.5 1057.2,960.9 1048,958.1 1039.3,954.2 1031.2,949 1024.2,942.4 1018.4,936.4 1013.6,931.5 1009.7,927.4 1006.2,923.9 1003.3,920.8 1000.6,918 998.2,915.5 996,913.3 994,911.1 992.1,909.2 990.3,907.3 988.6,905.5 986.9,903.8 985.3,902.2 983.7,900.5 982.2,898.9 980.6,897.3 979,895.6 977.4,894 975.8,892.3 974.1,890.5 972.3,888.7 970.5,886.8 968.5,884.7 966.3,882.5 964,880.1 961.4,877.4 958.6,874.4 955.3,871 951.5,867.1 947,862.4 935,854.5 925.5,846 923.6,839.5 924.7,833.8 927.9,828.8 932.7,824.7 938.9,821.6 946.3,819.6 954.8,819.1 964.3,820.5 976.5,826.9 985.6,831.5 992.9,834.9 998.9,837.8 1004.1,840.3 1008.7,842.5 1012.7,844.4 1016.4,846.1 1019.7,847.7 1022.7,849.2 1025.6,850.5 1028.3,851.8 1030.9,853 1033.4,854.2 1035.8,855.4 1038.2,856.5 1040.5,857.6 1042.9,858.7 1045.2,859.9 1047.6,861 1050.1,862.2 1052.6,863.4 1055.3,864.6 1058.1,866 1061,867.4 1064.2,868.9 1067.7,870.5 1071.5,872.4 1075.8,874.4 1080.6,876.7 1086.3,879.4 1092.9,882.5 1100.9,886.3 1109.4,890.9 1116.7,896.2 1122.4,902.1 1126.6,908.2 1129.4,914.6 1130.6,921.1 1130.4,927.6 1128.9,933.8 1125.9,939.8 1121.7,945.3Z M1107.8,937.5 1111.1,933 1113.1,928 1113.9,922.8 1113.3,917.3 1111.2,911.9 1107.4,906.4 1101.6,901.2 1095.8,896.7 1090.2,892.8 1085.4,889.5 1081.3,886.7 1077.7,884.2 1073.3,882.1 1069.4,880.2 1066.1,878.6 1063.1,877.2 1060.3,875.9 1057.8,874.7 1055.5,873.5 1053.3,872.5 1051.2,871.5 1049.2,870.5 1047.2,869.6 1045.3,868.7 1043.5,867.8 1041.6,866.9 1039.8,866 1037.9,865.1 1036,864.2 1034,863.3 1031.9,862.3 1029.8,861.2 1027.5,860.2 1025.1,859 1022.4,857.7 1019.6,856.4 1016.4,854.8 1012.7,853.1 1008.6,851.1 1003.8,848.8 998,846 990.9,842.6 981.9,838.3 962.7,825.2 954,825.3 946.9,827.3 941.5,830.7 938,835.4 937.5,841.4 958.8,857 965.2,863.5 970.1,868.5 974,872.5 977.2,875.8 979.9,878.6 982.2,881 984.2,883.1 986.1,884.9 987.7,886.6 989.2,888.2 990.6,889.6 992,891 993.2,892.3 994.4,893.5 995.6,894.7 996.7,895.8 997.8,897 998.9,898.1 1000,899.2 1001.1,900.3 1002.2,901.5 1003.4,902.7 1004.6,903.9 1005.9,905.2 1007.2,906.6 1008.6,908 1010.2,909.6 1011.8,911.3 1013.7,913.2 1015.8,915.4 1018.1,917.8 1020.9,920.6 1024.2,923.9 1028.1,927.5 1032.9,931.8 1039,937.2 1046.2,942.5 1054,946.5 1061.9,949 1069.9,950.2 1077.7,950.3 1085.1,949.4 1092,947.6 1098.1,945 1103.5,941.6Z" fill="#787878" stroke="#787878" stroke-width="0.8" fill-rule="evenodd"/>
<path d="M1116.1,948.8 1109.6,953.1 1102.2,956.6 1094,959.2 1085.1,960.8 1075.9,961.4 1066.5,960.9 1057.1,959.3 1047.9,956.5 1039.2,952.5 1031.2,947.2 1024.1,940.7 1018.4,934.8 1013.7,929.9 1009.7,925.8 1006.3,922.3 1003.4,919.2 1000.7,916.5 998.3,914 996.2,911.7 994.1,909.7 992.2,907.7 990.5,905.9 988.8,904.1 987.1,902.4 985.5,900.7 983.9,899.1 982.4,897.5 980.8,895.9 979.3,894.3 977.7,892.6 976.1,890.9 974.4,889.2 972.6,887.4 970.8,885.4 968.8,883.4 966.7,881.2 964.3,878.8 961.8,876.1 958.9,873.2 955.7,869.8 951.9,865.9 947.4,861.3 936.9,853.9 925.9,844.9 923.9,838.4 924.9,832.6 928,827.7 932.9,823.6 939.1,820.5 946.5,818.5 955,818 964.5,819.5 976.7,826 985.6,830.2 992.9,833.7 998.9,836.6 1004.2,839 1008.7,841.2 1012.7,843.1 1016.4,844.8 1019.7,846.4 1022.8,847.9 1025.6,849.2 1028.3,850.5 1030.9,851.8 1033.4,852.9 1035.8,854.1 1038.2,855.2 1040.6,856.3 1042.9,857.5 1045.3,858.6 1047.7,859.7 1050.1,860.9 1052.7,862.1 1055.3,863.3 1058.1,864.7 1061.1,866.1 1064.3,867.6 1067.7,869.2 1071.6,871.1 1075.8,873.1 1080.7,875.4 1086.3,878.1 1092.9,881.2 1100.9,885 1108.9,889.6 1116.3,894.9 1122.1,900.7 1126.3,906.8 1129.1,913.2 1130.4,919.7 1130.2,926.1 1128.6,932.4 1125.7,938.4 1121.5,943.9Z M1108.1,936.4 1111.4,931.8 1113.5,926.8 1114.3,921.6 1113.7,916.1 1111.6,910.7 1107.9,905.2 1102.2,900 1096.6,895.5 1091.1,891.6 1086.5,888.2 1082.4,885.4 1078.9,882.8 1074.5,880.6 1070.6,878.8 1067.2,877.1 1064.1,875.6 1061.3,874.3 1058.7,873.1 1056.3,871.9 1054,870.9 1051.9,869.8 1049.8,868.8 1047.8,867.9 1045.9,867 1044,866.1 1042.1,865.1 1040.2,864.2 1038.3,863.3 1036.3,862.4 1034.3,861.4 1032.2,860.4 1030,859.4 1027.6,858.2 1025.1,857 1022.4,855.8 1019.5,854.3 1016.2,852.8 1012.5,851 1008.3,849 1003.3,846.6 997.4,843.8 990.1,840.3 981,836 962.7,823.9 954,824 946.9,826 941.4,829.4 938,834.1 937.4,840.1 958.2,855.5 964.7,862 969.6,867.1 973.5,871.1 976.7,874.4 979.5,877.2 981.8,879.6 983.9,881.7 985.7,883.6 987.4,885.3 988.9,886.9 990.4,888.3 991.7,889.7 993,891 994.2,892.2 995.3,893.4 996.5,894.6 997.6,895.7 998.7,896.9 999.8,898 1000.9,899.2 1002.1,900.3 1003.2,901.5 1004.5,902.8 1005.7,904.1 1007.1,905.5 1008.5,906.9 1010,908.5 1011.7,910.2 1013.6,912.2 1015.7,914.3 1018.1,916.8 1020.9,919.6 1024.2,922.9 1028.2,926.5 1033,930.9 1039.2,936.4 1046.4,941.6 1054.2,945.5 1062.1,947.9 1070.1,949.1 1077.9,949.2 1085.3,948.3 1092.2,946.5 1098.4,943.8 1103.8,940.4Z" fill="#777777" stroke="#777777" stroke-width="0.8" fill-rule="evenodd"/>
<path d="M1115.8,947.3 1109.3,951.5 1101.9,955 1093.7,957.5 1084.9,959.1 1075.7,959.7 1066.3,959.2 1056.9,957.5 1047.8,954.7 1039.1,950.7 1031.1,945.3 1024.1,938.8 1018.4,932.9 1013.7,928.1 1009.8,924.1 1006.4,920.6 1003.5,917.5 1000.9,914.8 998.5,912.4 996.4,910.1 994.4,908.1 992.5,906.1 990.7,904.3 989,902.6 987.4,900.9 985.8,899.2 984.3,897.6 982.7,896 981.2,894.4 979.6,892.8 978,891.2 976.4,889.5 974.8,887.8 973,886 971.2,884.1 969.2,882.1 967.1,879.9 964.8,877.5 962.3,874.9 959.4,871.9 956.2,868.6 952.5,864.7 948,860.1 942.7,854.6 926.5,843.9 924.3,837.3 925.2,831.5 928.3,826.6 933.1,822.5 939.4,819.4 946.8,817.5 955.2,817 964.9,818.7 976.7,824.7 985.6,828.9 992.9,832.4 999,835.3 1004.2,837.7 1008.7,839.9 1012.7,841.8 1016.4,843.5 1019.7,845.1 1022.8,846.6 1025.7,847.9 1028.4,849.2 1031,850.5 1033.4,851.6 1035.9,852.8 1038.2,853.9 1040.6,855 1042.9,856.2 1045.3,857.3 1047.7,858.4 1050.2,859.6 1052.7,860.8 1055.4,862.1 1058.1,863.4 1061.1,864.8 1064.3,866.3 1067.8,868 1071.6,869.8 1075.9,871.8 1080.7,874.1 1086.4,876.8 1093,879.9 1101,883.7 1108.2,888.2 1115.7,893.5 1121.6,899.2 1125.9,905.4 1128.7,911.8 1130,918.2 1129.9,924.6 1128.3,930.9 1125.4,936.8 1121.2,942.3Z M1108.6,935.3 1111.9,930.7 1114,925.7 1114.8,920.4 1114.2,915 1112.2,909.5 1108.6,904.1 1103.1,898.9 1097.6,894.3 1092.1,890.4 1087.5,887 1083.5,884.1 1080,881.5 1075.8,879.2 1071.8,877.3 1068.2,875.6 1065.1,874.1 1062.2,872.7 1059.6,871.5 1057.1,870.3 1054.8,869.2 1052.6,868.2 1050.5,867.2 1048.5,866.2 1046.5,865.2 1044.5,864.3 1042.6,863.4 1040.6,862.4 1038.6,861.5 1036.6,860.5 1034.6,859.6 1032.4,858.5 1030.2,857.5 1027.8,856.3 1025.2,855.1 1022.4,853.8 1019.4,852.3 1016.1,850.7 1012.3,848.9 1007.9,846.8 1002.9,844.4 996.8,841.5 989.4,838 981,834.7 962.6,822.6 953.9,822.7 946.8,824.7 941.4,828.1 937.9,832.8 937.3,838.8 957.4,853.8 963.9,860.4 968.9,865.5 972.9,869.6 976.1,873 978.9,875.8 981.3,878.2 983.4,880.4 985.2,882.3 986.9,884 988.5,885.6 989.9,887.1 991.3,888.5 992.6,889.8 993.8,891 995,892.2 996.1,893.4 997.3,894.6 998.4,895.7 999.5,896.9 1000.6,898 1001.8,899.2 1003,900.4 1004.2,901.7 1005.5,903 1006.9,904.4 1008.3,905.9 1009.9,907.5 1011.6,909.3 1013.5,911.2 1015.6,913.4 1018.1,915.9 1020.9,918.8 1024.3,922.1 1028.3,925.7 1033.2,930.2 1039.4,935.8 1046.6,940.8 1054.4,944.6 1062.4,947 1070.4,948.2 1078.2,948.2 1085.7,947.3 1092.6,945.4 1098.8,942.7 1104.2,939.3Z" fill="#747474" stroke="#747474" stroke-width="0.8" fill-rule="evenodd"/>
<path d="M1115.4,945.6 1108.9,949.8 1101.6,953.3 1093.4,955.8 1084.6,957.4 1075.4,957.9 1066,957.3 1056.7,955.6 1047.6,952.8 1038.9,948.6 1030.9,943.2 1024,936.7 1018.4,930.9 1013.8,926.1 1009.9,922.1 1006.6,918.7 1003.7,915.7 1001.1,913 998.8,910.6 996.6,908.4 994.7,906.4 992.8,904.5 991.1,902.7 989.4,900.9 987.8,899.3 986.2,897.7 984.7,896.1 983.2,894.5 981.7,892.9 980.1,891.4 978.6,889.7 977,888.1 975.3,886.4 973.6,884.6 971.8,882.7 969.8,880.7 967.8,878.6 965.5,876.2 963,873.6 960.2,870.7 957,867.4 953.3,863.6 948.9,859.1 943.6,853.6 927.4,843 924.9,836.3 925.7,830.5 928.8,825.6 933.5,821.5 939.7,818.4 947.1,816.6 955.6,816.2 965.4,818 976.7,823.4 985.6,827.6 992.9,831.1 999,834 1004.2,836.5 1008.7,838.6 1012.8,840.5 1016.4,842.3 1019.7,843.8 1022.8,845.3 1025.7,846.7 1028.4,847.9 1031,849.2 1033.5,850.4 1035.9,851.5 1038.3,852.6 1040.6,853.8 1043,854.9 1045.3,856 1047.7,857.1 1050.2,858.3 1052.7,859.5 1055.4,860.8 1058.2,862.1 1061.1,863.5 1064.3,865 1067.8,866.7 1071.6,868.5 1075.9,870.5 1080.8,872.8 1086.4,875.5 1093.1,878.6 1101.1,882.4 1107.1,886.8 1114.8,892 1120.8,897.8 1125.2,903.9 1128,910.2 1129.4,916.7 1129.3,923.1 1127.8,929.3 1124.9,935.2 1120.8,940.7Z M1109.2,934.3 1112.5,929.7 1114.6,924.7 1115.5,919.4 1115,913.9 1113.1,908.4 1109.5,903 1104.2,897.7 1098.7,893.1 1093.3,889.1 1088.7,885.7 1084.7,882.8 1081.1,880.1 1077,877.8 1072.9,875.9 1069.3,874.1 1066.1,872.6 1063.1,871.2 1060.4,869.9 1057.9,868.7 1055.5,867.6 1053.3,866.5 1051.1,865.5 1049.1,864.5 1047,863.5 1045,862.6 1043,861.6 1041,860.7 1039,859.7 1037,858.7 1034.8,857.7 1032.6,856.7 1030.3,855.6 1027.9,854.4 1025.3,853.1 1022.5,851.8 1019.4,850.3 1015.9,848.7 1012,846.8 1007.6,844.7 1002.4,842.2 996.2,839.3 988.6,835.7 981,833.5 962.6,821.3 953.9,821.4 946.8,823.4 941.3,826.8 937.9,831.5 937.3,837.5 956.2,852 962.8,858.7 967.9,863.9 971.9,868.1 975.3,871.5 978.1,874.3 980.5,876.8 982.7,879 984.6,881 986.3,882.7 987.9,884.3 989.3,885.8 990.7,887.2 992,888.6 993.2,889.8 994.5,891.1 995.6,892.3 996.8,893.5 997.9,894.6 999.1,895.8 1000.2,897 1001.4,898.2 1002.6,899.4 1003.9,900.7 1005.2,902.1 1006.6,903.5 1008.1,905 1009.7,906.6 1011.4,908.4 1013.3,910.4 1015.5,912.6 1018,915.1 1020.9,918.1 1024.3,921.4 1028.4,925.2 1033.4,929.7 1039.8,935.5 1047,940.3 1054.8,944 1062.8,946.2 1070.8,947.3 1078.7,947.3 1086.1,946.4 1093.1,944.5 1099.3,941.8 1104.7,938.3Z" fill="#717171" stroke="#717171" stroke-width="0.8" fill-rule="evenodd"/>
<path d="M1114.8,943.8 1108.4,948 1101,951.4 1092.9,953.9 1084.1,955.4 1075,955.9 1065.6,955.3 1056.3,953.5 1047.2,950.5 1038.6,946.3 1030.7,940.6 1023.9,934.2 1018.4,928.5 1013.9,923.9 1010.1,920 1006.8,916.6 1004,913.7 1001.4,911 999.1,908.7 997,906.5 995.1,904.5 993.3,902.7 991.6,900.9 989.9,899.2 988.4,897.6 986.8,896 985.3,894.4 983.8,892.9 982.3,891.3 980.8,889.8 979.3,888.2 977.7,886.6 976.1,884.9 974.4,883.2 972.6,881.3 970.7,879.4 968.7,877.3 966.5,875 964,872.4 961.2,869.6 958.1,866.4 954.5,862.6 950.2,858.2 945,852.8 928.8,842.2 925.8,835.4 926.5,829.6 929.4,824.7 934.1,820.6 940.3,817.6 947.7,815.8 956.2,815.5 966.2,817.7 976.8,822.2 985.7,826.5 992.9,829.9 999,832.8 1004.2,835.2 1008.7,837.4 1012.8,839.3 1016.4,841 1019.7,842.6 1022.8,844.1 1025.7,845.4 1028.4,846.7 1031,847.9 1033.5,849.1 1035.9,850.3 1038.3,851.4 1040.6,852.5 1043,853.6 1045.3,854.7 1047.7,855.9 1050.2,857 1052.7,858.2 1055.4,859.5 1058.1,860.8 1061.1,862.2 1064.3,863.7 1067.8,865.4 1071.6,867.2 1075.9,869.2 1080.7,871.5 1086.3,874.2 1093,877.3 1101,881.1 1105.5,885.3 1113.5,890.5 1119.6,896.2 1124.2,902.3 1127.1,908.6 1128.5,915 1128.5,921.4 1127.1,927.6 1124.2,933.5 1120.1,938.9Z M1110,933.4 1113.3,928.7 1115.5,923.7 1116.5,918.4 1116.1,912.9 1114.2,907.4 1110.8,902 1105.7,896.7 1100.3,892 1094.7,888 1090,884.5 1085.9,881.4 1082.2,878.8 1078.3,876.4 1074.1,874.4 1070.4,872.6 1067.1,871.1 1064.1,869.6 1061.3,868.3 1058.7,867.1 1056.3,865.9 1054,864.8 1051.8,863.8 1049.7,862.8 1047.6,861.8 1045.5,860.8 1043.5,859.8 1041.5,858.9 1039.4,857.9 1037.3,856.9 1035.1,855.8 1032.9,854.8 1030.5,853.7 1028,852.5 1025.3,851.2 1022.5,849.8 1019.3,848.3 1015.8,846.6 1011.8,844.8 1007.3,842.6 1002,840.1 995.6,837.1 987.9,833.4 981,832.2 962.5,820 953.8,820 946.7,822.1 941.3,825.5 937.8,830.2 937.2,836.2 954.5,849.9 961.3,856.8 966.5,862.1 970.6,866.4 974.1,869.9 976.9,872.8 979.4,875.4 981.6,877.6 983.6,879.6 985.3,881.4 987,883.1 988.5,884.6 989.9,886 991.2,887.4 992.5,888.7 993.7,890 994.9,891.2 996.1,892.4 997.3,893.6 998.5,894.8 999.6,896 1000.9,897.3 1002.1,898.5 1003.4,899.9 1004.7,901.2 1006.2,902.7 1007.7,904.3 1009.3,905.9 1011.1,907.8 1013.1,909.8 1015.3,912.1 1017.9,914.7 1020.8,917.7 1024.3,921.1 1028.6,924.9 1033.7,929.6 1040.3,935.6 1047.5,940.1 1055.3,943.5 1063.3,945.7 1071.4,946.7 1079.3,946.7 1086.8,945.6 1093.8,943.7 1100,940.9 1105.5,937.5Z" fill="#6e6e6e" stroke="#6e6e6e" stroke-width="0.8" fill-rule="evenodd"/>
<path d="M1113.7,941.7 1107.3,945.8 1100,949.1 1092,951.6 1083.3,953 1074.2,953.4 1064.9,952.7 1055.6,950.8 1046.6,947.6 1038.1,943.2 1030.2,937.1 1023.7,931 1018.4,925.5 1014,921 1010.3,917.2 1007.2,914 1004.4,911.1 1002,908.6 999.7,906.3 997.7,904.3 995.8,902.3 994.1,900.5 992.4,898.8 990.8,897.2 989.3,895.6 987.8,894.1 986.4,892.6 984.9,891.1 983.5,889.6 982,888.1 980.5,886.6 979,885 977.4,883.4 975.8,881.7 974.1,879.9 972.2,878 970.2,876 968.1,873.7 965.7,871.3 963,868.5 960,865.4 956.5,861.8 952.3,857.5 947.2,852.3 931.4,842 927.4,834.9 927.7,829 930.5,824 935.1,820 941.2,817.1 948.6,815.4 957.3,815.3 967.7,818.1 977.3,821.6 986.1,825.8 993.2,829.2 999.2,832 1004.4,834.5 1008.9,836.6 1012.9,838.5 1016.4,840.2 1019.7,841.8 1022.8,843.2 1025.6,844.5 1028.3,845.8 1030.8,847 1033.3,848.2 1035.7,849.3 1038,850.4 1040.3,851.5 1042.7,852.6 1045,853.7 1047.4,854.8 1049.8,856 1052.3,857.2 1054.9,858.4 1057.7,859.7 1060.6,861.1 1063.7,862.6 1067.2,864.2 1070.9,866 1075.2,868 1079.9,870.3 1085.5,872.9 1092,876 1099.9,879.8 1102.6,883.8 1111.2,888.9 1117.6,894.5 1122.4,900.6 1125.5,906.8 1127.1,913.2 1127.1,919.5 1125.8,925.6 1123,931.5 1119,936.9Z M1111.2,932.8 1114.7,928.1 1117,923 1118,917.7 1117.7,912.1 1116.1,906.6 1112.9,901.1 1108.2,895.8 1102.8,891.1 1096.8,886.8 1091.7,883.2 1087.3,880.1 1083.4,877.4 1079.6,875 1075.3,872.9 1071.5,871.1 1068.1,869.5 1065,868.1 1062.2,866.7 1059.5,865.5 1057.1,864.3 1054.7,863.2 1052.5,862.1 1050.3,861.1 1048.2,860.1 1046.1,859.1 1044,858.1 1041.9,857.1 1039.8,856.1 1037.6,855 1035.4,854 1033.1,852.9 1030.7,851.8 1028.1,850.5 1025.4,849.2 1022.5,847.8 1019.2,846.3 1015.6,844.6 1011.6,842.7 1006.9,840.5 1001.5,837.9 995.1,834.8 987.1,831 974.4,823.2 962.4,818.6 953.7,818.7 946.6,820.7 941.2,824.1 937.7,828.8 937,834.8 954.5,848.6 958.8,854.5 964.2,860 968.5,864.5 972,868.1 975,871.2 977.6,873.8 979.9,876.1 981.9,878.2 983.8,880.1 985.5,881.8 987,883.4 988.5,884.9 989.9,886.3 991.2,887.7 992.5,889 993.7,890.3 995,891.6 996.2,892.8 997.4,894.1 998.7,895.3 999.9,896.6 1001.2,897.9 1002.6,899.3 1004,900.8 1005.4,902.3 1007,903.9 1008.7,905.6 1010.6,907.6 1012.7,909.7 1015,912 1017.7,914.8 1020.7,917.9 1024.4,921.4 1028.8,925.4 1034.2,930.4 1041.1,936.8 1048.2,940.5 1056.1,943.7 1064.2,945.7 1072.3,946.5 1080.2,946.4 1087.8,945.3 1094.8,943.3 1101.2,940.5 1106.7,936.9Z" fill="#6b6b6b" stroke="#6b6b6b" stroke-width="0.8" fill-rule="evenodd"/>
<path d="M975.9,850.9 1074.4,898.5 1081,880.3 982.1,833.1Z" fill="url(#gateg)"/>
<clipPath id="hw1223"><path d="M971.4,841.4 968.8,842.8 966,843.9 962.9,844.7 959.6,845.1 956.3,845.1 953.1,844.7 950,843.9 947.2,842.8 944.7,841.4 942.6,839.7 941,837.8 940,835.7 939.5,833.5 939.6,831.3 940.2,829.2 941.4,827.1 943.1,825.3 945.2,823.6 947.7,822.2 950.6,821.1 953.6,820.4 956.8,820 960.1,820 963.2,820.4 966.3,821.1 969.1,822.2 971.5,823.6 973.6,825.3 975.2,827.1 976.3,829.2 976.9,831.3 976.9,833.5 976.3,835.7 975.1,837.8 973.5,839.7Z"/></clipPath>
<path d="M971.4,841.4 968.8,842.8 966,843.9 962.9,844.7 959.6,845.1 956.3,845.1 953.1,844.7 950,843.9 947.2,842.8 944.7,841.4 942.6,839.7 941,837.8 940,835.7 939.5,833.5 939.6,831.3 940.2,829.2 941.4,827.1 943.1,825.3 945.2,823.6 947.7,822.2 950.6,821.1 953.6,820.4 956.8,820 960.1,820 963.2,820.4 966.3,821.1 969.1,822.2 971.5,823.6 973.6,825.3 975.2,827.1 976.3,829.2 976.9,831.3 976.9,833.5 976.3,835.7 975.1,837.8 973.5,839.7Z" fill="url(#holeg)"/>
<path d="M1103.2,952.4 1097.9,955.8 1091.7,958.5 1084.9,960.3 1077.5,961.2 1069.7,961.1 1061.8,959.9 1053.8,957.5 1046.1,953.6 1038.9,948.4 1032.8,942.9 1028,938.5 1024,934.9 1020.7,931.6 1017.9,928.7 1015.6,926.2 1013.5,924.1 1011.6,922.1 1009.9,920.4 1008.4,918.8 1006.9,917.3 1005.6,915.9 1004.3,914.6 1003.1,913.4 1002,912.2 1000.8,911 999.7,909.9 998.6,908.7 997.5,907.6 996.4,906.4 995.2,905.2 994.1,904 992.9,902.8 991.6,901.5 990.3,900.1 988.9,898.7 987.3,897.1 985.7,895.4 983.8,893.5 981.8,891.4 979.4,888.9 976.7,886.1 973.5,882.8 969.6,878.8 964.7,873.7 958.3,867.1 937.6,851.7 938.2,845.7 941.6,841 947.1,837.5 954.1,835.5 962.8,835.5 989.7,857.8 997,861.3 1002.7,864.1 1007.4,866.4 1011.3,868.3 1014.6,869.9 1017.5,871.3 1020.1,872.5 1022.4,873.7 1024.6,874.7 1026.5,875.6 1028.4,876.5 1030.1,877.4 1031.7,878.2 1033.3,878.9 1034.9,879.7 1036.4,880.4 1037.9,881.1 1039.4,881.8 1040.9,882.6 1042.4,883.3 1043.9,884.1 1045.5,884.8 1047.2,885.7 1049,886.5 1050.9,887.4 1052.9,888.4 1055.1,889.5 1057.5,890.6 1060.2,891.9 1063.2,893.4 1066.8,895.1 1070.9,897.1 1076.2,899.6 1083.2,902.7 1092.4,906.8 1101.7,911.9 1107.4,917.1 1111,922.5 1113.1,928 1113.7,933.5 1112.9,938.8 1110.8,943.8 1107.6,948.3Z" fill="#fff" clip-path="url(#hw1223)"/>
<path d="M1017.6,1037 1010.5,1041.7 1002.5,1045.6 993.8,1048.4 984.4,1050.2 974.8,1050.9 965,1050.3 955.2,1048.5 945.9,1045.4 937,1041 929,1035.2 922.1,1028 916.6,1021.4 912,1016 908.2,1011.5 904.9,1007.6 902,1004.3 899.4,1001.2 897.1,998.5 895,996 893.1,993.7 891.2,991.6 889.5,989.5 887.9,987.6 886.3,985.7 884.7,983.9 883.2,982.1 881.7,980.3 880.2,978.6 878.7,976.8 877.1,975 875.6,973.1 873.9,971.2 872.2,969.2 870.5,967.1 868.5,964.8 866.5,962.4 864.2,959.7 861.8,956.8 859,953.6 855.9,949.8 852.2,945.5 847.9,940.5 837.9,932.5 826.7,922.5 825,915.3 826.5,909 830.1,903.5 835.5,899 842.2,895.7 850,893.5 858.9,893 868.7,894.7 881.1,902 890,906.6 897.3,910.4 903.4,913.5 908.6,916.2 913.1,918.6 917.2,920.7 920.8,922.6 924.2,924.3 927.2,925.9 930.1,927.4 932.8,928.8 935.4,930.2 937.9,931.5 940.4,932.7 942.7,934 945.1,935.2 947.5,936.4 949.8,937.6 952.2,938.9 954.7,940.2 957.2,941.5 959.9,942.9 962.7,944.3 965.7,945.8 968.9,947.5 972.4,949.3 976.2,951.3 980.5,953.5 985.4,956.1 991,959 997.7,962.4 1005.7,966.6 1014.1,971.6 1021.5,977.5 1027.1,983.8 1031.1,990.6 1033.6,997.7 1034.5,1004.8 1033.9,1011.9 1031.8,1018.9 1028.4,1025.4 1023.6,1031.5Z M1010.2,1023.3 1014,1018.3 1016.5,1012.8 1017.6,1006.9 1017.4,1000.9 1015.6,994.9 1012.1,988.9 1006.6,983.2 997.1,977.6 987.8,973.1 980.7,969.7 975.3,967 971.1,964.8 967.5,962.9 964.4,961.3 961.6,959.8 959.2,958.6 957,957.4 954.9,956.3 953,955.3 951.2,954.4 949.5,953.5 947.9,952.6 946.3,951.8 944.8,951 943.3,950.2 941.8,949.4 940.2,948.6 938.7,947.8 937.1,947 935.5,946.2 933.9,945.3 932.1,944.4 930.3,943.4 928.3,942.4 926.1,941.2 923.8,940 921.2,938.6 918.2,937.1 914.8,935.3 910.9,933.2 906.1,930.8 900.3,927.7 893,923.9 866.4,899.4 857.4,899.5 849.8,901.7 843.9,905.4 840,910.6 838.9,917.2 859.4,934 865.6,941.3 870.4,946.8 874.2,951.2 877.4,954.9 880,958 882.3,960.6 884.3,963 886.1,965.1 887.7,966.9 889.2,968.7 890.6,970.3 891.9,971.8 893.1,973.2 894.3,974.6 895.4,975.9 896.5,977.2 897.6,978.4 898.7,979.7 899.7,981 900.8,982.2 901.9,983.5 903.1,984.8 904.3,986.2 905.5,987.6 906.8,989.2 908.2,990.8 909.7,992.5 911.3,994.5 913.2,996.6 915.2,998.9 917.5,1001.7 920.3,1004.8 923.5,1008.5 927.4,1012.4 932.2,1017.3 938.2,1023.4 945.3,1029.1 953.2,1033.4 961.3,1036.1 969.6,1037.4 977.7,1037.5 985.6,1036.5 992.9,1034.5 999.6,1031.5 1005.4,1027.8Z" fill="#343434" stroke="#343434" stroke-width="0.8" fill-rule="evenodd"/>
<path d="M1018.1,1036 1011,1040.8 1002.9,1044.6 994.1,1047.5 984.8,1049.4 975.1,1050 965.2,1049.5 955.5,1047.8 946,1044.8 937.2,1040.4 929.1,1034.7 922.1,1027.5 916.5,1020.9 911.9,1015.4 908,1010.8 904.6,1006.9 901.7,1003.5 899.1,1000.4 896.8,997.7 894.7,995.1 892.7,992.8 890.8,990.6 889.1,988.6 887.4,986.6 885.8,984.7 884.2,982.8 882.7,981 881.2,979.2 879.6,977.4 878.1,975.6 876.6,973.8 875,971.9 873.3,970 871.6,967.9 869.8,965.8 867.8,963.5 865.8,961.1 863.5,958.4 861,955.4 858.2,952.1 855,948.4 851.3,944 846.9,938.9 834.2,929.9 825.8,920.9 824.3,913.7 825.9,907.4 829.6,902 835,897.5 841.7,894 849.6,891.9 858.4,891.3 868.2,892.8 880.1,899.2 889.8,905 897.1,908.8 903.2,912 908.5,914.7 913.1,917.1 917.1,919.2 920.8,921.1 924.1,922.8 927.2,924.4 930.1,925.9 932.9,927.4 935.5,928.7 938,930 940.4,931.3 942.8,932.5 945.2,933.7 947.6,935 950,936.2 952.4,937.5 954.9,938.7 957.4,940.1 960.1,941.4 962.9,942.9 965.9,944.5 969.1,946.1 972.6,947.9 976.5,949.9 980.8,952.2 985.7,954.7 991.4,957.7 998.1,961.1 1006.2,965.3 1015.2,970.4 1022.4,976.3 1028,982.7 1031.9,989.5 1034.3,996.6 1035.1,1003.7 1034.5,1010.9 1032.4,1017.8 1028.9,1024.4 1024.1,1030.5Z M1009.7,1021.6 1013.4,1016.6 1015.9,1011.1 1017,1005.4 1016.7,999.4 1014.9,993.3 1011.2,987.4 1005.4,981.6 996.7,976.2 988.4,971.8 982,968.4 976.8,965.7 972.4,963.4 968.7,961.5 965.5,959.8 962.7,958.3 960.2,957 957.9,955.8 955.8,954.7 953.8,953.7 952,952.7 950.2,951.8 948.6,950.9 946.9,950.1 945.3,949.2 943.8,948.4 942.2,947.6 940.7,946.8 939.1,945.9 937.5,945.1 935.8,944.2 934.1,943.3 932.3,942.4 930.4,941.4 928.3,940.3 926.1,939.2 923.7,937.9 921,936.5 918,934.9 914.5,933.1 910.4,930.9 905.5,928.4 899.6,925.3 892,921.3 866.4,898.2 857.3,898.2 849.8,900.4 843.9,904.2 839.9,909.3 838.9,915.9 860.5,933.3 866.6,940.4 871.3,945.9 875.1,950.2 878.1,953.8 880.7,956.8 883,959.4 885,961.7 886.7,963.8 888.3,965.6 889.8,967.3 891.1,968.9 892.4,970.4 893.6,971.8 894.8,973.1 895.9,974.4 897,975.7 898,976.9 899.1,978.2 900.2,979.4 901.2,980.6 902.3,981.9 903.4,983.2 904.6,984.5 905.8,986 907.1,987.4 908.5,989 909.9,990.8 911.6,992.6 913.3,994.7 915.3,997 917.6,999.7 920.3,1002.8 923.5,1006.5 927.3,1010.3 932,1015 937.9,1021 945,1026.9 952.9,1031.4 961,1034.2 969.3,1035.5 977.4,1035.7 985.2,1034.7 992.5,1032.7 999.1,1029.8 1004.9,1026.1Z" fill="#434343" stroke="#434343" stroke-width="0.8" fill-rule="evenodd"/>
<path d="M1018.1,1034.7 1011,1039.4 1003,1043.3 994.2,1046.2 984.8,1048 975.1,1048.7 965.2,1048.2 955.5,1046.5 946,1043.4 937.2,1039.1 929.1,1033.4 922.1,1026.2 916.4,1019.5 911.8,1014.1 907.9,1009.5 904.6,1005.6 901.7,1002.2 899.1,999.1 896.7,996.3 894.6,993.8 892.6,991.5 890.8,989.3 889,987.2 887.3,985.3 885.7,983.4 884.2,981.5 882.6,979.7 881.1,977.9 879.6,976.1 878,974.3 876.5,972.5 874.9,970.6 873.2,968.7 871.5,966.6 869.7,964.5 867.8,962.2 865.7,959.8 863.4,957.1 860.9,954.1 858.1,950.8 854.9,947.1 851.2,942.7 846.9,937.6 834.1,928.6 825.7,919.5 824.2,912.4 825.8,906.1 829.5,900.7 834.9,896.2 841.6,892.7 849.5,890.6 858.3,890 868.1,891.5 880,897.9 889.7,903.7 897.1,907.5 903.2,910.7 908.4,913.4 913,915.8 917.1,917.9 920.8,919.8 924.1,921.5 927.2,923.1 930.1,924.6 932.8,926 935.5,927.4 938,928.7 940.4,930 942.8,931.2 945.2,932.4 947.6,933.7 949.9,934.9 952.4,936.1 954.8,937.4 957.4,938.8 960.1,940.1 962.9,941.6 965.9,943.1 969.1,944.8 972.6,946.6 976.5,948.6 980.8,950.9 985.7,953.4 991.4,956.3 998.1,959.8 1006.2,964 1015.2,969.1 1022.4,975 1028,981.4 1031.9,988.2 1034.3,995.2 1035.2,1002.4 1034.5,1009.5 1032.4,1016.5 1028.9,1023.1 1024.1,1029.2Z M1009.8,1020.3 1013.5,1015.3 1015.9,1009.8 1017.1,1004 1016.7,998 1014.9,992 1011.2,986.1 1005.4,980.3 997.3,975 989.5,970.6 983.3,967.2 978.3,964.4 973.8,962 970,960 966.7,958.3 963.8,956.8 961.2,955.4 958.8,954.2 956.7,953.1 954.7,952 952.8,951 951,950.1 949.2,949.2 947.5,948.3 945.9,947.4 944.3,946.6 942.7,945.8 941.1,944.9 939.5,944.1 937.8,943.2 936.1,942.3 934.3,941.4 932.5,940.4 930.5,939.4 928.4,938.3 926.1,937.1 923.6,935.8 920.8,934.3 917.7,932.7 914.1,930.8 909.9,928.6 904.9,926 898.8,922.8 891,918.7 866.3,896.9 857.3,896.9 849.7,899.1 843.8,902.9 839.9,908 838.8,914.6 860.4,932 866.6,939.1 871.3,944.6 875,948.9 878.1,952.5 880.7,955.5 882.9,958.1 884.9,960.4 886.7,962.5 888.3,964.3 889.7,966 891.1,967.6 892.4,969.1 893.6,970.5 894.7,971.8 895.8,973.1 896.9,974.4 898,975.6 899.1,976.8 900.1,978.1 901.2,979.3 902.3,980.6 903.4,981.9 904.6,983.2 905.8,984.6 907.1,986.1 908.4,987.7 909.9,989.4 911.5,991.3 913.3,993.4 915.3,995.7 917.6,998.4 920.3,1001.5 923.4,1005.1 927.3,1009 932,1013.7 937.9,1019.6 945,1025.5 952.8,1030 961,1032.8 969.2,1034.2 977.4,1034.4 985.2,1033.4 992.5,1031.4 999.1,1028.5 1004.9,1024.7Z" fill="#484848" stroke="#484848" stroke-width="0.8" fill-rule="evenodd"/>
<path d="M1018.1,1033.4 1011,1038.1 1003,1042 994.2,1044.9 984.8,1046.7 975.1,1047.4 965.2,1046.9 955.5,1045.1 946,1042.1 937.1,1037.8 929.1,1032.1 922.1,1024.9 916.4,1018.2 911.8,1012.8 907.9,1008.2 904.5,1004.3 901.6,1000.8 899,997.8 896.7,995 894.5,992.5 892.6,990.2 890.7,988 889,985.9 887.3,984 885.7,982.1 884.1,980.2 882.6,978.4 881,976.6 879.5,974.8 878,973 876.4,971.2 874.8,969.3 873.2,967.3 871.5,965.3 869.6,963.2 867.7,960.9 865.6,958.4 863.3,955.8 860.8,952.8 858,949.5 854.8,945.8 851.1,941.4 846.8,936.3 834,927.3 825.6,918.2 824.2,911.1 825.7,904.8 829.4,899.4 834.8,894.9 841.6,891.4 849.4,889.3 858.3,888.7 868,890.2 880,896.6 889.7,902.4 897,906.2 903.1,909.4 908.4,912.1 913,914.5 917.1,916.6 920.7,918.5 924.1,920.2 927.2,921.8 930.1,923.3 932.8,924.7 935.4,926.1 937.9,927.4 940.4,928.7 942.8,929.9 945.2,931.1 947.5,932.4 949.9,933.6 952.3,934.8 954.8,936.1 957.4,937.4 960.1,938.8 962.9,940.3 965.9,941.8 969.1,943.5 972.6,945.3 976.5,947.3 980.8,949.6 985.7,952.1 991.4,955 998.1,958.5 1006.2,962.7 1015.2,967.8 1022.5,973.7 1028,980.1 1032,986.9 1034.4,993.9 1035.2,1001.1 1034.6,1008.2 1032.5,1015.2 1029,1021.8 1024.1,1027.9Z M1009.8,1019 1013.5,1014 1015.9,1008.5 1017.1,1002.7 1016.8,996.7 1014.9,990.7 1011.2,984.7 1005.4,979 997.8,973.7 990.5,969.4 984.6,965.9 979.7,963 975.2,960.6 971.3,958.6 967.9,956.8 964.9,955.3 962.2,953.9 959.8,952.6 957.6,951.4 955.5,950.3 953.5,949.3 951.7,948.4 949.9,947.4 948.2,946.5 946.5,945.6 944.8,944.8 943.2,943.9 941.5,943.1 939.8,942.2 938.1,941.3 936.4,940.4 934.6,939.4 932.7,938.4 930.6,937.4 928.5,936.2 926.1,935 923.5,933.7 920.7,932.2 917.5,930.5 913.8,928.6 909.5,926.3 904.3,923.7 898,920.4 890,916.2 866.2,895.6 857.2,895.6 849.7,897.8 843.7,901.6 839.8,906.7 838.8,913.3 860.4,930.7 866.5,937.8 871.2,943.2 874.9,947.6 878,951.2 880.6,954.2 882.9,956.8 884.9,959.1 886.6,961.1 888.2,963 889.7,964.7 891,966.3 892.3,967.7 893.5,969.1 894.7,970.5 895.8,971.8 896.9,973 897.9,974.3 899,975.5 900.1,976.7 901.1,978 902.2,979.2 903.3,980.5 904.5,981.9 905.7,983.3 907,984.8 908.4,986.4 909.9,988.1 911.5,990 913.3,992.1 915.3,994.4 917.6,997 920.2,1000.1 923.4,1003.8 927.3,1007.7 931.9,1012.4 937.8,1018.3 945,1024.2 952.8,1028.7 961,1031.5 969.2,1032.9 977.4,1033 985.2,1032 992.5,1030.1 999.1,1027.1 1004.9,1023.4Z" fill="#4d4d4d" stroke="#4d4d4d" stroke-width="0.8" fill-rule="evenodd"/>
<path d="M1018.1,1032 1011,1036.8 1003,1040.6 994.2,1043.5 984.8,1045.3 975.1,1046 965.2,1045.5 955.4,1043.8 946,1040.8 937.1,1036.4 929,1030.7 922,1023.5 916.4,1016.9 911.7,1011.4 907.8,1006.9 904.5,1002.9 901.6,999.5 899,996.4 896.6,993.7 894.5,991.2 892.5,988.8 890.7,986.7 888.9,984.6 887.2,982.6 885.6,980.7 884.1,978.9 882.5,977.1 881,975.3 879.5,973.5 877.9,971.7 876.4,969.8 874.8,968 873.1,966 871.4,964 869.6,961.9 867.6,959.6 865.5,957.1 863.3,954.4 860.8,951.5 858,948.2 854.8,944.4 851.1,940.1 846.7,935 833.9,926 825.5,916.9 824.1,909.8 825.7,903.5 829.4,898.1 834.7,893.6 841.5,890.1 849.4,888 858.2,887.4 868,888.9 879.9,895.3 889.6,901.1 897,904.9 903.1,908.1 908.4,910.8 912.9,913.2 917,915.3 920.7,917.2 924,918.9 927.1,920.5 930,922 932.8,923.4 935.4,924.8 937.9,926.1 940.4,927.3 942.8,928.6 945.1,929.8 947.5,931 949.9,932.3 952.3,933.5 954.8,934.8 957.4,936.1 960,937.5 962.9,939 965.9,940.5 969.1,942.2 972.6,944 976.5,946 980.8,948.2 985.7,950.8 991.4,953.7 998.1,957.2 1006.2,961.4 1015.2,966.5 1022.5,972.3 1028,978.7 1032,985.5 1034.4,992.6 1035.2,999.8 1034.6,1006.9 1032.5,1013.8 1029,1020.4 1024.2,1026.5Z M1009.8,1017.6 1013.5,1012.6 1016,1007.2 1017.1,1001.4 1016.8,995.4 1014.9,989.4 1011.2,983.4 1005.5,977.7 998.3,972.5 991.4,968.2 985.8,964.6 981.1,961.7 976.6,959.2 972.5,957.1 969,955.3 966,953.7 963.2,952.3 960.7,951 958.4,949.8 956.3,948.7 954.3,947.6 952.4,946.6 950.5,945.7 948.8,944.8 947,943.9 945.3,943 943.6,942.1 941.9,941.2 940.2,940.3 938.5,939.4 936.7,938.5 934.8,937.5 932.8,936.5 930.7,935.4 928.5,934.2 926.1,933 923.5,931.6 920.5,930.1 917.2,928.3 913.5,926.4 909,924.1 903.7,921.3 897.2,917.9 889,913.6 866.2,894.3 857.1,894.3 849.6,896.5 843.6,900.3 839.7,905.4 838.7,912 860.3,929.4 866.4,936.5 871.1,941.9 874.9,946.3 878,949.9 880.6,952.9 882.8,955.5 884.8,957.8 886.6,959.8 888.2,961.7 889.6,963.4 891,964.9 892.3,966.4 893.5,967.8 894.6,969.2 895.7,970.5 896.8,971.7 897.9,973 899,974.2 900,975.4 901.1,976.7 902.2,977.9 903.3,979.2 904.5,980.6 905.7,982 907,983.5 908.3,985.1 909.8,986.8 911.4,988.6 913.2,990.7 915.2,993.1 917.5,995.7 920.2,998.8 923.4,1002.5 927.2,1006.3 931.9,1011 937.8,1017 944.9,1022.9 952.8,1027.4 961,1030.1 969.2,1031.5 977.4,1031.7 985.2,1030.7 992.5,1028.7 999.1,1025.8 1005,1022.1Z" fill="#525252" stroke="#525252" stroke-width="0.8" fill-rule="evenodd"/>
<path d="M1018.2,1030.7 1011,1035.4 1003,1039.3 994.2,1042.2 984.8,1044 975.1,1044.7 965.2,1044.2 955.4,1042.4 946,1039.4 937.1,1035.1 929,1029.4 922,1022.2 916.3,1015.5 911.7,1010.1 907.8,1005.5 904.4,1001.6 901.5,998.2 898.9,995.1 896.6,992.4 894.4,989.8 892.5,987.5 890.6,985.3 888.9,983.3 887.2,981.3 885.6,979.4 884,977.6 882.5,975.7 880.9,974 879.4,972.2 877.9,970.4 876.3,968.5 874.7,966.6 873.1,964.7 871.3,962.7 869.5,960.5 867.6,958.3 865.5,955.8 863.2,953.1 860.7,950.2 857.9,946.9 854.7,943.1 851,938.8 846.6,933.6 833.8,924.7 825.4,915.6 824,908.5 825.6,902.2 829.3,896.8 834.7,892.3 841.4,888.9 849.3,886.7 858.1,886.1 867.9,887.6 879.9,894 889.6,899.8 896.9,903.6 903.1,906.8 908.3,909.5 912.9,911.9 917,914 920.7,915.9 924,917.6 927.1,919.2 930,920.7 932.8,922.1 935.4,923.5 937.9,924.8 940.3,926 942.7,927.3 945.1,928.5 947.5,929.7 949.9,931 952.3,932.2 954.8,933.5 957.4,934.8 960,936.2 962.9,937.7 965.9,939.2 969.1,940.9 972.6,942.7 976.5,944.7 980.8,946.9 985.7,949.5 991.4,952.4 998.1,955.9 1006.2,960 1015.2,965.2 1022.5,971 1028.1,977.4 1032,984.2 1034.4,991.3 1035.3,998.4 1034.6,1005.5 1032.5,1012.5 1029,1019.1 1024.2,1025.2Z M1009.8,1016.3 1013.5,1011.3 1016,1005.8 1017.1,1000 1016.8,994.1 1014.9,988 1011.3,982.1 1005.5,976.3 998.8,971.2 992.2,966.9 986.8,963.4 982.3,960.4 977.9,957.9 973.8,955.7 970.2,953.8 967.1,952.2 964.2,950.7 961.7,949.4 959.3,948.2 957.1,947 955,945.9 953.1,944.9 951.2,943.9 949.4,943 947.6,942.1 945.9,941.2 944.1,940.3 942.4,939.3 940.6,938.4 938.8,937.5 936.9,936.5 935,935.5 933,934.5 930.9,933.4 928.6,932.2 926.1,930.9 923.4,929.5 920.4,927.9 917,926.1 913.1,924.1 908.6,921.8 903.1,918.9 896.5,915.5 888,911.1 866.1,893 857.1,893 849.5,895.2 843.6,899 839.6,904.1 838.6,910.7 860.2,928.1 866.4,935.2 871.1,940.6 874.8,945 877.9,948.5 880.5,951.6 882.8,954.2 884.8,956.5 886.5,958.5 888.1,960.4 889.6,962.1 890.9,963.6 892.2,965.1 893.4,966.5 894.6,967.8 895.7,969.1 896.8,970.4 897.8,971.6 898.9,972.9 900,974.1 901,975.3 902.1,976.6 903.3,977.9 904.4,979.2 905.6,980.7 906.9,982.1 908.3,983.7 909.8,985.4 911.4,987.3 913.2,989.4 915.2,991.7 917.5,994.4 920.2,997.5 923.3,1001.1 927.2,1005 931.9,1009.7 937.8,1015.6 944.9,1021.5 952.8,1026 961,1028.8 969.2,1030.2 977.3,1030.3 985.2,1029.4 992.5,1027.4 999.2,1024.5 1005,1020.7Z" fill="#585858" stroke="#585858" stroke-width="0.8" fill-rule="evenodd"/>
<path d="M1018.2,1029.3 1011.1,1034.1 1003,1037.9 994.2,1040.8 984.8,1042.6 975.1,1043.3 965.2,1042.8 955.4,1041.1 945.9,1038.1 937,1033.8 929,1028.1 922,1020.9 916.3,1014.2 911.6,1008.8 907.7,1004.2 904.4,1000.3 901.5,996.8 898.9,993.8 896.5,991 894.4,988.5 892.4,986.2 890.6,984 888.8,981.9 887.1,980 885.5,978.1 883.9,976.2 882.4,974.4 880.9,972.6 879.3,970.8 877.8,969 876.2,967.2 874.6,965.3 873,963.4 871.3,961.3 869.4,959.2 867.5,956.9 865.4,954.5 863.1,951.8 860.6,948.9 857.8,945.6 854.6,941.8 850.9,937.5 846.6,932.3 833.8,923.4 825.3,914.3 823.9,907.2 825.5,900.9 829.2,895.5 834.6,891 841.3,887.6 849.2,885.4 858.1,884.8 867.9,886.3 879.8,892.7 889.5,898.5 896.9,902.3 903,905.5 908.3,908.2 912.9,910.6 916.9,912.7 920.6,914.6 924,916.3 927.1,917.9 930,919.4 932.7,920.8 935.3,922.2 937.9,923.5 940.3,924.7 942.7,926 945.1,927.2 947.5,928.4 949.9,929.7 952.3,930.9 954.8,932.2 957.3,933.5 960,934.9 962.8,936.3 965.8,937.9 969.1,939.6 972.6,941.4 976.5,943.4 980.8,945.6 985.7,948.1 991.4,951.1 998.1,954.5 1006.2,958.7 1015.3,963.8 1022.5,969.7 1028.1,976.1 1032,982.9 1034.4,989.9 1035.3,997.1 1034.7,1004.2 1032.5,1011.1 1029,1017.7 1024.2,1023.9Z M1009.8,1015 1013.5,1010 1016,1004.5 1017.1,998.7 1016.8,992.7 1014.9,986.7 1011.3,980.7 1005.5,975 999.2,970 993,965.7 987.9,962.1 983.5,959.1 979.3,956.5 975.1,954.3 971.4,952.3 968.1,950.7 965.2,949.2 962.6,947.8 960.2,946.5 957.9,945.4 955.8,944.3 953.8,943.2 951.9,942.2 950,941.2 948.2,940.3 946.4,939.3 944.6,938.4 942.8,937.5 941,936.5 939.1,935.6 937.2,934.6 935.3,933.6 933.2,932.5 931,931.4 928.6,930.1 926.1,928.8 923.3,927.4 920.2,925.8 916.8,924 912.8,921.9 908.1,919.5 902.5,916.6 895.7,913 887,908.5 866.1,891.7 857,891.7 849.4,893.9 843.5,897.7 839.5,902.8 838.5,909.4 860.2,926.8 866.3,933.8 871,939.3 874.8,943.7 877.9,947.2 880.5,950.3 882.7,952.9 884.7,955.1 886.5,957.2 888.1,959 889.5,960.7 890.9,962.3 892.2,963.8 893.4,965.2 894.5,966.5 895.6,967.8 896.7,969.1 897.8,970.3 898.9,971.5 899.9,972.8 901,974 902.1,975.3 903.2,976.6 904.4,977.9 905.6,979.3 906.9,980.8 908.2,982.4 909.7,984.1 911.3,986 913.1,988.1 915.2,990.4 917.5,993.1 920.1,996.2 923.3,999.8 927.2,1003.7 931.8,1008.4 937.8,1014.3 944.9,1020.2 952.8,1024.7 960.9,1027.5 969.2,1028.8 977.3,1029 985.2,1028 992.5,1026 999.2,1023.1 1005,1019.4Z" fill="#5f5f5f" stroke="#5f5f5f" stroke-width="0.8" fill-rule="evenodd"/>
<path d="M1018.1,1028 1011,1032.7 1003,1036.5 994.1,1039.4 984.8,1041.2 975,1041.9 965.1,1041.4 955.3,1039.7 945.9,1036.6 937,1032.3 928.9,1026.6 921.9,1019.4 916.2,1012.8 911.6,1007.3 907.7,1002.8 904.4,998.9 901.5,995.4 898.9,992.4 896.5,989.6 894.4,987.1 892.4,984.8 890.5,982.6 888.8,980.6 887.1,978.6 885.5,976.7 883.9,974.9 882.4,973.1 880.9,971.3 879.3,969.5 877.8,967.7 876.2,965.9 874.6,964 873,962 871.3,960 869.5,957.9 867.5,955.6 865.4,953.2 863.2,950.5 860.6,947.5 857.8,944.3 854.6,940.5 851,936.2 846.6,931 834,922.2 825.3,913.1 823.9,905.9 825.5,899.6 829.2,894.2 834.5,889.7 841.3,886.3 849.2,884.1 858,883.5 867.9,885.1 879.9,891.6 889.5,897.2 896.8,901 903,904.2 908.2,906.9 912.8,909.3 916.9,911.4 920.6,913.3 923.9,915 927,916.6 930,918.1 932.7,919.5 935.3,920.9 937.8,922.2 940.3,923.4 942.7,924.7 945.1,925.9 947.5,927.1 949.8,928.3 952.3,929.6 954.8,930.9 957.3,932.2 960,933.6 962.8,935 965.8,936.6 969.1,938.2 972.6,940.1 976.5,942.1 980.8,944.3 985.7,946.8 991.4,949.8 998.1,953.2 1006.3,957.4 1015.1,962.5 1022.4,968.3 1028,974.7 1032,981.5 1034.4,988.6 1035.2,995.7 1034.6,1002.8 1032.5,1009.8 1029,1016.4 1024.2,1022.5Z M1009.9,1013.7 1013.6,1008.7 1016.1,1003.2 1017.2,997.4 1016.9,991.4 1015,985.4 1011.4,979.4 1005.6,973.7 999.7,968.7 993.8,964.4 988.9,960.8 984.6,957.8 980.7,955.1 976.3,952.8 972.6,950.9 969.2,949.1 966.3,947.6 963.5,946.2 961.1,944.9 958.7,943.7 956.6,942.6 954.5,941.5 952.5,940.5 950.6,939.5 948.7,938.5 946.9,937.5 945.1,936.6 943.2,935.6 941.4,934.7 939.5,933.7 937.5,932.7 935.5,931.6 933.4,930.5 931.1,929.3 928.7,928.1 926.1,926.7 923.3,925.3 920.1,923.6 916.5,921.8 912.4,919.6 907.6,917.2 901.9,914.2 894.9,910.6 886,906 866,890.4 856.9,890.4 849.4,892.6 843.4,896.4 839.5,901.5 838.4,908.1 860,925.4 866.1,932.5 870.8,937.9 874.6,942.3 877.7,945.9 880.3,948.9 882.6,951.5 884.5,953.8 886.3,955.9 887.9,957.7 889.4,959.4 890.7,961 892,962.5 893.2,963.9 894.4,965.2 895.5,966.5 896.6,967.8 897.7,969 898.7,970.2 899.8,971.5 900.9,972.7 902,974 903.1,975.3 904.3,976.6 905.5,978 906.8,979.5 908.2,981.1 909.6,982.8 911.3,984.7 913.1,986.8 915.1,989.1 917.4,991.8 920.1,994.9 923.3,998.6 927.1,1002.4 931.8,1007.1 937.8,1013.1 944.9,1019 952.8,1023.4 961,1026.2 969.2,1027.6 977.4,1027.7 985.2,1026.7 992.6,1024.7 999.2,1021.8 1005.1,1018.1Z" fill="#6b6b6b" stroke="#6b6b6b" stroke-width="0.8" fill-rule="evenodd"/>
<path d="M1018,1026.5 1010.9,1031.2 1002.8,1035.1 994,1037.9 984.6,1039.8 974.9,1040.4 965,1039.9 955.3,1038.1 945.8,1035.1 936.9,1030.7 928.8,1025 921.9,1017.8 916.2,1011.2 911.6,1005.8 907.7,1001.2 904.4,997.3 901.5,993.9 898.9,990.9 896.6,988.2 894.4,985.7 892.4,983.3 890.6,981.2 888.9,979.1 887.2,977.2 885.6,975.3 884,973.5 882.5,971.7 881,969.9 879.4,968.1 877.9,966.3 876.3,964.5 874.8,962.6 873.1,960.7 871.4,958.7 869.6,956.5 867.6,954.3 865.6,951.8 863.3,949.2 860.8,946.2 858,943 854.8,939.2 851.1,934.9 846.8,929.8 834.8,921.2 825.5,911.9 824,904.7 825.5,898.4 829.2,893 834.6,888.5 841.3,885.1 849.2,883 858.1,882.4 867.9,883.9 880.2,890.9 889.4,895.9 896.8,899.7 902.9,902.9 908.2,905.6 912.8,908 916.9,910.1 920.5,912 923.9,913.7 927,915.3 929.9,916.8 932.7,918.2 935.3,919.5 937.8,920.8 940.3,922.1 942.7,923.3 945.1,924.6 947.4,925.8 949.8,927 952.3,928.3 954.7,929.6 957.3,930.9 960,932.3 962.8,933.7 965.8,935.3 969.1,936.9 972.6,938.7 976.5,940.7 980.8,943 985.7,945.5 991.4,948.4 998.1,951.9 1006.3,956.1 1014.8,961.1 1022.2,967 1027.8,973.3 1031.8,980.1 1034.2,987.2 1035.1,994.3 1034.5,1001.4 1032.4,1008.3 1028.9,1014.9 1024,1021Z M1010.1,1012.4 1013.8,1007.4 1016.3,1001.9 1017.4,996.1 1017.1,990.2 1015.3,984.1 1011.7,978.2 1006,972.4 1000.3,967.5 994.6,963.2 989.9,959.6 985.8,956.4 982.1,953.7 977.6,951.4 973.7,949.4 970.3,947.6 967.3,946 964.5,944.6 961.9,943.3 959.6,942 957.3,940.9 955.2,939.8 953.2,938.7 951.2,937.7 949.3,936.7 947.4,935.7 945.5,934.7 943.6,933.8 941.7,932.8 939.8,931.8 937.8,930.7 935.7,929.7 933.5,928.5 931.2,927.3 928.8,926.1 926.1,924.7 923.2,923.2 919.9,921.5 916.3,919.6 912.1,917.4 907.2,914.9 901.3,911.8 894.2,908.1 885.1,903.4 865.9,889.1 856.8,889.1 849.3,891.3 843.3,895.1 839.4,900.2 838.3,906.8 859.5,923.9 865.7,931 870.5,936.5 874.3,940.9 877.4,944.5 880,947.5 882.3,950.2 884.3,952.5 886.1,954.5 887.7,956.4 889.1,958.1 890.5,959.7 891.8,961.2 893,962.6 894.2,963.9 895.3,965.2 896.4,966.5 897.5,967.7 898.6,969 899.6,970.2 900.7,971.5 901.8,972.7 902.9,974 904.1,975.4 905.3,976.8 906.6,978.3 908,979.9 909.5,981.7 911.2,983.5 913,985.6 915,988 917.3,990.7 920,993.8 923.2,997.4 927.1,1001.3 931.8,1006.1 937.8,1012.1 945,1017.9 952.9,1022.3 961,1025 969.3,1026.4 977.5,1026.5 985.3,1025.5 992.7,1023.5 999.4,1020.6 1005.2,1016.9Z" fill="#787878" stroke="#787878" stroke-width="0.8" fill-rule="evenodd"/>
<path d="M1017.8,1025 1010.7,1029.7 1002.6,1033.5 993.8,1036.4 984.5,1038.2 974.7,1038.8 964.9,1038.3 955.1,1036.5 945.7,1033.4 936.8,1029 928.7,1023.2 921.8,1016 916.2,1009.5 911.6,1004.1 907.7,999.6 904.4,995.7 901.5,992.3 899,989.3 896.6,986.6 894.5,984.1 892.6,981.8 890.7,979.7 889,977.6 887.3,975.7 885.7,973.8 884.2,972 882.6,970.2 881.1,968.4 879.6,966.7 878.1,964.9 876.6,963.1 875,961.2 873.3,959.3 871.6,957.3 869.8,955.2 867.9,952.9 865.8,950.5 863.6,947.9 861.1,945 858.3,941.7 855.1,938 851.5,933.7 847.1,928.6 836.6,920.6 825.8,910.7 824.2,903.5 825.7,897.2 829.4,891.8 834.7,887.3 841.5,884 849.3,881.8 858.2,881.3 868.1,882.9 880.4,890 889.4,894.6 896.7,898.4 902.9,901.6 908.1,904.3 912.7,906.6 916.8,908.7 920.5,910.6 923.9,912.4 927,914 929.9,915.5 932.6,916.9 935.3,918.2 937.8,919.5 940.2,920.8 942.7,922 945,923.3 947.4,924.5 949.8,925.7 952.2,927 954.7,928.2 957.3,929.6 960,930.9 962.8,932.4 965.8,933.9 969,935.6 972.6,937.4 976.5,939.4 980.8,941.6 985.7,944.2 991.4,947.1 998.1,950.6 1006.3,954.8 1014.3,959.8 1021.7,965.6 1027.4,971.9 1031.4,978.7 1033.9,985.7 1034.8,992.9 1034.2,1000 1032.1,1006.9 1028.6,1013.4 1023.8,1019.5Z M1010.3,1011.2 1014.1,1006.2 1016.6,1000.7 1017.8,994.9 1017.5,989 1015.7,982.9 1012.2,977 1006.6,971.2 1001,966.2 995.5,961.9 990.9,958.3 986.9,955.1 983.3,952.3 978.9,949.9 974.9,947.9 971.4,946.1 968.3,944.4 965.4,943 962.8,941.6 960.4,940.4 958.1,939.2 955.9,938 953.9,937 951.8,935.9 949.9,934.9 947.9,933.9 946,932.9 944.1,931.9 942.1,930.9 940.1,929.9 938.1,928.8 936,927.7 933.7,926.6 931.4,925.3 928.8,924 926.1,922.6 923.1,921.1 919.8,919.3 916,917.4 911.7,915.2 906.7,912.6 900.7,909.5 893.4,905.7 884.2,901 865.8,887.7 856.7,887.8 849.2,890 843.2,893.8 839.3,898.9 838.2,905.5 858.9,922.3 865.1,929.5 869.9,935 873.7,939.4 876.9,943.1 879.5,946.1 881.8,948.8 883.9,951.1 885.6,953.2 887.3,955.1 888.8,956.8 890.1,958.4 891.4,959.9 892.7,961.3 893.8,962.7 895,964 896.1,965.3 897.2,966.5 898.3,967.8 899.4,969 900.4,970.3 901.6,971.6 902.7,972.9 903.9,974.2 905.1,975.7 906.4,977.2 907.8,978.8 909.3,980.5 911,982.5 912.8,984.6 914.9,986.9 917.2,989.6 919.9,992.8 923.2,996.4 927.1,1000.4 931.9,1005.2 937.9,1011.3 945.1,1017 953,1021.3 961.2,1024 969.5,1025.3 977.7,1025.4 985.5,1024.4 992.9,1022.4 999.6,1019.4 1005.4,1015.7Z" fill="#777777" stroke="#777777" stroke-width="0.8" fill-rule="evenodd"/>
<path d="M1017.5,1023.4 1010.4,1028.1 1002.3,1031.9 993.6,1034.7 984.2,1036.5 974.5,1037.1 964.7,1036.5 954.9,1034.7 945.5,1031.6 936.6,1027.1 928.6,1021.2 921.7,1014.1 916.2,1007.6 911.6,1002.2 907.8,997.8 904.5,993.9 901.7,990.6 899.1,987.6 896.8,984.9 894.7,982.5 892.8,980.2 890.9,978 889.2,976 887.6,974.1 886,972.3 884.4,970.5 882.9,968.7 881.4,966.9 879.9,965.2 878.4,963.4 876.9,961.6 875.3,959.8 873.7,957.9 872,955.9 870.2,953.8 868.3,951.6 866.3,949.2 864,946.6 861.6,943.7 858.8,940.5 855.7,936.8 852,932.5 847.7,927.5 842.5,921.4 826.4,909.7 824.6,902.4 826,896.2 829.6,890.7 834.9,886.3 841.7,882.9 849.5,880.8 858.4,880.3 868.4,882.1 880.3,888.7 889.3,893.3 896.7,897.1 902.8,900.3 908.1,903 912.7,905.3 916.8,907.4 920.5,909.3 923.8,911.1 927,912.7 929.9,914.2 932.6,915.6 935.2,916.9 937.8,918.2 940.2,919.5 942.6,920.7 945,921.9 947.4,923.2 949.8,924.4 952.2,925.6 954.7,926.9 957.3,928.2 960,929.6 962.8,931.1 965.8,932.6 969,934.3 972.6,936.1 976.4,938.1 980.8,940.3 985.7,942.9 991.4,945.8 998.2,949.2 1006.3,953.4 1013.5,958.4 1021,964.1 1026.8,970.5 1030.9,977.2 1033.4,984.2 1034.3,991.4 1033.8,998.4 1031.7,1005.3 1028.3,1011.9 1023.5,1017.9Z M1010.7,1010.1 1014.5,1005.1 1017,999.6 1018.2,993.8 1018,987.8 1016.3,981.8 1012.8,975.8 1007.4,970 1001.9,965 996.5,960.7 992,957 988,953.8 984.4,950.9 980.2,948.5 976.1,946.4 972.5,944.5 969.3,942.9 966.4,941.4 963.7,940 961.2,938.7 958.9,937.5 956.6,936.3 954.5,935.2 952.5,934.2 950.4,933.1 948.4,932.1 946.5,931.1 944.5,930.1 942.5,929 940.5,928 938.4,926.9 936.2,925.8 933.9,924.6 931.5,923.3 928.9,922 926.1,920.5 923,919 919.6,917.2 915.8,915.2 911.4,912.9 906.3,910.3 900.1,907.1 892.6,903.2 884.1,899.7 865.7,886.4 856.7,886.5 849.1,888.7 843.1,892.4 839.2,897.6 838.1,904.1 858,920.5 864.3,927.8 869.1,933.4 873,937.9 876.2,941.6 878.9,944.7 881.2,947.4 883.3,949.7 885.1,951.8 886.7,953.7 888.2,955.5 889.6,957.1 891,958.6 892.2,960.1 893.4,961.4 894.5,962.8 895.7,964.1 896.8,965.3 897.9,966.6 899,967.9 900.1,969.1 901.2,970.4 902.4,971.8 903.6,973.2 904.8,974.6 906.1,976.1 907.6,977.8 909.1,979.6 910.8,981.5 912.6,983.6 914.7,986 917.1,988.8 919.8,991.9 923.1,995.6 927.1,999.6 931.9,1004.5 938.1,1010.7 945.3,1016.3 953.2,1020.5 961.4,1023.1 969.7,1024.3 977.9,1024.4 985.8,1023.4 993.2,1021.3 999.9,1018.4 1005.8,1014.6Z" fill="#747474" stroke="#747474" stroke-width="0.8" fill-rule="evenodd"/>
<path d="M1017,1021.7 1009.9,1026.3 1001.9,1030.1 993.2,1032.9 983.8,1034.6 974.2,1035.2 964.3,1034.6 954.6,1032.7 945.2,1029.5 936.4,1025 928.5,1019 921.7,1011.8 916.2,1005.4 911.7,1000.2 907.9,995.8 904.7,992 901.8,988.7 899.3,985.7 897.1,983.1 895,980.7 893.1,978.4 891.3,976.3 889.6,974.3 887.9,972.4 886.4,970.6 884.8,968.8 883.3,967.1 881.9,965.4 880.4,963.6 878.9,961.9 877.4,960.1 875.8,958.3 874.2,956.4 872.5,954.5 870.8,952.4 868.9,950.2 866.9,947.9 864.7,945.3 862.2,942.4 859.5,939.3 856.4,935.6 852.8,931.4 848.6,926.5 843.4,920.5 827.2,908.8 825.1,901.5 826.4,895.1 830,889.7 835.3,885.3 842,881.9 849.9,879.9 858.8,879.5 868.8,881.5 880.3,887.4 889.3,892 896.6,895.8 902.8,898.9 908.1,901.7 912.7,904 916.8,906.1 920.4,908 923.8,909.7 926.9,911.3 929.8,912.8 932.6,914.2 935.2,915.6 937.7,916.9 940.2,918.2 942.6,919.4 945,920.6 947.4,921.8 949.8,923.1 952.2,924.3 954.7,925.6 957.3,926.9 960,928.3 962.8,929.8 965.8,931.3 969,933 972.6,934.8 976.4,936.8 980.8,939 985.7,941.5 991.4,944.5 998.2,947.9 1006.3,952.1 1012.3,956.9 1020.1,962.7 1025.9,969 1030.1,975.7 1032.7,982.7 1033.7,989.8 1033.2,996.8 1031.1,1003.7 1027.7,1010.2 1023,1016.2Z M1011.2,1009.1 1015,1004.1 1017.6,998.6 1018.9,992.7 1018.8,986.7 1017.1,980.7 1013.8,974.7 1008.5,968.9 1003.1,963.9 997.7,959.5 993.1,955.7 989.1,952.4 985.5,949.6 981.4,947 977.3,944.9 973.6,943 970.3,941.3 967.3,939.7 964.6,938.3 962,937 959.6,935.8 957.4,934.6 955.2,933.5 953.1,932.4 951,931.3 949,930.3 946.9,929.2 944.9,928.2 942.9,927.1 940.8,926.1 938.6,924.9 936.4,923.8 934.1,922.6 931.6,921.3 929,919.9 926.1,918.5 923,916.9 919.5,915.1 915.6,913 911.1,910.7 905.8,908 899.5,904.8 891.9,900.8 884.1,898.4 865.6,885.1 856.6,885.1 849,887.3 843,891.1 839,896.2 838,902.8 856.7,918.6 863.2,926.1 868.1,931.8 872,936.3 875.3,940 878,943.2 880.4,945.9 882.5,948.3 884.3,950.5 886,952.4 887.5,954.2 888.9,955.8 890.3,957.4 891.6,958.8 892.8,960.2 893.9,961.6 895.1,962.9 896.2,964.2 897.3,965.5 898.4,966.8 899.6,968.1 900.7,969.4 901.9,970.8 903.1,972.2 904.4,973.7 905.8,975.2 907.2,976.9 908.8,978.7 910.5,980.7 912.3,982.8 914.5,985.3 916.9,988.1 919.7,991.3 923.1,995 927.1,999.1 932,1004.1 938.3,1010.5 945.5,1015.8 953.5,1019.8 961.7,1022.3 970.1,1023.5 978.3,1023.6 986.2,1022.5 993.6,1020.4 1000.4,1017.4 1006.3,1013.6Z" fill="#717171" stroke="#717171" stroke-width="0.8" fill-rule="evenodd"/>
<path d="M1016.3,1019.8 1009.3,1024.4 1001.3,1028.1 992.6,1030.9 983.3,1032.6 973.7,1033.1 963.9,1032.4 954.2,1030.5 944.9,1027.2 936.1,1022.5 928.2,1016.2 921.6,1009.2 916.2,1002.9 911.8,997.8 908.1,993.5 904.9,989.8 902.1,986.5 899.7,983.7 897.4,981.1 895.4,978.7 893.5,976.5 891.7,974.4 890.1,972.5 888.5,970.6 886.9,968.8 885.4,967.1 884,965.4 882.5,963.7 881.1,962 879.6,960.3 878.1,958.6 876.6,956.8 875,954.9 873.4,953 871.6,951 869.8,948.8 867.8,946.5 865.6,944 863.2,941.2 860.6,938.1 857.5,934.5 854,930.4 849.8,925.6 844.7,919.7 828.6,908.1 826,900.6 827.1,894.3 830.5,888.8 835.8,884.4 842.5,881.1 850.3,879.1 859.3,878.9 869.5,881.2 880.3,886.2 889.3,890.8 896.6,894.6 902.8,897.7 908,900.4 912.6,902.8 916.7,904.9 920.4,906.8 923.8,908.5 926.9,910.1 929.8,911.6 932.5,913 935.2,914.3 937.7,915.6 940.1,916.9 942.5,918.1 944.9,919.3 947.3,920.6 949.7,921.8 952.1,923 954.6,924.3 957.2,925.6 959.9,927 962.7,928.5 965.7,930 968.9,931.7 972.5,933.5 976.3,935.5 980.7,937.7 985.6,940.2 991.3,943.1 998,946.6 1006.2,950.8 1010.6,955.4 1018.6,961.1 1024.7,967.4 1029,974.1 1031.7,981 1032.7,988.1 1032.3,995.1 1030.3,1001.9 1027,1008.4 1022.2,1014.4Z M1012,1008.3 1015.9,1003.2 1018.5,997.6 1019.8,991.8 1019.8,985.7 1018.2,979.7 1015.1,973.7 1010.1,967.9 1004.7,962.8 999.1,958.3 994.4,954.5 990.3,951.1 986.7,948.2 982.7,945.6 978.4,943.4 974.7,941.4 971.3,939.7 968.3,938.1 965.5,936.7 962.9,935.3 960.4,934.1 958.1,932.9 955.8,931.7 953.7,930.6 951.6,929.5 949.5,928.5 947.4,927.4 945.4,926.3 943.3,925.2 941.1,924.1 938.9,923 936.6,921.8 934.3,920.6 931.7,919.3 929,917.9 926.1,916.4 922.9,914.7 919.3,912.9 915.3,910.8 910.7,908.5 905.4,905.7 898.9,902.4 891.1,898.4 884,897.1 865.5,883.7 856.4,883.8 848.9,886 842.9,889.7 838.9,894.9 837.8,901.4 855,916.5 861.5,924.1 866.6,929.9 870.6,934.6 874,938.4 876.8,941.6 879.2,944.4 881.3,946.9 883.2,949.1 884.9,951.1 886.5,952.9 888,954.6 889.3,956.2 890.6,957.7 891.9,959.1 893.1,960.5 894.3,961.8 895.4,963.2 896.6,964.5 897.7,965.8 898.9,967.2 900,968.5 901.3,969.9 902.5,971.4 903.8,972.9 905.2,974.5 906.7,976.2 908.3,978 910,980.1 912,982.3 914.2,984.8 916.6,987.7 919.5,991 923,994.7 927.1,999 932.2,1004.2 938.6,1010.7 945.9,1015.7 953.9,1019.5 962.2,1021.9 970.6,1023 978.8,1022.9 986.8,1021.8 994.3,1019.7 1001,1016.6 1007,1012.8Z" fill="#6e6e6e" stroke="#6e6e6e" stroke-width="0.8" fill-rule="evenodd"/>
<path d="M1015.2,1017.6 1008.2,1022.1 1000.3,1025.8 991.7,1028.5 982.4,1030.1 972.9,1030.5 963.2,1029.7 953.6,1027.6 944.3,1024.1 935.7,1019.2 927.9,1012.5 921.4,1005.8 916.2,999.7 912,994.7 908.4,990.6 905.3,987 902.6,983.9 900.2,981.1 898.1,978.6 896.1,976.3 894.3,974.2 892.6,972.2 890.9,970.3 889.4,968.5 887.9,966.8 886.5,965.1 885,963.4 883.6,961.8 882.2,960.2 880.8,958.5 879.4,956.8 877.9,955.1 876.4,953.3 874.8,951.5 873.1,949.5 871.3,947.4 869.4,945.2 867.3,942.8 864.9,940.1 862.3,937 859.4,933.6 856,929.6 851.9,924.9 847,919.2 831.2,907.9 827.5,900.1 828.3,893.7 831.6,888.2 836.7,883.8 843.3,880.6 851.2,878.8 860.3,878.7 870.9,881.8 880.7,885.6 889.6,890.2 896.9,893.9 902.9,897 908.1,899.7 912.7,902 916.7,904.1 920.3,906 923.7,907.7 926.7,909.2 929.6,910.7 932.3,912.1 934.9,913.4 937.4,914.7 939.8,915.9 942.2,917.2 944.6,918.4 946.9,919.6 949.3,920.8 951.7,922 954.1,923.3 956.7,924.6 959.3,925.9 962.1,927.4 965.1,928.9 968.3,930.5 971.7,932.3 975.6,934.3 979.9,936.5 984.7,939 990.3,941.9 997,945.3 1005,949.4 1007.6,953.8 1016.2,959.4 1022.6,965.6 1027.1,972.3 1029.9,979.1 1031.2,986.1 1030.8,993.1 1029,999.9 1025.7,1006.3 1021,1012.2Z M1013.2,1007.7 1017.2,1002.6 1019.9,997 1021.4,991.1 1021.5,985 1020.1,978.9 1017.2,972.8 1012.5,967 1007.2,961.8 1001.2,957.1 996.2,953.2 991.8,949.8 987.9,946.8 984,944.1 979.6,941.9 975.8,939.9 972.3,938.1 969.2,936.5 966.3,935 963.7,933.7 961.2,932.4 958.8,931.2 956.5,930 954.3,928.8 952.1,927.7 950,926.6 947.9,925.6 945.8,924.5 943.6,923.4 941.5,922.2 939.2,921.1 936.9,919.9 934.4,918.6 931.9,917.3 929.1,915.9 926.1,914.3 922.8,912.6 919.2,910.8 915.1,908.7 910.4,906.2 904.9,903.4 898.3,900.1 890.3,895.9 877.6,887.3 865.4,882.3 856.3,882.4 848.7,884.6 842.7,888.4 838.7,893.5 837.6,900 854.9,915.2 858.9,921.7 864.2,927.7 868.4,932.6 871.8,936.6 874.7,939.9 877.3,942.8 879.5,945.4 881.4,947.7 883.2,949.7 884.9,951.6 886.4,953.4 887.8,955 889.2,956.6 890.5,958.1 891.7,959.5 893,961 894.2,962.3 895.3,963.7 896.5,965.1 897.7,966.5 899,967.9 900.2,969.4 901.5,970.9 902.9,972.5 904.4,974.1 905.9,975.9 907.6,977.8 909.4,979.9 911.4,982.3 913.7,984.9 916.3,987.9 919.3,991.3 922.9,995.2 927.2,999.6 932.5,1005.1 939.2,1012.1 946.5,1016.2 954.6,1019.7 962.9,1021.9 971.4,1022.9 979.7,1022.7 987.7,1021.5 995.3,1019.3 1002.1,1016.2 1008.2,1012.3Z" fill="#6b6b6b" stroke="#6b6b6b" stroke-width="0.8" fill-rule="evenodd"/>
<path d="M879.1,916.4 978.8,968.6 985.5,949.8 885.2,898Z" fill="url(#gateg)"/>
<clipPath id="hw1262"><path d="M873.1,907.3 870.3,908.8 867.2,910 863.9,910.9 860.5,911.3 857,911.3 853.7,910.9 850.5,910 847.6,908.8 845.1,907.2 843.1,905.4 841.6,903.3 840.7,901 840.3,898.6 840.5,896.2 841.4,893.9 842.7,891.7 844.6,889.6 847,887.8 849.7,886.3 852.8,885.1 856,884.3 859.4,883.9 862.8,883.9 866.1,884.3 869.2,885.1 872.1,886.3 874.5,887.8 876.6,889.6 878.1,891.7 879.1,893.9 879.6,896.3 879.4,898.7 878.6,901 877.3,903.3 875.4,905.4Z"/></clipPath>
<path d="M873.1,907.3 870.3,908.8 867.2,910 863.9,910.9 860.5,911.3 857,911.3 853.7,910.9 850.5,910 847.6,908.8 845.1,907.2 843.1,905.4 841.6,903.3 840.7,901 840.3,898.6 840.5,896.2 841.4,893.9 842.7,891.7 844.6,889.6 847,887.8 849.7,886.3 852.8,885.1 856,884.3 859.4,883.9 862.8,883.9 866.1,884.3 869.2,885.1 872.1,886.3 874.5,887.8 876.6,889.6 878.1,891.7 879.1,893.9 879.6,896.3 879.4,898.7 878.6,901 877.3,903.3 875.4,905.4Z" fill="url(#holeg)"/>
<path d="M1005.4,1027.9 999.6,1031.6 992.9,1034.6 985.6,1036.6 977.7,1037.6 969.6,1037.5 961.3,1036.2 953.2,1033.5 945.3,1029.2 938.2,1023.5 932.2,1017.4 927.4,1012.6 923.5,1008.6 920.3,1004.9 917.5,1001.8 915.2,999.1 913.2,996.7 911.3,994.6 909.7,992.6 908.2,990.9 906.8,989.3 905.5,987.8 904.3,986.3 903.1,984.9 901.9,983.6 900.8,982.3 899.8,981.1 898.7,979.8 897.6,978.5 896.5,977.3 895.4,976 894.3,974.7 893.1,973.3 891.9,971.9 890.6,970.4 889.2,968.8 887.7,967 886.1,965.2 884.3,963.1 882.3,960.7 880,958.1 877.4,955 874.2,951.4 870.4,946.9 865.6,941.4 859.4,934.1 838.9,917.3 840,910.7 843.9,905.6 849.8,901.8 857.4,899.6 866.4,899.5 893,924 900.3,927.8 906.1,930.9 910.9,933.3 914.8,935.4 918.2,937.2 921.2,938.7 923.8,940.1 926.1,941.3 928.3,942.5 930.3,943.5 932.1,944.5 933.9,945.4 935.5,946.3 937.1,947.1 938.7,947.9 940.2,948.7 941.8,949.5 943.3,950.3 944.8,951.1 946.3,951.9 947.9,952.7 949.5,953.6 951.2,954.5 953,955.4 954.9,956.4 957,957.5 959.2,958.7 961.6,959.9 964.4,961.4 967.5,963 971.1,964.9 975.3,967.1 980.7,969.8 987.8,973.2 997.1,977.7 1006.6,983.3 1012.1,989 1015.6,995 1017.4,1001.1 1017.6,1007.1 1016.5,1012.9 1014,1018.4 1010.2,1023.4Z" fill="#fff" clip-path="url(#hw1262)"/>
<path d="M985.5,87.5L985.5,1024" stroke="#3088f2" stroke-width="1"/>
</g>
<!-- title bar -->
<rect x="0" y="0" width="1919" height="23" fill="#fff"/>
<rect x="0" y="23" width="1919" height="1" fill="#a6a6a6"/>
<rect x="2" y="3" width="16" height="16" fill="#2f89f3"/>
<path d="M11.5,9.5L18,16V19H15L9.5,13.5Z" fill="#2a7ad9"/><path d="M7.9,8H12V9.3L9.7,12.7H12V14H7.8V12.7L10.1,9.3H7.9Z" fill="#fff"/>
<text x="23" y="16" font-size="12" fill="#000" textLength="42.5" lengthAdjust="spacingAndGlyphs">Z-SUITE</text>
<rect x="1799" y="10" width="10" height="1" fill="#000"/>
<path d="M1844.5,7.5h8v8h-8zM1846.5,7.5v-2h8v8h-2" stroke="#000" stroke-width="1" fill="none"/>
<path d="M1889.5,5.5l10,10M1899.5,5.5l-10,10" stroke="#000" stroke-width="1.1"/>
<!-- menu bar -->
<rect x="0" y="24" width="1919" height="30" fill="#f7f7f7"/>
<rect x="0" y="54" width="1919" height="1" fill="#a8a8a8"/>
<path d="M13.5,36.5L9,41L13.5,45.5" stroke="#555" stroke-width="2" fill="none"/>
<path d="M30.5,36.5L35,41L30.5,45.5" stroke="#aaa" stroke-width="2" fill="none"/>
<g font-size="12" font-weight="bold" fill="#555">
<text x="51" y="45" textLength="21">File</text>
<text x="85.5" y="45" textLength="35">Model</text>
<text x="135" y="45" fill="#aaa" textLength="46" lengthAdjust="spacingAndGlyphs">Support</text>
<text x="194" y="45" textLength="28.3" lengthAdjust="spacingAndGlyphs">View</text>
<text x="235.5" y="45" textLength="26.3" lengthAdjust="spacingAndGlyphs">Help</text>
<text x="1869.5" y="43" textLength="38.8" lengthAdjust="spacingAndGlyphs">Sign in</text>
</g>
<!-- center logo -->
<g fill="#333">
<path d="M909,32H920V35L913.5,43H920V46H909V43L915.5,35H909Z"/>
</g>
<rect x="920.3" y="37.9" width="6.6" height="1.3" fill="#333"/><text x="927.6" y="46" font-size="19" fill="#333" textLength="45" lengthAdjust="spacingAndGlyphs">SUITE</text>
<!-- tab bar -->
<rect x="0" y="55" width="1919" height="28" fill="#f7f7f7"/>
<rect x="0" y="83" width="1919" height="1" fill="#d4d4d4"/>
<text x="781" y="73" font-size="11" fill="#444" textLength="111.2" lengthAdjust="spacingAndGlyphs">Zortrax_Carabiner.stl *</text>
<path d="M1678,66.5l7,7M1685,66.5l-7,7" stroke="#444" stroke-width="1.3"/>
<rect x="1694" y="55" width="1" height="28" fill="#999"/>
<path d="M1704,69h12M1710,63v12" stroke="#333" stroke-width="2"/>
<rect x="1726" y="55" width="97" height="28" fill="#1565c9"/>
<rect x="1823" y="55" width="96" height="28" fill="#318af2"/>
<g font-size="9.4" font-weight="bold" fill="#fff">
<text x="1746.5" y="73.5" textLength="56.5" lengthAdjust="spacingAndGlyphs">MY DEVICES</text>
<text x="1852" y="73.5" textLength="38.6" lengthAdjust="spacingAndGlyphs">LIBRARY</text>
</g>
<!-- left toolbar -->
<rect x="0" y="84" width="52" height="940" fill="#e8e8e8"/>
<rect x="0" y="84" width="1" height="940" fill="#d4d4d4"/>
<rect x="51" y="84" width="1" height="940" fill="#d6d6d6"/>
<rect x="3.8" y="86.9" width="45" height="39" rx="3.5" fill="#a6a6a6"/><rect x="3" y="86" width="45" height="39" rx="3.5" fill="#ffffff"/>
<rect x="3.8" y="126.9" width="45" height="39" rx="3.5" fill="#a6a6a6"/><rect x="3" y="126" width="45" height="39" rx="3.5" fill="#f6f6f6"/>
<rect x="3.8" y="166.9" width="45" height="39" rx="3.5" fill="#d0d0d0"/><rect x="3" y="166" width="45" height="39" rx="3.5" fill="#e6e6e6"/>
<rect x="3.8" y="215.9" width="45" height="39" rx="3.5" fill="#a6a6a6"/><rect x="3" y="215" width="45" height="39" rx="3.5" fill="#f6f6f6"/>
<rect x="3.8" y="255.9" width="45" height="39" rx="3.5" fill="#a6a6a6"/><rect x="3" y="255" width="45" height="39" rx="3.5" fill="#f6f6f6"/>
<rect x="3.8" y="295.9" width="45" height="39" rx="3.5" fill="#a6a6a6"/><rect x="3" y="295" width="45" height="39" rx="3.5" fill="#f6f6f6"/>
<rect x="3.8" y="335.9" width="45" height="39" rx="3.5" fill="#a6a6a6"/><rect x="3" y="335" width="45" height="39" rx="3.5" fill="#f6f6f6"/>
<rect x="3.8" y="375.9" width="45" height="39" rx="3.5" fill="#a6a6a6"/><rect x="3" y="375" width="45" height="39" rx="3.5" fill="#f6f6f6"/>
<rect x="3.8" y="424.9" width="45" height="39" rx="3.5" fill="#d0d0d0"/><rect x="3" y="424" width="45" height="39" rx="3.5" fill="#e6e6e6"/>
<rect x="3.8" y="464.9" width="45" height="39" rx="3.5" fill="#d0d0d0"/><rect x="3" y="464" width="45" height="39" rx="3.5" fill="#e6e6e6"/>
<rect x="3.8" y="504.9" width="45" height="39" rx="3.5" fill="#d0d0d0"/><rect x="3" y="504" width="45" height="39" rx="3.5" fill="#e6e6e6"/>
<rect x="3.8" y="544.9" width="45" height="39" rx="3.5" fill="#a6a6a6"/><rect x="3" y="544" width="45" height="39" rx="3.5" fill="#f8f8f8"/>
<rect x="3.8" y="584.9" width="45" height="39" rx="3.5" fill="#d0d0d0"/><rect x="3" y="584" width="45" height="39" rx="3.5" fill="#e6e6e6"/>
<rect x="3.8" y="624.9" width="45" height="39" rx="3.5" fill="#a6a6a6"/><rect x="3" y="624" width="45" height="39" rx="3.5" fill="#f8f8f8"/>
<rect x="6" y="121" width="40" height="2" fill="#2f89f3"/>
<rect x="15" y="208" width="28" height="1" fill="#d6d6de"/><rect x="15" y="210" width="28" height="1" fill="#d6d6de"/>
<rect x="15" y="418" width="28" height="1" fill="#d6d6de"/><rect x="15" y="420" width="28" height="1" fill="#d6d6de"/>
<path d="M20,99.5L32,104.8L26.6,106L25.2,111.5Z" fill="#2f89f3"/>
<path d="M19,145.5H33M26,138.5V152.5" stroke="#444" stroke-width="2"/>
<g fill="none" stroke="#aaa" stroke-width="1.6"><path d="M19.5,180H32.5M23.5,179.5V177.5H28.5V179.5"/><path d="M21.5,181V193H30.5V181M24.5,183.5V190.5M27.5,183.5V190.5"/></g>
<g stroke="#555" stroke-linecap="round" fill="none"><path d="M23.1,229.2L23.9,236" stroke-width="2.1"/><path d="M26.2,228.2L26.4,236" stroke-width="2.1"/><path d="M29.1,229.8L28.8,236" stroke-width="2.1"/><path d="M31.8,232L31.1,237" stroke-width="1.9"/><path d="M19.9,234.8L23.8,239.5" stroke-width="2.3"/></g><path d="M22.6,234.5L32,234.5L31.8,238.5L29.8,241.6L24.4,241.6L21.8,238.2Z" fill="#555"/>
<g transform="translate(25.8,274.4) scale(0.88) translate(-26,-274.7)"><g fill="none" stroke="#444" stroke-width="2.1"><path d="M20.3,276.5A6,6 0 0 1 24,269.3"/><path d="M29.5,270.5A6,6 0 0 1 31.8,277"/><path d="M29.5,280.5A6,6 0 0 1 22.8,280.3"/></g><g fill="#444"><path d="M23.5,267L27.5,268.7L24.3,271.8Z"/><path d="M33.5,275L31.4,279.2L29.4,275.8Z"/><path d="M20.5,282L20.3,277.5L24,279.5Z"/></g></g>
<path d="M26,307.5L32,311V318L26,321.5L20,318V311Z" fill="none" stroke="#444" stroke-width="1.9" stroke-linejoin="round"/><path d="M26,314.5L32,311V318L26,321.5Z" fill="#444"/><path d="M26,314.5V321.5M26,314.5L32,311" stroke="#444" stroke-width="1.5"/>
<path d="M19.8,350.3H26V358.5H19.8Z" fill="none" stroke="#555" stroke-width="1.8"/><rect x="26" y="349.4" width="6.8" height="10" fill="#555"/><rect x="25.6" y="347" width="1.2" height="14.5" fill="#555"/>
<circle cx="24.7" cy="395" r="5.2" fill="none" stroke="#444" stroke-width="1.8"/><path d="M28.5,398.8L32.2,402.3" stroke="#444" stroke-width="2.4"/><path d="M21.6,395H27.8M24.7,391.9V398.1" stroke="#444" stroke-width="1.8"/>
<g stroke="#aaa" stroke-width="1.4" fill="#aaa"><path d="M26,442.5V437M26,442.5L21.5,446M26,442.5L30.5,446" fill="none" stroke-dasharray="1.8,1.2"/><path d="M26,435L28,438H24Z" stroke="none"/><path d="M19.5,447.5L20.3,444L22.8,446.5Z" stroke="none"/><path d="M32.5,447.5L29.2,446.5L31.7,444Z" stroke="none"/><circle cx="26" cy="442.5" r="1" stroke="none"/></g>
<g fill="#aaa"><path d="M21.5,488.5L30.5,479.5" stroke="#aaa" stroke-width="1.4" stroke-dasharray="1.8,1.2"/><path d="M32,478L31.3,482.3L27.7,478.7Z"/><path d="M20,490L20.7,485.7L24.3,489.3Z"/></g>
<g fill="none" stroke="#aaa" stroke-width="1.7"><path d="M20.3,525A6,6 0 0 1 24,517.8"/><path d="M29.5,519A6,6 0 0 1 31.8,525.5"/><path d="M29.5,529A6,6 0 0 1 22.8,528.8"/></g><g fill="#aaa"><path d="M23.5,515.5L27.5,517.2L24.3,520.3Z"/><path d="M33.5,523.5L31.4,527.7L29.4,524.3Z"/><path d="M20.5,530.5L20.3,526L24,528Z"/><circle cx="25.8" cy="523.5" r="1.1"/></g>
<g fill="none" stroke="#4a4a4a" stroke-width="1.7" stroke-linecap="square"><path d="M21,561.3V557.8H24.4"/><path d="M30.9,564.6V567.9H27.6"/><path d="M28,560.6L32.8,555.8M24,565L19,570"/></g><g fill="#4a4a4a"><path d="M26.7,556L26.7,561.9L32.6,561.9Z"/><path d="M25.2,569.8L25.2,563.8L19.3,563.8Z"/></g>
<g fill="#aaa"><path d="M19.5,595.5H25.8L22.6,600.5Z"/><rect x="18" y="602.5" width="10" height="1.2"/><path d="M22.6,605.5L25.8,611H19.5Z" fill="none" stroke="#aaa" stroke-width="1.4"/><path d="M29,597A6,5.5 0 0 1 31.5,607" fill="none" stroke="#aaa" stroke-width="1.5"/><path d="M33.5,605.5L30,610L29,605.5Z"/></g>
<g fill="none" stroke="#444" stroke-width="1.6"><circle cx="17.8" cy="637.8" r="2.3"/><circle cx="17.8" cy="648" r="2.3"/><path d="M19.6,639.2L34.5,648.5M19.6,646.6L34.5,638.3"/><path d="M30,643H37" stroke-dasharray="1.2,1" stroke-width="1"/></g>
<!-- bottom bar -->
<rect x="0" y="1024" width="1919" height="1" fill="#d2d2d2"/>
<rect x="0" y="1025" width="1919" height="53" fill="#f7f7f7"/>
<rect x="0" y="1078" width="1919" height="1" fill="#1e1e1e"/>
<rect x="8" y="1035" width="284" height="37" rx="2" fill="#333"/>
<rect x="10" y="1037" width="244" height="33" rx="1.5" fill="#fff"/>
<path d="M268.5,1056.5L274,1051L279.5,1056.5" stroke="#fff" stroke-width="2.2" fill="none"/>
<text x="24" y="1057" font-size="12" fill="#999" textLength="58.5" lengthAdjust="spacingAndGlyphs">3D Printer:</text><text x="84.5" y="1057" font-size="12" fill="#444" textLength="126.5" lengthAdjust="spacingAndGlyphs">ZORTRAX M200 PLUS</text>
<rect x="306" y="1041" width="1" height="27" fill="#ccd"/>
<rect x="309" y="1041" width="1" height="27" fill="#ccd"/>
<rect x="325.5" y="1035.5" width="143" height="36" rx="2" fill="none" stroke="#cfcfcf"/>
<path d="M379,1048.5L374,1052.5L379,1056.5" stroke="#ccc" stroke-width="2" fill="none"/>
<text x="387" y="1057" font-size="12" font-weight="bold" fill="#c8c8c8" textLength="36" lengthAdjust="spacingAndGlyphs">BACK</text>
<rect x="506" y="1046" width="1225" height="2.2" fill="#d0d0d0"/>
<circle cx="506" cy="1047" r="8" fill="#2f89f3"/>
<circle cx="506" cy="1047" r="2.6" fill="#fff"/>
<g fill="#555"><circle cx="813" cy="1047" r="3"/><circle cx="1119" cy="1047" r="3"/><circle cx="1425" cy="1047" r="3"/><circle cx="1731" cy="1047" r="3"/></g>
<g font-size="9.5" fill="#555" lengthAdjust="spacingAndGlyphs">
<text x="492.2" y="1068" fill="#2f89f3" textLength="31">MODEL</text>
<text x="790.8" y="1068" textLength="44.2">ANALYSIS</text>
<text x="1099" y="1068" textLength="41.7">SUPPORT</text>
<text x="1389.2" y="1068" textLength="72.8">PRINT SETTINGS</text>
<text x="1711.6" y="1068" textLength="41">PREVIEW</text>
</g>
<rect x="1768" y="1035" width="144" height="37" rx="3" fill="#2f89f3"/>
<text x="1803" y="1057" font-size="12" font-weight="bold" fill="#fff" textLength="59" lengthAdjust="spacingAndGlyphs">ANALYSIS</text>
<path d="M1870.5,1048L1875,1052.5L1870.5,1057" stroke="#fff" stroke-width="2" fill="none"/>
<path d="M1849.4,120.3 L1888.9,135.3 L1848.9,155.0 L1808.9,135.3Z" fill="#f4f5f7"/>
<path d="M1808.9,135.3 L1848.9,155.0 L1849.1,205.0 L1814.4,179.4Z" fill="#f5f5f6"/>
<path d="M1848.9,155.0 L1888.9,135.3 L1883.9,179.4 L1849.1,205.0Z" fill="#f5f5f6"/>
<path d="M1849.4,120.3L1888.9,135.3L1883.9,179.4L1849.1,205.0L1814.4,179.4L1808.9,135.3Z" fill="none" stroke="#9cc8fb" stroke-width="1"/>
<path d="M1848.9,147.5L1856,151.2V159L1848.9,163L1842,159V151.2Z" fill="#b9d8fd"/>
<path d="M1808.9,135.3L1848.9,155.0L1888.9,135.3M1848.9,155.0L1849.1,205.0" fill="none" stroke="#3a8ff3" stroke-width="1.6"/>
<g fill="#4a97f3" font-weight="bold" opacity="0.9">
<text transform="translate(1841.5,138.5) rotate(-22) skewX(-25) scale(1,0.8)" font-size="6">TOP</text>
<text transform="translate(1822,166.5) rotate(32) skewY(8)" font-size="6.3">LEFT</text>
<text transform="translate(1860,177.5) rotate(-32) skewX(-22)" font-size="6.3" textLength="21" lengthAdjust="spacingAndGlyphs">FRONT</text>
</g>
<path d="M1809,113.6L1814.4,118.8H1813V124H1810.4V120.8H1807.6V124H1805V118.8H1803.6Z" fill="#4a4a4a"/>
<path d="M1895.5,198.0 L1895.5,200.8 L1893.6,201.3 L1893.7,201.0 L1894.6,202.7 L1892.7,204.6 L1891.0,203.7 L1891.3,203.6 L1890.8,205.5 L1888.0,205.5 L1887.5,203.6 L1887.8,203.7 L1886.1,204.6 L1884.2,202.7 L1885.1,201.0 L1885.2,201.3 L1883.3,200.8 L1883.3,198.0 L1885.2,197.5 L1885.1,197.8 L1884.2,196.1 L1886.1,194.2 L1887.8,195.1 L1887.5,195.2 L1888.0,193.3 L1890.8,193.3 L1891.3,195.2 L1891.0,195.1 L1892.7,194.2 L1894.6,196.1 L1893.7,197.8 L1893.6,197.5Z M1891.6,199.4A2.2,2.2 0 1 0 1887.2,199.4A2.2,2.2 0 1 0 1891.6,199.4Z" fill="#4a4a4a" fill-rule="evenodd"/>
</svg>
</body></html>
